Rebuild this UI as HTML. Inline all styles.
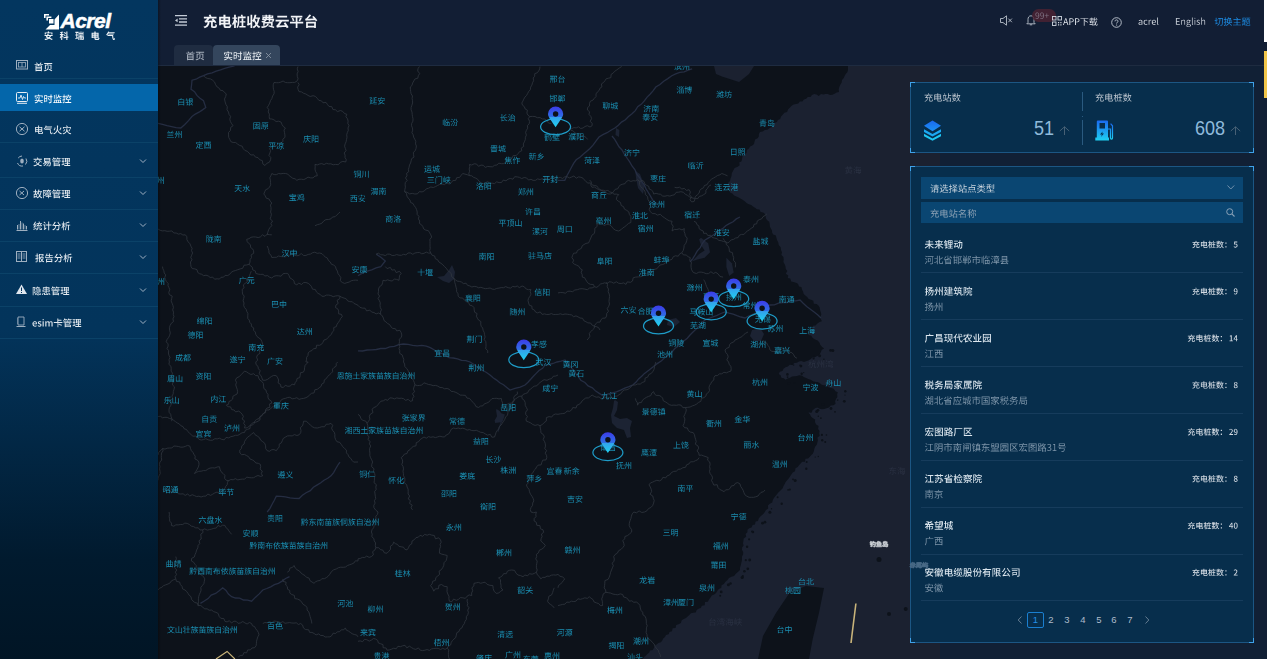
<!DOCTYPE html>
<html><head><meta charset="utf-8">
<style>
*{margin:0;padding:0;box-sizing:border-box}
html,body{width:1267px;height:659px;overflow:hidden;background:#112035;font-family:"Liberation Sans",sans-serif}
.abs{position:absolute}
#side{position:absolute;left:0;top:0;width:158px;height:659px;background:linear-gradient(to bottom,#03365f 0px,#03345b 330px,#011a2e 560px,#011525 659px)}
.sep{position:absolute;left:0;width:158px;height:1px;background:#0b4268}
#hdr{position:absolute;left:158px;top:0;width:1109px;height:66px;background:#121e34}
#map{position:absolute;left:158px;top:66px;width:782px;height:593px;background:#0d121a;overflow:hidden}
.panel{position:absolute;background:#072e4c;border:1px solid #1c5683}
.cn{position:absolute;width:5px;height:5px;border:0 solid #3fa2ea}
</style></head><body>
<svg width="0" height="0" style="position:absolute"><defs><path id="r767d" d="M22 -42l0 2-2 4 0 2-13 0 0 38 4 0 0-4 28 0 0 4 4 0 0-38-19 0 0-2 1-2 1-1 1-2zM11 -3l0-12 28 0 0 12zM11 -19l0-11 28 0 0 11z"/><path id="r94f6" d="M41 -27l0 6-14 0 0-6zM41 -30l-14 0 0-6 14 0zM23 4l1 0 0-1 2 0 2-1 3-1 5-1 0-3-9 2 0-17 4 0 2 5 6 12 3 2 4 3 2-4-1-1-4-2-3-3-1-2 2-1 1-1 4-2 2-2-3-2-1 1-2 1-3 3-2 1 0-2-3-6 11 0 0-22-22 0 0 40-2 1zM9 -42l-1 2-1 3-2 4-3 3 2 4 1-2 1-1 2-4 12 0 0-3-10 0 1-3 1-2zM10 4l0-1 1 0 1-1 2-1 3-2 4-2 0-3-7 3 0-11 7 0 0-3-7 0 0-7 6 0 0-3-14 0 0 3 4 0 0 7-7 0 0 3 7 0 0 11-1 2-1 1z"/><path id="r5170" d="M11 -40l1 1 1 2 2 2 1 2 0 2 4-2-1-2-1-1-1-2-2-2-1-2zM7 -17l0 4 35 0 0-4zM3 -2l0 3 44 0 0-3zM5 -31l0 4 40 0 0-4-12 0 1-1 2-4 2-1 2-4-4-1-4 8-3 3z"/><path id="r5dde" d="M12 -41l0 20-1 5-1 4-1 5-6 8 3 3 3-4 3-5 2-5 1-5 0-5 1-6 0-15zM26 -40l0 41 4 0 0-41zM41 -41l0 44 4 0 0-44zM6 -30l0 3-2 4 0 3-1 2-2 2 4 1 2-4 1-3 0-2 1-2 0-3zM17 -28l1 2 0 3 2 4 0 2 1 2 3-1 0-2-2-4 0-3-2-4zM31 -28l2 4 1 3 2 4 0 2 4-2-6-12z"/><path id="r5b9a" d="M11 -19l0 4-1 4-2 4-6 9 3 2 3-3 4-8 3 4 6 4 4 1 5 1 17 0 0-2 1-2-21 0 0-10 15 0 0-4-15 0 0-8 13 0 0-4-29 0 0 4 12 0 0 21-4-2-1-2-2-1-1-3-1-2 0-2 1-2 0-2zM21 -41l2 2 1 3-20 0 0 11 4 0 0-8 34 0 0 8 4 0 0-11-18 0-3-6z"/><path id="r897f" d="M3 -39l0 4 15 0 0 7-12 0 0 32 3 0 0-3 32 0 0 3 4 0 0-32-13 0 0-7 15 0 0-4zM9 -3l0-9 3 2 3-2 4-4 2-6 0-2 7 0 0 8 1 2 0 1 1 1 1 0 3 1 7 0 0 8zM9 -12l0-12 9 0-1 2 0 2-1 2-4 4zM21 -28l0-7 7 0 0 7zM32 -24l9 0 0 9-7 0-2-1z"/><path id="r56fa" d="M18 -16l14 0 0 7-14 0zM15 -19l0 13 21 0 0-13-9 0 0-6 12 0 0-3-12 0 0-6-4 0 0 6-12 0 0 3 12 0 0 6zM4 -40l0 44 4 0 0-2 34 0 0 2 4 0 0-44zM8 -2l0-34 34 0 0 34z"/><path id="r539f" d="M18 -20l21 0 0 5-21 0zM18 -28l21 0 0 5-21 0zM35 -8l2 1 1 2 2 2 1 2 3 3 3-2-3-3-1-2-2-1-2-2-1-2zM19 -10l-3 3-1 2-5 5 3 2 5-5 1-2 2-2 1-2zM7 -39l0 14-1 4 0 9-1 5-1 4-2 4 3 2 2-4 3-15 0-20 37 0 0-3zM26 -35l0 2-1 2-10 0 0 19 12 0 0 12-1 1-6 0 1 3 6 0 2-1 1-1 1-2 0-12 12 0 0-19-14 0 2-4z"/><path id="r5e73" d="M9 -32l2 4 0 3 1 2 1 1 0 2 4-1-1-2 0-2-3-6-1-1zM38 -33l-6 12 4 1 1-1 3-6 1-3 1-2zM3 -17l0 3 20 0 0 18 4 0 0-18 20 0 0-3-20 0 0-18 18 0 0-4-40 0 0 4 18 0 0 18z"/><path id="r51c9" d="M22 -25l17 0 0 7-17 0zM20 -12l-3 6-2 2-1 2-1 1 3 2 1-1 1-2 2-2 1-2 1-3 1-2zM37 -11l1 2 2 2 4 8 3-2-1-2-1-1-3-6-2-2zM2 -38l2 2 3 6 1 3 1 1 3-2 0-1-1-3-1-2-2-2-2-4zM2 0l4 1 1-2 2-6 2-3 2-6-3-1-2 3-2 6-2 3-1 2zM27 -41l1 2 1 3-14 0 0 3 31 0 0-3-13 0 0-2-2-4zM18 -29l0 14 11 0 0 15-1 0-2 1-2 0-2-1 1 4 6 0 2-1 1-1 1-2 0-15 10 0 0-14z"/><path id="r5e86" d="M23 -41l2 4 1 1-20 0 0 22-3 12-2 4 4 2 1-4 2-5 1-4 0-9 1-4 0-10 38 0 0-4-18 0 0-1-1-2-3-3zM27 -31l0 6-1 3-14 0 0 3 14 0-1 4-2 4-2 3-3 4-3 3-5 2 2 1 1 2 4-2 6-6 2-3 2-4 2-3 2 4 2 3 9 9 3 2 2-2 1-2-4-2-3-2-3-3-6-8-2-4 17 0 0-3-17 0 1-2 0-7z"/><path id="r9633" d="M23 -39l0 43 4 0 0-4 15 0 0 3 3 0 0-42zM27 -4l0-14 15 0 0 14zM27 -22l0-13 15 0 0 13zM4 -40l0 44 4 0 0-41 8 0-6 12 5 5 1 2 0 5-1 1-2 1-4 0 1 3 4 0 4-1 1-1 1-2 0-4-1-2 0-2-1-2-4-4 6-12-2-2z"/><path id="r5929" d="M3 -23l0 4 19 0-1 4-2 3-3 4-3 3-5 3-6 3 3 3 10-6 4-3 3-4 2-3 1-4 2 5 3 4 3 3 8 6 5 2 2-4-5-1-4-3-3-3-4-3-2-4-2-5 19 0 0-4-21 0 1-2 0-9 18 0 0-4-40 0 0 4 18 0 0 9-1 2z"/><path id="r6c34" d="M4 -29l0 4 12 0-2 4-1 5-3 4-2 3-3 3-3 2 3 3 3-3 4-3 2-5 3-5 2-5 1-6-2-1zM41 -33l-1 2-4 4-1 2-2 2-2 1-1-1-1-2 0-1-2-4 0-12-4 0 0 41-1 1-6 0 1 2 0 2 7 0 3-3 0-23 3 4 2 4 3 4 4 4 3 2 4 3 1-2 2-2-3-1-6-4-2-3-3-3-2-3 2-1 8-8 1-2z"/><path id="r5b9d" d="M31 -9l1 2 2 1 5 5 2-3-4-4-4-2zM22 -42l0 2 2 4-20 0 0 11 4 0 0-7 34 0 0 6-34 0 0 4 15 0 0 7-14 0 0 4 14 0 0 10-20 0 0 4 44 0 0-4-20 0 0-10 14 0 0-4-14 0 0-7 15 0 0-3 4 0 0-11-18 0 0-2-2-2-1-2z"/><path id="r9e21" d="M21 -9l0 3 19 0 0-3zM29 -30l2 1 4 4 2-2-2-2-2-1-2-2zM3 -28l2 2 2 4 2 2 2 4-1 3-2 3-1 2-4 4-2 1 3 3 5-5 1-2 2-3 1-2 2 4 1 1 1 2 3-3-1-1-1-2-1-1-2-4 4-12 1-4 0-4-17 0 0 3 13 0 0 5-2 4 0 2-1 2-1-1-1-2-3-3-1-2-1-1zM33 -37l1-2 1-3-4 0 0 2-1 3-7 0 0 23 20 0 0 8-1 2 0 3-2 2-2 0-4-1 1 4 6 0 2-1 2-2 0-1 1-3 0-7 1-5 0-2-20 0 0-17 13 0 0 6-1 2 0 2-2 1-4 0 1 3 5 0 3-1 0-3 1-2 0-6 1-4 0-1z"/><path id="r5ef6" d="M22 -28l0 22 25 0 0-4-11 0 0-12 11 0 0-4-11 0 0-10 3-1 2 0 2-1 2 0 2-1-3-3-3 1-12 3-5 0-4 1 1 3 4 0 2-1 4 0 1-1 0 26-7 0 0-18zM5 -20l1-1 8 0 0 2-1 2 0 2-2 4 0 2-1-2-1-1-1-2-1-1 0-2-3 1 1 2 0 2 1 2 1 1 1 2 1 1-1 2-6 6 2 2 4-2 1-2 3-3 2 2 4 1 3 2 4 0 4 1 18 0 0-2 1-2-22 0-4-1-6-2-3-2 1-3 1-2 3-9 0-4-9 0 2-2 1-2 1-3 1-2 2-2 1-3-2-1-13 0 0 4 10 0-1 2-2 3-1 2-2 2-1 2-2 1z"/><path id="r5b89" d="M21 -41l1 2 1 3-18 0 0 10 3 0 0-7 33 0 0 7 4 0 0-10-18 0 0-2-2-4zM33 -19l-3 6-1 1-1 2-2 1-2-1-1 0-4-2-2 0-1-1 0-1 1-2 1-1 1-2zM15 -19l-1 2-1 1-1 2-1 1-1 2 2 1 2 0 4 2 3 1 2 1-3 1-3 2-9 3-4 0 2 4 12-3 9-6 3 2 3 1 3 2 2 1 3 1 2 2 3-4-2-1-3-1-2-1-3-2-6-2 1-2 2-2 4-8 10 0 0-3-25 0 0-2 3-6-4-1-1 2 0 2-1 1-2 4-14 0 0 3z"/><path id="r4e34" d="M4 -36l0 33 4 0 0-33zM13 -41l0 45 3 0 0-45zM29 -28l2 1 4 4 2 1 1 1 2-2-1-2-2-1-2-2-2-1-1-2zM26 -42l-2 6-1 4-2 2-2 3-2 2 4 3 1-2 1-1 4-8 21 0 0-3-20 0 1-2 0-2 1-2zM32 -2l-7 0 0-13 7 0zM36 -2l0-13 6 0 0 13zM21 -19l0 23 4 0 0-3 17 0 0 3 4 0 0-23z"/><path id="r6c7e" d="M5 -39l1 1 8 4 1 1 2-3-1-1-2-1-2 0-2-1-1-1-2-1zM2 -25l4 2 2 2 4 2 2-3-4-2-2-2-4-2zM4 1l3 2 1-2 4-6 1-3 2-2 1-3-3-3-1 3-2 3-1 3-4 6zM38 -41l-4 1 1 4 4 8 4 6 3 3 1-2 1-1-2-3-2-2-4-6zM26 -41l-1 4-2 4-1 3-2 3-5 5 3 3 2-2 0 2 6 0 0 5-1 4-2 3-2 4-2 2-4 2 3 3 3-2 3-3 4-8 2-10 9 0-1 6 0 8-1 2 0 2-1 1-7 0 1 4 6 0 2-1 2-2 1-2 0-3 1-4 0-14-21 0 2-3 2-2 2-6 2-4 1-3z"/><path id="r957f" d="M38 -41l-2 3-9 6-4 2-3 2 3 3 3-2 4-2 3-2 3-3 4-2 2-3zM3 -22l0 3 9 0 0 18-2 1 2 4 1-1 1 0 2-1 3-1 4-1 6-1-1-4-12 3 0-17 8 0 2 5 3 5 4 3 3 4 5 2 5 3 2-4-8-4-4-3-3-3-3-4-2-4 19 0 0-3-31 0 0-20-4 0 0 20z"/><path id="r6cbb" d="M5 -39l2 1 2 2 6 3 2-3-10-5zM2 -25l8 4 1 1 2-3-1-1-8-4zM3 1l3 2 2-2 2-3 1-3 2-2 1-3 2-3-3-2-2 3-1 3-2 2-2 3-1 3zM18 -16l0 20 4 0 0-2 18 0 0 2 4 0 0-20zM22 -2l0-11 18 0 0 11zM17 -20l1 0 1-1 7 0 7-1 9 0 1 1 1 2 3-2-1-2-1-3-2-2-2-3-2-2-2-3-3 2 1 2 3 3 1 2 1 1-19 1 2-2 2-3 2-2 1-3 4-6-4-1-4 6-1 3-2 3-1 2-3 3-2 1z"/><path id="r664b" d="M7 -34l2 2 2 4 0 2 4-1-4-8zM39 -35l0 1-3 6-1 1 3 1 1-1 1-2 1-1 2-4zM13 -7l24 0 0 5-24 0zM13 -10l0-5 24 0 0 5zM9 -18l0 22 4 0 0-2 24 0 0 2 4 0 0-22zM3 -25l0 4 44 0 0-4-15 0 0-12 13 0 0-3-39 0 0 3 12 0 0 12zM22 -37l6 0 0 12-6 0z"/><path id="r57ce" d="M2 -6l1 3 2-1 3 0 4-2 3-1 2-1-1-4-5 2 0-16 5 0 0-4-5 0 0-11-3 0 0 11-5 0 0 4 5 0 0 18-2 0zM43 -25l0 2-2 4 0 2-2 4-1-2 0-6-1-3 0-7 11 0 0-3-4 0 2-2-1-1-1-2-2-1-2-2-2 2 2 1 1 2 2 1 1 2-7 0 0-8-4 0 1 8-16 0 0 22-1 4-1 3-1 4-2 3 3 2 2-3 2-4 1-4 0-4 1-4 0-6 6 0 0 12-2 2-2 0-2-1 1 4 5 0 2-2 0-1 1-1 0-16-9 0 0-7 12 0 0 12 1 4 0 4 1 3-1 2-2 1-1 2-2 2-4 2 3 3 4-4 2-1 1-2 1-1 1 3 1 2 2 1 1 1 2 1 1-1 1 0 1-2 1-1 0-6-2-2 0 3-1 2 0 3-2 0-1-1-2-4 0-3 1-2 2-3 1-2 2-6 1-4z"/><path id="r7126" d="M17 -6l1 3 0 7 4-1 0-2-1-2 0-5zM27 -6l3 6 0 4 4-1 0-2-1-2 0-2-1-1-1-2zM38 -6l1 2 1 1 1 2 2 2 0 2 1 1 4-1-1-2-1-1-2-4-3-3zM8 -7l0 2-1 2-2 2-2 4 3 1 3-3 1-2 1-1 0-2 1-2zM24 -41l2 2 1 2 0 2-12 0 3-6-4-1-1 3-6 9-5 5 1 1 2 1 3-3 1-2 0 21 4 0 0-2 32 0 0-3-15 0 0-5 13 0 0-3-13 0 0-4 13 0 0-3-13 0 0-5 16 0 0-3-16 0 1 0 0-2-2-4-1-1zM26 -24l0 4-13 0 0-4zM26 -27l-13 0 0-5 13 0zM26 -17l0 5-13 0 0-5z"/><path id="r4f5c" d="M26 -41l-1 3-2 4-1 3-2 3-3 3-2 3 3 2 4-4 3-6 4 0 0 34 4 0 0-12 15 0 0-4-15 0 0-7 14 0 0-4-14 0 0-7 15 0 0-4-21 0 1-1 1-2 0-2 1-1zM14 -42l-1 4-2 4-2 3-2 4-5 5 2 4 4-4 1-2 0 28 4 0 0-34 1-2 1-1 0-2 3-6z"/><path id="r65b0" d="M18 -11l1 2 1 3 1 2 1 1 3-1-4-8zM7 -12l-3 6-1 1-1 2 3 1 1-1 4-8zM28 -37l0 20-1 4 0 4-1 4-1 3-2 3 3 3 2-4 3-12 0-10 8 0 0 26 3 0 0-26 6 0 0-3-17 0 0-10 3 0 3-1 2 0 3-1 2-1 2 0-3-3-2 1-2 0-6 2-2 0zM11 -41l2 4-10 0 0 3 22 0 0-3-8 0-1-2-1-1-1-2zM19 -33l-1 2 0 2-2 4-14 0 0 3 11 0 0 5-11 0 0 3 11 0 0 13-1 1-4 0 1 3 4 0 1-1 2-1 0-15 9 0 0-3-9 0 0-5 10 0 0-3-6 0 0-2 2-4 0-2zM6 -33l1 3 1 2 0 3 4-1-1-2-1-3-1-2z"/><path id="r4e61" d="M40 -23l0 2-1 1-1 2-21 2 4-3 8-4 4-3 3-3 4-3-3-2-2 1-1 1-2 1-1 2-16 1 3-2 8-8 3-2-4-2-2 3-3 2-2 2-3 2-1 2-6 3 1 4 1 0 1-1 9 0 6-1-3 2-2 1-3 2-2 1-2 2-3 1-2 1-1 0-2 1 2 3 2 0 3-1 5 0 7-1 11 0-4 3-10 6-5 2-7 2-6 1 2 4 9-2 8-3 7-3 6-5 5-6 4-6z"/><path id="r8fd0" d="M19 -39l0 4 25 0 0-4zM3 -37l2 1 2 2 2 1 3 3 3-3-2-1-3-3-4-2zM19 -6l1 0 1-1 6 0 6-1 8 0 2 3 4-1-2-3-1-2-2-3-1-2-2-3-1-3-4 2 1 1 3 6 1 1-16 2 1-2 2-3 2-4 1-3 1-2 18 0 0-3-32 0 0 3 10 0-1 3-3 6-2 2-1 2-2 1zM13 -24l-11 0 0 3 7 0 0 16-1 1-2 1-1 1-2 1-1 2 2 3 6-6 2 0 2 1 2 2 2 1 2 0 2 1 5 0 3 1 3 0 3-1 11 0 1-2 0-2-5 0-4 1-14 0-2-1-3 0-1-1-2-1-3-1-1-1z"/><path id="r4e09" d="M6 -37l0 4 38 0 0-4zM9 -21l0 4 31 0 0-4zM3 -3l0 3 44 0 0-3z"/><path id="r95e8" d="M6 -40l2 1 2 4 2 1 1 2 0 1 3-2 0-1-1-2-2-1-2-4-2-1zM5 -32l0 36 3 0 0-36zM18 -40l0 3 24 0 0 36-2 1-8 0 2 4 8 0 1-1 2-1 0-1 1-2 0-39z"/><path id="r5ce1" d="M22 -28l1 1 2 4 0 4 3-1 0-4-2-4-1-1zM42 -30l0 2-4 8 3 1 5-10zM4 -4l12-2 0 3 3 0 0-30-3 0 0 24-3 1 0-34-3 0 0 34-3 0 0-25-3 0zM32 -42l0 7-11 0 0 4 11 0 0 9-1 2 0 2-11 0 0 3 10 0 0 3-4 6-5 5-3 2 2 3 3-2 3-3 3-2 2-3 2-6 2 4 2 3 2 2 2 3 2 2 3 2 1-2 1-1-2-2-3-2-2-2-4-6-1-4 12 0 0-3-13 0 0-13 12 0 0-4-12 0 0-7z"/><path id="r6d1b" d="M3 1l4 2 2-4 2-3 1-3 1-2 1-3-3-2-1 3-1 2-2 3-1 3-1 2zM5 -39l4 2 3 3 2 1 2-3-2-1-3-3-4-2zM2 -25l8 4 1 1 2-3-1-1-8-4zM26 -42l-4 6-1 3-7 7 3 3 1-2 2-1 1-2 2-2 1 2 1 1 1 2 3 3-3 1-2 2-2 1-6 2-2 1 2 3 4-2 0 18 4 0 0-2 16 0 0 2 3 0 0-18 3 1 3-3-6-2-2-1-3-1-2-1-2-2 2-1 2-2 1-2 1-3 2-2 1-3-3-1-13 0 2-4zM24 -1l0-10 16 0 0 10zM22 -14l2-1 1-1 2-1 1-1 2-1 1-1 2 1 1 1 6 3 1 1zM38 -33l-1 2-3 3-1 2-2 1-4-4-2-4z"/><path id="r90d1" d="M7 -40l1 1 3 6 3-1 0-2-1-2-2-2-1-2zM22 -42l0 2-4 8-14 0 0 3 11 0 0 7-1 3-11 0 0 3 11 0-2 6-4 6-6 6 3 2 3-2 2-3 2-2 1-2 2-3 1-2 2 2 1 2 2 2 2 1 2 4 3-3-5-5-2-3-4-4 1-2 11 0 0-3-11 0 0-10 10 0 0-3-6 0 2-4 1-3 1-2zM31 -39l0 43 3 0 0-40 9 0 0 2-1 3-2 4-1 3-1 2 2 2 1 2 2 2 0 2 1 1 0 5-1 1-3 1-3 0 0 1 1 2 4 0 3-1 1-1 1-2 1-1 0-4-4-8-3-3 2-2 1-3 1-2 1-3 1-2 1-3-2-2-1 1z"/><path id="r5f00" d="M32 -35l0 14-14 0 0-14zM3 -21l0 4 11 0 0 3-1 3-2 4-2 3-3 3-3 2 1 2 2 1 4-3 3-3 4-8 1-3 0-4 14 0 0 21 4 0 0-21 11 0 0-4-11 0 0-14 10 0 0-4-42 0 0 4 11 0 0 14z"/><path id="r5c01" d="M28 -21l1 2 0 2 3 6 0 2 4-2-1-1 0-2-4-8zM39 -42l0 12-13 0 0 3 13 0 0 26-1 1-7 0 2 4 7 0 2-2 1-3 0-26 5 0 0-3-5 0 0-12zM12 -42l0 6-8 0 0 4 8 0 0 7-10 0 0 3 23 0 0-3-9 0 0-7 8 0 0-4-8 0 0-6zM2 -2l0 4 4-1 3 0 8-2 5 0 4-1 0-4-10 2 0-7 8 0 0-4-8 0 0-6-4 0 0 6-9 0 0 4 9 0 0 8z"/><path id="r94dc" d="M28 -31l0 3 13 0 0-3zM22 -40l0 44 3 0 0-40 18 0 0 35-1 1-5 0 1 4 5 0 2-1 1-1 1-3 0-39zM32 -20l5 0 0 9-5 0zM29 -23l0 18 3 0 0-3 8 0 0-15zM9 -42l-1 2-1 3-2 4-3 3 2 4 1-2 1-1 1-2 2-2 11 0 0-3-10 0 1-3 1-2zM3 -17l0 3 7 0 0 10-1 3-2 2 2 3 0-1 1 0 1-1 2-1 3-2 4-2-1-3-6 3 0-11 7 0 0-3-7 0 0-7 7 0 0-3-15 0 0 3 5 0 0 7z"/><path id="r5ddd" d="M8 -39l0 25-2 8-2 4-3 4 2 1 1 1 3-3 2-5 2-4 0-5 1-4 0-22zM24 -37l0 37 4 0 0-37zM41 -39l0 43 4 0 0-43z"/><path id="r6e2d" d="M17 -40l0 16 29 0 0-16zM4 -39l2 1 2 2 4 2 1 1 3-3-10-5zM2 -25l6 3 2 2 2 1 2-3-2-2-8-4zM3 1l3 2 2-2 2-3 1-2 2-3 1-3 2-3-3-2-2 3-1 3-2 3-2 2-1 3zM23 -11l17 0 0 4-17 0zM23 -14l0-3 17 0 0 3zM19 -20l0 24 4 0 0-8 17 0 0 4-6 0 1 4 3 0 2-1 2 0 1-1 1-2 0-20zM21 -30l9 0 0 4-9 0zM33 -30l9 0 0 4-9 0zM21 -37l9 0 0 4-9 0zM33 -37l9 0 0 4-9 0z"/><path id="r5357" d="M16 -23l3 6 3-1-3-6zM23 -42l0 5-20 0 0 4 20 0 0 5-17 0 0 32 4 0 0-29 31 0 0 25-2 1-7 0 2 3 7 0 1-1 2-1 0-30-17 0 0-5 20 0 0-4-20 0 0-5zM31 -24l-1 2 0 2-1 1-1 2-15 0 0 3 10 0 0 5-11 0 0 3 11 0 0 9 4 0 0-9 11 0 0-3-11 0 0-5 10 0 0-3-6 0 3-6z"/><path id="r8bb8" d="M6 -38l2 1 1 2 5 5 2-3-3-3-1-2-2-1-2-2zM18 -18l0 3 13 0 0 19 4 0 0-19 13 0 0-3-13 0 0-12 11 0 0-4-20 0 1-2 0-2 1-2 0-1-4-1 0 3-1 4-2 6-2 2-1 3 3 1 1-1 3-6 6 0 0 12zM10 2l1 0 0-1 2 0 1-2 6-4-1-3-5 4 0-22-12 0 0 3 8 0 0 21-2 1z"/><path id="r660c" d="M14 -30l22 0 0 5-22 0zM14 -37l22 0 0 5-22 0zM10 -40l0 18 30 0 0-18zM10 -7l30 0 0 5-30 0zM10 -10l0-5 30 0 0 5zM6 -18l0 22 4 0 0-2 30 0 0 2 4 0 0-22z"/><path id="r90a2" d="M19 -35l0 13-7 0 0-13zM3 -22l0 4 5 0 0 7-1 3-1 4-4 6 3 2 2-3 2-4 1-3 2-8 0-4 7 0 0 22 4 0 0-22 6 0 0-4-6 0 0-13 5 0 0-4-25 0 0 4 5 0 0 13zM30 -39l0 43 4 0 0-39 9 0-3 6-1 3-2 4 4 4 3 6 0 2-1 2-1 1-2 1-4 0 0 2 1 2 4 0 4-2 2-2 0-8-2-4-4-4 1-3 1-2 1-3 2-2 1-3 1-2-3-2z"/><path id="r53f0" d="M9 -17l0 21 4 0 0-3 24 0 0 3 4 0 0-21zM13 -2l0-12 24 0 0 12zM6 -21l1-1 6 0 6-1 9 0 12-1 2 3 1 2 3-3-1-2-5-5-2-3-3-2-2-2-3 2 1 1 2 1 1 2 2 1 1 2-25 1 4-4 2-3 2-2 4-6-3-1-2 3-3 3-2 3-7 7-2 1z"/><path id="r90af" d="M21 -42l0 9-11 0 0-9-4 0 0 9-4 0 0 3 4 0 0 33 4 0 0-5 11 0 0 4 3 0 0-32 4 0 0-3-4 0 0-9zM10 -30l11 0 0 10-11 0zM10 -16l11 0 0 11-11 0zM34 -7l0-29 9 0-2 4-1 3-1 2-2 2-1 3 3 2 2 2 2 4 1 1 0 2-2 4zM30 -39l0 43 4 0 0-11 1 4 6 0 2-1 2 0 1-1 1-2 0-7-2-4-2-3-3-2 2-2 1-3 1-2 2-3 1-2 1-3-3-2 0 1z"/><path id="r90f8" d="M6 -40l2 2 3 6 3-2-3-6-2-2zM32 -39l0 43 3 0 0-40 8 0-1 2-1 3-3 6-1 3 4 4 2 4 0 5-1 2-6 0 1 4 4 0 3-1 2-2 1-2 0-5-1-1 0-2-1-2-2-3-2-2 1-2 1-3 1-2 1-3 2-2 0-3-2-2-1 1zM8 -21l6 0 0 5-6 0zM18 -21l6 0 0 5-6 0zM8 -28l6 0 0 4-6 0zM18 -28l6 0 0 4-6 0zM23 -42l-3 6 0 1-2 4-13 0 0 18 9 0 0 4-12 0 0 4 12 0 0 9 4 0 0-9 12 0 0-4-12 0 0-4 10 0 0-18-7 0 5-10z"/><path id="r9e64" d="M32 -31l2 2 1 2 2 2 2-2-1-2-2-2-2-1zM26 -9l0 3 15 0 0-3zM36 -37l2-4-4-1-1 2 0 3-5 0 0 23 16 0-1 4 0 8-1 2-2 1-5 0 1 3 6 0 1-1 2-1 0-1 1-1 0-6 1-4 0-7-16 0 0-17 11 0 0 3-1 3 0 4-2 1-4 0 1 3 5 0 2-1 1-1 0-4 1-2 0-9zM15 -14l0 5-6 0 0-5zM14 -29l2 4-6 0 1-2 1-1 1-2 0-2 1-2 8 0 0 6 3 0 0-9-10 0 1-2 0-3-3 0 0 2-1 2 0 1-8 0 0 9 3 0 0-6 4 0-1 3-2 3-1 3-2 2-1 2-2 2 1 3 2-1 1-1 0 22 3 0 0-2 16 0 0-3-7 0 0-5 6 0 0-3-6 0 0-5 6 0 0-3-6 0 0-5 7 0 0-3-6 0-1-2 0-2-1-1zM15 -17l-6 0 0-5 6 0zM15 -6l0 5-6 0 0-5z"/><path id="r58c1" d="M10 -23l10 0 0 5-10 0zM33 -41l1 3-9 0 0 3 6 0-3 0 1 3 1 2-6 0 0 4 10 0 0 4-9 0 0 3 9 0 0 5 3 0 0-5 10 0 0-3-10 0 0-4 11 0 0-4-7 0 1-1 1-2 0-2-3 0 0 2-1 2-1 1-6 0 1 0 0-2-1-1-1-2 15 0 0-3-8 0-2-4zM5 -40l0 13-1 3 0 3-2 4 2 3 3-6 0-2 0 7 16 0 0-11-15 0 0-3 15 0 0-11zM8 -37l11 0 0 5-11 0zM23 -14l0 4-15 0 0 4 15 0 0 5-21 0 0 4 46 0 0-4-21 0 0-5 16 0 0-4-16 0 0-4z"/><path id="r6ee8" d="M3 1l3 2 1-2 2-3 2-6 1-2 1-3-3-2-2 6-2 3-1 2-1 3zM4 -39l2 2 6 3 1 2 2-3-1-2-8-4zM2 -25l6 3 1 1 2 1 2-3-2-1-1-1-6-3zM35 -4l2 1 2 2 4 2 1 2 1 1 3-3-1-1-4-2-3-3-2-1zM26 -6l-4 2-2 2-6 3 2 3 4-2 3-2 2-1 2-2 2-1zM28 -41l2 4-13 0 0 9 3 0 0-6 23 0 0 6 3 0 0-9-12 0 0-1-2-4zM34 -10l-9 0 0-8 9 0zM41 -31l-3 1-3 0-3 1-11 0 0 19-6 0 0 3 32 0 0-3-9 0 0-8 6 0 0-3-19 0 0-5 9 0 3-1 3 0 3-1z"/><path id="r6dc4" d="M22 -42l0 2-3 3-2 4-1 1 2 4 2 2 2 4 1 1 3-1-1-1-2-4-1-1-1-2-2-2 2-1 2-4 2-2 1-2zM32 -42l0 2-3 3-1 2-1 1-1 2 1 2 2 2 3 6 1 1 3-1 0-2-3-3-1-2-1-1-1-2 1-2 1-1 1-2 2-2 1-2zM43 -42l-1 2-3 3-2 4-2 1 4 4 1 2 2 2 1 2 1 1 3-1-1-2-1-1-1-2-2-1-2-4 1-2 3-3 2-4zM4 -39l4 2 2 2 2 1 1 1 3-3-6-3-2-2-2-1zM2 -25l8 4 1 1 2-3-1-1-8-4zM4 1l3 2 1-2 2-3 1-3 2-2 2-6-2-2-2 3-1 3-2 2-2 3-1 3zM21 -8l9 0 0 7-9 0zM21 -11l0-6 9 0 0 6zM42 -8l0 7-9 0 0-7zM42 -11l-9 0 0-6 9 0zM18 -20l0 24 3 0 0-2 21 0 0 2 4 0 0-24z"/><path id="r535a" d="M21 -6l2 2 1 2 2 1 1 2 3-2-1-2-2-1-4-4zM20 -31l0 17 3 0 0-3 7 0 0 3 4 0 0-3 8 0 0 3 3 0 0-17-11 0 0-3 14 0 0-3-4 0 1-1-1-1-6-3-1 2 4 2 1 1-8 0 0-5-4 0 0 5-13 0 0 3 13 0 0 3zM30 -22l0 2-7 0 0-2zM34 -22l8 0 0 2-8 0zM30 -25l-7 0 0-3 7 0zM34 -25l0-3 8 0 0 3zM37 -15l0 4-22 0 0 3 22 0 0 8-1 1-6 0 1 3 6 0 2-1 1-1 0-10 8 0 0-3-8 0 0-4zM8 -42l0 13-6 0 0 4 6 0 0 29 4 0 0-29 6 0 0-4-6 0 0-13z"/><path id="r6f4d" d="M37 -39l2 4 1 1 0 2 3-1 0-2-2-4-1-1zM11 -3l1 3 2 0 2-1 3-1 2 0 3-1 2-1 0-3-6 2-2 0-3 1-2 0zM3 -39l2 1 1 2 2 2 1 2 3-2-1-2-5-5zM2 -26l2 2 1 2 2 1 1 2 3-2-1-2-2-1-4-4zM2 1l4 2 1-3 1-2 2-6 1-2 1-3-3-2-3 9-1 2-2 3zM31 -19l7 0 0 7-7 0zM31 -22l0-6 7 0 0 6zM31 -9l7 0 0 7-7 0zM32 -42l-1 3-1 4-2 3-1 3-2 3-2 2 2 3 2-2 1-2 0 29 3 0 0-3 17 0 0-3-7 0 0-7 6 0 0-3-6 0 0-7 6 0 0-3-6 0 0-6 7 0 0-4-16 0 0-2 1-1 1-2 0-2 1-2zM13 -23l1-1 5 0-3 6-1 1-2 3-1 1 1 3 1-1 2 0 2-1 3 0 4-1 0-3-8 1 2-2 1-3 2-2 1-3 2-3 1-3-3-1-2 4-5 1 2-4 1-3 2-4 1-3-3-1-2 6-3 6 0 1-1 2-1 1z"/><path id="r574a" d="M30 -41l2 4 0 2 1 1 3-1 0-1-1-2 0-2-1-2zM18 -33l0 3 9 0 0 11-2 8-2 5-4 4-4 3 3 3 4-3 3-4 4-8 1-3 0-4 11 0 0 13-1 2 0 2-1 1-8 0 0 2 1 2 7 0 2-1 2-2 1-2 0-3 1-4 0-14-14 0 0-8 17 0 0-3zM2 -7l1 4 2-1 3-1 3-2 9-3-1-3-6 2 0-15 6 0 0-3-6 0 0-12-4 0 0 12-6 0 0 3 6 0 0 16-4 2-2 0z"/><path id="r804a" d="M29 -34l0 20-1 2-4 1 0-23 8-4 2-2-3-2-2 1-2 2-6 3 0 26-1 1 1 3 1 0 1-1 2-1 3-1-3 6-3 3-3 2 3 2 4-3 3-4 1-4 2-4 0-23zM35 -37l0 41 3 0 0-38 5 0 0 26-4 0 1 3 2 0 2-1 1 0 1-1 0-30zM2 -7l0 4 12-3 0 10 3 0 0-10 2 0 0-3-2 0 0-27 3 0 0-4-18 0 0 4 3 0 0 29zM8 -36l6 0 0 7-6 0zM8 -26l6 0 0 7-6 0zM8 -16l6 0 0 7-6 1z"/><path id="r6d4e" d="M37 -16l0 19 3 0 0-19zM22 -16l0 7-1 2 0 2-2 2-6 4 3 2 6-4 2-2 2-6 0-7zM4 -39l3 2 2 1 3 3 3-3-4-2-2-2-2-1zM2 -25l2 1 1 1 4 2 1 1 2-2-1-1-1-2-6-3zM3 1l3 2 2-2 2-6 1-2 2-3 1-3-3-2-2 3-1 3-1 2-1 3-2 3zM27 -41l1 2 1 3-13 0 0 3 5 0 3 6 2 1 1 2 1 1-4 2-2 0-2 1-3 1-3 0 2 3 3 0 6-2 4-2 3-1 6 3 3 1 3 0 2 1 1-2 2-2-5 0-3-1-2-1-2 0-2-1 1-2 1-1 1-2 2-1 0-2 1-2 7 0 0-3-15 0-3-6zM37 -33l-2 4-1 1-1 2-1 1-2-1-3-3-2-4z"/><path id="r6cf0" d="M12 -11l1 1 2 1 1 2 1 1 3-2-4-4-2-1zM35 -14l-1 2-2 1-1 2-1 1-3-1 0-9-4 0 0 10-6 2-3 2-6 2-2 0 1 3 3 0 2-1 6-2 2-2 3-1 0 5-1 1-5 0 1 3 5 0 4-2 0-8 3 2 2 1 3 1 2 1 2 2 2 1 2-3-1-1-2-1-1-1-6-3 5-5zM23 -42l0 2-1 3-17 0 0 3 16 0 0 2-1 2-12 0 0 3 10 0-2 4-13 0 0 3 11 0-4 4-2 1-2 2-2 1-2 2 3 2 2-2 3-1 4-4 2-3 2-2 13 0 2 3 2 2 3 2 2 2 3 1 3 2 1-2 2-2-3 0-2-2-3-1-2-1-2-2-1-2 11 0 0-3-27 0 2-4 21 0 0-3-19 0 1-2 0-2 20 0 0-3-19 0 1-2 0-3z"/><path id="r6fee" d="M23 -39l1 2 1 1 1 2 1 1 2-1-2-4-2-2zM44 -41l-3 6-1 1 2 1 1-1 1-2 3-3zM4 -38l2 1 3 1 1 2 2 1 2-3-2-1-1-1-3-2-2-1zM2 -25l2 2 4 2 1 1 2-3-1-1-6-3zM3 1l3 2 1-2 1-3 2-3 1-2 2-6-3-2-3 9-2 3zM19 -42l-2 8-1 3-2 3-1 3-2 3 2 3 1-2 1-1 1-2 0 28 4 0 0-37 1-2 0-2 1-2 0-2zM22 -32l0 3 26 0 0-3-9 0 0-10-3 0 0 10-3 0 0-10-3 0 0 10zM24 -17l0 3 9 0 0 2-1 2-11 0 0 3 10 0 0 1-5 5-2 1-3 1 2 3 3-1 3-2 2-1 1-2 2-2 1-2 2 4 4 4 3 1 2 1 3-3-3-1-4-2-5-5 11 0 0-3-12 0 0-4 9 0 0-3-9 0 0-3 11 0 0-3-7 0 2-3 1-2-3-1-3 6-6 0 1-1 0-2-2-1-1-2-3 1 2 2 1 3-6 0 0 3 10 0 0 3z"/><path id="r5b81" d="M5 -35l0 10 4 0 0-6 32 0 0 6 4 0 0-10zM22 -41l3 6 3-1 0-2-1-2-2-2zM4 -22l0 4 19 0 0 17-1 1-9 0 2 4 7 0 1-1 1 0 2-1 1-1 0-19 20 0 0-4z"/><path id="r83cf" d="M4 -28l3 1 2 2 2 1 1 1 2-3-1-1-4-2-3-1zM2 -19l4 2 1 1 2 1 1 1 2-3-1-1-2-1-3-1-2-1zM4 1l3 3 2-4 2-2 1-3 1-2 2-2-3-3-1 3-2 2-1 2-2 3-1 2zM32 -42l0 4-14 0 0-4-3 0 0 4-12 0 0 3 12 0 0 5 3 0 0-5 14 0 0 5 3 0 0-5 12 0 0-3-12 0 0-4zM15 -28l0 3 24 0 0 24-1 1-8 0 2 4 5 0 2-1 2 0 1-1 1-3 0-24 5 0 0-3zM22 -17l9 0 0 7-9 0zM19 -20l0 17 3 0 0-3 12 0 0-14z"/><path id="r6cfd" d="M4 -39l2 2 4 2 1 2 1 1 3-2-1-2-2-1-3-3-2-1zM2 -25l4 2 1 1 2 1 1 2 3-3-1-1-4-2-2-2-2-1zM3 0l4 3 1-3 1-2 2-3 2-6 1-2-3-3-2 6-2 3-1 3-2 2zM38 -36l-1 2-1 1-2 1-3 3-2-1-1-2-2-1-1-1-1-2zM17 -39l0 3 3 0 1 2 4 4 1 2 2 1-2 1-3 1-4 2-3 1-2 0 2 3 2 0 3-1 2-1 3-1 2-2 3-1 2 1 2 2 3 1 2 1 3 1 3 0 1-1 1-2-3 0-2-1-3-1-6-3 2-2 2-1 1-2 2-2 1-2 2-2-3-2 0 1zM29 -21l0 5-11 0 0 3 11 0 0 5-14 0 0 4 14 0 0 8 4 0 0-8 14 0 0-4-14 0 0-5 11 0 0-3-11 0 0-5z"/><path id="r65e5" d="M13 -18l25 0 0 14-25 0zM13 -21l0-14 25 0 0 14zM9 -39l0 42 4 0 0-3 25 0 0 3 4 0 0-42z"/><path id="r7167" d="M26 -20l15 0 0 7-15 0zM23 -24l0 14 22 0 0-14zM17 -6l0 2 1 2 0 6 4-1 0-1-1-2 0-5-1-2zM28 -6l0 2 2 4 0 2 1 2 3-1 0-2-1-2 0-2-2-4zM38 -7l2 4 2 2 2 4 0 1 4-2-1-1-3-6-3-3zM9 -8l-3 6-3 3-1 2 4 1 1-1 5-10zM8 -36l8 0 0 8-8 0zM8 -15l0-9 8 0 0 9zM5 -40l0 31 3 0 0-2 11 0 0-29zM21 -40l0 3 9 0-1 3-1 2-3 3-2 1-3 1 2 3 3-1 3-2 4-4 1-3 0-3 9 0 0 6-1 1 0 1-7 0 1 3 6 0 3-1 1-1 0-2 1-3 0-7z"/><path id="r6c82" d="M5 -39l2 1 2 2 4 2 1 1 2-3-1-1-8-4zM2 -25l8 4 1 1 2-3-1-1-8-4zM3 1l3 2 2-2 1-3 2-3 2-2 2-6-2-2-2 3-1 3-2 2-2 3-1 3zM20 -37l0 22-2 8-4 8 3 3 3-4 1-4 2-5 1-4 0-9 11 0 0 26 4 0 0-26 9 0 0-4-24 0 0-8 4-1 4 0 8-2 6-2-3-3-3 1-4 1-3 1-4 1-5 1z"/><path id="r67a3" d="M14 -11l4 1 4 0 8 2 6 2 2-3-3-1-16-4-3 0zM9 -3l5 1 6 1 5 1 5 2 5 1 4 1 1-4-4-1-15-3-6-1-5-1zM7 -30l0 11 4 0 0-8 12 0 0 1-3 2-3 3-3 2-8 4-5 1 2 1 1 2 3-1 4-2 3-1 6-4 3-3 0 7 4 0 0-7 3 2 3 3 3 1 3 2 4 2 3 1 1-2 2-1-5-2-4-1-4-2-3-2-3-3-3-2 0-1 12 0 0 8 4 0 0-11-16 0 0-4 20 0 0-4-20 0 0-4-4 0 0 4-20 0 0 4 20 0 0 4z"/><path id="r5e84" d="M27 -30l0 10-13 0 0 4 13 0 0 15-17 0 0 3 38 0 0-3-17 0 0-15 14 0 0-4-14 0 0-10zM24 -41l2 4 0 2-20 0 0 25-1 5-1 4-2 4 3 1 2-4 1-4 2-10 0-18 37 0 0-3-20 0 3-1-3-6z"/><path id="r8fde" d="M4 -40l1 2 2 1 2 4 1 1 1 2 3-3-2-2-1-2-4-4zM12 -25l-10 0 0 3 7 0 0 16-2 1-5 5 2 4 2-2 2-3 2-2 2 1 3 3 2 1 2 0 2 1 27 0 0-2 1-2-9 0-4 1-12 0-2-1-2 0-6-3-2-2zM19 -20l1-1 11 0 0 7-15 0 0 3 15 0 0 9 4 0 0-9 12 0 0-3-12 0 0-7 10 0 0-4-10 0 0-6-4 0 0 6-8 0 1-1 2-4 0-2 1-2 19 0 0-3-17 0 1-4-4-1 0 2-1 1-1 2-8 0 0 3 7 0-1 3-3 6-1 1z"/><path id="r4e91" d="M8 -38l0 4 34 0 0-4zM7 2l1 0 2-1 9 0 9-1 12-1 2 4 1 1 3-2-1-2-4-6-2-4-2-3-3-3-3 2 1 2 1 1 1 2 1 1 1 2 1 1-25 2 2-2 10-15 23 0 0-4-44 0 0 4 15 0-1 3-4 6-1 2-2 2 0 1-4 4 0 2z"/><path id="r6e2f" d="M4 -39l6 3 3 3 2-3-1-1-2-1-2-2-4-2zM2 -25l4 2 1 1 2 1 1 1 2-3-2-2-6-3zM25 -15l11 0 0 5-11 0zM36 -42l0 6-10 0 0-6-4 0 0 6-6 0 0 3 6 0 0 6-9 0 0 4 9 0-2 4-2 1-1 2-2 1-1 2-3-2-2 6-2 3-1 2-2 3-1 2 3 2 2-2 1-2 1-3 1-2 2-3 1-3 1 2 2-1 4-4 0 15 3 3 2 0 2 1 11 0 2-1 2 0 2-2 0-5-3-1 0 2-1 2 0 1-15 0-1-1 0-6 15 0 0-9 6 6 3-3-2-1-5-5-1-2-2-2 9 0 0-4-9 0 0-6 8 0 0-3-8 0 0-6zM23 -18l2-4 1-1 10 0 0 1 2 4zM26 -33l10 0 0 6-10 0z"/><path id="r5546" d="M14 -32l3 6 3-2-1-1-2-4zM28 -20l4 2 1 2 4 2 1 2 2-3-1-1-2-1-3-3-4-2zM20 -22l-2 1-1 2-2 1-2 2-2 1 2 3 3-3 2-1 5-5zM33 -33l-1 2-1 1-2 4-23 0 0 30 4 0 0-27 31 0 0 23-1 1-7 0 1 3 5 0 2-1 1 0 2-1 0-28-11 0 1-2 2-2 1-2zM16 -14l0 14 3 0 0-2 15 0 0-12zM19 -11l12 0 0 6-12 0zM22 -41l2 4-21 0 0 4 44 0 0-4-19 0-1-1 0-2-1-2z"/><path id="r4e18" d="M39 -41l-8 2-10 2-5 0-6 1 0 34-8 0 0 3 46 0 0-3-11 0 0-18 8 0 0-4-31 0 0-9 5 0 10-2 5 0 4-1 3-1zM14 -2l0-18 19 0 0 18z"/><path id="r5f90" d="M21 -11l0 2-1 2-1 1-1 2-3 3 3 2 2-1 5-10zM38 -10l2 4 3 3 1 2 0 2 4-2-1-2-1-1-1-2-2-2-1-2-1-1zM12 -42l-1 2-2 2-1 2-2 1-2 2-2 1 2 3 2-1 6-6 2-3 2-2zM31 -42l-4 6-3 3-3 2-3 3-3 2 3 2 2-1 3-2 4-4 2-3 2-2 2 2 2 1 1 2 3 3 2 1-19 0 0 4 8 0 0 6-13 0 0 3 13 0 0 14-1 1-3 0-3-1 1 4 6 0 2-1 1-1 1-2 0-14 13 0 0-3-13 0 0-6 8 0 0-3 4 2 1-1 1-2-3-1-2-2-3-2-7-7 1-2zM13 -32l-1 3-2 2-2 3-2 2-3 2-2 2 2 3 2-1 1-1 1-2 2-1 0 24 3 0 0-28 2-2 1-2 1-1 1-2z"/><path id="r9752" d="M37 -17l0 4-23 0 0-4zM10 -20l0 24 4 0 0-8 23 0 0 4-1 1-7 0 1 3 7 0 1-1 2-1 0-22zM14 -11l23 0 0 4-23 0zM23 -42l0 3-17 0 0 3 17 0 0 4-15 0 0 3 15 0 0 3-20 0 0 3 44 0 0-3-20 0 0-3 15 0 0-3-15 0 0-4 17 0 0-3-17 0 0-3z"/><path id="r5c9b" d="M16 -29l2 0 6 3 1 1 2 1 2-3-2 0-1-1-8-4zM24 -37l1-2 2-3-5 0-1 2-1 3-11 0 0 20 33 0 0 5-1 4 0 6-1 1 0 1-6 0 0-13-4 0 0 9-9 0 0-11-3 0 0 11-9 0 0-9-3 0 0 12 24 0 0 2 2 0 1 3 6 0 4-2 1-1 0-2 1-3 0-8 1-6 0-2-33 0 0-14 24 0-1 3 0 3-1 1 0 1-5 0 0 4 5 0 3-2 1-2 0-1 1-2 0-8z"/><path id="r9647" d="M34 -38l4 2 4 4 2-2-1-2-1-1-4-2-1-1zM43 -23l-3 6-1 1-2 4 0-15 11 0 0-3-19 0 0-8 1-2 0-2-4 0 0 12-8 0 0 3 7 0 0 6-1 6-2 5-2 4-3 4-3 3 3 3 6-8 4-10 1-6 1-7 4 0 0 19-1 2-2 1-1 1-2 1-3 3 2 2 4-2 1-2 2-1 0 3 1 2 1 1 10 0 3-3 0-5-3-1 0 5-1 0-1 1-5 0-1-2 0-5 2-2 1-2 2-3 2-2 1-3 2-3zM4 -40l0 44 3 0 0-41 8 0-1 2 0 2-2 4 0 2-1 2 2 2 1 2 1 1 0 2 1 2 0 1-1 2 0 1-2 1-3 0 1 3 3 0 3-1 1-1 1-2 0-6-3-6-2-2 4-8 1-3 1-2-3-1z"/><path id="r6c49" d="M5 -39l2 1 2 2 4 2 1 1 2-3-2-1-1-1-4-2-3-1zM2 -25l6 3 3 3 2-3-3-3-6-3zM4 1l2 2 2-2 2-3 1-3 2-2 1-3 2-3-3-2-2 3-1 3-2 2-1 3-2 3zM18 -38l0 3 2 0 1 5 2 5 1 4 4 8 2 3-2 3-3 2-2 2-3 1-3 2-3 1 2 3 3-1 6-4 2-1 5-5 6 6 3 2 2 1 3 2 1-2 2-1-3-1-3-2-2-2-2-1-2-3-2-2 2-3 2-4 4-10 1-5 1-6zM24 -35l17 0-1 5-1 4-1 3-2 4-4 6-2-3-1-3-2-4z"/><path id="r4e2d" d="M23 -42l0 9-18 0 0 24 4 0 0-3 14 0 0 16 4 0 0-16 14 0 0 2 4 0 0-23-18 0 0-9zM9 -16l0-13 14 0 0 13zM41 -16l-14 0 0-13 14 0z"/><path id="r5e7f" d="M23 -41l2 4 1 3-19 0 0 21-2 8-1 3-2 4 2 1 1 1 2-3 2-4 1-5 1-4 0-19 36 0 0-3-19 0 2-1 0-1-3-6z"/><path id="r5143" d="M7 -38l0 4 36 0 0-4zM3 -24l0 4 13 0-3 12-3 4-3 3-5 2 3 3 5-3 4-3 4-8 2-10 9 0 0 20 2 2 2 1 11 0 2-2 1-2 1-3 0-4-4-2 0 8-2 2-7 0-2-1 0-19 14 0 0-4z"/><path id="r5df4" d="M23 -22l-13 0 0-13 13 0zM26 -22l0-13 13 0 0 13zM6 -39l0 33 1 3 0 3 4 2 3 1 26 0 3-1 2-1 1-2 1-3 0-4-2 0-1-1-1 3 0 2-1 2-1 1-29 0-2-2 0-15 29 0 0 3 4 0 0-24z"/><path id="r7ef5" d="M2 -3l1 4 2-1 3-1 2-1 6-2 2-1 0-3-9 3-2 1-3 1zM25 -27l17 0 0 4-17 0zM25 -34l17 0 0 4-17 0zM3 -21l1 0 0-1 4 0 3-1-2 3-1 2-6 6 1 3 1 0 1-1 2 0 2-1 4-1 5-1 0-3-9 2 2-3 2-2 1-3 2-2 2-3 1-3-3-2-3 6-6 1 2-3 1-2 2-3 1-2 1-3 2-3-4-1-1 3-2 3-1 3-2 4-4 4zM22 -37l0 17 9 0 0 4-10 0 0 16 3 0 0-13 7 0 0 17 4 0 0-17 8 0 0 9-1 1-4 0 1 3 4 0 2-1 1-1 0-14-11 0 0-4 10 0 0-17-11 0 1-2 0-3-4 0 0 2-1 3z"/><path id="r5fb7" d="M16 -15l0 3 32 0 0-3zM28 -11l2 2 2 4 3-1-2-4-2-2zM23 -8l0 7 1 2 0 1 2 1 13 0 1-2 0-2 1-2-3-1-1 3 0 1-8 0-2-1 0-7zM18 -9l0 2-4 8 3 1 4-8 0-2zM40 -8l1 2 2 2 1 2 0 2 1 2 3-2-1-1 0-2-2-2-2-4zM37 -28l6 0 0 6-6 0zM29 -28l6 0 0 6-6 0zM22 -28l5 0 0 6-5 0zM12 -42l-1 2-4 4-1 2-2 1-2 2 2 3 10-10 2-3zM30 -42l0 4-14 0 0 3 13 0 0 4-10 0 0 12 27 0 0-12-14 0 1-4 15 0 0-3-14 0 0-4zM13 -31l-2 3-1 3-2 2-2 3-2 2-3 2 2 2 1 2 1-2 4-4 0 22 3 0 0-27 1-2 2-1 1-2 0-2z"/><path id="r8fbe" d="M4 -39l1 1 1 2 3 3 0 2 1 1 4-2-1-1-1-2-2-2-1-2-2-2zM29 -42l0 10-13 0 0 4 12 0 0 4-1 4-2 3-2 4-3 3-4 2 2 3 4-2 2-2 6-9 1-3 2 3 3 2 4 6 2 2 2 3 3-3-2-2-2-3-6-6-2-3-3-3 0-3 15 0 0-4-14 0 0-10zM13 -23l-11 0 0 3 7 0 0 14-1 0-2 1-1 2-2 1-1 2 2 3 2-2 1-2 2-1 2-2 1 1 2 1 2 2 2 1 2 0 2 1 5 0 3 1 3 0 3-1 11 0 0-2 1-2-2 0-3 1-20 0-3-1-1-1-2 0-2-2-2-1z"/><path id="r5145" d="M8 -15l0-1 9 0 0 4-2 3-1 3-3 3-3 2-5 2 1 1 1 2 5-2 4-3 3-3 2-3 2-10 8 0 0 18 1 1 2 1 12 0 2-2 1-2 1-3 0-3-4-2 0 6-1 1 0 1-10 0 0-16 7-1 1 2 2 2 3-2-6-6-2-3-3-2-2-2-3 2 6 6-23 1 2-1 1-2 2-2 1-2 2-1 1-2 25 0 0-4-44 0 0 4 14 0-1 2-2 1-2 4-2 1-2 2-2 1zM21 -41l1 2 3 3 0 2 4-1-2-4-1-1-1-2z"/><path id="r6210" d="M27 -42l0 8-21 0 0 25-2 8-2 3 1 1 2 1 2-3 2-8 1-5 0-8 9 0 0 12-1 1-7 0 1 4 7 0 3-2 0-2 1-3 0-13-13 0 0-7 18 0 0 4 1 4 0 4 2 6 0 3-1 2-4 4-4 2-2 2 3 3 3-3 4-2 1-2 2-2 1 3 1 2 2 1 1 2 2 0 2 1 2-1 1 0 2-4 1-3 0-3-2-1-1-1-1 3 0 4-2 2-1-1-2-1-1-1-1-2-1-3 1-2 4-6 3-9-3-1-1 3-3 6-1 3-2 2 0-3-1-3 0-2-1-3 0-7 16 0 0-4-17 0 0-8zM34 -40l2 2 2 1 1 1 2 1 1 1 3-2-2-1-3-3-4-2z"/><path id="r90fd" d="M25 -40l0 1-2 4-1 1 0-2-6 0 0-6-4 0 0 6-8 0 0 3 8 0 0 6-10 0 0 3 12 0-6 6-2 1-3 2-2 1 2 3 2-1 2-2 0 18 4 0 0-3 11 0 0 2 4 0 0-22-12 0 2-1 1-2 2-2 9 0 0-3-6 0 3-6 2-2 2-4zM16 -33l6 0-1 2-2 1-1 2-1 1-1 0zM11 -2l0-6 11 0 0 6zM11 -11l0-5 11 0 0 5zM30 -39l0 43 4 0 0-40 9 0-1 3-2 4-1 3-2 4 4 4 3 6 0 4-4 2-4 0 1 2 0 2 2 0 3-1 1 0 2-1 2-2 0-2 1-2-1-2 0-2-2-4-4-4 1-3 1-2 2-3 1-3 1-2 1-3-3-1z"/><path id="r9042" d="M3 -38l8 8 3-2-1-1-1-2-2-1-1-2-2-1-1-1zM12 -23l-10 0 0 4 7 0 0 14-2 1-5 5 2 3 2-3 2-1 2-2 3 0 3 3 2 0 4 2 25 0 1-4-5 0-4 1-14 0-2-1-2 0-2-1-2 0-3-3-2 0zM20 -41l2 4 1 1 1 2-9 0 0 3 13 0-2 2-2 1-3 1-4 2-3 1 3 3 1-1 4-2 1-1 2 0 2-1 2 2-2 1-2 2-6 3-3 1 2 3 2-1 3-1 2-2 4-2 1-2 2 4-2 2-6 4-3 1-3 2-3 1 2 3 3-1 2-2 3-1 6-4 2-2 0 5-1 2-1 1-3 1-4 0 1 3 6 0 1-1 2-1 1-1 1-2 0-9 2 1 6 6 1 2 3-3-7-7-2-1-3-2 4-2 5-5-3-2-1 2-2 1-5 5-1-2-1-1-1-2-2-1 2-1 1-2 15 0 0-3-10 0 1-2 1-1 2-4-4-1 0 2-2 4-2 2-7 0 2-1-1-2-1-1-1-2-2-2z"/><path id="r5eb7" d="M12 -12l2 2 4 2 1 2 3-3-4-2-2-2-2-1zM40 -21l0 4-10 0 0-4zM40 -24l-10 0 0-4 10 0zM23 -41l2 1 1 2-20 0 0 23-1 5-3 12 3 2 1-4 2-5 1-4 0-10 1-4 0-11 16 0 0 4-13 0 0 2 13 0 0 4-15 0 0 3 15 0 0 4-13 0 0 3 13 0 0 5-3 2-9 3-2 1-3 1 2 3 2-1 3-1 2-1 3-1 2-1 3-2 0 6-1 1-7 0 1 3 9 0 2-4 0-9 2 3 2 2 3 2 3 1 3 2 3 1 2-3-2-1-2 0-6-3-1-1 1-1 6-3 1-1-3-3-4 4-4 2-1-2-3-3 0-1 13 0 0-7 5 0 0-3-5 0 0-6-13 0 0-4 17 0 0-4-17 0-1-1-1-2-1-1z"/><path id="r9876" d="M33 -25l0 13-2 6-2 2-4 3-5 2 2 3 6-3 4-3 4-6 1-3 0-14zM35 -4l4 2 2 2 2 1 1 2 2 1 2-3-1-1-2-1-5-5-2-1zM24 -31l0 23 3 0 0-20 15 0 0 20 4 0 0-23-11 0 1-5 12 0 0-4-26 0 0 4 10 0 0 2-1 3zM2 -38l0 3 8 0 0 32-2 2-2 0-3-1 1 2 0 2 7 0 1-1 2-1 0-35 7 0 0-3z"/><path id="r5c71" d="M5 -32l0 32 36 0 0 4 4 0 0-36-4 0 0 28-14 0 0-37-4 0 0 37-14 0 0-28z"/><path id="r6f2f" d="M5 -39l3 3 2 1 2 2 3-2-1-2-2-1-1-1-4-2zM2 -25l4 2 1 1 2 1 1 2 2-3-1-1-1-2-6-3zM4 1l3 2 1-2 1-3 2-3 1-3 1-2 1-3-3-2-2 6-2 2-2 6zM38 -5l6 6 1 2 3-2-1-2-2-1-1-2-2-2-2-1zM22 -7l-1 2-5 5-2 1 3 2 2-1 1-2 4-4 1-2zM21 -30l9 0 0 4-9 0zM33 -30l8 0 0 4-8 0zM21 -37l9 0 0 4-9 0zM33 -37l8 0 0 4-8 0zM17 -7l1-1 8 0 4-1 0 9-1 1-5 0 2 3 4 0 2-1 1-1 1-2 0-9 9-1 1 2 1 1 3-1-2-4-2-1-1-2-2-2-2 2 2 2-15 1 2-1 3-1 2-2 3-1 2-2 3-2-3-2-3 3-2 1-8 0 4-2 3-3 13 0 0-16-27 0 0 16 9 0-3 2-2 2-1 0-3 1 1 4 1-1 8 0-4 2-2 2-2 0-2 1-2 0z"/><path id="r6cb3" d="M2 -25l6 3 1 2 2 0 2-3-2-1-1-1-6-3zM3 1l3 2 2-2 1-3 2-3 1-2 2-3 1-3-2-2-4 6-1 2-2 3-1 3zM4 -39l2 2 6 3 1 1 3-3 0 1 25 0 0 33-2 2-10 0 2 4 8 0 1-1 2 0 2-2 0-36 4 0 0-4-32 0 0 3-10-5zM18 -28l0 21 4 0 0-3 12 0 0-18zM22 -25l9 0 0 12-9 0z"/><path id="r9a7b" d="M2 -7l0 3 2-1 2 0 3-1 2 0 4-2 0-3-2 1-3 1-2 0-2 1-2 0zM30 -41l4 8 3-1-1-2 0-2-1-2-2-2zM5 -33l0 9-1 3 0 6 13 0 0 8-1 3 0 2-1 1 0 1-2 1-3 0-3-1 1 4 6 0 4-2 0-1 2-4 0-8 1-6 0-1-4 0 0-4 1-3 0-8 1-4 0-3-16 0 0 3 12 0 0 10-1 3 0 6-7 0 1-3 0-9 1-2zM23 -18l0 4 10 0 0 13-13 0 0 3 28 0 0-3-12 0 0-13 10 0 0-4-10 0 0-11 11 0 0-3-25 0 0 3 11 0 0 11z"/><path id="r9a6c" d="M3 -10l0 4 33 0 0-4zM11 -32l0 8-1 3 0 5 32 0-1 5 0 3-1 3 0 2-1 2-1 1-10 0 2 4 8 0 4-2 0-1 1-2 2-6 0-5 1-6 0-2-9 0 1-3 0-7 1-3 0-6-32 0 0 4 28 0 0 5-1 2 0 6-1 2-19 0 0-4 1-2 0-5z"/><path id="r5e97" d="M15 -14l0 17 3 0 0-2 21 0 0 2 4 0 0-17-14 0 0-7 17 0 0-4-17 0 0-6-3 0 0 17zM18 -2l0-9 21 0 0 9zM23 -41l1 2 1 1 1 2-20 0 0 26-1 4-2 4-1 4 3 2 2-4 1-5 1-4 1-5 0-18 37 0 0-4-17 0-3-6z"/><path id="r5341" d="M23 -42l0 19-20 0 0 4 20 0 0 23 4 0 0-23 21 0 0-4-21 0 0-19z"/><path id="r5830" d="M29 -26l12 0 0 3-12 0zM29 -32l12 0 0 3-12 0zM26 -34l0 13 19 0 0-13zM47 -40l-29 0 0 42 30 0 0-4-26 0 0-35 25 0zM40 -15l-2 4-2 1-2 0-1-1-2-1 1-1 1-2zM26 -10l2 0 4 2 1 0-1 1-2 1-2 0-2 1-3 0 1 3 3-1 2 0 4-2 2 0 2-1 2 1 1 1 2 1 1 0 3-2-2-1-1-1-2 0-2-1 3-3 1-2 0-2 4 0 0-3-13 0 1-2-3-1-1 3-8 0 0 3 6 0-1 2zM2 -8l1 4 2-1 3-1 2-1 3-2 2-1 3-1-1-3-5 2 0-15 5 0 0-3-5 0 0-11-4 0 0 11-6 0 0 3 6 0 0 17-4 2z"/><path id="r8944" d="M11 -31l8 0 0 4-8 0zM31 -31l8 0 0 4-8 0zM13 4l1-1 2 0 3-1 4-1 6-1 0-3-12 3 0-5 8-4 2 3 3 3 3 2 8 4 5 1 2-3-2-1-2 0-2-1-2 0-1-1-2-1 2 0 3-3 2-1-3-2-3 3-4 2-1-1-2-1-1-2-2-1 19 0 0-3-13 0 0-3 10 0 0-2-10 0 0-3 11 0 0-2-11 0 0-3 8 0 0-9-15 0 0 9 4 0 0 3-12 0 0-3 4 0 0-9-15 0 0 9 8 0 0 3-11 0 0 2 11 0 0 3-10 0 0 2 10 0 0 3-13 0 0 3 16 0-2 1-12 4-3 0 2 3 2-1 2 0 2-1 2 0 2-1 0 2-1 2-2 1zM19 -12l0-3 12 0 0 3zM19 -17l0-3 12 0 0 3zM22 -41l2 3-20 0 0 2 42 0 0-2-18 0-2-4z"/><path id="r4fe1" d="M19 -27l0 4 24 0 0-4zM19 -19l0 3 24 0 0-3zM16 -34l0 3 31 0 0-3zM27 -41l2 4 1 1 1 2 3-2-2-4-2-2zM18 -12l0 16 4 0 0-2 19 0 0 2 3 0 0-16zM22 -1l0-8 19 0 0 8zM13 -42l-2 4-1 4-8 12 2 4 1-2 1-1 2-4 0 29 4 0 0-35 1-1 0-2 1-2 1-1 1-2 0-2z"/><path id="r968f" d="M16 -36l2 2 1 2 2 2 0 2 3-2-2-4-2-2-1-2zM34 -42l-1 2 0 2-1 2-7 0 0 3 6 0-2 4-3 3-1 2-1 1 2 2 4-4 0 22 3 0 0-9 9 0 0 6-4 0 1 3 3 0 2-1 1-1 1-2 0-22-14 0 2-2 0-2 14 0 0-3-12 0 0-3 1-2zM33 -19l9 0 0 4-9 0zM33 -22l0-4 9 0 0 4zM4 -40l0 44 3 0 0-40 6 0-1 1 0 2-1 2 0 2-2 4 2 2 1 2 0 2 1 2 0 5-2 2-2 0 0 3 3 0 4-2 0-10-3-6 0-2 1-2 1-3 0-2 1-2 1-3-3-1zM24 -23l-8 0 0 3 5 0 0 15-2 0-1 2-2 1-2 2 3 4 1-3 4-4 2 1 2 2 2 1 1 1 2 0 2 1 14 0 1-4-3 0-3 1-8 0-2-1-2 0-1-1-4-2-1-1z"/><path id="r8346" d="M33 -36l0 29 3 0 0-29zM42 -41l0 40-1 1-7 0 2 4 6 0 2-1 1-1 1-3 0-40zM20 -42l0 5-7 0 0-5-4 0 0 5-7 0 0 3 7 0 0 4 4 0 0-4 7 0 0 4 4 0 0-4 6 0 0-3-6 0 0-5zM20 -24l0 8-7 0 0-8zM2 -16l0 4 7 0 0 2-1 3-2 4-2 2-2 3 3 2 2-2 4-6 1-2 0-3 1-3 7 0 0 16 4 0 0-16 6 0 0-4-6 0 0-8 5 0 0-4-25 0 0 4 5 0 0 8z"/><path id="r5b9c" d="M3 -1l0 4 44 0 0-4-10 0 0-27-25 0 0 27zM16 -1l0-6 18 0 0 6zM16 -16l18 0 0 6-18 0zM16 -19l0-5 18 0 0 5zM22 -41l1 1 0 2 1 2-20 0 0 10 4 0 0-7 34 0 0 7 4 0 0-10-20 0 2-1-1-1-2-4z"/><path id="r5b5d" d="M25 -13l0 3-19 0 0 3 19 0 0 7-1 1-8 0 2 3 7 0 1-1 2-1 0-9 19 0 0-3-19 0 0-1 2-1 3-1 2-2 6-3-3-2-15 0 1-1 4-2 2-2 17 0 0-3-13 0 2-2 2-1 2-2 1-2 2-1 1-2-3-2-1 1-1 2-2 1-1 2 0-2-12 0 0-6-4 0 0 6-13 0 0 3 13 0 0 5-17 0 0 3 20 0-1 1-2 1-1 1-2 1-1 1-4 0 0 1-1 1-4 2-2 0-1 1-2 1 2 3 2-1 3-1 8-4 16 0-1 1-4 2-2 0zM24 -28l0-5 11 0-2 1-1 2-4 2z"/><path id="r611f" d="M12 -30l0 2 16 0 0-2zM13 -9l0 10 2 2 3 0 2 1 12 0 2-1 2 0 2-2 0-2 1-3-4-1 0 3-2 2-15 0-1-1 0-8zM21 -10l3 3 1 2 1 1 1 2 3-2-1-1-2-4-2-1-1-2zM38 -8l1 2 2 2 2 4 0 1 4-1-1-1-3-6-2-2zM8 -8l-2 4-3 3-1 2 4 1 1-1 4-8zM16 -22l8 0 0 5-8 0zM12 -25l0 11 15 0 0-11zM6 -37l0 16-2 6-2 3 3 2 2-3 1-3 1-4 0-3 1-3 0-8 19 0 1 3 0 3 1 2 1 3 0 2 1 2-1 2-6 3 3 3 2-1 1-1 2-1 1-2 1 2 3 3 6 0 1-1 2-4 0-3-3-1 0 3-1 2 0 1-2 0-2-1-1-2-2-1 2-2 2-4 2-2 1-2 1-3-4 0-1 1 0 2-1 2-1 1-1 2-1 1-1-1 0-2-1-2 0-2-1-3 0-2 14 0 0-3-5 0 1-1-1-2-3-1-2-1-2 2 4 2 1 1-8 0 0-5-3 0 0 5z"/><path id="r4eb3" d="M4 -20l0 9 3 0 0-6 36 0 0 6 3 0 0-9zM14 -29l23 0 0 4-23 0zM10 -31l0 8 31 0 0-8zM36 -16l-3 1-4 1-5 0-5 1-10 0 1 3 5 0 2-1 4 0 0 4-18 1 1 3 17-1 0 4 1 2 1 0 1 1 21 0 1-1 1-2 0-3-3-1-1 3 0 1-18 0 0-5 20-1 0-3-20 1 0-3 2-1 5 0 2-1 3 0 2-1zM21 -41l1 2 2 2-21 0 0 3 44 0 0-3-19 0-2-4-2-1z"/><path id="r6dee" d="M5 -39l2 1 3 3 2 1 1 1 2-3-1-1-2-1-1-1-4-2zM2 -25l4 2 2 2 2 1 2-3-2-1-2-2-4-2zM3 1l4 2 1-2 2-6 2-3 1-2 1-3-3-2-1 2-1 3-2 3-1 3-2 2zM24 -20l9 0 0 7-9 0zM24 -23l0-7 9 0 0 7zM31 -40l1 1 3 6-10 0 1-2 0-2 2-4-4-1-1 4-2 4-1 3-6 9 2 2 2-1 2-4 0 29 4 0 0-3 24 0 0-4-11 0 0-7 9 0 0-3-9 0 0-7 9 0 0-3-9 0 0-7 10 0 0-3-12 0 3-1 0-2-3-6zM24 -10l9 0 0 7-9 0z"/><path id="r5317" d="M2 -6l1 4 6-3 3-1 4-2 0 12 4 0 0-45-4 0 0 12-13 0 0 3 13 0 0 14-3 2-2 1-3 1-2 0zM45 -33l-2 1-2 2-2 1-2 2-3 1-2 2 0-17-4 0 0 39 1 2 3 3 13 0 1-1 2-4 0-3 1-5-2 0-2-1 0 6-1 2 0 1-1 1-10 0-1-3 0-16 6-4 2-1 3-2 2-1 2-2z"/><path id="r5bbf" d="M21 -41l1 2 1 1-19 0 0 9 4 0 0-5 34 0 0 4 4 0 0-8-18 0-1-2-2-2zM19 -21l0 25 4 0 0-3 17 0 0 3 4 0 0-25-12 0 2-5 13 0 0-3-30 0 0 3 12 0 0 3-1 2zM23 -8l17 0 0 6-17 0zM23 -12l0-5 17 0 0 5zM13 -32l-1 3-6 9-4 4 2 4 1-2 2-1 1-1 1-2 0 22 4 0 0-27 1-2 1-1 2-4z"/><path id="r8fc1" d="M3 -39l4 4 1 2 2 1 1 2 3-2-1-2-5-5-2-1zM42 -42l-3 1-4 1-5 1-4 1-5 1-4 0 1 3 4 0 1-1 6 0 0 10-13 0 0 4 13 0 0 18 4 0 0-18 15 0 0-4-15 0 0-11 2 0 2-1 2 0 2-1 2 0 2-1zM13 -22l-11 0 0 3 7 0 0 13-2 2-2 1-3 3 2 3 2-2 1-2 2-1 1-1 2 0 2 1 2 2 4 2 4 0 3 1 5 0 4-1 11 0 1-4-2 1-24 0-2-1-2 0-3-3-2-1z"/><path id="r5468" d="M7 -40l0 25-1 4-1 5-1 4-2 4 3 2 4-8 2-10 0-22 29 0 0 35-1 1-7 0 1 4 7 0 4-2 0-42zM23 -35l0 4-9 0 0 3 9 0 0 5-10 0 0 3 25 0 0-3-11 0 0-5 9 0 0-3-9 0 0-4zM16 -16l0 16 3 0 0-2 16 0 0-14zM19 -12l13 0 0 7-13 0z"/><path id="r53e3" d="M6 -37l0 40 4 0 0-5 30 0 0 5 4 0 0-40zM10 -5l0-28 30 0 0 28z"/><path id="r961c" d="M22 -42l-1 2-1 3-11 0 0 25 14 0 0 4-20 0 0 4 20 0 0 8 4 0 0-8 20 0 0-4-20 0 0-4 15 0 0-11-29 0 0-4 27 0 0-10-16 0 1-2 2-3zM13 -34l23 0 0 4-23 0zM13 -20l25 0 0 5-25 0z"/><path id="r868c" d="M33 -42l0 8-10 0 0 4 10 0 0 7-9 0 0 3 9 0 0 8-11 0 0 3 11 0 0 13 4 0 0-13 11 0 0-3-11 0 0-8 9 0 0-3-9 0 0-7 10 0 0-4-10 0 0-8zM17 -11l3 6-6 0 0-10 8 0 0-18-8 0 0-9-3 0 0 9-7 0 0 21 3 0 0-3 4 0 0 11-9 1 1 4 2-1 3 0 3-1 3 0 3-1 3 0 1 2 0 2 3-1 0-4-1-2-1-3-2-4zM7 -30l4 0 0 12-4 0zM14 -30l4 0 0 12-4 0z"/><path id="r57e0" d="M30 -42l-2 4-8 0 0 25 10 0 0 4-14 0 0 4 14 0 0 9 4 0 0-9 14 0 0-4-14 0 0-4 11 0 0-11-21 0 0-3 20 0 0-11-12 0 2-4zM24 -35l16 0 0 5-16 0zM24 -21l17 0 0 5-17 0zM2 -8l1 4 2-1 3-1 2-1 3-2 3-1 2-1 0-3-6 2 0-14 6 0 0-4-6 0 0-12-3 0 0 12-7 0 0 4 7 0 0 15-3 1z"/><path id="r6ec1" d="M4 -39l2 1 3 3 2 1 2-2-1-2-6-3zM2 -25l4 2 2 2 2 1 2-3-2-1-2-2-4-2zM3 1l3 2 1-2 2-6 1-2 2-3 0-3-2-2-1 3-2 3-2 6zM29 -12l-3 6-1 1-2 4 3 1 1-1 4-8 1-3zM40 -11l1 1 1 2 1 3 1 2 0 1 1 2 3-1-1-2 0-2-3-6-2-2zM25 -19l0 3 9 0 0 17-5 0 1 3 5 0 2-2 1-2 0-16 9 0 0-3-9 0 0-5 6 0 0-4-16 0 0 4 6 0 0 5zM14 -40l0 44 3 0 0-41 5 0-1 2 0 2-1 2 0 2-1 2 0 3 2 4 0 2 1 1 0 6-2 2-2 0 1 3 2 0 2-1 2-4 0-6-1-2 0-2-2-4 1-5 1-2 0-2 1-2 0-3-2-2 0 1zM36 -42l-1 2-2 3-2 2-3 2-2 2-3 1 2 3 2-1 2-2 2-1 5-5 8 8 2 1 3-3-4-2-2-2-2-1-2-2-1-2 1-2z"/><path id="r516d" d="M3 -29l0 4 44 0 0-4zM15 -19l-1 4-2 3-3 4-4 6-3 3 2 1 2 2 2-3 3-4 2-3 2-4 3-4 2-4zM30 -18l3 4 2 4 3 3 2 4 4 6 4-2-4-6-3-4-2-3-3-4-2-4zM20 -40l1 1 3 6 0 2 1 1 4-1-3-6-1-3-1-2z"/><path id="r5408" d="M26 -42l-3 4-3 3-4 3-5 3-4 3-5 2 3 3 6-3 1-1 0 3 26 0 0-4 1 1 2 1 1 1 4 2 1-2 1-1-3-2-8-4-3-3-3-2-3-3 1-2zM14 -26l2-1 2-2 2-1 4-4 1-2 6 6 2 1 2 2 2 1zM10 -16l0 20 4 0 0-3 23 0 0 3 4 0 0-20zM14 -2l0-11 23 0 0 11z"/><path id="r80a5" d="M5 -40l0 30-1 4-1 5-1 3 3 2 1-2 1-3 0-3 1-3 0-6 8 0 0 12-1 1-5 0 1 4 3 0 2-1 2 0 1-2 0-41zM9 -37l7 0 0 8-7 0zM9 -25l7 0 0 8-7 0zM23 -40l0 39 1 1 1 2 1 1 17 0 2-1 1-1 1-2 1-3 0-4-2-1-1 0-1 3 0 4-1 1-1 0-1 1-11 0-2-1-1-1 0-16 15 0 0 3 4 0 0-25zM42 -22l-6 0 0-14 6 0zM27 -22l0-14 6 0 0 14z"/><path id="r978d" d="M23 -22l0 4 6 0-4 8 1 1 8 4-3 3-2 1-3 1-2 0-3 1 2 3 6-2 6-3 2-2 3 3 2 1 2 2 2 1 2-3-2-2-2-1-1-1-2-1-2-2 1-1 3-6 0-3 1-2 4 0 0-4-14 0 1-2 0-2 1-2 0-2-3 0-2 4 0 2-1 2zM29 -12l1-1 2-4 0-1 8 0 0 2-1 2 0 2-1 1-1 2-1 1-2-1-1-1zM23 -35l0 8 4 0 0-5 17 0 0 5 3 0 0-8-9 0-3-6-1-1-3 1 3 6zM4 -24l0 12 7 0 0 4-9 0 0 3 9 0 0 9 3 0 0-9 8 0 0-3-8 0 0-4 7 0 0-12-7 0 0-3 5 0 0-7 3 0 0-3-3 0 0-5-3 0 0 5-7 0 0-5-3 0 0 5-4 0 0 3 4 0 0 7 5 0 0 3zM16 -34l0 4-7 0 0-4zM7 -21l4 0 0 6-4 0zM14 -21l4 0 0 6-4 0z"/><path id="r829c" d="M32 -42l0 5-14 0 0-5-4 0 0 5-11 0 0 3 11 0 0 4 4 0 0-4 14 0 0 4 4 0 0-4 11 0 0-3-11 0 0-5zM7 -27l0 3 16 0 0 7-20 0 0 3 19 0-2 4-1 3-3 2-4 3-4 1-6 2 2 3 7-2 4-2 4-3 3-3 4-8 0 16 2 1 17 0 1-1 1-2 0-2 1-2-4-1 0 4-1 1-13 0-1-2 0-12 18 0 0-3-21 0 1-2 0-5 16 0 0-3z"/><path id="r6e56" d="M4 -39l4 2 4 4 2-3-1-2-2-1-3-1-2-1zM2 -25l4 2 1 1 2 1 1 1 2-3-1-1-2-1-1-1-4-2zM3 1l3 2 1-2 2-3 1-2 3-9-3-2-2 6-2 3-1 3zM15 -19l0 20 3 0 0-4 11 0 0-16-5 0 0-9 6 0 0-4-6 0 0-9-4 0 0 9-7 0 0 4 7 0 0 9zM32 -40l0 32-2 3-1 4-3 3 3 2 2-2 2-3 2-6 0-3 1-3 7 0 0 12-1 1-5 0 1 4 3 0 2-1 2 0 1-1 0-42zM36 -37l7 0 0 9-7 0zM36 -25l7 0 0 9-7 0zM18 -16l8 0 0 10-8 0z"/><path id="r9675" d="M35 -22l10 5 1 1 2-3-1-1-8-4-2 0zM27 -24l-1 1-4 2-1 1-4 2 3 3 3-3 4-2 3-3zM4 -40l0 44 3 0 0-41 7 0-2 4 0 2-2 4 0 2 2 4 1 1 1 2 0 5-2 2-3 0 1 3 3 0 3-1 1-1 0-10-2-4-2-2 3-6 0-2 1-3 1-2-2-1zM18 -28l0 3 30 0 0-3-14 0 0-6 11 0 0-3-11 0 0-5-3 0 0 5-10 0 0 3 10 0 0 6zM28 -13l11 0-1 2-1 1-1 2-2 1-1 1-2-1-1-2-2-1-1-2zM31 -16l2-4-4 0-2 4-4 4-3 2-2 1 2 3 2-1 1-2 2-1 1 2 1 1 1 2 2 1-4 2-3 1-2 1-2 0-3 1 2 3 3-1 2 0 3-1 4-2 3-2 2 2 6 3 3 0 2 1 2-3-2-1-2 0-3-1-4-2-1-1 3-3 1-2 2-2 2-4-2-1z"/><path id="r5ba3" d="M10 -30l0 4 30 0 0-4zM3 -1l0 4 44 0 0-4zM15 -12l20 0 0 5-20 0zM15 -20l20 0 0 5-20 0zM11 -23l0 19 28 0 0-19zM21 -41l2 4-19 0 0 9 4 0 0-6 34 0 0 6 4 0 0-9-18 0-2-3-1-2z"/><path id="r6c60" d="M5 -39l4 2 3 3 2 1 2-3-1-1-2-1-2-2-2-1-2 0zM2 -25l8 4 1 1 2-3-1-1-8-4zM4 1l3 2 1-2 2-3 1-3 2-2 1-3 2-3-3-2-2 3-1 3-2 2-1 3-2 3zM20 -37l0 13-6 3 1 3 5-2 0 21 1 1 2 1 22 0 1-2 1-1 1-3 0-3-3-1-1 3 0 2-2 2-17 0-1-1 0-20 7-3 0 17 3 0 0-19 8-3 0 15-2 1-4 0 1 4 5 0 2-2 2-4 0-17-3-1-1 1-8 3 0-13-3 0 0 14-7 3 0-12z"/><path id="r4eac" d="M13 -25l24 0 0 8-24 0zM34 -8l2 1 2 2 1 2 2 2 2 4 4-3-5-5-1-2-2-2-2-1zM12 -10l-1 2-2 1-1 2-5 5 2 2 2-1 4-4 1-2 2-2 1-2zM21 -41l1 2 1 1 1 2-21 0 0 4 44 0 0-4-19 0-1-1-2-4-1-1zM9 -28l0 15 14 0 0 13-1 1-4 0-3-1 0 2 1 2 9 0 2-2 0-15 14 0 0-15z"/><path id="r5e38" d="M16 -25l19 0 0 5-19 0zM8 -13l0 15 3 0 0-11 13 0 0 13 4 0 0-13 11 0 0 7-1 1-6 0 1 3 7 0 1-1 2-1 0-13-15 0 0-4 10 0 0-10-26 0 0 10 12 0 0 4zM8 -40l2 2 2 4-8 0 0 10 4 0 0-7 34 0 0 7 4 0 0-10-19 0 0-8-4 0 0 8-10 0 3-2-1-2-2-2-1-2zM38 -42l-1 2-2 3-1 1 3 2 1-2 4-4z"/><path id="r76d0" d="M7 -15l0 14-4 0 0 4 44 0 0-4-3 0 0-14zM10 -1l0-10 8 0 0 10zM21 -1l0-10 8 0 0 10zM32 -1l0-10 8 0 0 10zM30 -42l0 26 4 0 0-15 2 1 2 2 4 2 3 3 3-3-2-1-2-2-2-1-2-2-3-1-2-1-1 1 0-9zM13 -42l0 8-9 0 0 3 9 0 0 9-4 0-2 1-4 0 0 4 3-1 4 0 4-1 4 0 5-1 4-1 0-3-10 1 0-8 9 0 0-3-9 0 0-8z"/><path id="r901a" d="M3 -38l6 6 2 1 1 2 2-3-2-2-1-2-2-1-3-3zM13 -23l-11 0 0 3 7 0 0 14-1 1-2 1-4 4 2 4 2-2 1-2 2-2 1 0 1-1 1 1 8 4 2 0 2 1 18 0 3-1 2 0 1-3-12 0-3 1-6 0-2-1-5 0-2-1-1-1-3-1-1-1zM18 -40l0 3 21 0-1 1-6 3-2-1-1 0-4-2-2 2 1 1 8 4-14 0 0 25 4 0 0-8 8 0 0 8 4 0 0-8 8 0 0 5-1 1-5 0 1 3 3 0 3-1 1 0 1-1 1-2 0-22-7 0-1-1-2-1 3-3 4-2 3-3-2-1zM42 -27l0 5-8 0 0-5zM22 -19l8 0 0 4-8 0zM22 -22l0-5 8 0 0 5zM42 -19l0 4-8 0 0-4z"/><path id="r65e0" d="M6 -39l0 4 16 0 0 9-1 2-18 0 0 4 18 0-2 4-1 4-3 4-3 3-10 6 1 1 1 2 6-3 5-3 4-4 2-5 2-4 1-5 2 0 0 21 1 1 1 0 2 1 14 0 2-2 1-2 1-3 0-3-4-2 0 6-2 2-12 0-1-2 0-17 19 0 0-4-23 0 0-2 1-2 0-7 19 0 0-4z"/><path id="r9521" d="M26 -29l15 0 0 4-15 0zM26 -37l15 0 0 5-15 0zM9 -42l-1 2-1 3-2 4-3 3 2 4 1-2 1-1 1-2 2-2 12 0 0-3-11 0 1-3 1-2zM3 -17l0 3 7 0 0 12-1 2-1 1 1 2 1 0 1-1 1 0 2-1 6-4 0-3-6 3 0-11 6 0 0-3-6 0 0-7 6 0 0-3-15 0 0 3 5 0 0 7zM23 -40l0 18 4 0-1 3-1 2-7 7 2 2 2-1 1-1 1-2 3-3 0 1 3 0-1 2-2 3-1 2-6 6 2 2 7-7 1-3 2-2 2-3 3 0-2 6-4 6-4 4 2 2 3-2 6-9 1-4 1-3 4 0-1 4 0 4-1 2 0 3-2 2-4 0 0 3 5 0 3-2 1-1 0-1 1-3 0-3 1-4 0-8-19 0 2-4 15 0 0-18z"/><path id="r82cf" d="M11 -16l-1 2-1 1-1 2-2 2-1 2-1 1 3 2 1-1 1-2 2-2 3-6zM39 -15l4 8 1 1 0 2 4-1-4-8-1-1-1-2zM7 -24l0 4 13 0 0 4-2 5-2 3-3 4-4 3-5 2 2 3 6-3 4-3 6-8 2-10 11 0 0 6-1 5 0 3-1 3 0 2-1 1-8 0 2 4 6 0 4-2 1-1 0-3 1-3 0-10 1-7 0-2-14 0 0-5-4 0 0 5zM32 -42l0 5-14 0 0-5-4 0 0 5-11 0 0 3 11 0 0 6 4 0 0-6 14 0 0 6 4 0 0-6 11 0 0-3-11 0 0-5z"/><path id="r4e0a" d="M21 -41l0 39-18 0 0 4 45 0 0-4-23 0 0-20 19 0 0-4-19 0 0-15z"/><path id="r6d77" d="M5 -39l4 2 4 4 3-3-2-1-1-1-6-3zM2 -24l4 2 1 1 2 1 1 1 2-3-2-2-6-3zM4 1l3 2 1-2 3-9 1-2 1-3-3-2-3 9-1 2-1 3zM28 -23l1 1 2 1 1 2 1 1-10 0 1-7 17 0 0 7-7 0 2-1-1-2-2-1-1-2-2-1zM14 -18l0 4 5 0 0 2-1 2 0 3-1 2 0 2 22 0-1 3-8 0 1 3 3 1 4 0 2-1 2-2 0-2 1-2 4 0 0-4-4 0 1-1 0-6 4 0 0-4-4 0 1-8 0-2-24 0-1 2 0 6-1 2zM22 -14l18 0 0 7-19 0zM27 -13l1 2 2 1 1 2 2 1 2-1-1-2-2-1-3-3zM22 -42l-2 6-1 2-2 3-2 2-1 2 3 3 1-2 1-1 3-6 25 0 0-3-23 0 1-3 1-2z"/><path id="r5609" d="M12 -24l26 0 0 4-26 0zM23 -42l0 3-20 0 0 3 20 0 0 3-16 0 0 3 37 0 0-3-17 0 0-3 20 0 0-3-20 0 0-3zM30 -14l-12 0 2 0-2-4 14 0zM14 -17l1 1 1 2-13 0 0 3 44 0 0-3-13 0 1-2 1-1-3-1 9 0 0-9-34 0 0 9 8 0zM12 -11l-1 3-7 0 0 3 6 0 0 2-1 1-2 1-1 1-4 2 2 2 3-1 4-2 3-6 7 0-1 3 0 2-1 0-1 1-5 0 1 3 5 0 3-1 1-1 0-1 1-2 0-7-9 0 0-3zM27 -9l0 13 4 0 0-2 10 0 0 2 4 0 0-13zM31 0l0-6 10 0 0 6z"/><path id="r5174" d="M3 -18l0 4 44 0 0-4zM30 -10l3 2 2 3 3 2 2 3 4 4 3-2-1-2-7-7-3-2-2-3zM15 -12l-1 3-4 4-3 2-2 2-3 2 2 1 1 2 3-2 7-7 2-3 2-2zM3 -36l1 2 2 3 1 2 2 3 1 2 0 3 4-2-1-2-1-3-1-2-2-3-1-2-2-3zM18 -40l1 2 2 6 1 2 1 3 0 2 4-1 0-2-1-3-1-2-2-6-2-2zM42 -40l-1 3-2 4-1 3-2 3-2 4-2 2 3 1 2-2 4-6 2-4 2-3 2-4z"/><path id="r626c" d="M9 -42l0 10-7 0 0 4 7 0 0 11-3 0-4 2 1 3 6-2 0 13-1 1-5 0 1 4 5 0 2-1 1-1 0-17 7-2-1-3-6 1 0-9 6 0 0-4-6 0 0-10zM21 -22l7 0-2 2-1 3-8 8 3 2 6-6 4-6 1-3 5 0-1 5-3 5-2 4-7 7-5 3 3 2 4-3 8-8 2-5 3-5 2-5 3 0 0 6-1 5 0 4-1 3 0 2-1 1-2 1-5 0 1 3 8 0 1-1 2-4 0-3 1-5 1-6 0-10-20 0 3-2 2-1 6-4 2-3 3-2-3-2-21 0 0 4 16 0-4 4-6 3-1 1-2 1-1 1-2 1z"/><path id="r7709" d="M19 -13l21 0 0 4-21 0zM19 -16l0-4 21 0 0 4zM19 -6l21 0 0 5-21 0zM15 -23l0 27 4 0 0-2 21 0 0 2 4 0 0-27zM7 -39l0 23-1 5-2 8-2 4 3 3 2-4 2-5 2-10 0-12 33 0 0-12zM11 -36l13 0 0 6-13 0zM27 -36l13 0 0 6-13 0z"/><path id="r8d44" d="M4 -38l8 4 1 1 2 1 2-3-2-1-1-1-6-3-2 0zM2 -25l2 4 6-3 3 0 2-1 3-1-1-3-3 1-2 0-3 1-2 1-3 1zM9 -19l0 14 4 0 0-10 25 0 0 10 4 0 0-14zM24 -14l-1 4-2 3-3 3-3 2-6 2-7 1 2 3 8-1 5-2 4-3 3-3 2-4 1-5zM26 -4l3 1 4 2 6 2 3 2 3 1 2-3-3-1-3-2-6-2-4-1-3-1zM24 -42l-4 8-2 1-2 2 3 2 1-1 2-1 1-2 1-1 6 0-1 2-1 3-4 4-4 1-4 2 2 2 4-1 2-1 3-1 2-2 1-2 2-2 1 2 4 4 3 1 2 1 3 1 2-3-3-1-2-1-3-1-6-6 1-2 7 0-2 4 3 1 4-8-2-1-1 1-17 0 2-4z"/><path id="r4e50" d="M12 -14l-2 2-1 3-2 2-1 2-2 2-2 1 3 3 4-4 1-2 2-3 2-2 1-3zM35 -12l1 2 4 4 2 3 1 2 2 2 3-2-1-2-2-2-1-2-2-3-4-4zM6 -18l18 0 0 17-1 1-7 0 1 2 0 2 7 0 2-1 1-1 1-3 0-17 18 0 0-4-18 0 0-10-4 0 0 10-14 0 0-2 1-2 0-2 1-2 0-5 11 0 6-1 5 0 10-2-2-3-5 0-5 1-6 1-6 0-6 1-5 0-1 3 0 5-1 3 0 3-1 2-1 1z"/><path id="r5185" d="M5 -33l0 37 4 0 0-34 14 0 0 4-1 3-1 4-3 3-3 4-5 3 3 3 3-2 5-5 1-2 2-2 1-3 2 3 3 2 6 6 1 2 3-2-2-2-2-3-2-2-3-2-2-3-3-2 0-2 1-3 0-2 14 0 0 29-1 1-8 0 2 4 8 0 3-3 0-34-18 0 0-9-4 0 0 9z"/><path id="r6c5f" d="M5 -39l2 1 2 2 2 1 1 1 2 1 2-3-1-1-8-4zM2 -25l8 4 1 1 2-3-1-1-8-4zM4 1l3 2 1-2 4-6 1-2 2-3 1-3-3-2-1 3-2 3-2 2-1 3-2 3zM16 -3l0 4 32 0 0-4-14 0 0-31 11 0 0-3-26 0 0 3 11 0 0 31z"/><path id="r81ea" d="M12 -21l27 0 0 8-27 0zM12 -24l0-8 27 0 0 8zM12 -10l27 0 0 8-27 0zM23 -42l-1 2 0 3-1 2-13 0 0 39 4 0 0-3 27 0 0 3 4 0 0-39-18 0 0-2 1-2 1-3z"/><path id="r8d21" d="M23 -16l0 6-1 3-2 2-4 2-5 2-8 2 1 1 1 2 9-2 5-3 4-2 3-3 1-3 0-7zM26 -4l3 2 4 1 3 1 3 2 6 2 2-3-3-1-3-2-6-2-4-1-3-1zM9 -22l0 17 4 0 0-14 24 0 0 13 4 0 0-16zM7 -39l0 3 16 0 0 6-20 0 0 4 44 0 0-4-20 0 0-6 17 0 0-3z"/><path id="r6cf8" d="M5 -38l8 4 1 1 2-3-1-1-8-4zM2 -25l4 2 2 2 2 1 1 1 3-3-6-3-2-2-2-1zM3 0l3 3 2-2 1-3 2-2 2-6 2-2-3-3-2 3-1 3-2 3-1 2-2 2zM19 -29l0 16-3 12-2 3 3 2 2-2 3-9 0-7 19 0 0 3 4 0 0-18-11 0 0-5 13 0 0-3-13 0 0-5-4 0 0 13zM41 -17l-18 0 0-8 18 0z"/><path id="r5bbe" d="M16 -6l-2 1-2 2-2 1-3 1-4 2 3 3 4-2 3-2 2-1 3-2 2-1zM30 -3l2 1 6 2 2 2 3 1 1 1 2-3-1-1-3-1-2-2-6-2-2-1zM21 -41l2 2 1 2-20 0 0 11 4 0 0-7 34 0 0 7 4 0 0-11-17 0-1-2-2-1-1-2zM3 -10l0 3 44 0 0-3-12 0 0-8 9 0 0-3-29 0 0-4 4 0 5-1 4 0 4-1 4 0 4-1-2-3-4 1-4 0-4 1-5 1-10 0 0 18zM15 -18l16 0 0 8-16 0z"/><path id="r91cd" d="M8 -27l0 16 15 0 0 3-17 0 0 3 17 0 0 4-20 0 0 3 44 0 0-3-20 0 0-4 17 0 0-3-17 0 0-3 15 0 0-16-15 0 0-3 20 0 0-3-20 0 0-4 3 0 2-1 8 0 2-1-2-3-4 1-5 1-12 0-6 1-6 0 0 3 11 0 2-1 3 0 0 4-20 0 0 3 20 0 0 3zM12 -18l11 0 0 4-11 0zM27 -18l12 0 0 4-12 0zM12 -24l11 0 0 3-11 0zM27 -24l12 0 0 3-12 0z"/><path id="r9075" d="M3 -37l2 1 1 2 2 1 1 2 1 1 3-2-1-1-1-2-2-1-1-2-2-1zM37 -42l-1 2-2 3-9 0 2-1-1-2-2-2-3 1 1 2 2 2-9 0 0 2 11 0 0 3-9 0 0 17 19 0 0 2-21 0 0 3 7 0-2 2 4 2 1 2 1 1 3-2-2-2-2-1-2-2 13 0 0 5-1 1-5 0 1 2 7 0 1-1 0-7 9 0 0-3-9 0 0-2 6 0 0-17-9 0 0-3 11 0 0-2-9 0 2-2 1-2zM42 -20l0 2-22 0 0-2zM20 -29l6 0-3 3-3 1 3 2 4-2 1-1 0-2 1-1 4 0 0 3 1 1 2 1 6 0 0 2-22 0zM36 -29l6 0 0 2-5 0-1-1zM33 -32l-4 0 0-3 4 0zM13 -24l-11 0 0 4 7 0 0 16-2 0-1 2-4 2 3 4 2-2 1-2 2-1 1-1 2 1 3 2 1 1 2 0 2 1 26 0 2-4-10 0-3 1-12 0-2-1-2 0-2-1-2 0-3-3z"/><path id="r4e49" d="M21 -41l2 4 0 2 3 6 3-1-1-2 0-2-4-8zM40 -38l-2 4-2 5-2 4-9 12-3-4-3-3-2-4-3-4-2-4-1-4-4 1 2 4 2 5 3 4 2 4 3 4 3 3-2 3-4 2-6 4-4 1-4 2 2 3 4-2 4-1 4-2 3-2 3-3 3-2 3 2 3 3 3 2 8 4 4 1 1-2 1-1-4-2-3-1-4-2-6-4-3-3 9-12 2-4 3-5 1-5z"/><path id="r662d" d="M22 -17l0 21 4 0 0-2 16 0 0 2 4 0 0-21zM26 -2l0-11 16 0 0 11zM21 -40l0 4 8 0-2 6-1 2-2 3-2 2-3 2 2 2 6-4 4-6 1-3 1-4 9 0 0 9-1 2 0 1-2 1-5 0 1 3 6 0 3-1 0-1 1-2 0-2 1-3 0-11zM15 -20l0 11-8 0 0-11zM15 -24l-8 0 0-11 8 0zM4 -38l0 36 3 0 0-4 11 0 0-32z"/><path id="r6bd5" d="M7 -17l1-1 1 0 2-1 3 0 4-1 6-2 0-3-13 3 0-9 13 0 0-4-13 0 0-7-4 0 0 18-1 2-1 1zM43 -38l-4 2-2 0-2 1-3 1-2 1 0-9-4 0 0 20 1 2 1 1 15 0 3-3 1-2 0-3-3-2-1 4 0 2-1 1-9 0-3-1 0-6 3-1 2-1 6-2 2-1 2-2zM3 -12l0 4 20 0 0 12 4 0 0-12 21 0 0-4-21 0 0-6-4 0 0 6z"/><path id="r8282" d="M5 -24l0 3 13 0 0 25 4 0 0-25 17 0 0 13-2 1-8 0 1 2 0 2 10 0 2-2 0-19zM32 -42l0 6-14 0 0-6-4 0 0 6-11 0 0 3 11 0 0 6 4 0 0-6 14 0 0 6 4 0 0-6 11 0 0-3-11 0 0-6z"/><path id="r6b66" d="M36 -39l2 1 1 2 2 1 1 2 2 1 2-2-1-1-1-2-2-1-3-3zM7 -39l0 3 19 0 0-3zM30 -42l0 12-27 0 0 4 27 0 1 8 1 7 2 6 2 5 3 3 4 1 1 0 2-1 1-1 0-2 1-3 0-4-3-2 0 6-1 2 0 1-3 0-2-3-2-4-1-5-2-14 13 0 0-4-13 0 0-12zM7 -21l0 20-5 1 1 3 4 0 4-1 5-1 4-1 10-2 0-3-10 2 0-11 8 0 0-4-8 0 0-7-4 0 0 22-6 1 0-19z"/><path id="r54b8" d="M13 -26l0 3 15 0 0-3zM30 -42l0 8-24 0 0 25-1 4-2 3-1 4 3 2 2-4 3-12 0-18 20 0 0 4 1 4 0 4 1 3 0 3 1 3-2 2-1 2-2 2-2 1-2 2-3 1 3 3 4-2 1-2 2-1 3-3 2 4 3 3 2 1 3 0 2-1 1-1 0-2 1-3 0-4-3-1 0 6-1 1 0 1-1 1-1-1-1 0-3-3 0-2-1-3 1-2 2-3 2-6 2-3 1-3-4-1-1 3-1 2 0 2-1 2-1 3-1 1-1-2 0-3-1-3 0-9 14 0 0-4-5 0 3-2-2-1-1-1-2-1-2-2-2-1-2 2 2 1 3 3 2 1 1 1-9 0-1-2 0-6zM13 -18l0 16 3 0 0-3 12 0 0-13zM16 -15l9 0 0 7-9 0z"/><path id="r5cb3" d="M7 -12l0 13 33 0 0 3 4 0 0-16-4 0 0 10-13 0 0-13 20 0 0-3-11 0 0-9 9 0 0-3-31 0 0-5 4-1 5 0 5-1 5 0 4-1 4 0-2-3-4 0-5 1-4 1-11 0-5 1 0 20-7 0 0 3 20 0 0 13-13 0 0-10zM32 -18l-18 0 0-9 18 0z"/><path id="r5f20" d="M42 -40l-1 3-2 2-2 3-2 2-3 2-2 1 3 3 2-2 3-2 2-3 2-2 4-6zM6 -29l0 3-1 2 0 8-1 2 10 0 0 10-1 2 0 1-1 1-7 0 1 4 6 0 4-2 0-1 1-2 0-2 1-3 0-11-10 0 1-2 0-6 9 0 0-15-13 0 0 3 9 0 0 8zM24 4l1-1 1 0 2-1 4-1 4-2 0-4-8 3 0-17 5 0 1 5 6 12 3 3 3 2 3-3-6-4-2-4-2-3-1-4-2-4 12 0 0-4-20 0 0-18-4 0 0 18-5 0 0 4 5 0 0 19-2 1z"/><path id="r5bb6" d="M21 -41l1 2 1 1-19 0 0 11 4 0 0-7 34 0 0 7 4 0 0-11-18 0-2-2-1-2zM40 -24l-2 1-2 2-2 1-2 2-2 1-1 1-1-1-1-2-1-1-1-2-2-1 2-2 2-1 12 0 0-3-29 0 0 3 12 0-3 2-2 1-4 1-9 3 2 3 2 0 3-1 2-1 3-1 2-1 3-2 1 2 1 1-2 2-3 2-4 1-3 2-4 1-3 1 2 3 3-1 3-2 4-1 3-2 3-1 2-2 1 2 1 1-3 3-4 2-3 2-5 2-8 2 2 4 4-2 4-1 3-2 4-2 6-4 1 3-1 2 0 2-1 2-8 0 1 4 6 0 2-1 1-1 2-1 0-2 1-3 0-9 2-1 1 3 2 4 2 3 9 6 1-2 1-1-3-2-2-2-3-2-4-6-1-3 1-1 4-2 3-3z"/><path id="r754c" d="M16 -14l0 3-1 2 0 2-1 3-4 4-4 1 1 2 1 1 5-2 3-2 2-3 1-2 0-9zM12 -29l11 0 0 6-11 0zM27 -29l11 0 0 6-11 0zM12 -37l11 0 0 5-11 0zM27 -37l11 0 0 5-11 0zM31 -14l0 18 4 0 0-17 4 2 1 0 6 3 2-4-9-3-2-2-3-1-2-2 10 0 0-20-34 0 0 20 10 0-2 2-3 1-2 2-3 1-3 2-3 1 2 1 1 2 3-2 3-1 4-2 7-7 6 0 1 1 1 2 4 2 1 1z"/><path id="r76ca" d="M30 -24l2 1 3 1 3 2 2 1 3 1 2 1 2-3-2-1-3-1-2-1-3-1-3-2-3 0zM17 -27l-2 2-2 1-2 2-3 1-2 1-3 1 3 3 2-1 3-2 2-1 3-2 2-1 2-2zM9 -17l0 16-7 0 0 3 46 0 0-3-6 0 0-16zM12 -1l0-12 6 0 0 12zM22 -1l0-12 6 0 0 12zM32 -1l0-12 6 0 0 12zM36 -42l-2 4-1 1-1 2-2 2 3 1-16 0 3-2-1-1-2-4-3-3-3 2 1 1 1 2 2 2 0 1 1 2-13 0 0 3 44 0 0-3-13 0 1-2 1-1 3-6z"/><path id="r6c99" d="M21 -34l-1 4-2 6-1 2-1 3-1 2 3 2 1-2 2-3 3-9 1-4zM38 -33l1 2 2 3 1 2 1 3 2 4 3-1-1-3-2-4-1-3-2-2-1-2zM41 -19l-2 5-3 4-4 4-5 3-12 4 1 2 1 1 7-2 6-2 5-4 4-4 3-4 3-6zM29 -42l0 31 4 0 0-31zM5 -39l4 2 2 2 2 1 1 1 2-3-1-1-4-2-2-2-2 0zM2 -25l8 4 1 1 2-3-1-1-8-4zM4 1l3 2 1-2 2-3 1-3 2-2 1-3 2-3-3-2-2 3-1 3-2 2-2 3-1 3z"/><path id="r682a" d="M25 -40l-1 3 0 3-2 6-2 4 3 2 1-1 1-2 0-2 1-2 6 0 0 9-12 0 0 3 10 0-1 3-4 6-7 7 1 1 1 2 7-7 4-6 1-3 0 18 4 0 0-19 1 3 4 6 1 3 4 4 2-1 1-2-6-6-2-3-1-3-2-3 10 0 0-3-12 0 0-9 10 0 0-4-10 0 0-9-4 0 0 9-5 0 1-2 0-4zM10 -42l0 10-7 0 0 3 7 0-1 4-1 3-2 4-1 3-2 3-1 2 2 4 2-4 1-3 1-2 2-6 0 25 4 0 0-27 1 3 2 4 1 1 2-3-1-1-1-2-2-2-1-3-1-1 0-2 6 0 0-3-6 0 0-10z"/><path id="r6d32" d="M21 -41l0 22-1 5 0 4-6 12 3 2 3-4 2-4 2-10 0-27zM17 -28l-1 2 0 2-1 3-1 2 0 2-1 1 2 2 3-6 1-3 0-2 1-2zM24 -26l2 4 0 2 1 1 0 2 1 2 2-1 0-4-1-2 0-1-2-4zM4 -39l4 2 1 2 2 1 1 1 2-3-2-2-2-1-2-2-2 0zM2 -25l4 2 1 1 2 1 1 1 3-3-2-1-1-1-6-3zM3 1l3 2 1-2 2-3 1-2 3-9-3-2-2 6-2 3-1 3zM42 -41l0 23 0-1-3-6-1-1-1-2-2 1 0-13-4 0 0 43 4 0 0-29 3 6 0 1 2 4 2-1 0 20 4 0 0-45z"/><path id="r6625" d="M23 -42l-1 2 0 2-17 0 0 3 16 0 0 2-1 2-13 0 0 3 12 0-2 4-14 0 0 3 11 0-1 2-4 4-2 1-3 2-2 1 1 2 1 1 4-2 1-1 2-1 1-1 0 17 4 0 0-2 18 0 0 2 4 0 0-17 2 1 2 2 4 2 1-2 1-1-2-1-2-2-3-1-4-4-1-2 11 0 0-3-26 0 2-4 20 0 0-3-19 0 1-2 0-2 20 0 0-3-19 0 0-4zM19 -21l13 0 2 4-18 0 1-2zM16 -6l18 0 0 5-18 0zM16 -9l0-5 18 0 0 5z"/><path id="r4ec1" d="M19 -34l0 4 26 0 0-4zM17 -4l0 4 31 0 0-4zM15 -42l-4 8-2 3-2 4-3 3-2 3 1 1 1 2 4-4 1-2 0 28 4 0 0-34 1-2 1-1 3-6 0-2z"/><path id="r6000" d="M9 -42l0 46 4 0 0-46zM4 -32l0 4-1 2 0 3-1 2-1 1 4 2 0-2 1-3 0-2 1-2 0-5zM13 -33l3 6 0 2 1 2 3-2-1-1 0-2-3-6zM33 -25l2 2 2 3 3 2 2 2 1 3 2 2 3-3-8-8-2-3-2-2zM18 -39l0 4 14 0-3 4-4 8-3 4-4 3-3 2 3 3 2-1 6-6 2-3 1-2 0 27 4 0 0-34 1-1 2-4 11 0 0-4z"/><path id="r5316" d="M43 -35l-2 3-2 2-2 3-7 7 0-21-4 0 0 24-2 1-1 1-4 2-1 1-2 0 3 3 2-1 1-1 4-2 0 13 1 2 1 0 2 1 14 0 1-1 2-4 1-3 0-5-2 0-2-1 0 8-2 2-11 0-1-1 0-13 3-3 3-2 9-9 2-3zM16 -42l-2 4-2 3-2 4-3 3-2 3-3 3 1 2 2 2 1-2 3-3 1-2 0 29 4 0 0-35 1-2 1-1 1-2 1-1 1-2 0-2z"/><path id="r5a04" d="M33 -12l-1 2-1 1-1 2-1 1-2 1-2 0-2-1-2 0-1-1-4 0 1-2 1-1 1-2zM9 -39l3 3 1 2 1 1-10 0 0 4 16 0-2 2-3 2-3 1-3 2-6 2 1 1 1 2 3-1 4-2 3-1 6-4 2-3 0 8-3 0-1 1-1 2-1 1-14 0 0 4 12 0-1 2-2 1-1 2-2 2 5 0 2 1 2 0 3 1 2 0-9 3-7 0-4 1 1 3 5 0 5-1 8-2 6-2 3 1 3 0 2 1 3 1 4 2 3-3-4-2-2 0-9-3 2-1 1-2 1-1 2-4 10 0 0-4-25 0 1-1 1-2 3 0 0-9 2 2 9 6 4 1 3 1 1-1 1-2-9-3-3-2-3-1-2-2 17 0 0-4-11 0 2-2 1-2 3-3-4-1-1 2-2 2-1 2-2 1 2 1-7 0 0-9-4 0 0 9-8 0 2-1-1-1-1-2-2-2-1-2z"/><path id="r5e95" d="M26 -8l2 4 0 2 2 4 1 1 3-1-2-4-1-1-3-6zM14 3l2 0 1-1 2-1 3-1 4-1 0-3-7 2 0-12 12 0 1 5 4 8 4 4 3 1 1-1 1 0 1-1 2-4 0-4-3-1 0 3-1 2 0 1-1 1-1-1-2-1-1-2-2-3-1-3-1-4 11 0 0-4-12 0 0-4-1-2 0-3 7 0 2-1 2 0-3-3-3 1-4 0-5 1-9 0-5 1 0 26-1 2-1 0zM31 -18l-12 0 0-8 11 0 0 6zM24 -41l2 4-20 0 0 23-1 4 0 4-2 4-1 4 3 2 2-4 1-4 1-5 0-5 1-4 0-16 38 0 0-3-18 0-1-2-1-1-1-2z"/><path id="r840d" d="M3 1l3 3 2-2 2-4 2-2 1-2 2-2-3-3-1 2-2 2-1 2-2 2-1 2zM4 -28l8 4 1 1 2-3-1-1-6-3-1-1zM2 -19l6 3 3 3 2-3-1-1-8-4zM18 -23l5 10 3-2-1-1-4-8zM42 -24l-1 1-1 2 0 2-1 2-1 1-1 2 3 1 1-1 3-6 0-1 1-2zM32 -42l0 4-14 0 0-4-4 0 0 4-11 0 0 4 11 0 0 3 4 0 0-3 14 0 0 3 4 0 0-3 12 0 0-4-12 0 0-4zM15 -12l0 3 15 0 0 13 3 0 0-13 15 0 0-3-15 0 0-14 13 0 0-3-29 0 0 3 13 0 0 14z"/><path id="r90b5" d="M3 -39l0 3 8 0 0 4-1 3-6 6-3 2 3 3 3-2 2-3 2-2 2-3 2-8 8 0-1 4 0 5-1 2 0 1-2 1-5 0 1 3 7 0 2-1 0-1 1-2 0-2 1-3 0-9 1-1zM5 -16l0 20 3 0 0-3 14 0 0 2 3 0 0-19zM8 -2l0-11 14 0 0 11zM30 -39l0 43 3 0 0-40 10 0-1 2-1 3-2 4-1 3-2 2 3 2 2 2 2 4 0 5-1 2-2 1-2 0-3-1 1 2 0 2 7 0 2-1 1-1 1-2 0-7-2-4-5-5 2-2 1-2 1-3 2-3 1-2 1-3-3-1z"/><path id="r8861" d="M10 -42l-2 4-3 3-1 2-2 1 2 3 5-5 2-3 2-4zM37 -39l0 4 10 0 0-4zM23 -13l0 3-9 0 0 3 8 0-1 2-1 1-1 2-1 1-4 2 1 3 3-1 3-3 2-1 2-4 1 2 2 1 4 4 2-2-1-1-1-2-2-1-3-3 8 0 0-3-9 0 1-3zM21 -35l6 0-1 3-1 2-6 0 1-3zM11 -32l-1 3-2 2-1 3-4 4-1 2 2 3 2-2 1-2 0 23 4 0 0-28 2-4 2 2 1-1 0 14 18 0 0-17-6 0 2-2 1-2 0-2-2-2-7 0 1-2 1-1-4-1 0 2-1 3-1 2-2 2-1 2-2 3 1-3zM19 -21l5 0 0 5-5 0zM26 -21l5 0 0 5-5 0zM19 -28l5 0 0 5-5 0zM26 -28l5 0 0 5-5 0zM35 -26l0 3 5 0 0 23-5 0 1 4 5 0 2-2 1-2 0-23 4 0 0-3z"/><path id="r9ec4" d="M30 -2l2 1 6 2 6 3 3-2-4-2-6-2-2-1-3-1zM18 -4l-4 2-6 2-2 1-3 0 3 3 2-1 6-2 2-1 3-1 2-1zM8 -22l0 17 34 0 0-17-15 0 0-4 20 0 0-3-12 0 0-5 9 0 0-4-9 0 0-4-4 0 0 4-12 0 0-4-4 0 0 4-9 0 0 4 9 0 0 5-12 0 0 3 20 0 0 4zM19 -29l0-5 12 0 0 5zM12 -12l11 0 0 4-11 0zM27 -12l11 0 0 4-11 0zM12 -20l11 0 0 5-11 0zM27 -20l11 0 0 5-11 0z"/><path id="r5188" d="M5 -39l0 43 4 0 0-40 32 0 0 35-1 1-8 0 2 4 6 0 2-1 1 0 2-2 0-40zM33 -33l-1 2-1 3-2 4-2 2-1 2-4-4-2-1-1-2-2-2-2-1-3 2 2 2 2 1 8 8-2 2-2 3-2 2-3 2-2 2-2 1 3 3 12-12 2 1 1 2 2 2 1 2 2 1 1 2 3-3-2-1-2-4-4-4-2-1 2-3 1-2 2-2 1-3 1-2 2-3z"/><path id="r77f3" d="M3 -38l0 3 15 0-2 5-2 4-3 5-3 4-7 7 3 3 1-2 2-1 4-4 1-2 0 20 4 0 0-4 24 0 0 4 4 0 0-25-28 0 1-3 4-8 1-3 25 0 0-3zM16 -3l0-15 24 0 0 15z"/><path id="r4e5d" d="M4 -29l0 4 13 0 0 5-4 10-2 4-4 4-5 3 1 1 1 2 6-3 4-5 3-4 2-6 1-5 1-6 12 0 0 26 1 2 11 0 2-1 1-1 0-1 1-3 0-3-4-2 0 7-1 0-1 1-5 0-1-1 0-28-16 0 1-2 0-10-4 0 0 12z"/><path id="r666f" d="M12 -32l26 0 0 3-26 0zM12 -38l26 0 0 4-26 0zM13 -14l24 0 0 4-24 0zM31 -3l3 1 4 2 3 1 2 1 1 1 3-2-6-3-3-2-4-2zM15 -6l-2 1-2 2-4 2-3 1-2 0 3 3 2-1 3-1 4-2 2-2 2-1zM22 -25l1 2-20 0 0 3 44 0 0-3-20 0-1-2-1-1 17 0 0-14-34 0 0 14 16 0zM10 -17l0 10 13 0 0 7-1 1-6 0 2 3 7 0 2-4 0-7 14 0 0-10z"/><path id="r9547" d="M36 -3l2 1 2 2 2 1 3 3 3-2-2-2-4-2-2-2-2-1zM29 -5l-3 3-6 3 2 3 6-3 3-3 2-1zM33 -42l-1 2 0 3-10 0 0 3 9 0 0 3-7 0 0 22-4 0 0 4 28 0 0-4-3 0 0-22-11 0 1-3 12 0 0-3-11 0 1-5zM27 -9l0-3 14 0 0 3zM27 -23l14 0 0 3-14 0zM27 -25l0-3 14 0 0 3zM27 -18l14 0 0 4-14 0zM9 -42l-1 2-1 3-2 4-3 3 2 4 1-2 3-3 1-2 11 0 0-3-10 0 1-3 1-2zM3 -17l0 3 7 0 0 11-1 2-2 2 2 3 1-1 1 0 1-1 2-1 2-2 4-2-1-3-6 3 0-11 7 0 0-3-7 0 0-7 6 0 0-3-13 0 0 3 4 0 0 7z"/><path id="r8862" d="M37 -39l0 3 11 0 0-3zM17 -33l4 0 0 3-4 0zM17 -28l4 0 0 2-4 0zM17 -38l4 0 0 3-4 0zM14 -40l0 17 10 0 0-17zM28 -33l5 0 0 3-5 0zM28 -28l5 0 0 2-5 0zM28 -38l5 0 0 3-5 0zM26 -40l0 17 9 0 0-17zM9 -42l-4 8-2 2-1 2 2 2 1-2 4-4 1-2 1-3 2-2zM37 -28l0 4 4 0 0 24-1 0-1 1-3-1 1 4 4 0 2-1 1-1 0-26 4 0 0-4zM25 -11l0 3-6 0 0-3zM24 -22l2 3-7 0 1-3-3-1 0 2-2 4-2 2-1 2-2 2 2 2 4-4 0 16 3 0 0-2 16 0 0-3-7 0 0-3 6 0 0-3-6 0 0-3 6 0 0-2-6 0 0-3 7 0 0-3-6 0-2-4zM25 -13l-6 0 0-3 6 0zM25 -5l0 3-6 0 0-3zM10 -32l-1 3-1 2-1 3-4 4-1 2 2 3 1-2 2-2 0 23 3 0 0-27 4-8z"/><path id="r91d1" d="M10 -11l4 8 1 1 3-1-2-4-1-1-2-4zM37 -12l-3 6-2 1-1 2 3 1 3-3 3-6zM25 -42l-6 6-8 6-5 2-4 2 1 2 1 1 2 0 6-3 0 2 11 0 0 7-17 0 0 4 17 0 0 12-20 0 0 4 44 0 0-4-20 0 0-12 17 0 0-4-17 0 0-7 11 0 0-3 8 4 1-2 2-1-4-2-4-1-4-2-4-3-3-2-3-3 1-2zM37 -27l-24 0 2-1 3-2 2-1 2-2 1-2 2-1 2 1 4 4 2 1 2 2z"/><path id="r534e" d="M26 -41l0 10-2 0-4 2-2 0 1 3 2 0 2-1 2 0 1-1 0 4 1 3 0 1 1 1 2 1 13 0 2-1 1-1 0-1 1-2 0-3-3-1-1 3 0 1-1 1-11 0-1-2 0-5 9-3 2-1 2-2 3-1-3-3-10 5-3 1 0-8zM16 -42l-2 3-2 2-2 3-2 2-6 4 3 3 2-1 1-2 2-1 1-1 0 13 4 0 0-17 1-2 3-3 1-2zM3 -11l0 4 20 0 0 11 4 0 0-11 20 0 0-4-20 0 0-6-4 0 0 6z"/><path id="r676d" d="M20 -33l0 3 27 0 0-3zM28 -41l3 6 0 1 4-1-1-2 0-2-1-2-2-1zM10 -42l0 11-7 0 0 3 7 0-1 3-1 4-2 3-1 3-2 3-1 2 2 4 2-4 1-3 1-2 1-3 1-2 0 24 3 0 0-25 2 2 3 6 2-3-2-4-2-2-1-2-2-2 0-2 6 0 0-3-6 0 0-11zM24 -25l0 12-1 3 0 3-4 6-3 3 2 2 4-2 2-4 2-3 1-4 1-3 0-9 9 0 0 23 1 1 3 1 3 0 2-1 2-2 0-7-3-2 0 8-4 0 0-25z"/><path id="r9976" d="M42 -32l-4 4-4 2-3-6 15-2 0-3-16 1 0-6-4 0 0 2 1 3 0 2-6 0 0 4 7-1 1 2 0 2 1 2 1 1-1 1-2 1-2 0-2 1-2 0-2 1 3 3 1-1 2 0 4-2 2 0 1-1 2 2 4 2 1 1 4 0 2-2 1-2 0-3-2-2-1 3 0 2-1 1-2-1-3-1-2-2 6-3 1-1 1-2 2-1zM19 -15l0 3 7 0 0 3-1 3-1 2-4 4-4 1 3 3 6-4 2-2 2-3 0-3 1-4 5 0 0 13 2 2 8 0 2-1 0-1 1-2 0-3-3-1 0 3-1 2-4 0-2-1 0-11 8 0 0-3zM7 -42l0 4-1 3-1 4-3 9 3 2 0-2 1-1 1-2 0-2 2-4 6 0-1 3 0 2-1 2 3 1 0-2 3-6 1-3-11 0 1-2 0-3 1-2zM8 4l0-1 2-2 2-1 3-2 3-3-1-3-5 4 0-20-4 0 0 22-1 2-1 1z"/><path id="r9e70" d="M10 -3l0 2 29 0 0-2zM34 -26l0 2-7 0 0-2zM22 -19l-2 3-6 0 0 11 29 0 0 5-1 1-2 1-3 0-3-1 1 3 8 0 2-1 0-1 1-1 0-4 1-3 0-2-30 0 0-5 5 0-1 2 2 0 4 2 1 1 2 0 2-2-2-1-3-1-2 0-2-1 16 0 0 2-6 0 1 2 7 0 1-1 0-2 1-2 0-2-20 0 1-1 3 0 0-1 19 0 0-2-9 0 0-3 7 0 0-1-7 0 0-2 7 0 0-2-7 0 0-3 9 0 0-2-8 0-2-3-3 1 1 2-6 0 2-2-4-1 0 2-3 3-1 2-2 1-1 1 2 3 1-2 2-1 0 9zM34 -28l-7 0 0-3 7 0zM34 -23l0 3-7 0 0-3zM23 -41l2 2-19 0 0 24-1 4-1 5-2 8 3 2 1-4 2-5 1-5 0-26 9 0-2 4-5 5-2 1 3 3 1-2 2-1 0 9 3 0 0-13 1-2 1-1 1-2-2-1 28 0 0-3-18 0-1-1-1-2z"/><path id="r6f6d" d="M21 -14l20 0 0 3-20 0zM21 -19l20 0 0 3-20 0zM4 -39l3 2 4 2 1 2 3-3-2-1-2-2-4-2zM2 -25l4 2 1 1 2 1 1 1 3-3-2-1-1-1-6-3zM3 0l4 3 1-2 1-3 2-3 1-3 1-2 1-3-3-2-1 2-1 3-2 3-1 3-1 2zM18 -21l0 13 11 0 0 3-15 0 0 3 15 0 0 6 4 0 0-6 15 0 0-3-15 0 0-3 11 0 0-13zM16 -34l0 10 30 0 0-10-9 0 0-3 11 0 0-3-33 0 0 3 10 0 0 3zM28 -37l5 0 0 3-5 0zM20 -31l5 0 0 5-5 0zM28 -31l5 0 0 5-5 0zM37 -31l5 0 0 5-5 0z"/><path id="r4e3d" d="M10 -20l5 10 3-1-5-10zM32 -19l4 8 1 1 3-1-5-10zM3 -39l0 4 44 0 0-4zM5 -30l0 34 4 0 0-31 10 0 0 26-1 1-4 0 1 4 2 0 2-1 2 0 1-1 1-3 0-29zM27 -30l0 34 4 0 0-31 10 0 0 26-1 1-4 0 1 4 5 0 1-1 2-1 0-32z"/><path id="r629a" d="M8 -42l0 10-6 0 0 4 6 0 0 11-2 0-4 2 0 3 6-2 0 13-1 1-4 0 1 4 5 0 2-2 1-3 0-14 7-2-1-3-6 2 0-10 6 0 0-4-6 0 0-10zM20 -39l0 4 9 0 0 5-1 2 0 4-10 0 0 3 10 0-1 4-2 5-1 4-3 3-3 4-4 2 1 2 2 1 4-3 6-8 2-4 2-10 2 0 0 22 1 1 2 1 9 0 2-1 1-1 0-6-3-1 0 3-1 2-6 0-2-1 0-19 12 0 0-3-16 0 0-10 1-1 11 0 0-4z"/><path id="r4f59" d="M32 -8l2 1 6 6 2 1 1 2 3-2-1-2-2-1-6-6-2-1zM14 -10l-7 7-2 1-2 2 3 2 2-1 8-8 1-2zM25 -42l-3 3-16 12-5 2 3 3 1-1 2-1 2 0 1-1 2-1 0 3 11 0 0 6-18 0 0 4 18 0 0 12-1 1-7 0 2 4 7 0 1-1 2-1 0-15 19 0 0-4-19 0 0-6 11 0 0-4-26 0 3-1 4-4 2-1 4-4 6 6 4 2 4 3 3 2 4 2 1-2 2-2-4-1-4-2-4-3-3-2-4-3-3-3 1-1z"/><path id="r5409" d="M23 -42l0 7-20 0 0 4 20 0 0 7-17 0 0 4 38 0 0-4-17 0 0-7 20 0 0-4-20 0 0-7zM9 -15l0 19 4 0 0-2 25 0 0 2 4 0 0-19zM13 -1l0-10 25 0 0 10z"/><path id="r6ce2" d="M5 -39l1 1 2 1 2 2 2 1 1 1 2-3-1-1-2-1-3-3-2-1zM2 -25l6 3 1 1 2 1 2-3-1-1-8-4zM3 1l3 2 2-2 1-3 1-2 2-3 2-6-3-2-2 6-2 3-1 2-2 3zM30 -31l0 9-9 0 0-9zM18 -35l0 17-1 4 0 4-1 4-4 8 3 2 2-3 2-4 2-8 0-8 2 0 1 2 1 3 2 4 4 4-2 2-8 4-3 1 2 1 1 2 10-5 2-2 2 1 2 2 6 3 3 1 1-2 1-1-10-5-2-2 2-2 1-2 2-3 1-2 1-3 1-4-2-1-1 1-7 0 0-9 9 0-3 6 4 1 0-2 4-8-3-1-11 0 0-7-4 0 0 7zM26 -19l14 0-4 8-2 1-1 2-1-2-2-1z"/><path id="r821f" d="M20 -29l1 2 2 1 2 2 2 1 1 1 2-2-1-1-1-2-2-1-2-2-2-1zM19 -12l2 1 3 3 2 1 1 1 1 2 3-3-2-1-1-1-1-2-4-2-1-1zM23 -42l-1 2 0 2-1 2-11 0 0 16-7 0 0 4 7 0 0 3-3 9-2 3-3 3 3 2 3-3 2-3 2-4 1-3 1-4 0-3 22 0 0 15-1 1-7 0 1 2 0 2 6 0 1-1 2 0 1-1 1-3 0-15 8 0 0-4-8 0 0-16-15 0 2-4 0-2zM14 -33l22 0 0 13-22 0z"/><path id="r6e29" d="M22 -29l17 0 0 5-17 0zM22 -37l17 0 0 5-17 0zM19 -40l0 19 24 0 0-19zM5 -39l6 3 3 3 2-3-1-1-2-1-2-2-2-1-2 0zM2 -25l8 4 1 1 2-3-1-1-8-4zM3 1l3 2 2-2 1-3 2-3 1-3 2-2 1-3-3-2-1 3-2 3-1 2-2 3-1 3zM13 -1l0 4 35 0 0-4-3 0 0-15-28 0 0 15zM20 -1l0-12 5 0 0 12zM28 -1l0-12 5 0 0 12zM36 -1l0-12 5 0 0 12z"/><path id="r76d8" d="M20 -21l1 1 4 2 1 1 2 1 1-2-1-2-4-2-3-1zM23 -42l-1 2 0 2-11 0 0 10-8 0 0 4 7 0 0 1-1 2-1 1-1 2-2 1-1 1 2 3 3-2 3-3 1-2 0-2 1-2 23 0 0 6-6 0 1 4 3 0 2-1 2 0 1-1 1-2 0-6 7 0 0-4-7 0 0-10-15 0 1-4zM20 -32l6 3 1 1-13 0 0-7 23 0 0 7-10 0 2-2-1-1-6-3zM8 -13l0 12-6 0 0 4 46 0 0-4-6 0 0-12zM11 -1l0-9 7 0 0 9zM22 -1l0-9 6 0 0 9zM32 -1l0-9 6 0 0 9z"/><path id="r8d35" d="M23 -15l0 5-1 3-2 2-3 2-6 2-7 2 2 3 8-2 6-3 3-3 3-2 1-3 0-6zM26 -3l3 1 4 1 6 2 3 2 2 1 2-3-2-1-3-2-3-1-4-1-6-2zM10 -20l0 15 3 0 0-12 24 0 0 12 3 0 0-15zM12 -36l11 0 0 4-11 0zM27 -36l11 0 0 4-11 0zM3 -26l0 3 44 0 0-3-20 0 0-3 14 0 0-10-14 0 0-3-4 0 0 3-14 0 0 10 14 0 0 3z"/><path id="r987a" d="M18 -40l0 43 4 0 0-43zM12 -37l0 34 3 0 0-34zM5 -40l0 24-1 4 0 7-1 3-1 4 2 2 2-4 1-3 0-4 1-4 0-29zM26 -31l0 23 3 0 0-20 13 0 0 20 4 0 0-23-10 0 0-2 1-2 1-1 10 0 0-4-24 0 0 4 10 0-1 2-1 3zM34 -24l0 12-2 6-2 3-3 2-4 3 2 2 3-1 2-2 2-1 1-2 2-1 1-2 3 3 2 1 2 2 1 2 1 1 3-2-10-10-2 2 1-2 0-16z"/><path id="r66f2" d="M29 -42l0 10-8 0 0-10-4 0 0 10-12 0 0 36 3 0 0-3 34 0 0 3 3 0 0-36-12 0 0-10zM8 -3l0-11 9 0 0 11zM42 -3l-9 0 0-11 9 0zM21 -3l0-11 8 0 0 11zM8 -18l0-10 9 0 0 10zM42 -18l-9 0 0-10 9 0zM21 -18l0-10 8 0 0 10z"/><path id="r9756" d="M3 -33l0 4 17 0 0-4zM4 -26l1 3 0 3 1 3 0 9 4-1-1-2 0-6-1-4 0-3-1-3zM8 -40l0 1 2 4 0 2 4-1-2-4 0-2-1-1zM14 -27l0 3-1 4 0 3-1 4 0 3-1 3-2 1-2 0-2 1-3 0 1 4 3-1 2 0 9-3 3 0 0-4-6 1 1-2 0-3 1-4 0-3 1-3 0-4zM32 -42l0 4-10 0 0 3 10 0 0 3-9 0 0 3 9 0 0 3-12 0 0 3 28 0 0-3-12 0 0-3 10 0 0-3-10 0 0-3 11 0 0-3-11 0 0-4zM41 -17l0 4-14 0 0-4zM24 -20l0 24 3 0 0-8 14 0 0 5-5 0 1 3 5 0 1-1 2-1 0-22zM27 -11l14 0 0 4-14 0z"/><path id="r767e" d="M9 -28l0 32 4 0 0-3 25 0 0 3 4 0 0-32-17 0 0-2 1-2 0-2 1-2 20 0 0-3-44 0 0 3 19 0 0 4-1 2 0 2zM13 -12l25 0 0 9-25 0zM13 -16l0-9 25 0 0 9z"/><path id="r8272" d="M24 -25l0 9-12 0 0-9zM27 -25l12 0 0 9-12 0zM30 -34l-4 4-1 2-14 0 6-6zM18 -42l-2 3-3 3-2 3-3 3-6 4 2 4 2-1 2-2 0 21 1 3 0 1 2 2 2 1 29 0 4-2 2-4 0-4-2 0-2-1 0 5-2 2-2 1-24 0-2-1-1 0-1-1 0-10 27 0 0 2 4 0 0-18-14 0 3-3 1-2 2-1 1-2-3-2-14 0 1-1 1-2z"/><path id="r6c38" d="M14 -39l3 1 4 1 3 1 3 2 3 1 2 1 2-4-2-1-6-2-4-1-6-2zM3 -22l0 4 12 0-8 12-3 2-2 2 3 3 3-2 3-3 3-4 4-8 2-5-3-1zM43 -28l-7 7-3 2-2 1 0-1-2-4-1-1 0-2-1-2 0-4-18 0 0 4 14 0 0 27-1 1-7 0 1 2 0 2 8 0 1-1 2-1 0-21 2 5 3 4 6 6 4 3 4 2 2-4-3-1-3-2-2-1-5-5-2-3 2-1 3-2 8-8z"/><path id="r90f4" d="M9 -42l0 10-6 0 0 4 6 0-1 4-1 3-1 4-2 3-2 6 2 2 3-6 1-3 1-2 0-3 0 24 4 0 0-26 1 2 3 3 2-3-6-6 0-2 4 0 0-4-4 0 0-10zM23 -42l0 10-5 0 0 4 5 0-1 4-2 4-1 4-1 3-4 6 3 2 1-1 1-3 1-2 3-9 0 24 3 0 0-25 2 2 1 2 2 1 1-3-1-1-1-2-4-4 0-2 6 0 0-4-6 0 0-10zM33 -40l0 44 4 0 0-40 7 0-3 6-1 3-2 4 2 3 2 2 1 2 1 1 0 6-1 2-6 0 1 4 4 0 3-1 2-4 0-6-1-2-1-3-1-2-2-2 1-2 2-6 1-2 1-3 1-2-3-2z"/><path id="r6842" d="M9 -42l0 10-6 0 0 3 6 0-1 4-1 3-1 4-2 3-1 3-2 2 2 4 2-4 2-3 1-2 1-3 0-3 0 25 4 0 0-26 2 4 1 1 0 2 3-3-1-2-2-2-2-3-1-2 0-2 6 0 0-3-6 0 0-10zM31 -42l0 7-10 0 0 3 10 0 0 8-12 0 0 3 29 0 0-3-13 0 0-8 10 0 0-3-10 0 0-7zM31 -19l0 6-11 0 0 3 11 0 0 8-15 0 0 4 32 0 0-4-13 0 0-8 11 0 0-3-11 0 0-6z"/><path id="r6797" d="M34 -42l0 11-9 0 0 3 8 0-1 4-6 12-2 3-3 2 2 4 2-3 2-2 4-6 1-3 2-4 0 25 3 0 0-25 2 3 2 6 2 3 1 3 2 2 1-2 2-1-6-9-2-4-1-4-2-4 9 0 0-3-10 0 0-11zM12 -42l0 11-9 0 0 3 8 0-1 4-1 3-2 4-4 6-2 2 2 2 1 2 1-2 1-3 2-2 1-3 2-3 1-3 0 25 3 0 0-26 3 3 2 4 1 1 3-3-2-2-1-2-6-6 0-1 7 0 0-3-7 0 0-11z"/><path id="r97f6" d="M5 -32l1 2 1 3 1 2 3-1-1-2-1-3-1-2zM17 -7l0 5-9 0 0-5zM17 -10l-9 0 0-5 9 0zM10 -41l2 4-9 0 0 3 19 0 0-3-7 0 0-1-2-4zM16 -33l0 2-1 2 0 2-1 2-12 0 0 3 21 0 0-3-6 0 1-2 0-2 1-1 1-2zM5 -18l0 22 3 0 0-2 13 0 0-20zM26 -17l0 21 3 0 0-2 13 0 0 2 3 0 0-21zM29 -2l0-11 13 0 0 11zM24 -39l0 3 8 0-2 6-1 2-1 3-2 2-3 2 2 2 6-4 1-3 2-3 1-3 0-4 8 0 0 7-1 2 0 3-2 1-5 0 1 3 7 0 2-1 0-1 1-2 0-14 1-1z"/><path id="r5173" d="M11 -40l1 2 3 3 1 2 0 2-10 0 0 3 17 0 0 9-20 0 0 4 19 0-1 3-2 2-2 3-4 3-5 2-6 3 2 1 1 2 6-2 5-3 3-3 3-2 4-6 2 4 6 6 3 2 8 4 2-2 1-2-4-1-4-2-4-3-3-2-3-3-2-4 19 0 0-4-20 0 0-9 17 0 0-3-10 0 3-6 3-3-4-2-2 4-1 1-3 6-14 0 4-2-1-2-1-1-2-4-2-2z"/><path id="r67f3" d="M27 -34l0 22-5 1 0-23 2-1 1-1 4-2 1-1 2-1-3-2-1 1-8 4-1 1 0 24-1 2-1 1 1 3 1 0 1-1 1 0 2-1 3-1-4 8-2 1-2 2 2 2 4-3 3-4 2-4 1-4 0-23zM34 -37l0 41 3 0 0-38 6 0 0 25-1 1-4 0 1 3 4 0 2-1 1-1 0-30zM8 -42l0 11-5 0 0 3 5 0-1 4 0 3-2 4-2 6-1 2 2 4 1-2 0-2 3-6 0-2 0 21 4 0 0-25 3 6 2-3-1-1-1-3-2-2-1-2 0-2 4 0 0-3-4 0 0-11z"/><path id="r8d3a" d="M23 -16l0 6-1 2-2 3-3 2-5 2-8 2 2 3 8-2 6-3 4-3 2-3 1-2 0-7zM26 -3l6 2 4 1 3 1 2 2 3 1 1-3-2-1-3-2-12-4zM10 -21l0 16 4 0 0-13 22 0 0 13 4 0 0-16zM32 -36l10 0 0 9-10 0zM28 -39l0 15 17 0 0-15zM12 -42l-1 4-7 0 0 3 7 0-1 3-1 2-3 3-2 1-2 2 2 2 3-1 6-6 1-3 0-3 7 0 0 6-1 2-1 1-6 0 1 3 6 0 3-2 1 0 0-3 1-2 0-8-10 0 0-4z"/><path id="r6765" d="M38 -31l-5 10 3 1 1-2 1-1 2-4 1-1 1-2zM9 -30l1 2 2 2 0 2 2 4 3-2 0-1-4-8zM23 -42l0 6-18 0 0 4 18 0 0 12-20 0 0 4 17 0-2 3-3 3-3 2-3 3-4 2-3 2 1 1 1 2 4-2 3-2 12-12 0 18 4 0 0-18 3 3 2 3 4 3 3 3 3 2 4 2 1-2 1-1-6-4-4-3-3-2-3-3-2-3 17 0 0-4-20 0 0-12 18 0 0-4-18 0 0-6z"/><path id="r6e05" d="M4 -39l2 1 3 3 2 1 1 1 2-3-3-3-3-1-2-1zM2 -25l2 1 1 1 4 2 1 1 2-3-1-1-2-1-1-1-4-2zM3 1l4 2 1-2 1-3 2-3 1-2 2-6-3-2-2 6-2 3-1 2-2 3zM22 -11l18 0 0 4-18 0zM22 -13l0-4 18 0 0 4zM29 -42l0 4-13 0 0 3 13 0 0 3-12 0 0 3 12 0 0 3-15 0 0 3 34 0 0-3-16 0 0-3 12 0 0-3-12 0 0-3 14 0 0-3-14 0 0-4zM18 -20l0 24 4 0 0-8 18 0 0 4-1 1-6 0 1 3 6 0 1-1 2-1 0-22z"/><path id="r8fdc" d="M3 -37l2 1 2 2 2 1 3 3 3-3-4-2-2-2-2-1-1-1zM19 -39l0 4 25 0 0-4zM13 -24l-11 0 0 3 7 0 0 16-2 1-5 5 2 3 6-6 2 0 2 1 2 2 2 1 2 0 2 1 25 0 1-2 0-2-6 0-3 1-14 0-3-1-2 0-1-1-2-1-3-1-1-1zM16 -28l0 4 8 0 0 4-1 3-1 4-4 4-4 2 3 3 4-2 6-9 0-5 1-4 6 0 0 17 2 2 9 0 1-1 1-2 0-5-3-1 0 5-1 1-4 0-2-2 0-14 10 0 0-4z"/><path id="r68a7" d="M21 -31l0 3 6 0-1 2 0 4-1 1-7 0 0 1-2-2-2-3-1-2 0-2 6 0 0-3-6 0 0-10-4 0 0 10-7 0 0 3 7 0-1 4-2 6-3 6-2 3 2 1 0 2 2-1 1-2 1-3 1-2 1-3 0-2 0 24 4 0 0-27 2 4 1 1 2-2 0 2 30 0 0-3-5 0 0-6 1-2 0-2-13 0 1-6 14 0 0-3-27 0 0 3 9 0-1 6zM21 -13l0 17 3 0 0-2 17 0 0 2 3 0 0-17zM24 -2l0-8 17 0 0 8zM29 -21l1-7 10 0 0 2-1 3 0 2z"/><path id="r8087" d="M9 -22l0 2 14 0 0 2-20 0 0 3 20 0 0 3-15 0 0 2 15 0 0 2-17 0 0 3 17 0 0 2-20 0 0 3 20 0 0 4 4 0 0-4 20 0 0-3-20 0 0-2 17 0 0-3-17 0 0-2 15 0 0-5 5 0 0-3-5 0 0-4-15 0 0-3-4 0 0 3zM27 -15l11 0 0 3-11 0zM27 -18l0-2 11 0 0 2zM12 -41l0 1 1 2-7 0 0 8-1 2 0 2-3 3 2 3 2-2 3-6 14 0 0-10-6 0-2-4zM9 -35l11 0 0 4-11 0zM30 -35l10 0-2 2-1 2-2 1-2-1-1-2zM31 -42l-3 6-2 1-1 2-2 1 3 2 2-2 2 1 1 1 1 2-2 1-2 0-2 1 2 3 4-2 1 0 2-1 2 1 1 1 2 0 4 2 2 0 2-2-2-1-2 0-1-1-2-1-2 0-1-1 1-2 2-1 2-4 4 0 0-3-15 0 1-1 1-2z"/><path id="r4e1c" d="M13 -13l-1 2-2 3-1 2-4 4-1 2 1 1 2 1 2-2 1-2 2-2 2-3 1-2 2-3zM33 -12l2 3 6 6 1 2 2 2 3-2-1-1-2-3-8-8zM4 -35l0 3 12 0-1 3-2 2-1 2-1 1-1 2-2 2 0 2 1 2 1-1 15 0 0 16-1 1-6 0 1 2 0 2 3 0 2-1 3 0 2-2 0-18 15 0 0-4-15 0 0-7-4 0 0 7-12 0 2-1 4-8 2-2 25 0 0-3-24 0 3-6-4-1-1 1 0 2-2 4z"/><path id="r839e" d="M11 -22l0 3 28 0 0-3zM3 -14l0 3 13 0 0 3-1 3-2 2-3 2-3 1-5 1 2 3 5-1 4-2 3-2 4-6 0-4 9 0 0 13 1 1 15 0 1-1 1-2 0-1 1-3-4-1 0 3-2 2-7 0-2-1-1-1 0-9 15 0 0-3zM22 -33l2 4-20 0 0 9 4 0 0-6 34 0 0 6 4 0 0-9-18 0-2-4-1-1zM3 -38l0 3 11 0 0 4 4 0 0-4 14 0 0 4 4 0 0-4 11 0 0-3-11 0 0-4-4 0 0 4-14 0 0-4-4 0 0 4z"/><path id="r60e0" d="M13 -8l0 8 1 2 1 0 1 1 19 0 2-2 1-2 0-3-3-1-1 3 0 1-1 1-15 0-1-1 0-7zM20 -9l6 3 1 2 2 1 2-3-1-1-4-2-1-1-2-1zM38 -7l1 1 1 2 2 2 1 2 0 2 4-1-3-6-2-2-1-2zM7 -9l0 2-4 8 3 1 1-1 3-6 0-2zM4 -15l0 4 11 0 6-1 20 0 3 3 3-2-2-1-2-2-4-2-2-2-2-1 8 0 0-14-16 0 0-3 19 0 0-3-19 0 0-3-4 0 0 3-19 0 0 3 19 0 0 3-16 0 0 14 16 0 0 4zM11 -24l12 0 0 3-12 0zM27 -24l12 0 0 3-12 0zM11 -30l12 0 0 3-12 0zM27 -30l12 0 0 3-12 0zM32 -17l4 2-9 0 0-4 7 0z"/><path id="r660e" d="M17 -23l0 10-9 0 0-10zM17 -26l-9 0 0-10 9 0zM4 -39l0 35 4 0 0-5 12 0 0-30zM43 -36l0 8-14 0 0-8zM25 -40l0 26-1 4-2 4-6 8 2 2 3-2 2-3 2-2 3-9 15 0 0 11-2 1-7 0 2 4 7 0 1-1 2-1 0-42zM43 -24l0 9-15 0 1-3 0-6z"/><path id="r8d63" d="M8 -16l11 0 0 4-11 0zM8 -22l11 0 0 4-11 0zM27 -14l0 12 3 0 0-10 12 0 0 10 3 0 0-12zM35 -10l-2 6-1 2-2 2-3 1-4 1 1 2 5-1 3-2 4-4 1-3 1-4zM36 0l2 0 3 1 4 2 1 1 2-2-10-5zM10 -41l2 4-9 0 0 2 21 0 0-2-8 0-1-3-2-2zM31 -36l10 0-3 3-2 1-2-1zM31 -42l-1 1-2 4-1 1-1 2-2 1 2 2 3-3 2 1 3 3-2 0-6 3-2 0 0-2-5 0 2-5-3-1-1 2 0 2-1 2-6 0 0-2-1-2 0-1-3 0 1 3 1 2-6 0 0 3 22 0 1 2 2-1 2 0 6-3 1-1 6 3 2 0 2 1 2-3-2 0-2-1-2 0-1-1-2 0 1-2 2-1 1-2 1-1 1-2-1-1-11 0 1-3zM24 -19l0 3 24 0 0-3-10 0 0-4 6 0 0-2-16 0 0 2 6 0 0 4zM5 -24l0 14 7 0 0 4-10 0 0 3 10 0 0 7 3 0 0-7 9 0 0-3-9 0 0-4 7 0 0-14z"/><path id="r798f" d="M7 -40l1 1 2 4 0 2 4-2-1-1-3-6zM27 -30l14 0 0 6-14 0zM23 -33l0 12 21 0 0-12zM20 -40l0 4 27 0 0-4zM32 -15l0 5-8 0 0-5zM35 -15l8 0 0 5-8 0zM32 -7l0 5-8 0 0-5zM35 -7l8 0 0 5-8 0zM3 -33l0 4 12 0-1 3-3 3-2 3-5 5-3 2 2 4 3-3 2-1 2-2 0 19 3 0 0-22 6 6 2-3 0 19 3 0 0-2 19 0 0 2 4 0 0-22-26 0 0 3-2-1-1-2-2-1-2-2 1-1 1-2 2-2 0-2 1-2 1-1-2-2z"/><path id="r8386" d="M8 -21l0 25 3 0 0-8 13 0 0 8 3 0 0-8 13 0 0 4-1 1-7 0 1 3 7 0 1-1 2-1 0-23-16 0 0-4 19 0 0-3-3 0 1-2-2 0-6-3-1 1 0-3 12 0 0-4-12 0 0-3-3 0 0 3-14 0 0-3-4 0 0 3-11 0 0 4 11 0 0 4 4 0 0-4 14 0 0 3 3 0-1 1 6 3 2 0-15 0 0-5-3 0 0 5-20 0 0 3 20 0 0 4zM24 -11l0 4-13 0 0-4zM27 -11l13 0 0 4-13 0zM24 -14l-13 0 0-4 13 0zM27 -14l0-4 13 0 0 4z"/><path id="r7530" d="M5 -39l0 43 4 0 0-4 33 0 0 4 3 0 0-43zM9 -3l0-14 14 0 0 14zM42 -3l-15 0 0-14 15 0zM9 -21l0-14 14 0 0 14zM42 -21l-15 0 0-14 15 0z"/><path id="r9f99" d="M30 -39l3 3 2 1 1 1 2 1 1 2 2-3-2-2-2-1-1-2-4-2zM40 -24l-1 3-1 2-8 8 0-15 17 0 0-4-26 0 0-4 1-2 0-6-4 0 0 8-1 2 0 2-14 0 0 4 14 0-1 5-2 6-2 4-2 5-8 6 1 2 2 1 4-3 4-4 3-5 2-5 2-6 1-6 5 0 0 18-1 2-10 5 2 1 1 2 2-1 1-1 4-2 1-1 0 2 3 3 2 0 2 1 9 0 2-1 2 0 1-1 0-2 1-2 0-2-3-2-1 3 0 2-1 1-12 0-1-2 0-3 3-2 2-3 5-5 4-6z"/><path id="r5ca9" d="M3 -24l0 4 13 0-2 3-2 2-2 3-3 2-3 3-3 1 3 4 1-1 2-1 1-2 2-1 2-2 0 13 4 0 0-2 24 0 0 2 4 0 0-18-28 0 3-3 1-2 1-1 26 0 0-4zM16 -2l0-8 24 0 0 8zM23 -42l0 9-13 0 0-7-4 0 0 11 38 0 0-11-4 0 0 7-13 0 0-9z"/><path id="r6cc9" d="M12 -27l26 0 0 5-26 0zM12 -35l26 0 0 5-26 0zM4 -16l0 4 11 0-1 2-2 3-2 2-3 2-3 1-2 1 2 4 3-2 4-2 3-3 2-3 4-8-2-1zM23 -42l-2 4-13 0 0 19 15 0 0 19-1 1-4 0-3-1 2 4 6 0 2-1 1-1 1-2 0-12 2 3 6 6 3 2 4 2 4 1 1-1 1-2-2-1-6-2-2-1-4-4 4-2 3-3 4-2-3-3-3 3-2 1-2 2-2 1-1 1-2-2-3-6 15 0 0-19-17 0 2-4z"/><path id="r6f33" d="M23 -16l18 0 0 3-18 0zM23 -22l18 0 0 4-18 0zM4 -39l4 2 2 2 2 1 1 1 3-3-8-4-1-1zM2 -25l8 4 1 1 2-3-1-1-8-4zM4 1l3 2 1-2 2-3 1-2 2-3 1-3 2-3-3-2-2 3-1 3-2 3-2 2-1 3zM20 -24l0 14 10 0 0 4-14 0 0 3 14 0 0 7 4 0 0-7 14 0 0-3-14 0 0-4 11 0 0-14zM29 -41l1 1 0 2-12 0 0 3 8 0-3 1 1 2 0 2-8 0 0 3 32 0 0-3-9 0 2-4-3-1-1 2-1 3-10 0 2-1-2-4 20 0 0-3-12 0-2-4z"/><path id="r53a6" d="M19 -21l19 0 0 3-19 0zM19 -16l19 0 0 2-19 0zM19 -26l19 0 0 3-19 0zM6 -40l0 29-1 4-1 5-2 4 3 2 2-4 3-15 0-21 37 0 0-4zM16 -28l0 17 7 0-1 1-4 2-3 1-2 1-3 1 2 3 4-2 1 0 2-1 2 1 3 3-2 0-2 1-3 0-2 1-6 0 2 3 3 0 3-1 3 0 3-1 2-1 3-1 6 2 2 1 4 0 3 1 3 0 2-3-3 0-3-1-5 0-2-1-3 0 2-1 3-3 2-1 1-2-2-1-13 0 3-2 13 0 0-17-11 0 1-3 15 0 0-3-34 0 0 3 15 0-1 3zM35 -7l-3 3-2 0-2 1-2-1-1 0-2-1-1-2z"/><path id="r6885" d="M29 -23l2 1 1 2 4 2 2-2-2-1-1-1-2-1-2-2zM28 -12l2 1 3 3 2 1 2-2-2-1-3-3-2-1zM25 -42l-1 3-1 2-1 3-2 2-1 2-2 2 3 2 2-1 3-6 22 0 0-4-21 0 2-4zM41 -25l0 7-16 0 1-7zM23 -28l0 5-1 2 0 3-4 0 0 4 4 0-1 2 0 4-1 2 0 3 20 0-1 3-2 1-2 0-2-1 1 4 5 0 2-1 1-1 1-2 0-3 4 0 0-3-3 0 0-8 4 0 0-4-4 0 1-9 0-1zM41 -14l0 6-1 2-16 0 1-8zM8 -42l0 11-5 0 0 3 5 0 0 4-1 3-1 4-2 3-1 3-1 2 2 4 0-2 4-8 0-3 0 22 4 0 0-25 3 6 0 1 2-3-2-4-2-3-1-2 0-2 5 0 0-3-5 0 0-11z"/><path id="r6e90" d="M27 -20l15 0 0 4-15 0zM27 -27l15 0 0 4-15 0zM25 -10l-1 1 0 2-1 2-2 1-1 2-1 1 3 2 3-3 2-4 1-1 1-2zM39 -9l2 2 3 6 1 1 3-1-5-10zM4 -39l4 2 3 3 2 1 2-3-1-1-6-3-1-1zM2 -25l4 2 1 1 2 1 1 1 3-3-2-1-1-1-6-3zM3 1l3 2 2-2 2-6 1-2 1-3 2-3-3-2-2 3-2 6-2 3zM17 -40l0 23-2 10-2 5-2 4 3 2 4-10 2-10 0-5 1-5 0-10 27 0 0-4zM32 -35l0 2-1 3-8 0 0 17 9 0 0 14-6 0 2 3 5 0 1-1 2-1 0-15 10 0 0-17-11 0 1-2 1-3z"/><path id="r63ed" d="M24 -30l17 0 0 4-17 0zM24 -37l17 0 0 4-17 0zM21 -12l0 10 20 0 0-3-17 0 0-7zM9 -42l0 10-6 0 0 4 6 0 0 11-7 2 1 3 6-2 0 13-1 1-4 0 1 4 2 0 2-1 2 0 1-1 0-17 6-2 0-3-6 1 0-9 6 0 0-4-6 0 0-10zM21 -40l0 17 2 0 0 1-2 4-2 2-1 2-2 1 2 3 5-5 1-2 20 0-1 6 0 9-1 2-2 1-4 0 1 3 5 0 3-2 0-1 1-2 0-2 1-4 0-13-22 0 2-3-3 0 21 0 0-17zM33 -16l-2 4-1 1-1 2-2 1-1 1 2 2 2-2 2-1 1-2 2 2 2 1 2 2 1-2-1-1-1-2-4-2 1-2 1-1z"/><path id="r6f6e" d="M18 -20l9 0 0 4-9 0zM18 -26l9 0 0 4-9 0zM3 -39l2 1 4 4 2 1 2-3-1-1-2-1-2-2-2-1zM2 -25l4 2 3 3 3-3-4-2-2-2-2-1zM3 2l3 2 4-12 1-2 1-3-3-2-4 12-1 2zM21 -42l0 6-7 0 0 3 7 0 0 4-6 0 0 16 6 0 0 4-8 0 0 4 8 0 0 9 3 0 0-9 7 0 0-4-7 0 0-4 6 0 0-16-6 0 0-4 7 0 0-3-7 0 0-6zM43 -37l0 9-6 0 0-9zM33 -40l0 31-1 4-2 4-2 3 3 2 2-2 3-9 0-6 7 0 0 12-1 1-5 0 1 4 5 0 2-1 1-1 0-42zM43 -25l0 8-6 0 0-8z"/><path id="r6c55" d="M5 -39l4 2 2 2 2 1 1 1 2-3-1-1-4-2-2-2-2 0zM2 -25l8 4 1 1 2-3-1-1-8-4zM4 1l3 2 1-2 2-3 1-3 2-2 1-3 2-3-3-2-2 3-1 3-2 2-1 3-2 3zM18 -30l0 31 24 0 0 3 4 0 0-35-4 0 0 28-8 0 0-38-4 0 0 38-8 0 0-27z"/><path id="r5934" d="M27 -8l3 1 4 2 6 4 2 2 3 2 2-3-2-1-9-6-4-2-3-2zM10 -37l10 5 1 1 2-3-1-1-10-5zM5 -28l10 5 1 1 3-2-3-3-4-2-3-1-2-1zM3 -19l0 3 21 0-1 4-6 6-4 3-4 2-6 2 2 3 6-2 6-3 4-3 3-3 2-4 2-5 19 0 0-3-18 0 1-3 0-20-4 0 0 20-1 3z"/><path id="r6843" d="M19 -33l0 1 4 8 0 1 3-1-1-2 0-2-2-4-2-2zM44 -35l-1 2 0 2-1 2-1 1-2 4 3 1 1-2 1-1 3-6 1-1zM9 -42l0 10-7 0 0 3 6 0 0 4-1 3-2 4-2 6-2 2 2 2 0 2 4-8 1-3 1-2 0 23 3 0 0-27 3 6 1 1 2-3-1-1-1-3-4-4 0-2 5 0 0-3-5 0 0-10zM35 -42l0 44 1 1 11 0 0-2 1-1 0-2 1-3-4-1 0 6-5 0-2-2 0-15 7 7 1 2 2-3-2-2-1-2-2-2-2-1-1-1-2 1 0-24zM27 -42l0 24-4 2-3 3-2 1-1 1 2 3 1-1 2-1 1-2 2-1 1-1 0 3-2 6-2 2-6 4 2 3 5-3 3-4 2-4 2-10 0-25z"/><path id="r56ed" d="M13 -31l0 3 24 0 0-3zM10 -23l0 4 8 0 0 3-1 3-1 2-4 4-3 1 2 3 4-2 4-4 2-6 0-4 6 0 0 12 2 2 9 0 2-2 0-5-3-1 0 5-5 0-2-1 0-10 10 0 0-4zM4 -40l0 44 4 0 0-2 34 0 0 2 4 0 0-44zM8 -2l0-34 34 0 0 34z"/><path id="r6069" d="M11 -37l28 0 0 19-28 0zM8 -40l0 25 35 0 0-25zM14 -12l0 10 1 2 0 1 2 2 17 0 3-3 1-2 0-3-3-2-1 3 0 3-1 0-2 1-9 0-3-1-1-1 0-10zM22 -12l3 3 1 2 1 1 1 2 3-2-1-2-1-1-1-2-3-3zM36 -11l4 4 4 8 3-2 0-2-2-2-2-4-2-2-1-2zM8 -12l0 2-5 10 3 1 1-1 5-10zM24 -36l-1 2 0 2-9 0 0 3 8 0-1 2-2 2-1 2-2 1-2 0 2 3 2-1 1-1 2-1 1-1 1-2 1-1 4 2 4 4 2 1 2-2-3-3-4-2-2-2-2-1 11 0 0-3-10 0 1-2 0-2z"/><path id="r65bd" d="M28 -42l-4 12-4 4 3 2 2-2 3-6 20 0 0-3-18 0 0-2 2-4zM26 -26l0 8-5 2 2 3 3-1 0 16 1 1 1 0 2 1 14 0 2-1 1-1 0-1 1-2 0-3-3-1 0 3-1 1 0 1-2 1-10 0-2-1-1-2 0-14 5-2 0 14 3 0 0-16 5-2 0 11-1 1-2 0 0 3 4 0 2-1 0-2 1-1 0-15-2-1-1 1-6 3 0-7-3 0 0 8-5 3 0-7zM10 -41l0 2 2 4 0 1-10 0 0 4 6 0-1 6 0 12-2 5-1 5-2 4 2 2 2-3 2-4 2-8 0-4 1-5 6 0 0 11-1 4 0 4-1 1-6 0 1 4 5 0 2-1 2-2 0-2 1-3 0-19-9 0 0-7 11 0 0-4-9 0 3-1-1-1-1-2 0-2-1-2z"/><path id="r571f" d="M23 -42l0 16-17 0 0 4 17 0 0 20-20 0 0 4 44 0 0-4-20 0 0-20 17 0 0-4-17 0 0-16z"/><path id="r65cf" d="M28 -42l-1 3-1 2-1 3-2 3-1 2-2 2 3 2 1-2 3-3 1-2 20 0 0-4-19 0 1-1 1-2 0-2zM29 -30l0 2-2 4-2 2-1 2-2 1 4 2 1-1 2-4 4 0 0 7-11 0 0 4 11 0-3 6-3 2-2 2-4 2 2 3 4-2 2-2 3-2 1-2 2-2 1-2 1 2 1 3 4 4 2 1 2 2 2-3-2-1-6-6-1-3-1-2 9 0 0-4-10 0 0-7 8 0 0-3-14 0 1-2 1-3zM8 -41l2 4 3 3-11 0 0 4 6 0 0 6-1 7 0 5-1 5-2 5-2 3 2 3 4-6 2-8 1-5 0-5 6 0 0 6-1 5 0 7-2 2-4 0 0 3 5 0 3-2 1-1 0-2 1-3 0-18-9 0 0-7 10 0 0-4-8 0 3-1-2-4-2-1-1-2z"/><path id="r82d7" d="M23 -2l-12 0 0-8 12 0zM27 -2l0-8 12 0 0 8zM8 -25l0 29 3 0 0-2 28 0 0 2 4 0 0-29zM23 -14l-12 0 0-8 12 0zM27 -14l0-8 12 0 0 8zM32 -42l0 6-14 0 0-6-4 0 0 6-11 0 0 3 11 0 0 6 4 0 0-6 14 0 0 6 3 0 0-6 12 0 0-3-12 0 0-6z"/><path id="r6e58" d="M4 -39l4 2 4 4 2-3-1-2-4-2-3-1zM2 -25l4 2 1 1 2 1 1 1 2-3-1-1-2-1-1-1-4-2zM3 2l3 1 1-2 2-6 1-2 2-6-3-2-4 12-1 2zM20 -42l0 11-7 0 0 4 7 0-1 4-1 3-2 4-1 4-2 2-2 3 3 3 2-4 1-3 1-2 2-6 0 23 4 0 0-22 1 2 2 2 1 2 2-4-6-6 0-5 6 0 0-4-6 0 0-11zM34 -24l9 0 0 9-9 0zM34 -28l0-9 9 0 0 9zM34 -12l9 0 0 9-9 0zM31 -40l0 44 3 0 0-3 9 0 0 2 3 0 0-43z"/><path id="r9ed4" d="M7 -35l1 2 0 2 1 2 0 2 2-1 0-1-1-2 0-2-1-2zM14 -6l0 2 1 2 0 4 3 0 0-2-1-2 0-2-1-2zM18 -7l3 6 0 2 3-1-4-8zM5 -6l-1 1 0 2-3 6 3 1 1-2 1-1 0-2 1-2 0-2zM17 -35l-1 2 0 2-1 2 0 2 1 0 1-2 1-1 0-3 1-2zM32 -27l1 2 2 2 2 4 3-2-2-2-2-4-2-2zM9 -6l0 5 1 2 0 2 2-1 0-6-1-2zM7 -37l5 0 0 12-5 0zM14 -37l6 0 0 12-6 0zM3 -19l0 3 8 0 0 4-9 1 1 3 2 0 4-1 11 0 3-1 0-2-8 0 0-4 7 0 0-3-7 0 0-3 8 0 0-18-19 0 0 18 7 0 0 3zM26 -18l0 4 14 0-1 2-2 6-2 3-2 6 3 1 2-4 1-4 2-3 2-4 2-6-2-1zM35 -42l-2 3-1 3-4 6-3 3-2 3 3 2 2-2 1-2 2-2 2-3 1-2 1-3 2 2 1 3 2 2 2 3 2 2 1 2 3-3-4-4-2-3-2-2-2-3-1-2 1-2z"/><path id="r4f97" d="M23 -32l0 4 17 0 0-4zM16 -40l0 44 4 0 0-40 23 0 0 35-1 1-7 0 2 4 6 0 1-1 2-1 0-42zM24 -23l0 19 3 0 0-4 11 0 0-15zM27 -20l8 0 0 9-8 0zM12 -42l-2 4-1 4-2 4-6 9 1 2 1 1 1-1 1-2 3-3 0 28 3 0 0-35 2-4 0-2 2-4z"/><path id="r5e03" d="M20 -42l-1 2 0 2-2 4-14 0 0 3 13 0-2 4-4 6-3 2-5 5 1 2 1 1 1-1 2-1 4-4 0 16 4 0 0-17 10 0 0 22 4 0 0-22 12 0 0 13-2 1-3 0-3-1 1 4 7 0 1-1 2-1 0-19-15 0 0-6-4 0 0 6-10 0 1-1 4-8 27 0 0-3-26 0 1-3 2-4z"/><path id="r4f9d" d="M27 -41l4 8 3-1 0-2-3-6zM20 4l1 0 1-1 1 0 6-3 5-1-1-4-9 3 0-18 1-1 2-1 1-2 1-1 2 6 2 5 6 10 3 4 4 3 1-2 2-1-3-2-6-6-1-3-2-2 2-2 2-1 3-3 2-1 2-2-3-2-1 1-2 1-1 2-2 1-3 3-3-6 0-3-2-4 16 0 0-4-32 0 0 4 12 0-4 6-3 2-2 3-6 4 1 1 1 2 4-2 1-2 2-1 0 13-1 3-2 1zM13 -42l-1 4-2 4-8 12 2 4 1-2 2-2 1-2 0 28 4 0 0-33 2-4 0-2 3-6z"/><path id="r6587" d="M21 -41l4 8 4-2-1-1-3-6zM2 -33l0 3 8 0 4 8 8 12-12 8-8 2 2 4 4-2 4-1 4-2 9-6 9 6 4 2 4 1 4 2 2-4-4-1-3-1-4-2-9-6 2-3 3-3 4-6 1-4 2-4 8 0 0-3zM25 -13l-2-2-2-3-2-2-2-3-1-3-2-4 22 0-2 4-1 3-2 3-2 2-2 3z"/><path id="r58ee" d="M2 -34l1 2 1 1 3 6 1 1 3-2-1-1 0-2-1-1-1-2-3-3zM31 -42l0 17-13 0 0 3 13 0 0 21-12 0 0 3 28 0 0-3-12 0 0-21 13 0 0-3-13 0 0-17zM2 -9l2 4 3-3 2-1 1-1 2-1 0 15 4 0 0-46-4 0 0 27-6 3-1 1-2 1z"/><path id="r6e7e" d="M4 -40l1 2 2 2 1 2 1 1 1 2 3-2-1-2-1-1-1-2-3-3zM2 -26l1 2 3 3 1 2 0 1 3-2 0-1-1-2-2-1-2-4zM3 0l3 3 1-3 1-2 3-9 1-2-3-2-1 2-3 9zM39 -31l3 3 1 2 1 1 1 2 3-2-1-2-6-6zM20 -33l-2 4-2 1-1 2-2 1 3 2 5-5 2-4zM19 -14l0 2-1 2 0 2-1 2-1 1 26 0-1 3-1 2 0 1-8 0 1 3 6 0 3-1 2-2 1-2 0-2 1-3 0-2-25 0 1-3 22 0 0-10-28 0 0 3 24 0 0 4zM28 -42l1 2 1 3-14 0 0 3 9 0 0 12 3 0 0-12 6 0 0 12 3 0 0-12 11 0 0-3-14 0-2-4 0-2z"/><path id="b9493" d="M25 -19l2 1 2 2 1 2 3 3 1 2 5-4-5-5-1-2-2-1-2-2zM3 -18l0 5 7 0 0 8-2 4-1 1 1 2 2 2 1-1 8-4 5-2-1-2 0-3-7 3 0-8 7 0 0-5-7 0 0-5 6 0 0-1 2 1 1 1 1-2 1-1 2-4 13 0-1 8 0 12-1 3 0 3-1 1-2 1-4 0-3-1 2 4 0 2 10 0 1-1 3-6 0-5 1-6 0-21-15 0 0-2 2-4-6-1-1 2 0 3-1 3-2 2-1 2-1 3 0-1-15 0 2-4 14 0 0-6-11 0 1-3-5-1-4 8-3 3 3 6 2-2 0 4 4 0 0 5z"/><path id="b9c7c" d="M3 -3l0 6 44 0 0-6zM14 -16l8 0 0 5-8 0zM28 -16l9 0 0 5-9 0zM14 -25l8 0 0 5-8 0zM28 -25l9 0 0 5-9 0zM15 -43l-1 3-2 2-2 3-2 2-6 4 2 4 2 1 2-1 0 19 35 0 0-24-11 0 3-3 2-4-4-2-13 0 2-3zM13 -30l4-4 11 0-2 2-1 2z"/><path id="b5c9b" d="M16 -28l1 0 8 4 1 1 3-4-1-1-6-3-2 0-2-1zM26 -38l2-4-7-1-1 2 0 3-12 0 0 22 33 0 0 4-1 4 0 4-1 2-2 1-3 0 0-11-5 0 0 8-7 0 0-10-6 0 0 10-6 0 0-8-6 0 0 12 25 0 0 2 4 0 0 2 7 0 4-2 1-1 0-2 1-3 0-4 1-5 0-8-33 0 0-12 21 0 0 4-2 2-3-1 0 3 1 3 5 0 2-1 2-2 0-3 1-2 0-8z"/><path id="b8d64" d="M36 -16l1 2 2 2 1 3 3 6 5-2 0-2-1-2-2-3-2-4-2-2zM8 -18l-1 2 0 2-2 2-2 4-2 1 2 1 3 3 2-2 1-2 2-2 1-3 1-2 1-3zM8 -37l0 5 14 0 0 6-19 0 0 5 14 0 0 6-2 6-4 6-4 3 2 1 2 2 1 2 7-7 2-4 2-8 0-7 5 0 0 19-6 0 2 4 0 2 7 0 1-1 2-1 1-2 0-21 13 0 0-5-20 0 0-6 15 0 0-5-15 0 0-5-6 0 0 5z"/><path id="b5c3e" d="M12 -35l27 0 0 3-27 0zM12 -8l1 5 11-2 0 3 2 4 1 1 2 0 3 1 8 0 3-1 1 0 2-1 1-2 0-2 1-2-4-2-2 0 0 2-1 2-11 0 0-4 17-2-1-5-16 2 0-3 14-2-1-4-13 2 0-3 2-1 2 0 2-1 2 0 2-1-4-3 9 0 0-13-39 0 0 19-1 4 0 5-1 5-1 4-2 4 4 2 1 1 2-4 2-5 1-5 0-6 1-5 0-6 21 0-6 2-3 0-4 1-3 0-4 1 2 4 2 0 2-1 5 0 0 2-11 2 1 5 10-2 0 3z"/><path id="b5c7f" d="M22 -12l0 6 17 0 0-6zM26 -41l0 4-1 4 0 4-1 5-1 4 0 3 18 0 0 8-1 3 0 2-1 1 0 1-2 1-2 0-3-1 2 4 0 2 6 0 4-2 0-1 1-3 1-2 0-4 1-6 0-8-17 0 1-8 17 0 0-5-17 0 1-6zM3 -4l14-2 0 2 4 0 0-28-4 0 0 22-2 0 0-32-5 0 0 32-3 1 0-23-4 0z"/><path id="b5b89" d="M20 -41l0 2 1 2-17 0 0 11 6 0 0-6 30 0 0 6 6 0 0-11-17 0-3-6zM31 -17l-2 4-3 3-4-2-2 0-2-1 1-2 2-2zM9 -10l1 0 4 2 2 0 4 2-2 1-3 1-2 1-3 1-4 0-3 1 1 2 3 3 4 0 3-1 4-2 6-2 3-2 6 2 3 2 4 2 2 2 5-5-2-2-2-1-3-1-2-1-3-1-3-2 4-4 1-2 0-2 1-1 9 0 0-6-23 0 3-6-7-1-1 1-1 2 0 2-1 2-14 0 0 6 10 0-1 1-2 4-1 1z"/><path id="b79d1" d="M24 -36l2 1 1 2 5 5 4-4-1-2-2-1-3-3-2-1zM22 -23l2 2 2 1 3 3 1 2 4-4-3-3-1-2-4-2zM18 -42l-2 1-3 1-2 0-6 2-3 0 1 2 1 3 1-1 4 0 0 6-7 0 0 5 6 0-1 3-2 4-1 3-2 2-1 2 1 1 2 4 2-2 2-4 0-2 1-2 0 18 6 0 0-20 3 6 4-5-4-4-1-2-2-1 0-1 7 0 0-5-7 0 0-7 2-1 2 0 3-1zM21 -10l1 5 15-2 0 11 6 0 0-12 6-1-1-6-5 1 0-28-6 0 0 29z"/><path id="b745e" d="M2 -6l1 6 4-2 3 0 2-1 3-1 2-1-1-5-4 1 0-11 4 0 0-5-4 0 0-9 5 0 0-6-15 0 0 6 5 0 0 9-5 0 0 5 5 0 0 13zM30 -42l0 9-6 0 0-7-5 0 0 12 27 0 0-12-5 0 0 7-6 0 0-9zM18 -16l0 20 6 0 0-15 3 0 0 15 4 0 0-15 3 0 0 15 5 0 0-15 3 0 0 10-3 0 2 6 3-1 2 0 1-2 1-3 0-15-14 0 1-4 13 0 0-5-31 0 0 5 12 0 0 4z"/><path id="b7535" d="M21 -19l0 5-9 0 0-5zM28 -19l10 0 0 5-10 0zM21 -25l-9 0 0-4 9 0zM28 -25l0-4 10 0 0 4zM6 -35l0 29 6 0 0-2 9 0 0 2 1 4 0 2 1 2 4 2 16 0 2-1 3-6 1-4-3-1-2-1 0-26-16 0 0-7-7 0 0 7zM43 -8l-1 3 0 2-1 1-12 0-1-1 0-5z"/><path id="b6c14" d="M13 -30l0 5 29 0 0-5zM12 -42l-1 3-8 12-3 2 2 1 2 2 2 1 1-2 2-1 1-2 2-2 2-4 33 0 0-6-30 0 0-1 1-2zM8 -23l0 6 25 0 1 5 0 6 2 4 1 3 3 3 5 0 3-3 0-3 1-2-4-4 0 3-1 3-2 0-2-6 0-4-1-5 0-6z"/><path id="m9996" d="M13 -15l24 0 0 4-24 0zM13 -19l0-4 24 0 0 4zM13 -7l24 0 0 4-24 0zM11 -41l1 2 2 2 1 2-12 0 0 4 19 0 0 2-1 2-13 0 0 31 5 0 0-2 24 0 0 2 5 0 0-31-16 0 2-4 20 0 0-4-12 0 2-4 2-2-6-1 0 1-1 2-2 2-1 2-12 0 2-2-5-5z"/><path id="m9875" d="M23 -23l0 9-1 3-1 2-2 3-3 2-6 2-8 2 2 2 1 2 8-2 6-3 5-3 2-3 1-3 1-4 0-9zM27 -5l3 1 6 4 3 1 3 2 2 1 3-3-2-2-3-1-6-4-6-2zM8 -30l0 23 5 0 0-19 25 0 0 19 5 0 0-23-19 0 1-2 1-1 1-2 20 0 0-5-43 0 0 5 18 0-1 2-1 1 0 2z"/><path id="m5b9e" d="M27 -4l6 2 3 2 6 2 2 2 3-4-3-1-2-2-6-2-4-2-3-1zM12 -28l2 2 2 1 3 3 3-3-1-2-4-2-2-2zM7 -20l2 1 1 1 2 1 1 2 1 1 3-4-3-3-4-2zM4 -37l0 11 5 0 0-7 32 0 0 7 5 0 0-11-17 0-3-6-5 2 2 4zM4 -13l0 4 17 0-4 4-2 1-3 2-8 2 1 2 2 2 5-1 8-4 2-3 3-2 1-3 21 0 0-4-19 0 0-3 1-2 0-6 1-3 0-3-5 0 0 3-1 3 0 6-1 2 0 3z"/><path id="m65f6" d="M23 -22l2 2 2 4 2 2 2 4 4-3-1-1-1-2-2-2-2-4-2-2zM16 -20l0 11-8 0 0-11zM16 -24l-8 0 0-10 8 0zM4 -38l0 37 4 0 0-4 12 0 0-33zM38 -42l0 9-16 0 0 5 16 0 0 26-2 1-8 0 1 2 1 3 5 0 2-1 3 0 2-1 0-2 1-2 0-26 5 0 0-5-5 0 0-9z"/><path id="m76d1" d="M32 -26l3 3 2 1 4 4 4-2-1-2-2-1-3-3-4-2zM16 -42l0 24 4 0 0-24zM6 -40l0 20 4 0 0-20zM30 -42l-1 3-1 4-1 3-4 6-2 2 2 2 2 1 4-4 2-4 0-2 16 0 0-4-14 0 1-2 0-2 1-2zM8 -15l0 14-6 0 0 4 46 0 0-4-5 0 0-14zM12 -1l0-10 6 0 0 10zM22 -1l0-10 6 0 0 10zM32 -1l0-10 6 0 0 10z"/><path id="m63a7" d="M34 -27l2 1 2 2 1 2 2 1 3 3 3-3-1-2-4-2-1-2-2-1-2-2zM28 -30l-8 8-2 1 2 1 1 2 2-1 2-2 2-1 1-2 4-4zM8 -42l0 9-6 0 0 5 6 0 0 11-3 1-2 0-2 1 1 4 6-1 0 10-1 1-5 0 1 2 1 3 2 0 3-1 1 0 2-2 0-15 5-2-1-4-4 1 0-9 5 0 0-5-5 0 0-9zM16 -2l0 5 32 0 0-5-13 0 0-11 10 0 0-4-25 0 0 4 10 0 0 11zM29 -41l1 2 1 3-13 0 0 9 4 0 0-5 21 0 0 4 5 0 0-8-12 0-3-6z"/><path id="m7535" d="M22 -20l0 6-11 0 0-6zM27 -20l12 0 0 6-12 0zM22 -24l-11 0 0-6 11 0zM27 -24l0-6 12 0 0 6zM6 -35l0 29 5 0 0-3 11 0 0 7 2 4 1 1 18 0 2-1 1-1 1-2 1-3 0-3-4-2-1 3 0 2-1 2-1 0-1 1-10 0-2-1-1-1 0-6 17 0 0-26-17 0 0-7-5 0 0 7z"/><path id="m6c14" d="M13 -30l0 4 30 0 0-4zM12 -42l-1 3-1 4-4 6-5 5 2 1 2 2 2-2 1-2 2-1 1-2 1-3 2-2 32 0 0-4-30 0 0-2 1-2zM8 -22l0 4 26 0 1 6 0 5 1 5 2 3 3 2 3 1 1 0 2-2 1-2 0-4-1-2-2-1 0 6-3 0-2-6-1-5 0-10z"/><path id="m706b" d="M10 -32l-1 2 0 3-1 2-1 3-2 2-1 2 4 2 2-2 1-2 1-3 1-2 2-6zM41 -32l-1 2-1 3-1 2-1 3-2 4 4 2 2-4 1-3 2-2 1-3 1-2zM22 -42l0 17-2 8-3 7-6 6-9 4 4 4 5-2 4-3 6-6 4-8 2 5 2 4 3 3 4 3 4 2 5 2 2-2 1-2-5-2-5-3-4-3-3-5-3-4-1-6 0-9 1-3 0-7z"/><path id="m707e" d="M11 -23l0 2-1 1-2 4-2 1-1 2 4 2 3-3 3-6 1-1zM39 -23l-1 2-1 1-3 6-1 1 4 2 1-2 1-1 1-2 2-2 1-2 1-1zM23 -28l-2 12-2 5-3 5-6 3-8 3 2 2 1 2 5-1 5-3 4-2 2-3 3-4 1-3 2 4 2 3 3 3 4 3 4 2 6 1 2-4-6-2-5-2-3-3-3-4-4-10 0-5 1-2zM20 -41l2 2 1 2 2 2-21 0 0 10 4 0 0-6 33 0 0 6 5 0 0-10-19 0 3-1-1-2-5-5z"/><path id="m4ea4" d="M15 -30l-1 2-4 4-2 1-3 2-2 1 4 4 4-4 3-2 6-6zM30 -27l3 1 4 4 3 2 2 2 1 2 4-3-8-8-3-1-2-2zM18 -21l-4 1 1 3 2 4 2 2 1 2 2 1-6 4-6 2-8 2 2 2 1 2 8-2 3-1 6-4 3-1 3 1 6 4 3 1 8 2 1-2 2-2-4-1-3-1-4-1-3-1-3-2-2-2 3-3 1-2 2-2 1-2 1-3-5-1-3 6-1 1-1 2-2 1-4-4zM20 -41l2 2 1 2 0 1-20 0 0 5 44 0 0-5-20 0 2 0-1-2-2-3-1-2z"/><path id="m6613" d="M14 -28l23 0 0 4-23 0zM14 -36l23 0 0 4-23 0zM9 -40l0 20 5 0-2 2-1 2-3 2-2 2-2 1-2 2 2 1 1 2 2-1 3-3 2-1 1-1 6 0-8 8-3 2-2 2 2 1 1 2 6-4 5-5 4-6 6 0-1 2-2 3-1 3-6 6 1 1 2 1 3-2 2-2 4-6 1-3 2-3 5 0 0 3-1 3 0 2-1 2 0 2-8 0 2 4 8 0 2-1 0-1 2-4 0-4 1-4 0-7-28 0 3-3 22 0 0-20z"/><path id="m7ba1" d="M10 -22l0 26 5 0 0-1 23 0 0 1 5 0 0-12-28 0 0-3 25 0 0-11zM38 -1l-23 0 0-4 23 0zM22 -31l1 3-19 0 0 8 5 0 0-5 32 0 0 5 5 0 0-8-18 0-2-4zM15 -18l20 0 0 3-20 0zM8 -42l-1 2 0 2-1 2-3 3-1 2 4 2 1-1 1-2 1-1 1-2 3 0 2 4 1 1 4-1-1-2-2-2 7 0 0-3-12 0 1-4zM30 -42l-4 8-1 1 2 1 1 1 2-2 1-2 3 0 2 2 2 4 4-2-1-2-2-2 8 0 0-3-14 0 1-4z"/><path id="m7406" d="M25 -27l6 0 0 6-6 0zM35 -27l7 0 0 6-7 0zM25 -36l6 0 0 6-6 0zM35 -36l7 0 0 6-7 0zM16 -2l0 5 32 0 0-5-12 0 0-6 11 0 0-4-11 0 0-5 10 0 0-23-26 0 0 23 11 0 0 5-11 0 0 4 11 0 0 6zM2 -6l1 5 2 0 3-1 2-1 9-3-1-5-6 2 0-11 5 0 0-5-5 0 0-10 6 0 0-4-16 0 0 4 6 0 0 10-5 0 0 5 5 0 0 13-2 0-3 1z"/><path id="m6545" d="M31 -29l9 0-1 3 0 3-1 3-1 2-1 3-1 2-1-3-1-2 0-2-2-6-1-2zM4 -20l0 22 4 0 0-3 14 0 0-18 3 1 1-2 2-2 0 2 1 3 2 4 0 2 1 2-1 2-2 2-2 1-2 2-2 1-3 1 2 2 1 2 4-2 3-2 2-1 1-2 2-2 1 2 2 2 2 1 1 2 4 2 4-4-4-2-2-2-2-1-2-2-1-2 2-3 1-2 1-4 1-3 2-8 3 0 0-4-16 0 1-2 0-2 1-2 0-2-5-1-3 12-2 3-1 4-2 2 1 1-6 0 0-8 8 0 0-5-8 0 0-9-5 0 0 9-9 0 0 5 9 0 0 8zM8 -15l10 0 0 9-10 0z"/><path id="m969c" d="M26 -16l14 0 0 3-14 0zM26 -21l14 0 0 3-14 0zM21 -24l0 14 10 0 0 3-13 0 0 4 13 0 0 7 4 0 0-7 13 0 0-4-13 0 0-3 10 0 0-14zM29 -41l1 3-10 0 0 3 7 0-3 1 1 3-7 0 0 4 30 0 0-4-8 0 2-3-5-1 0 2-1 2-7 0 1 0-2-4 18 0 0-3-11 0 0-2-1-2zM3 -40l0 44 4 0 0-40 6 0 0 2-1 2 0 2-1 1-1 2 0 2 2 4 1 1 1 2 0 3-1 3-4 0 0 2 1 2 3 0 3-1 1-1 1-2 0-6-1-2 0-2-2-2-1-2 2-4 0-2 2-4 1-3-3-1z"/><path id="m7edf" d="M35 -17l0 18 1 2 9 0 3-3 0-6-4-2 0 7-4 0-1-1 0-15zM25 -17l0 4-1 4-1 3-1 2-3 3-3 1 2 2 1 2 4-2 3-3 2-3 1-4 0-4 1-5zM2 -3l1 5 2-1 9-3 2-1 3-1-1-4-9 3-2 1-3 0zM29 -41l3 6-12 0 0 4 9 0-2 2-1 2-5 5-2 0 1 3 0 2 1 0 2-1 6 0 5-1 8-1 2 4 4-2-3-6-2-2-1-2-2-1-3 1 1 2 2 3-12 1 2-4 2-1 2-4 14 0 0-4-15 0 4-1-3-6zM3 -21l2 0 2-1 3 0-2 2-1 2-1 1-2 3-2 1 1 2 0 2 1 0 1-1 2 0 2-1 4-1 6-1-1-2 1-2-9 2 2-3 2-2 1-2 2-3 1-2 2-2-4-3-2 4-1 1-5 1 1-2 2-3 2-4 2-3 1-2-5-2-1 2-1 3-2 3-2 4-1 1-1 2-2 1 1 3z"/><path id="m8ba1" d="M6 -38l2 1 2 2 2 1 1 2 1 1 4-3-2-1-1-2-2-2-2-1-2-2zM2 -27l0 5 8 0 0 17-1 3-2 1 2 2 1 3 0-1 2-2 3-1 3-3 4-3-2-4-5 4 0-21zM31 -42l0 16-13 0 0 5 13 0 0 25 5 0 0-25 12 0 0-5-12 0 0-16z"/><path id="m5206" d="M34 -41l-4 1 1 3 2 3 1 3 2 2 2 3 2 2-29 0 4-4 1-3 4-6 1-3-5-1-2 3-2 4-4 6-6 6 2 1 2 2 2-1 2-2 0 3 8 0 0 4-1 4-2 3-3 3-4 3-5 2 2 2 1 2 6-2 7-7 2-5 2-4 0-5 13 0-1 5 0 8-1 2 0 2-1 0-2 1-7 0 1 2 1 3 8 0 4-2 0-2 1-2 1-3 0-10 1-6 0-2 2 2 1 2 4-4-2-3-3-2-3-3-2-4z"/><path id="m6790" d="M24 -37l0 23-3 12-2 4 4 2 2-4 3-12 0-9 8 0 0 25 5 0 0-25 7 0 0-4-20 0 0-8 6-2 3 0 6-2 2-1-4-4-2 1-12 4zM10 -42l0 10-7 0 0 5 6 0-2 6-1 4-1 3-2 2-2 3 2 2 1 2 1-2 1-1 1-3 2-4 1-3 0 22 4 0 0-23 2 2 2 4 0 1 3-4-1-1-1-2-2-2-1-2-2-2 0-2 8 0 0-5-8 0 0-10z"/><path id="m62a5" d="M26 -19l1 3 2 2 2 4 1 3 2 2-2 1-3 3-2 1-1 1zM31 -19l10 0 0 2-1 2-1 1 0 2-1 1-1 2-1-2-1-1-1-2-1-1zM21 -40l0 44 5 0 0-3 1 2 1 1 6-3 3-3 1 2 4 2 1 1 2 1 2-2 1-2-1-1-6-3-1-2 1-2 2-3 1-2 3-9-3-1-18 0 0-13 14 0 0 5-1 1-9 0 1 2 0 2 11 0 2-2 0-1 1-2 0-9zM9 -42l0 10-7 0 0 4 7 0 0 10-8 2 2 5 6-2 0 12-1 1-6 0 1 2 0 2 7 0 2-1 1-1 0-1 1-2 0-13 5-2 0-5-5 2 0-9 5 0 0-4-5 0 0-10z"/><path id="m544a" d="M12 -42l-2 6-2 2-1 3-4 4 2 1 3 1 1-1 1-2 1-1 1-2 12 0 0 7-21 0 0 4 44 0 0-4-18 0 0-7 15 0 0-4-15 0 0-7-5 0 0 7-10 0 3-6zM9 -15l0 20 5 0 0-3 23 0 0 2 5 0 0-19zM14 -2l0-9 23 0 0 9z"/><path id="m9690" d="M24 -8l0 9 2 2 1 0 3 1 7 0 1-1 2 0 1-1 0-2 1-3-2 0-2-1 0 2-2 2-6 0-2-2 0-6zM19 -9l0 2-3 6-1 1 4 3 3-6 0-2 1-2zM39 -8l2 2 3 6 0 2 4-1 0-2-2-4-2-2-1-2zM27 -42l-1 2-2 2-1 2-5 5 2 2 0 3 21 0 0 3-19 0 0 3 19 0 0 4-21 0 0 4 10 0-3 2 4 2 1 2 2 1 1 1 3-2-5-5-2-1 14 0 0-18-8 0 1-2 2-1 1-2 1-1-3-2-10 0 2-3zM23 -30l1-1 1-2 2-2 9 0-2 4-2 1zM4 -40l0 44 4 0 0-40 6 0-1 2 0 2-2 4 0 2-1 2 2 2 2 4 0 3-1 3-1 1-3 0 1 2 0 2 4 0 2-1 2-4 0-7-2-4-2-2 2-4 1-3 0-2 2-4-3-2z"/><path id="m60a3" d="M14 -9l0 10 1 1 2 1 18 0 1-1 1-2 0-2 1-2-3-1-2-1 0 4-1 1-13 0 0-8zM36 -8l2 1 3 6 1 1 1 2 5-2-1-2-3-3-1-2-3-3zM8 -9l-3 6-3 3 4 2 2-1 1-2 1-1 2-4 0-2zM12 -35l11 0 0 4-11 0zM28 -35l10 0 0 4-10 0zM6 -25l0 11 17 0 0 2-1 0-2 3 6 3 3 3 3-3-1-2-6-3 3 0 0-3 16 0 0-11-16 0 0-3 15 0 0-11-15 0 0-3-5 0 0 3-15 0 0 11 15 0 0 3zM11 -22l12 0 0 5-12 0zM28 -22l11 0 0 5-11 0z"/><path id="m65" d="M16 1l2 0 2-1 2 0 2-1 1-1-2-4-4 2-5 0-2-1-3-3 0-2-1-2 18 0 0-7-1-3-2-3-2-2-3-1-6 0-6 4-2 3-1 3-1 4 2 8 2 3 3 2 3 1zM8 -16l0-2 2-4 2-1 1 0 2-1 2 1 1 0 2 1 0 2 1 2 0 2z"/><path id="m73" d="M12 1l3-1 3 0 3-3 1-3 0-4-1-2-1-1-10-5-2-2 1-2 1-1 3-1 2 1 2 0 2 2 3-4-2-1-1-1-2-1-7 0-4 2-2 2-1 2 0 4 1 2 1 1 10 5 1 1 1 2-1 1-1 2-5 0-6-3-3 4 2 1 1 1 2 1 2 0 2 1z"/><path id="m69" d="M4 0l6 0 0-28-6 0zM9 -33l1-1 1-2-1-2-1-1-2-1-2 1-1 1 0 4 1 1z"/><path id="m6d" d="M4 0l6 0 0-20 2-1 1-1 2-1 3 0 2 2 1 2 0 19 6 0 0-20 1-1 2-1 1-1 3 0 2 1 1 1 0 21 6 0 0-21-2-4-2-2-2-1-4 0-6 3-1 2-1-2-1-1-4-2-4 0-2 1-1 1-2 1-1 1-1-4-5 0z"/><path id="m5361" d="M21 -42l0 18-19 0 0 5 20 0 0 23 4 0 0-15 6 2 3 2 6 2 2 1 3-4-3-1-2-1-6-2-3-2-3-1-3 4 0-8 22 0 0-5-22 0 0-7 17 0 0-5-17 0 0-6z"/><path id="b5145" d="M8 -14l1-1 3 0 4-1-1 4-1 3-2 2-2 3-3 2-5 1 1 2 2 2 1 2 5-3 4-2 3-3 4-8 0-5 6 0 0 16 1 2 2 1 1 0 3 1 6 0 3-1 1 0 2-2 1-2 0-3 1-3-6-3 0 6-1 1 0 1-8 0 0-14 5-1 2 4 6-3-2-2-2-3-8-8-5 3 1 1 1 2 2 1-18 1 1-2 2-1 1-2 3-3 24 0 0-6-21 0 4-1-1-2-1-1-2-4-6 2 3 6-20 0 0 6 12 0-8 8-2 0 1 3z"/><path id="b6869" d="M8 -42l0 9-6 0 0 5 6 0-1 3-1 4-2 6-2 2-1 2 3 6 1-1 0-1 3-6 0-2 0 19 6 0 0-23 2 4 0 2 4-4-1-2-2-3-2-2-1-2 0-2 5 0 0-5-5 0 0-9zM26 -3l0 5 22 0 0-5-8 0 0-12 7 0 0-5-7 0 0-9-6 0 0 9-6 0 0 5 6 0 0 12zM31 -41l2 4 1 1-13 0 0 18-1 4 0 4-1 4-1 3-2 4 2 1 2 2 2-3 2-5 1-4 1-5 0-17 22 0 0-6-12 0 3-1-3-6z"/><path id="b6536" d="M31 -28l9 0-1 3 0 2-1 3-2 4 0 2-5-10zM5 -4l1-1 2 0 1-1 6-2 0 12 6 0 0-25 2 2 1 2 1 1 1-2 2-2 0 2 3 6 0 2 1 1-1 2-3 3-2 1-2 2-2 1 3 3 1 2 2-1 3-3 2-1 1-2 2-2 1 2 4 4 4 2 1-1 1-2 2-2-4-2-1-1-2-1-1-2-2-2 2-2 3-9 2-8 2 0 0-5-15 0 1-2 0-2 1-2 0-3-6 0-1 3-2 8-1 3-4 6 0-20-6 0 0 28-5 1 0-24-6 0 0 27-2 1 1 1z"/><path id="b8d39" d="M23 -11l-1 3-2 2-3 2-3 1-12 2 1 3 1 2 8-1 6-2 4-2 3-3 2-3 2-4zM26 -2l3 1 4 1 3 1 4 1 3 1 2 1 3-4-2-1-3-1-4-1-3-1-4-1-3-1zM17 -30l-1 2-5 0 0-2zM22 -30l6 0 0 2-6 0zM7 -34l-1 2 0 5-1 2 0 1 9 0-1 1-4 2-2 0-2 1-3 1 2 2 1 2 4-1 0 12 5 0 0-8 22 0 0 8 6 0 0-13-28 0 2-1 1-2 2-1 1-1 1-2 7 0 0 6 6 0 0-6 7 0 0 2-4 0 1 2 0 2 5 0 3-2 0-1 1-2 0-5-13 0 0-2 10 0 0-10-10 0 0-2-6 0 0 2-6 0 0-2-5 0 0 2-12 0 0 4 12 0 0 2zM22 -36l6 0 0 2-6 0zM34 -36l5 0 0 2-5 0z"/><path id="b4e91" d="M8 -39l0 6 34 0 0-6zM7 3l1-1 3 0 3-1 5 0 8-1 11 0 1 1 2 4 6-4-1-2-10-15-6 3 1 1 2 4 2 2-20 1 1-2 2-2 2-3 1-2 2-2 2-3 23 0 0-6-46 0 0 6 14 0-1 3-2 2-1 2-2 2-1 2-3 3-2 1 1 2 1 3z"/><path id="b5e73" d="M8 -30l3 6 0 2 1 2 6-2-1-1-1-2-1-3-2-4zM36 -32l0 2-1 2 0 1-3 6 5 1 1-1 2-4 1-1 2-4zM2 -18l0 6 20 0 0 16 6 0 0-16 20 0 0-6-20 0 0-15 17 0 0-6-40 0 0 6 17 0 0 15z"/><path id="b53f0" d="M8 -18l0 22 6 0 0-2 22 0 0 2 6 0 0-22zM14 -4l0-8 22 0 0 8zM6 -21l2 0 2-1 10 0 8-1 11 0 2 2 1 2 5-4-2-2-2-3-2-2-2-3-5-5-5 3 3 3 1 2 2 1-21 1 10-10 1-3-6-2-4 6-4 4-1 2-1 1-3 2-2 1 2 3z"/><path id="r39" d="M12 1l6-2 3-3 2-4 2-5 0-12-2-5-1-3-6-4-6 0-3 1-2 2-1 2-1 3-1 4 1 3 0 3 4 4 2 1 5 0 4-2 1-1 2-1-1 5-1 4-1 3-2 1-2 2-5 0-2-1-2-2-2 3 1 1 2 1 1 1 2 0zM21 -22l-3 3-2 1-1 1-2 0-2-1-2 0-1-2-1-1 0-2-1-2 1-3 0-2 3-3 1 0 2-1 4 2 1 1 1 2 1 3z"/><path id="r2b" d="M12 -6l4 0 0-11 10 0 0-3-10 0 0-11-4 0 0 11-10 0 0 3 10 0z"/><path id="r41" d="M0 0l5 0 3-11 14 0 3 11 5 0-12-37-5 0zM10 -15l1-5 1-3 1-2 0-2 1-2 0-2 1-2 1 2 0 2 2 4 0 2 1 3 2 5z"/><path id="r50" d="M5 0l5 0 0-15 9 0 4-1 2-1 2-3 2-2 0-7-2-3-4-4-4 0-3-1-11 0zM10 -18l0-15 8 0 6 3 0 2 1 2-1 2 0 2-2 2-2 1-2 0-3 1z"/><path id="r4e0b" d="M3 -38l0 3 19 0 0 39 4 0 0-27 9 6 3 1 4 4 3-4-3-2-6-3-6-4-3-1-1 0 0-9 21 0 0-3z"/><path id="r8f7d" d="M37 -39l2 1 1 2 3 3 3-2-3-3-2-1-1-2zM42 -25l-1 2-1 3 0 2-2 4-2 2 0-4-1-3 0-6-1-3 14 0 0-3-14 0 0-11-4 0 0 4 1 2 0 5-13 0 0-4 9 0 0-3-9 0 0-4-3 0 0 4-10 0 0 3 10 0 0 4-12 0 0 3 28 0 0 4 1 4 0 7 2 6-3 3-1 2-2 1-3 3 3 2 2-1 1-2 4-4 1 2 1 1 1 2 2 1 1 0 2 1 1-1 2 0 1-1 0-2 1-3 0-3-3-2 0 5-1 2 0 1-2 0-1-1-1-2-1-1-1-3 1-2 2-3 4-12zM3 -5l1 4 13-1 0 6 3 0 0-7 9-1 0-3-9 1 0-5 8 0 0-3-8 0 0-4-3 0 0 4-7 0 3-6 16 0 0-3-15 0 2-4-4-1 0 3-1 2-8 0 0 3 6 0-1 3-1 1-2 3 1 3 1 0 3-1 7 0 0 5z"/><path id="r61" d="M11 1l2-1 2 0 2-1 1-1 2-1 0 3 4 0 0-20-1-3-1-2-4-2-3-1-2 0-2 1-2 0-4 2-1 1 2 3 6-3 4 0 2 1 1 2 0 2 1 2-6 1-4 1-3 1-4 4 0 5 2 4 2 1 2 0zM10 -3l-2-2-1-2 1-2 0-1 2-2 2-1 4-1 4 0 0 7-2 2-4 2z"/><path id="r63" d="M15 1l2-1 2 0 4-2 1-1-2-3-2 2-2 0-2 1-3 0-2-1-1-2-2-2 0-3-1-3 1-2 0-3 2-2 1-2 2-1 5 0 2 1 1 1 3-3-6-3-2 0-4 1-3 1-3 2-2 3-1 3 0 9 1 3 2 3 3 2z"/><path id="r72" d="M5 0l4 0 0-17 1-3 3-3 2-1 1 0 3 1 1-4-3-1-2 0-2 1-3 3-1 2-1-5-3 0z"/><path id="r65" d="M16 1l2 0 2-1 1 0 2-1 1-1-1-3-2 1-1 0-2 1-4 0-2-1-2-2-2-1 0-3-1-2 18 0 1-3-1-4-1-3-1-2-2-2-6-2-6 2-3 2-2 3-1 3 0 9 1 3 2 3 3 2 3 1zM7 -16l1-2 0-2 3-3 2-1 4 0 1 1 2 1 1 2 0 2 1 2z"/><path id="r6c" d="M9 1l3-1-1-3-1 0-1-2 0-35-4 0 0 37 1 2 1 1z"/><path id="r45" d="M5 0l22 0 0-4-17 0 0-13 14 0 0-4-14 0 0-12 16 0 0-4-21 0z"/><path id="r6e" d="M5 0l4 0 0-20 2-1 1-1 2-1 1-1 4 0 1 1 2 4 0 19 4 0 0-20-1-3-2-4-2-1-5 0-6 3-1 2-1-4-3 0z"/><path id="r67" d="M18 12l6-2 2-2 1-2 1-3-2-4-1-1-2-1-10 0-3-1-2-1 0-3 2-2 2 1 4 0 3-1 2-1 2-4 1-3-1-2 0-2-2-2 6 0 0-3-9 0-2-1-5 0-2 1-4 4-1 2 0 5 2 4 1 1-1 2-1 1-1 2 1 3 2 2-2 1-2 4 0 3 1 2 2 2 2 1zM12 -12l-2-1-1-1-1-2 0-4 1-2 1-1 2-1 4 0 2 2 2 4-2 4-2 2zM9 9l-1-1-1-2 0-3 1-2 1-1 9 0 2 1 2 0 1 1 0 3-1 2-1 1-2 1z"/><path id="r69" d="M5 0l4 0 0-27-4 0zM7 -33l2-1 1-2-1-2-2-1-2 1-1 2 1 2z"/><path id="r73" d="M12 1l3-1 2 0 3-3 2-4-1-3-1-1-1-2-8-4-2 0-1-2-1-1 1-2 2-2 5 0 4 2 2-3-6-3-5 0-3 1-3 3-1 2 0 4 1 2 2 1 1 1 10 5 0 4-1 1-2 1-6 0-1-1-2-1-1-1-2 3 1 1 4 2 2 0z"/><path id="r68" d="M5 0l4 0 0-20 2-1 1-1 2-1 1-1 4 0 1 1 2 4 0 19 4 0 0-20-1-3-2-4-2-1-5 0-4 2-3 3 0-17-4 0z"/><path id="r5207" d="M21 -38l0 4 8 0 0 7-1 7-1 6-2 6-4 5-5 4 1 1 1 2 6-4 4-6 2-6 2-7 1-7 0-8 10 0 0 10-1 8 0 11-2 4-2 1-4 0-2-1 0 2 1 2 9 0 2-2 1-2 0-3 1-5 0-6 1-9 0-14zM8 -3l0-1 1 0 2-1 2-2 4-1 5-3-1-3-9 4 0-15 10-2-1-3-9 2 0-12-4 0 0 12-7 2 1 3 6-1 0 14-1 2-1 1z"/><path id="r6362" d="M8 -42l0 10-6 0 0 4 6 0 0 11-2 0-4 2 1 3 5-2 0 13-1 1-4 0 1 4 5 0 1-1 2-1 0-17 5-1 0-4-5 2 0-10 5 0 0-4-5 0 0-10zM27 -34l10 0-1 1-1 2-2 2-10 0 1-2zM17 -14l0 3 12 0-1 2-4 4-6 4-4 2 2 3 8-4 5-5 1-2 2-2 2 3 2 2 2 3 2 2 3 1 3 2 2-3-2-1-6-4-2-2-2-3-2-2 14 0 0-3-4 0 0-15-6 0 2-4 2-1 1-2-3-2-11 0 1-2 1-1-4-1-2 4-2 3-6 6 2 3 1-1 0 13zM24 -14l0-12 7 0 0 7-1 2 0 3zM40 -14l-6 0 0-12 6 0z"/><path id="r4e3b" d="M19 -40l4 4 2 1 1 2 1 1-22 0 0 4 18 0 0 11-16 0 0 3 16 0 0 13-20 0 0 3 44 0 0-3-20 0 0-13 16 0 0-3-16 0 0-11 18 0 0-4-16 0 2-2-1-1-2-1-1-2-2-1-3-3z"/><path id="r9898" d="M9 -31l10 0 0 4-10 0zM9 -37l10 0 0 4-10 0zM5 -40l0 16 17 0 0-16zM35 -26l-1 5 0 5-1 4-2 4-8 4 2 3 5-3 3-2 2-4 2-5 1-5 0-6zM36 -9l4 2 1 2 2 1 2 2 3-2-1-1-2-1-1-2-4-2-1-1zM6 -15l0 7-1 3-1 2-1 3-1 2 2 2 1-2 1-1 2-4 0-2 3 3 3 2 3 1 4 1 5 1 21 0 1-3-23 0-2-1-5 0-2-1 0-7 8 0 0-3-8 0 0-6 9 0 0-2-23 0 0 2 11 0 0 14-2-1-2-4 0-6zM27 -32l0 21 3 0 0-18 12 0 0 18 3 0 0-21-9 0 1-2 1-3 10 0 0-3-23 0 0 3 9 0-1 3-1 2z"/><path id="r7535" d="M23 -20l0 7-13 0 0-7zM27 -20l12 0 0 7-12 0zM23 -24l-13 0 0-7 13 0zM27 -24l0-7 12 0 0 7zM6 -35l0 29 4 0 0-4 13 0 0 10 1 2 1 1 18 0 2-1 1-1 1-2 1-3 0-3-4-2 0 5-1 2 0 1-15 0-1-1 0-8 16 0 0-25-16 0 0-7-4 0 0 7z"/><path id="r7ad9" d="M3 -33l0 4 19 0 0-4zM5 -26l0 3 1 3 0 3 1 3 0 6 3-1 0-9-2-6 0-3zM9 -41l3 6 0 2 4-1-4-8zM16 -27l0 6-2 8 0 3-1 3-2 0-2 1-2 0-1 1-4 0 1 4 3-1 3 0 6-2 4-1 3-1 0-3-6 1 2-6 0-3 1-3 0-4 1-3zM23 -18l0 22 4 0 0-2 15 0 0 2 4 0 0-22-11 0 0-10 13 0 0-4-13 0 0-10-4 0 0 24zM27 -2l0-13 15 0 0 13z"/><path id="r6570" d="M22 -41l-1 2-1 3-2 2 3 1 1-2 1-1 2-4zM4 -40l2 3 2 4 2-1 0-2-1-3-2-2zM20 -13l0 2-3 3-1 2-6-3 2-4zM6 -8l1 1 6 3-1 1-6 3-2 0-2 1 2 3 12-6 3 1 2 1 2-2-2-1-2-2 1-1 2-4 1-1 2-4-2-1-9 0 1-3-3 0-2 3-6 0 0 3 5 0-2 4zM13 -42l0 9-11 0 0 3 10 0-2 2-1 2-2 1-1 1-4 2 2 3 2-1 1-1 2-1 4-4 0 6 3 0 0-7 2 1 2 2 2 1 1 1 2-2-3-3-3-1-2-2 10 0 0-3-11 0 0-9zM31 -42l0 5-2 8-2 4-1 3-2 3 3 2 1-1 2-4 0-1 2 4 0 3 3 6-2 2-1 2-4 4-3 2-2 1 2 3 2-1 4-4 2-1 4-4 2 4 2 1 1 2 2 1 2 2 1-2 2-1-2-2-2-1-4-4-2-4 1-3 1-2 1-3 1-4 0-3 1-4 3 0 0-3-14 0 1-2 0-3 1-2 0-2zM40 -29l0 6-1 2-1 3 0 2-1 2-2-4-1-3 0-3-1-2-1-3z"/><path id="r6869" d="M31 -41l3 6 4-1-1-2-2-2-1-2zM10 -42l0 10-8 0 0 3 7 0 0 4-2 3-1 4-1 3-2 3-2 2 2 2 0 2 2-2 2-4 2-6 1-2 0 24 3 0 0-26 1 1 2 4 1 1 2-2-1-2-2-2-1-3-2-2 0-2 6 0 0-3-6 0 0-10zM24 -2l0 4 24 0 0-4-10 0 0-14 8 0 0-4-8 0 0-9-4 0 0 9-7 0 0 4 7 0 0 14zM21 -35l0 25-1 4-4 8 3 2 4-8 1-4 1-5 0-18 23 0 0-4z"/><path id="r8bf7" d="M5 -39l8 8 2-3-4-4-2-1-1-2zM2 -26l0 3 8 0 0 19-1 2-2 2 2 3 1 0 0-1 2-1 1-2 3-2 4-3-2-3-5 4 0-21zM25 -11l15 0 0 5-15 0zM25 -13l0-4 15 0 0 4zM31 -42l0 4-12 0 0 3 12 0 0 3-11 0 0 3 11 0 0 3-13 0 0 3 30 0 0-3-14 0 0-3 11 0 0-3-11 0 0-3 12 0 0-3-12 0 0-4zM21 -20l0 24 4 0 0-8 15 0 0 5-6 0 1 3 6 0 1-1 2-1 0-22z"/><path id="r9009" d="M3 -38l2 1 1 1 1 2 2 1 1 2 1 1 3-2-1-1-1-2-2-1-1-2-2-1-1-1zM22 -40l0 2-4 8-2 1 4 2 1-1 2-4 7 0 0 8-14 0 0 3 9 0 0 3-1 3-6 6-3 2 2 3 4-2 3-2 2-3 2-6 1-4 5 0 0 14 2 2 10 0 1-1 0-2 1-2 0-3-3-1 0 3-1 2 0 1-5 0-1-2 0-11 10 0 0-3-14 0 0-8 11 0 0-3-11 0 0-7-4 0 0 7-6 0 1-2 1-3zM13 -23l-10 0 0 4 6 0 0 15-2 1-1 1-2 1-2 2 3 3 1-2 2-1 2-2 1 0 1-1 2 1 3 2 1 1 2 0 2 1 25 0 1-2 0-2-5 0-4 1-14 0-2-1-4 0-2-1-3-3-1 0z"/><path id="r62e9" d="M9 -42l0 10-7 0 0 4 7 0 0 10-2 1-2 0-2 1-1 0 1 4 6-2 0 13-1 1-5 0 1 4 5 0 2-1 1-1 0-17 6-2 0-4-6 2 0-9 6 0 0-4-6 0 0-10zM40 -36l-1 2-1 1-2 1-1 2-2 1-5-5-1-2zM20 -39l0 3 3 0 1 2 1 1 1 2 4 4-8 4-2 0-2 1 2 3 6-3 3-1 4-2 4 2 2 2 3 1 2 0 2 1 1-2 2-1-3-1-2 0-8-4 2-2 2-1 1-2 2-2 2-4-2-2 0 1zM31 -21l0 5-10 0 0 3 10 0 0 5-13 0 0 4 13 0 0 8 4 0 0-8 13 0 0-4-13 0 0-5 9 0 0-3-9 0 0-5z"/><path id="r70b9" d="M12 -23l26 0 0 9-26 0zM17 -6l0 2 1 2 0 6 4-1 0-3-1-3 0-4zM27 -6l3 6 0 2 1 1 3-1 0-1-1-2 0-2-2-4zM38 -7l3 6 1 1 2 4 4-2-1-1-2-4-3-3-1-2zM9 -8l-3 6-4 4 4 2 1-1 2-4 2-2 1-2 0-2zM8 -27l0 16 34 0 0-16-16 0 0-6 20 0 0-4-20 0 0-5-3 0 0 15z"/><path id="r7c7b" d="M37 -41l-2 4-3 3 3 1 2-1 1-2 2-2 1-2zM9 -39l2 1 3 6 4-2-1-2-5-5zM23 -42l0 10-19 0 0 3 16 0-2 2-6 4-3 1-3 2-3 0 2 4 3-2 4-1 9-6 2-2 0 8 4 0 0-7 3 1 3 2 4 2 3 1 2 2 3 1 1-3-4-2-3-2-4-2-3-1-3-2 18 0 0-3-20 0 0-10zM23 -18l0 4-1 2-19 0 0 3 18 0-6 6-4 1-4 2-5 1 1 1 1 2 6-1 5-2 6-4 4-6 2 4 3 2 3 3 4 2 4 1 5 1 2-4-4 0-4-1-4-2-3-1-2-3-2-2 18 0 0-3-21 0 1-2 0-4z"/><path id="r578b" d="M32 -39l0 17 3 0 0-17zM41 -42l0 23-1 1-6 0 1 3 6 0 2-1 1-1 1-2 0-23zM19 -37l0 7-6 0 0-7zM3 -30l0 4 6 0 0 1-1 2 0 2-2 1-1 2-2 1 2 3 3-2 2-2 3-6 0-2 6 0 0 10 4 0 0-10 6 0 0-4-6 0 0-7 5 0 0-3-23 0 0 3 5 0 0 7zM23 -17l0 6-15 0 0 3 15 0 0 7-21 0 0 3 46 0 0-3-21 0 0-7 15 0 0-3-15 0 0-6z"/><path id="r540d" d="M13 -26l2 1 1 1 2 1 3 3-3 1-3 2-6 2-4 1-3 0 2 4 2-1 2 0 3-1 2-1 0 17 3 0 0-3 23 0 0 3 3 0 0-21-19 0 4-2 3-3 4-3 3-3 3-4 2-4-2-1-19 0 4-4-5-1-1 2-8 8-8 4 2 1 1 2 2-1 3-2 2-1 5-5 19 0-2 3-4 4-2 1-2 2-3 2-1-2-4-2-3-3zM39 -2l-23 0 0-12 23 0z"/><path id="r79f0" d="M26 -22l-3 9-1 2-1 3-1 2 3 2 1-2 4-12 1-4zM39 -22l5 15 0 2 4-1-1-2-1-3 0-3-2-6-2-3zM27 -42l-5 15-2 2 0-3-6 0 0-9 2 0 4-2-2-3-4 2-3 1-2 0-3 1-3 0 1 3 4 0 2-1 0 8-7 0 0 4 7 0-2 6-2 3-1 2-2 3-1 2 2 3 4-8 1-3 1-2 0 22 4 0 0-22 1 1 2 4 1 1 2-3-1-1-2-3-3-3 0-2 6 0 3 2 1-1 1-2 0-1 3-6 5 0 0 31-1 1-5 0 1 4 5 0 2-1 1-1 0-34 7 0-3 6 4 0 1-1 1-2 0-2 2-4-3-1 0 1-16 0 0-2 1-2 0-2z"/><path id="m672a" d="M22 -42l0 8-15 0 0 4 15 0 0 8-19 0 0 5 17 0-2 3-3 3-3 2-4 3-3 2-4 2 4 4 6-4 3-3 3-2 3-3 2-3 0 17 5 0 0-17 6 6 3 2 3 3 6 4 4-4-4-2-3-2-4-3-3-2-3-3-2-3 17 0 0-5-20 0 0-8 17 0 0-4-17 0 0-8z"/><path id="m6765" d="M37 -31l0 1-1 3-2 4-1 1 4 2 1-2 0-1 1-2 1-1 2-4zM9 -30l4 8 0 2 5-2-3-6-1-1-1-2zM22 -42l0 6-17 0 0 4 17 0 0 12-19 0 0 4 17 0-6 6-3 2-3 3-3 2-4 1 4 4 9-6 6-6 2-3 0 17 6 0 0-17 2 3 6 6 3 2 3 3 3 1 4-4-4-1-3-2-3-3-3-2-6-6 17 0 0-4-19 0 0-12 17 0 0-4-17 0 0-6z"/><path id="m9502" d="M27 -26l5 0 0 5-5 0zM36 -26l6 0 0 5-6 0zM27 -36l5 0 0 6-5 0zM36 -36l6 0 0 6-6 0zM21 -1l0 4 27 0 0-4-11 0 0-7 9 0 0-4-9 0 0-4-1 0 0-1 10 0 0-23-23 0 0 23 9 0 0 5-9 0 0 4 9 0 0 7zM3 -18l0 5 7 0 0 11-2 1-1 2 2 1 1 2 0-1 1 0 1-1 3-1 3-2 4-3-1-2 0-2-6 4 0-9 6 0 0-5-6 0 0-6 5 0 0-4-14 0 1-1 1-2 1-1 12 0 0-5-10 0 2-4-4-1-3 6-2 2-1 2-2 2 2 2 1 2 1-2 0 4 5 0 0 6z"/><path id="m52a8" d="M4 -38l0 4 20 0 0-4zM32 -41l0 10-7 0 0 5 7 0-3 15-1 4-3 4-2 4 2 1 1 2 6-8 2-5 1-5 1-6 0-6 7 0-1 7 0 11-1 3 0 2-1 1-2 1-6 0 2 4 2 1 3 0 2-1 2 0 1-2 1-1 1-3 0-4 1-5 0-19-11 0 0-4 1-2 0-4zM4 -2l2 0 2-1 3-1 4-1 6-1 1 3 4-2-1-2 0-2-1-2-1-3-2-4-4 1 1 1 0 2 2 4-11 2 2-4 1-3 1-2 0-3 1-2 11 0 0-4-22 0 0 4 6 0 0 3-1 2-1 3-1 2 0 2-1 1-1 2-1 1 1 2z"/><path id="r7701" d="M13 -39l-2 4-2 2-1 2-2 2-2 1 3 3 4-4 1-2 2-2 2-3 1-2zM33 -38l11 11 3-2-11-11zM23 -42l0 17-3 1-4 1-3 1-4 0-3 1-4 1 1 1 1 2 2 0 2-1 3 0 0 22 4 0 0-2 23 0 0 2 3 0 0-25-19 0 3-2 6-2 6-4 2-2-4-2-1 2-8 4 0-15zM15 -12l23 0 0 4-23 0zM15 -15l0-3 23 0 0 3zM15 -5l23 0 0 4-23 0z"/><path id="r5e02" d="M21 -41l3 6-21 0 0 4 20 0 0 7-16 0 0 22 4 0 0-19 12 0 0 25 4 0 0-25 12 0 0 14-1 1-7 0 1 2 0 2 8 0 1-1 2-1 0-20-16 0 0-7 21 0 0-4-20 0 0-2-1-2-3-3z"/><path id="r53bf" d="M7 3l1-1 6 0 5-1 9 0 12-1 1 2 2 2 3-2-2-2-1-2-2-2-3-2-4-4-3 2 1 1 2 1 1 2 2 1-24 1 1-1 2-1 1-2 2-1 1-2 2-2 25 0 0-3-7 0 0-26-29 0 0 26-8 0 0 3 14 0-4 4-1 2-2 1-1 1-2 1-1 1zM14 -14l0-5 22 0 0 5zM14 -28l22 0 0 5-22 0zM14 -31l0-5 22 0 0 5z"/><path id="m35" d="M13 1l4-1 2-1 3-2 2-2 1-3 1-4-1-4-1-3-1-2-3-2-2 0-3-1-3 1-2 0 0-9 14 0 0-5-19 0-1 18 3 1 2-1 2 0 2-1 2 1 2 0 1 1 2 4 0 4-2 4-2 1-1 1-4 0-6-3-1-1-3 4 2 1 1 1 4 2 3 1z"/><path id="m5145" d="M8 -15l1 0 2-1 5 0 0 4-1 3-2 3-2 2-4 2-5 2 2 2 1 2 6-2 4-2 3-4 2-3 1-5 1-4 6-1 0 16 1 2 2 2 13 0 1-1 2-1 0-2 1-3 0-3-4-2 0 3-1 2 0 2-1 0-1 1-6 0-2-2 0-14 6 0 3 3 4-2-1-2-2-2-2-3-3-2-4-4-4 3 1 1 2 1 1 1 1 2-21 1 3-3 1-2 2-1 2-4 25 0 0-4-22 0 5-2-1-1-2-4-1-1-5 1 1 2 1 1 1 2 0 2-21 0 0 4 13 0-2 2-1 2-5 5-2 1 1 3z"/><path id="m6869" d="M9 -42l0 9-7 0 0 5 7 0-2 6-1 4-2 3-1 3-2 2 2 2 1 2 1-1 2-4 0-2 1-3 1-2 0 22 5 0 0-25 1 2 1 3 1 2 3-4-2-2-1-2-2-3-1-2 0-1 5 0 0-5-5 0 0-9zM25 -2l0 4 23 0 0-4-9 0 0-14 7 0 0-4-7 0 0-9-5 0 0 9-7 0 0 4 7 0 0 14zM31 -41l3 6-13 0 0 21-3 12-2 3 2 2 2 1 2-4 2-8 1-5 0-4 1-4 0-10 22 0 0-4-13 0 3-2-2-4-1-1z"/><path id="m6570" d="M22 -41l-1 2-2 2-1 2 3 2 1-2 3-3 1-2zM4 -40l1 2 1 3 1 2 3-2 0-2-1-2-2-2zM20 -12l-1 2-3 3-2-1-2 0-1-1 1-3zM5 -8l4 2 1 1 2 1-1 1-4 2-1 0-2 1-2 0 2 4 4-2 2 0 2-1 2-2 2-1 2 1 2 2 3-3-2-2-2-1 3-3 1-2 1-1 0-2 1-3-3-1 0 1-8 0 1-3-4-1-1 4-7 0 0 4 5 0-1 1-1 2zM12 -42l0 9-10 0 0 4 9 0-1 1-2 1-1 2-4 2-1 1 1 1 1 2 4-2 4-4 0 5 5 0 0-6 1 1 4 2 1 1 2-3-1-1-6-3 9 0 0-4-10 0 0-9zM31 -42l-1 4 0 5-2 4-1 3-1 4-2 3 2 1 1 2 3-6 1 2 0 2 2 4 0 2 1 2-1 2-6 6-2 1-3 2 2 1 1 2 2-1 3-1 2-2 1-2 4-4 2 4 5 5 2 1 1-2 2-2-2-1-2-2-2-1-1-2-2-2-1-2 1-2 3-9 1-4 0-3 4 0 0-5-14 0 0-2 1-2 0-4zM40 -28l0 2-1 3 0 2-2 4 0 2-2-4 0-2-1-3-1-2 0-2z"/><path id="mff1a" d="M15 -24l2-4-2-4-5 0-2 4 2 4zM15 0l2-4-2-4-5 0-2 4 2 4z"/><path id="m626c" d="M8 -42l0 10-6 0 0 4 6 0 0 10-6 2 1 4 5-1 0 11-1 1-4 0 1 3 0 2 5 0 2-1 1-2 1-3 0-13 6-1-1-5-5 2 0-9 5 0 0-4-5 0 0-10zM21 -21l1-1 5 0-1 3-4 4-1 2-2 2-3 2 2 1 2 2 2-2 2-3 2-2 4-6 1-3 5 0-4 10-3 4-7 7-4 2 2 2 2 1 4-3 4-4 6-8 2-5 2-6 3 0-1 6 0 5-1 4 0 3-1 2-2 2-2 0-3-1 1 2 0 3 6 0 2-1 1-1 2-4 1-4 0-4 1-6 0-8 1-2-19 0 2-2 3-2 2-1 3-2 2-2 2-3-3-2-21 0 0 5 15 0-2 1-2 2-4 2-2 2-4 2-1 0 1 3z"/><path id="m5dde" d="M12 -41l0 15-1 5 0 4-1 5-1 4-3 5-3 3 1 2 2 2 4-4 3-5 2-5 1-5 0-26zM26 -40l0 41 4 0 0-41zM40 -42l0 46 5 0 0-46zM6 -30l-1 2 0 3-1 2-1 3-2 4 4 1 3-6 1-3 0-2 1-3zM17 -28l0 3 3 6 0 4 4-1 0-4-1-2-1-3-2-4zM31 -28l1 2 1 3 2 4 0 2 1 2 4-2-2-4 0-2-2-2-2-4z"/><path id="m5efa" d="M20 -38l0 4 9 0 0 3-12 0 0 3 12 0 0 4-10 0 0 3 10 0 0 3-10 0 0 4 10 0 0 3-12 0 0 4 12 0 0 4 4 0 0-4 14 0 0-4-14 0 0-3 12 0 0-4-12 0 0-3 11 0 0-7 3 0 0-3-3 0 0-7-11 0 0-4-4 0 0 4zM33 -28l7 0 0 4-7 0zM33 -31l0-3 7 0 0 3zM5 -19l2-2 5 0 0 5-2 4 0 2-2-4 0-1-1-2-4 1 2 4 0 1 1 2 1 1 1 2-1 2-5 5 1 2 2 1 1-1 2-1 1-2 1-1 1-2 6 4 3 1 4 1 23 0 0-2 1-2-20 0-3-1-4 0-3-1-3-2-2-2 1-2 1-3 0-3 2-6 0-3-3-1-4 0 2-2 3-6 1-3 1-2-3-2-1 1-10 0 0 4 8 0-1 2-1 3-1 2-5 5z"/><path id="m7b51" d="M2 -7l1 5 3-1 2-1 3 0 4-1 6-2-1-4-6 2 0-12 7 0 0-4-18 0 0 4 7 0 0 13zM23 -25l0 13-2 6-1 2-2 3-4 2 2 1 2 2 3-2 3-3 2-3 1-3 0-7 2 2 1 2 2 1 2 4 3-3 0 8 1 1 0 1 3 1 6 0 2-4 0-3-2 0-2-1 0 4-3 0 0-24zM27 -21l10 0 0 12-1-1-1-2-5-5-3 2zM10 -43l-2 6-2 2-1 3-4 4 3 1 1 1 2-1 1-1 1-2 1-1 1-2 2 0 2 4 0 1 1 2 4-2-1-1-1-2 0-2 7 0 0-4-12 0 1-2 0-2zM30 -42l-1 2-1 3-2 4-2 3-1 1 2 2 2 1 1-2 1-1 2-4 3 0 1 2 1 1 2 4 4-2-1-1-2-4 8 0 0-4-14 0 1-2 0-2z"/><path id="m9662" d="M29 -41l1 1 2 4-13 0 0 9 4 0 0 4 21 0 0-4 4 0 0-9-11 0-2-4-1-3zM24 -27l0-5 19 0 0 5zM19 -18l0 4 7 0 0 3-1 3-2 3-4 4-4 1 2 2 1 2 4-2 3-2 4-6 2-8 4 0 0 14 1 2 0 1 2 0 2 1 4 0 1-1 1 0 1-1 1-2 0-2 1-3-4-2-1 4 0 2-1 1-2 0-2-2 0-12 9 0 0-4zM4 -40l0 44 4 0 0-40 5 0 0 2-1 2 0 1-1 2 0 2-1 2 2 4 1 1 1 2 0 3-1 3-4 0 1 2 0 2 3 0 3-1 1-1 1-2 0-6-1-2 0-2-1-2-2-2 2-4 0-2 2-4 1-3-3-1z"/><path id="m39" d="M12 1l4-1 3-1 3-3 2-4 1-5 1-7-2-10-4-6-4-1-3-1-3 1-2 1-3 2-1 2-1 3-1 4 0 3 1 3 4 4 3 1 4 0 2-1 2 0 1-2 1-1 0 5-2 6-2 2-2 1-4 0-2-1-2-2-3 4 1 1 6 3zM20 -22l-1 2-4 2-4 0-3-3 0-7 2-4 1-1 4 0 2 1 3 6z"/><path id="m5e7f" d="M23 -41l2 4 0 2-18 0 0 22-2 8-1 3-2 3 4 4 4-8 1-4 0-5 1-4 0-14 35 0 0-5-16 0-1-1 0-2-2-4z"/><path id="m660c" d="M15 -29l20 0 0 4-20 0zM15 -36l20 0 0 3-20 0zM10 -40l0 18 30 0 0-18zM11 -6l28 0 0 4-28 0zM11 -10l0-4 28 0 0 4zM6 -18l0 22 5 0 0-2 28 0 0 2 5 0 0-22z"/><path id="m73b0" d="M22 -40l0 27 4 0 0-23 14 0 0 23 5 0 0-27zM2 -6l1 5 2-1 3-1 3 0 9-3 0-4-7 1 0-11 5 0 0-5-5 0 0-10 7 0 0-4-18 0 0 4 7 0 0 10-6 0 0 5 6 0 0 13-2 0-2 1zM31 -32l0 13-1 4-2 4-2 5-4 3-6 4 2 2 2 1 6-4 2-2 2-3 2-2 1-3 0 11 1 1 2 1 8 0 2-1 1-1 0-2 1-2 0-4-4-2 0 8-1 0-1 1-3 0-2-2 0-12-3 0 1-2 0-16z"/><path id="m4ee3" d="M36 -39l5 5 1 2 1 1 4-2-1-2-5-5-2-1zM27 -41l0 10 1 2 0 2-11 2 0 4 11-1 1 7 4 12 6 6 4 1 1 0 2-2 1-2 1-3 1-4-2-1-2-2 0 3-1 3 0 1-1 1-3 0-2-3-1-3-2-4-1-5-1-6 15-2-1-4-15 2 0-14zM15 -42l-4 8-2 3-3 4-2 3-3 2 1 3 2 2 3-3 1-2 2-2 0 28 4 0 0-34 2-4 1-1 2-4 1-1z"/><path id="m519c" d="M12 4l1 0 1-1 2 0 3-1 4-2 6-1 0-2-1-3-11 3 0-14 1-2 2-1 1-2 1-1 1-2 3 6 2 6 4 5 8 8 5 3 1-2 2-2-2-1-3-2-2-2-3-2-2-2-2-3 4-2 1-2 4-2 1-2-3-3-2 1-1 2-1 1-2 1-1 1-2 1-3-6-1-3-1-2-1-3 1-1 14 0 0 7 5 0 0-11-18 0 1-2 0-1 1-2-5-1-1 2 0 2-1 2-19 0 0 11 5 0 0-7 12 0-2 5-2 3-4 3-3 3-4 3-5 2 4 4 6-3 1-2 0 10-1 3-1 1z"/><path id="m4e1a" d="M42 -31l-3 9-2 3-1 3-2 3 4 2 2-3 1-3 2-3 2-6 2-3zM4 -30l2 6 1 4 2 3 0 3 1 2 5-1-4-12-2-3-1-3zM29 -42l0 39-8 0 0-39-5 0 0 39-13 0 0 5 44 0 0-5-13 0 0-39z"/><path id="m56ed" d="M13 -31l0 3 24 0 0-3zM10 -23l0 4 8 0-1 3 0 2-1 3-2 1-2 2-3 1 2 2 1 2 6-4 1-2 2-3 0-3 1-4 5 0 0 11 1 2 1 1 8 0 2-2 1-2 0-3-4-2 0 5-4 0-1-1 0-9 8 0 0-4zM4 -40l0 44 5 0 0-2 32 0 0 2 5 0 0-44zM9 -2l0-34 32 0 0 34z"/><path id="m31" d="M4 0l21 0 0-5-7 0 0-32-4 0-4 2-2 0-2 1 0 4 6 0 0 25-8 0z"/><path id="m34" d="M17 0l5 0 0-10 5 0 0-4-5 0 0-23-6 0-15 23 0 4 16 0zM17 -14l-10 0 7-11 3-6z"/><path id="m7a0e" d="M27 -28l14 0 0 8-14 0zM22 -32l0 16 5 0 0 4-2 6-2 3-2 2-4 2 2 1 1 2 4-2 3-3 4-6 0-4 1-5 3 0 0 16 1 2 1 1 1 0 2 1 4 0 1-1 1 0 1-1 1-2 0-2 1-3-4-2 0 3-1 2 0 1-3 0-1-1 0-14 6 0 0-16-5 0 0-2 1-1 3-6-5-1-2 4 0 2-2 4-7 0 3-2 0-1-2-4-1-1-1-2-4 2 4 8zM18 -42l-2 1-3 1-2 0-6 2-3 0 2 4 2 0 2-1 2 0 0 7-8 0 0 4 7 0-3 9-2 2-1 2-2 2 1 2 2 3 6-12 0 20 5 0 0-22 1 2 2 2 1 2 2-4-6-6 0-2 6 0 0-4-6 0 0-8 2-1 2 0 2-1z"/><path id="m52a1" d="M22 -19l-1 2 0 3-15 0 0 4 13 0-1 2-3 3-2 1-3 2-3 1-4 1 2 4 5-1 4-2 3-2 3-3 4-6 15 0-1 3 0 2-1 2 0 1-1 1-2 1-6 0-2-1 1 2 0 3 8 0 3-1 2-1 0-1 1-1 1-2 1-3 0-3 1-4 0-2-18 0 0-2 1-3zM36 -33l-1 1-10 5-6-3-3-3zM19 -42l-11 11-4 1 2 2 1 2 2-1 1-1 2-1 1-1 2 1 1 2 4 2-3 1-3 0-3 1-3 0-3 1-3 0 2 4 4 0 3-1 4 0 3-1 4-1 3-1 6 2 4 0 3 1 4 0 4 1 2-4-3-1-6 0-3-1-2 0-3-1 3-1 4-4 2-1 2-2 2-3-3-1-20 0 1-2 2-2z"/><path id="m5c40" d="M7 -40l0 21-3 15-3 4 2 1 2 2 2-3 1-4 2-3 1-4 0-4 1-3 29 0 0 9-1 3 0 4-1 1-2 1-5 0 1 2 0 2 7 0 2-1 2-2 0-2 1-3 0-4 1-6 0-8-34 0 0-4 30 0 0-14zM12 -36l26 0 0 6-26 0zM15 -15l0 17 5 0 0-3 15 0 0-14zM20 -11l10 0 0 6-10 0z"/><path id="m5bb6" d="M21 -41l1 3-18 0 0 11 4 0 0-7 34 0 0 7 4 0 0-11-18 0-1-2-1-3zM39 -24l-1 1-2 1-5 5-2 1-3-6-2-1 2-1 1-2 12 0 0-4-28 0 0 4 10 0-3 2-2 1-12 4 2 4 3-1 4-2 3-1 4-2 2 2-2 2-3 1-3 2-4 1-6 2 2 4 6-2 3-2 4-1 3-2 2-2 1 3-3 2-3 3-4 2-4 1-4 2-4 1 2 4 4-1 3-2 4-1 4-2 6-4 0 4-1 2-1 1-3 1-4 0 1 2 0 2 6 0 4-2 1-1 1-2 1-3 0-5-1-3 2-2 2 4 1 3 2 3 3 2 2 2 3 2 4-4-3-1-3-2-2-2-4-6-1-3 2-1 3-3 2-1z"/><path id="m5c5e" d="M11 -36l29 0 0 3-29 0zM7 -40l0 19-1 4 0 5-1 5-1 4-3 5 3 1 2 1 2-4 1-5 1-6 1-5 0-13 34 0 0-11zM19 -18l8 0 0 3-8 0zM31 -18l8 0 0 3-8 0zM40 -28l-3 0-4 1-10 0-4 1-5 0 1 3 8 0 2-1 2 0 0 3-12 0 0 8 12 0 0 3-14 0 0 14 4 0 0-11 10 0 0 3-8 1 0 3 17-1 1 2-1 0 1 3 7 0 1-2 0-12-14 0 0-3 12 0 0-8-12 0 0-3 4 0 2-1 6 0zM33 -6l1 2-3 0 0-3 10 0 0 7-1 1-2 0 2-1-1-1-2-4-1-1z"/><path id="r5e94" d="M13 -24l1 2 5 15 3-2-1-2 0-3-3-9-2-3zM24 -27l2 6 0 3 1 3 1 2 0 3 4-1-1-3 0-2-4-12zM23 -41l1 1 1 3 1 1-20 0 0 22-1 4 0 4-2 4-1 4 3 2 2-4 1-4 1-5 1-4 0-19 37 0 0-4-17 0 0-1-2-4-1-1zM10 -2l0 4 38 0 0-4-14 0 6-12 2-5 2-4 1-4-4-2-1 5-2 4-1 5-2 5-2 4-3 4z"/><path id="r56fd" d="M30 -16l1 2 4 4 2-2-1-2-2-2-2-1zM11 -10l0 3 28 0 0-3-13 0 0-8 11 0 0-4-11 0 0-7 12 0 0-3-26 0 0 3 11 0 0 7-9 0 0 4 9 0 0 8zM4 -40l0 44 4 0 0-2 34 0 0 2 4 0 0-44zM8 -2l0-34 34 0 0 34z"/><path id="r7a0e" d="M26 -29l16 0 0 10-16 0zM22 -32l0 16 6 0-1 4 0 3-4 6-2 2-4 2 3 3 4-2 2-3 3-3 2-8 0-4 5 0 0 18 2 1 9 0 0-1 1-2 0-5-3-1 0 5-1 1-4 0-1-1 0-15 6 0 0-16-5 0 1-2 1-1 1-2 0-2 1-2-4-1 0 2-4 8-7 0 3-1-1-2 0-2-1-1-1-2-2-2-3 2 1 1 2 4 1 1 1 2zM18 -42l-4 2-3 1-3 0-3 1-2 0 1 3 4 0 3-1 0 8-9 0 0 4 8 0-2 6-2 3-1 2-2 3-2 2 1 1 1 2 2-2 3-6 2-3 1-2 0 22 3 0 0-23 2 1 2 4 1 1 2-3-7-7 0-1 7 0 0-4-7 0 0-9 3 0 2-1 1-1z"/><path id="r52a1" d="M22 -19l0 3-1 2-15 0 0 3 14 0-1 3-5 5-3 1-4 2-4 1 2 3 5-1 4-2 3-2 3-3 2-3 2-4 15 0 0 6-1 2 0 1-2 2-9 0 1 3 10 0 3-3 1-2 0-3 1-3 0-4 1-2-19 0 1-2 0-3zM37 -34l-1 2-4 2-2 2-2 1-3 1-1-1-4-2-4-4 1-1zM19 -42l-1 2-7 7-3 2-4 2 3 3 2-1 3-3 2-1 1 2 1 1 2 1 1 1 2 1-6 2-3 0-3 1-4 0-3 1 2 3 3 0 8-2 3-1 4-1 3-1 3 1 4 1 6 2 4 0 4 1 2-4-6 0-4-1-3 0-2-1-3-1 3-1 2-2 2-1 3-2 1-2 2-3-2-1-21 0 1-1 1-2 1-1z"/><path id="r5c40" d="M8 -39l0 16-1 5 0 4-1 5-2 5-3 4 3 3 2-4 2-3 1-4 1-3 1-4 0-4 31 0 0 6-1 4 0 4-1 2 0 3-2 1-2 0-2-1-2 0 1 4 6 0 4-2 1-1 0-2 1-3 0-10 1-6 0-2-35 0 0-4 31 0 0-13zM11 -36l27 0 0 6-27 0zM15 -15l0 16 4 0 0-3 15 0 0-13zM19 -12l12 0 0 7-12 0z"/><path id="m38" d="M14 1l4-1 3-1 2-1 2-2 1-2 0-5-3-6-1-1-2-1 4-4 1-2 0-5-1-3-2-2-2-1-3-1-5 0-3 1-2 1-2 2-1 2 0 5 2 4 3 3-2 1-3 3-1 2 0 2-1 2 1 3 1 2 2 2 2 1zM17 -20l-6-3-1-2-1-1 0-4 3-3 4 0 2 1 1 1 1 2 0 3zM12 -4l-2-1-1-1-2-4 1-2 0-1 1-2 1-1 2-1 8 4 0 2 1 2-1 2 0 1-2 2z"/><path id="m5b8f" d="M20 -32l-1 2 0 2-2 4-14 0 0 4 12 0-1 4-2 3-3 3-4 6-3 2 4 4 6-6 2-4 3-4 4-8 26 0 0-4-24 0 0-2 2-4zM16 3l2 0 3-1 4 0 6-1 9 0 1 2 1 1 4-2-1-2-1-3-2-2-2-3-4-4-4 2 3 3 2 4-15 1 1-2 2-3 2-2 1-2 2-3 1-3-5-1-1 3-2 3-2 2-1 3-1 2-3 3-2 1zM22 -41l1 2 0 2-19 0 0 10 4 0 0-6 34 0 0 6 4 0 0-10-17 0-3-6z"/><path id="m56fe" d="M18 -14l2 1 3 0 6 3 1 0 2-3-1 0-4-2-2 0-3-1-2 0zM14 -7l3 0 8 2 3 0 6 2 2-3-9-3-4 0-4-1-3 0zM4 -40l0 44 4 0 0-2 33 0 0 2 5 0 0-44zM8 -2l0-34 33 0 0 34zM21 -35l-7 7-2 1-2 2 3 3 2-2 2-1 1 1 2 1 1 1-6 3-2 0-2 1-2 0 2 4 2 0 3-1 2-1 3-1 4-2 2 1 3 1 2 1 2 0 4 2 2-2 1-2-2 0-2-1-2 0-6-3 4-2 4-4 1-2-3-2 0 1-12 0 1-3zM19 -28l12 0-2 2-4 2-1-1-2-1-1-1z"/><path id="m8def" d="M8 -36l9 0 0 8-9 0zM2 -3l0 5 3-1 3 0 4-1 3-1 4-1 3-1 0-4-6 1 0-8 5 0 2 2 2 0 0 16 4 0 0-2 11 0 0 2 5 0 0-16 1 0 1-2 2-2-8-4-3-3 1-2 2-2 2-4 1-3 1-2-3-1-9 0 1-2 0-2-4-1-1 3-2 2-1 3-1 2-2 3-2 2 0-13-17 0 0 16 7 0 0 19-3 1 0-16-4 0 0 17zM29 -2l0-8 11 0 0 8zM39 -33l-2 4-1 1-1 2-3-3-1-2-1-1 1-1zM28 -14l2-1 5-5 5 5 2 1zM32 -23l-3 3-2 1-2 2-2 1-2 0 0-2-5 0 0-6 5 0 0-3 3 3 3-3 1-2 1 2 2 2z"/><path id="m5382" d="M7 -39l0 23-1 5-1 4-1 5-2 3 2 2 2 1 2-4 2-5 2-10 0-19 35 0 0-5z"/><path id="m533a" d="M46 -40l-41 0 0 43 43 0 0-5-39 0 0-33 37 0zM13 -29l4 4 2 1 4 4 2 1-2 2-3 2-4 4-2 1-3 2 2 1 2 2 2-1 2-2 3-2 2-1 4-4 2 1 6 6 1 2 2 1 3-3-1-2-2-1-1-2-4-4-3-2 4-4 1-2 2-2 1-2 2-2-5-2-2 4-2 2-1 2-3 3-2-2-2-1-2-2-2-1-2-2-2-1z"/><path id="r9634" d="M42 -24l0 8-14 0 0-8zM42 -28l-14 0 0-8 14 0zM24 -40l0 28-1 4-1 3-2 4-3 3 3 2 2-2 2-3 1-2 2-6 0-3 15 0 0 11-1 1-6 0 2 4 4 0 2-1 1 0 1-1 1-3 0-39zM4 -40l0 44 4 0 0-41 8 0-1 2 0 2-2 4 0 2-1 2 1 2 2 2 0 1 1 2 0 5-2 2-3 0 1 3 3 0 3-1 1-1 1-2 0-6-3-6-2-2 5-10 0-3-2-1z"/><path id="r95f8" d="M5 -31l0 35 3 0 0-35zM5 -40l4 4 1 2 2 2 2-2-2-4-2-2-2-1zM24 -18l0 5-8 0 0-5zM27 -18l7 0 0 5-7 0zM24 -21l-8 0 0-6 8 0zM27 -21l0-6 7 0 0 6zM13 -30l0 22 3 0 0-2 8 0 0 12 3 0 0-12 7 0 0 2 3 0 0-22zM18 -39l0 3 24 0 0 35-1 1-5 0 1 4 3 0 2-1 2 0 1-1 1-3 0-38z"/><path id="r76df" d="M26 -40l0 12-1 3 0 2-1 2-2 3-2 2 3 2 1-1 1-2 1-1 1-2 1-1 0-2 13 0 0 4-1 1-6 0 2 4 2-1 5 0 1-1 1-3 0-21zM29 -37l12 0 0 4-12 0zM29 -30l12 0 0 4-12 0zM8 -28l10 0 0 5-10 0zM8 -31l0-6 10 0 0 6zM5 -40l0 23 3 0 0-3 13 0 0-20zM8 -13l0 12-6 0 0 4 46 0 0-4-6 0 0-12zM11 -1l0-9 7 0 0 9zM22 -1l0-9 6 0 0 9zM32 -1l0-9 7 0 0 9z"/><path id="r533a" d="M46 -39l-41 0 0 41 43 0 0-3-39 0 0-35 37 0zM13 -29l2 1 10 10-6 6-3 1-2 2-3 2 2 1 1 1 3-1 4-4 3-2 4-4 8 8 1 2 2 1 3-2-2-2-1-2-6-6-3-2 6-6 1-2 2-3 1-2-3-1-2 2-2 4-4 4-1 2-6-6-2-1-2-2-2-1z"/><path id="r5b8f" d="M20 -32l-1 2 0 2-1 2 0 2-15 0 0 3 13 0-4 8-4 6-3 3-3 2 3 3 9-9 4-8 2-5 27 0 0-3-25 0 0-2 1-2 1-3zM16 3l1 0 1-1 7 0 6-1 9-1 2 4 4-2-1-2-2-2-2-3-4-4-1-3-3 2 1 2 3 3 1 2-18 2 2-3 2-2 2-3 1-2 4-6-4-1-4 6-1 3-2 2-1 2-3 3-2 1zM22 -41l2 4-20 0 0 10 3 0 0-6 36 0 0 6 3 0 0-10-18 0 1 0-1-1-2-4z"/><path id="r56fe" d="M19 -14l2 1 2 0 4 2 2 0 2 1 1-2-1-1-4-2-2 0-3-1-2 0zM14 -8l3 1 4 1 4 0 9 3 2-3-6-2-4 0-3-1-4-1-3 0zM4 -40l0 44 4 0 0-2 34 0 0 2 4 0 0-44zM8 -1l0-35 34 0 0 35zM21 -35l-2 2-1 2-2 1-4 4-2 1 2 2 2-1 1-1 2-1 3 3 2 1-6 3-3 1-2 0-2 1 1 3 3-1 2-1 3 0 3-1 2-2 2-1 3 1 6 3 3 1 2 0 2-3-2 0-2-1-2 0-3-1-4-2 4-2 3-3 1-2 1-1-2-2 0 1-13 0 2-3zM19 -28l13 0-1 1-2 1-2 2-2 1-2-1-1-2-2-1z"/><path id="r8def" d="M8 -37l9 0 0 9-9 0zM2 -2l1 4 2-1 3-1 4-1 3 0 3-1 4-1 0-4-7 2 0-9 5 0 2 3 3-2 0 17 4 0 0-2 12 0 0 2 4 0 0-17 1 1 1-2 2-1-3-1-4-2-1-2-2-1-2-2 2-2 2-4 2-2 1-2 1-3-3-1-10 0 1-2 0-2-3-1-2 6-2 3-2 2-1 2-2 2 0-13-17 0 0 16 8 0 0 20-4 1 0-17-4 0 0 17zM29 -1l0-10 12 0 0 10zM40 -34l-3 6-1 1-1 2-1-2-2-1-1-2 0-1-1-2 0-1zM27 -14l2-1 1-1 2-1 1-2 2-1 1 1 2 1 1 2 2 1 1 1zM32 -23l-1 2-2 1-2 2-6 3 0-2-6 0 0-7 6 0 0-2 2 2 2-1 1-1 2-4 3 6z"/><path id="r33" d="M13 1l9-3 1-2 2-3 0-5-2-4-6-3 4-2 1-2 1-1 0-2 1-2-1-3-2-4-2-1-3-1-7 0-2 1-1 1-2 1-1 1 2 3 2-1 2-2 2 0 2-1 2 1 2 0 1 2 1 1 0 4-1 2-1 1-2 1-3 1-3 0 0 4 4 0 3 1 2 1 1 1 1 2 0 4-1 2-2 2-2 1-4 0-3-1-1-1-2-1-1-1-3 3 2 1 1 1 4 2 2 0z"/><path id="r31" d="M4 0l20 0 0-4-7 0 0-33-3 0-4 2-2 0-2 1 0 3 7 0 0 27-9 0z"/><path id="r53f7" d="M13 -37l24 0 0 7-24 0zM9 -40l0 14 32 0 0-14zM3 -22l0 3 10 0 0 2-2 4 0 2-1 1 26 0 0 4-1 2 0 2-2 2-11 0 2 4 10 0 2-2 1 0 2-4 0-2 1-3 1-4 0-2-25 0 2-6 29 0 0-3z"/><path id="m32" d="M2 0l24 0 0-5-15 0 7-7 2-4 2-3 2-4 0-7-1-2-4-4-6-2-2 1-2 0-6 3-1 2 3 3 2-1 1-2 2-1 5 0 3 3 0 2 1 2-2 6-6 8-9 9z"/><path id="m6c5f" d="M5 -38l6 3 1 2 2 1 3-4-8-4-1-2zM2 -24l8 4 1 1 3-4-8-4-1-1zM4 0l4 4 1-3 2-3 1-2 2-3 1-3 2-2-4-4-1 3-4 6-1 3-2 2zM16 -4l0 5 32 0 0-5-14 0 0-29 12 0 0-5-28 0 0 5 11 0 0 29z"/><path id="m82cf" d="M10 -16l-1 2-1 1-3 6-2 1 4 2 3-3 3-6 1-1zM6 -24l0 4 14 0-1 5-1 4-2 3-3 4-4 2-5 3 1 1 1 2 6-2 5-4 3-3 2-5 2-4 1-6 9 0 0 11-1 3 0 4-1 1-2 1-6 0 1 2 0 2 7 0 4-2 1-1 1-2 0-5 1-4 0-5 4 8 0 2 1 2 4-2-1-2 0-2-3-6-1-1-4 1 0-9-14 0 1-5-5 0 0 5zM31 -42l0 4-12 0 0-4-5 0 0 4-11 0 0 5 11 0 0 5 5 0 0-5 12 0 0 5 5 0 0-5 11 0 0-5-11 0 0-4z"/><path id="m7701" d="M13 -39l-1 2-2 2-1 2-5 5 2 1 2 2 2-2 1-2 4-4 1-3 1-2zM33 -38l8 8 1 2 2 2 4-3-11-11zM22 -42l0 17-6 2-4 0-3 1-4 1-4 0 2 2 1 2 5 0 2-1 0 22 5 0 0-2 21 0 0 2 5 0 0-25-19 0 3-2 3-1 3-2 3-1 4-4-5-2-2 2-2 1-1 1-2 1 0-14zM16 -11l21 0 0 3-21 0zM16 -15l0-3 21 0 0 3zM16 -5l21 0 0 3-21 0z"/><path id="m68c0" d="M20 -18l0 2 1 3 1 2 0 4 1 1 4-1-1-1 0-2-1-2 0-2-1-3-1-2zM29 -19l1 2 0 2 1 2 0 6 4-1 0-3-1-2 0-5-1-2zM8 -42l0 9-6 0 0 4 6 0-1 4-4 12-1 2 1 2 1 3 1-2 0-2 1-1 1-2 1-3 0-2 0 22 5 0 0-25 1 3 1 2 1 1 2-3-2-4-2-3-1-2 0-2 4 0 0-4-4 0 0-9zM32 -36l1 2 6 6 2 1-17 0 4-4 1-2zM31 -43l-2 4-2 3-6 6-6 4 2 2 1 2 2-1 3-3 0 3 18 0 0-4 3 3 2 1 1-2 2-2-3-2-3-1-2-3-3-2-4-4 1-2zM17 -2l0 4 30 0 0-4-9 0 2-3 1-2 1-3 2-3 1-3 1-2-4-2-2 6-2 3-2 6-2 3z"/><path id="m5bdf" d="M14 -7l-1 1-2 1-2 2-6 3 1 2 2 1 2-1 3-1 2-2 2-1 4-4zM32 -5l2 2 4 2 2 2 4 2 3-3-2-1-2-2-8-4zM21 -41l2 3-20 0 0 8 5 0 0-4 34 0 0 3-13 0-1-3-4 1 1 3 1 2 2 3 1 2 2 2 1 2-13 0 1-2 1-1 3-6 1-1-3-2 0 1-6 0 2-3-5-1-2 4-4 4-2 1-3 2 1 1 1 2 2-1 2-2 2-1 2-2 2-1 6 0-1 2-2 1-1-1-2-1-2 2 3 3-2 2-3-3-3 2 3 3-6 3-2 0 2 4 4-2 0 4 15 0 0 7-1 1-5 0 1 2 0 2 6 0 2-1 1-1 1-3 0-7 14 0 0-4-33 0 2-1 1-1 2-1 1-1 2-1 0 2 17 0 0-3 2 1 1 2 6 3 3 0 1-2 2-2-2 0-2-1-2 0-2-1-1-1-2-1 4-4 1-2 1-1 1-2-2-1 4 0 0-8-19 0-2-4zM31 -27l8 0-1 2-2 1-1 2-1-2-2-1z"/><path id="m5e0c" d="M8 -39l2 1 2 0 4 2 2 0 2 1-2 1-3 1-3 0-2 1-3 0-3 1 4 4 1-1 2 0 2-1 2 0 2-1 2 0-2 4-14 0 0 4 12 0-2 3-6 6-3 2-2 1 1 2 2 2 1-1 2-1 3-3 0 12 5 0 0-13 8 0 0 16 5 0 0-16 10 0 0 8-1 1-6 0 2 4 6 0 1-1 2-1 0-15-14 0 0-5-5 0 0 5-8 0 2-2 2-4 27 0 0-4-24 0 2-4-3-1 5-2 3 1 10 5 4-3-2-1-1-1-2-1-2 0-4-2 6-3 1-1 2-1-4-2-1 1-4 2-2 0-4 2-6-2-2 0-6-2-2-1z"/><path id="m671b" d="M3 -1l0 4 44 0 0-4-20 0 0-3 15 0 0-4-15 0 0-4 17 0 0-4-38 0 0 4 17 0 0 4-15 0 0 4 15 0 0 3zM7 -18l1-1 1 0 1-1 3 0 4-2 6-1 0-4-11 3 0-9 13 0 0-4-8 0-2-4-1-1-4 1 2 4-10 0 0 4 5 0 0 10-2 1zM27 -41l0 14-1 3-4 4 2 4 2-1 3-3 2-4 10 0 0 2-1 1-5 0 1 2 0 2 6 0 2-1 1-1 1-3 0-19zM32 -37l9 0 0 3-9 0zM31 -31l10 0 0 3-10 0z"/><path id="m57ce" d="M43 -25l-1 2 0 2-1 2 0 2-1 1-1 2 0-2-1-3 0-12 10 0 0-4-4 0 3-1-1-2-2-1-1-2-2-1-3 2 2 2 2 1 1 2-5 0 0-7-5 0 0 7-15 0 0 23-1 2 0 2-1-4-4 2 0-16 4 0 0-4-4 0 0-12-5 0 0 12-5 0 0 4 5 0 0 17-4 2-1 0 1 5 2-1 3-1 4-2 3-1 2-1-1 2 0 2-2 4-1 1 1 2 2 1 2-3 2-4 2-8 0-9 6 0 0 3-1 3 0 6-5 0 1 2 0 2 5 0 3-3 0-7 1-4 0-6-10 0 0-7 11 0 1 5 0 8 1 3 0 4 1 3-8 8-2 1 2 1 1 2 4-2 1-2 2-1 1-2 3 6 2 0 1 1 2-1 1 0 1-1 1-2 0-3 1-3-2-1-2-2 0 6-1 2-1 0-1-1-1-3-1-2 2-3 1-2 4-12z"/><path id="m30" d="M14 1l4-1 3-1 2-3 2-4 1-5 0-11-1-5-2-4-2-2-3-2-4-1-3 1-3 2-2 2-2 4-2 10 1 6 1 5 2 4 2 3zM13 -4l-2-1-1-2-1-3-1-4 0-9 1-4 1-3 1-2 2-1 3 0 2 1 1 2 1 3 0 4 1 4-1 5 0 4-1 3-1 2-2 1z"/><path id="m5b89" d="M20 -41l2 4-18 0 0 11 5 0 0-6 32 0 0 6 5 0 0-11-18 0-1-1-2-4zM32 -18l-2 4-1 1-1 2-2 2-6-3-1 0-2-1 1-2 1-1 1-2zM14 -18l-2 4-2 1-1 2 4 2 2 0 3 1 4 2-3 1-2 1-6 2-4 1-3 1 1 2 2 2 4-1 3-1 4-1 3-2 3-1 3-2 3 1 3 2 3 1 2 1 2 2 2 1 4-4-4-2-3-2-2-1-3-1-3-2 4-4 3-6 9 0 0-5-24 0 0-1 3-6-5-1-4 8-14 0 0 5z"/><path id="m5fbd" d="M16 -6l-2 4-2 2 3 2 3-3 2-4zM9 -42l-1 1-2 4-5 5 2 1 1 2 2-1 1-2 4-4 1-3 1-2zM14 -39l0 11 18 0 0-11-4 0 0 7-3 0 0-10-4 0 0 10-3 0 0-7zM14 -6l2 0 2-1 3 0 0 8-3 0 1 3 3 0 2-1 1-1 0-10 6 0 1 2 2-1 0-2-2-4-2-2-2 2 1 2-8 1 1-2 2-1 1-1 2-1 1-1 2-1-3-3-3 3-4 0 4-4-2-1 8 0 0-4-16 0 0 4 6 0-4 4-3 1 2 4 2-1 3 0-2 2-4 2-1 0zM36 -42l0 4-1 3-1 4-2 6-2 3 2 2 1 2 1-2 1-1 0 2 1 2 0 2 1 3 0 2 1 2-1 1-1 2-1 1-1 2-1 1-2-4-2-1-3 1 2 2 2 4 1-1-1 1 3 3 2-2 2-1 1-2 1-1 1-2 2 4 4 4 1-2 2-1-4-4-2-4-1-1 2-6 1-4 0-3 1-4 0-4 2 0 0-3-9 0 0-2 1-2 0-6zM38 -29l4 0 0 6-1 2 0 5-1 2-1-2 0-3-1-2 0-4-1-3zM10 -32l-1 3-2 2-1 3-2 2-1 2-2 2 1 2 2 2 1-2 2-2 0 22 4 0 0-28 1-1 1-2 0-2 1-2z"/><path id="m7f06" d="M37 -29l2 1 4 4 3-2-4-4-2-1zM20 -40l0 15 4 0 0-15zM21 -22l0 17 4 0 0-13 15 0 0 12 4 0 0-16zM27 -42l0 18 4 0 0-18zM2 -3l1 4 2-1 6-2 2-1 6-2-1-4-9 3-2 1-3 1zM36 -42l0 2-1 3-4 8 2 1 1 2 2-4 1-1 1-2 9 0 0-4-8 0 1-2 0-2zM30 -16l0 5-1 4-1 3-3 2-4 2-5 1 1 1 1 2 4-1 6-2 2-1 1-2 2-2 0 6 1 1 13 0 1-1 0-4-1-1-2-1 0 3-2 1-5 0-1-2 0-5-3 0 0-3 1-2 0-4zM3 -21l2 0 2-1 3 0-2 2-1 2-1 1 0 1-2 2-2 1 1 2 0 2 1 0 1-1 2 0 2-1 4-1 5-2 0-3-8 2 1-3 2-2 1-2 2-3 1-2 2-3-4-2-3 6-5 0 2-2 1-2 1-3 1-2 2-3 1-2-5-2-2 6-1 2-1 3-1 2-1 1-1 2-1 1 0 2z"/><path id="m80a1" d="M21 -20l0 4 4 0-2 1 2 4 1 1 1 2 3 3-1 1-6 3-2 0-1 1 0-40-15 0 0 26-1 4 0 4-2 8 2 1 1 1 1-2 2-6 0-3 1-3 0-3 6 0 0 12-5 0 1 3 1 2 4 0 2-1 2-3 2 4 2-1 2 0 6-3 2-2 1 2 8 4 3 0 2-4-2 0-4-2-1-1-2 0-2-1 2-2 2-3 1-2 2-3 1-2 1-3-3-1zM9 -36l6 0 0 7-6 0zM9 -24l6 0 0 7-6 0zM26 -40l0 7-1 2 0 1-1 2-2 2-2 1 1 2 2 2 6-6 0-3 1-2 0-4 8 0 0 11 2 2 8 0 0-2-1-2-4 0-1-2 0-11zM40 -16l-3 6-2 1-1 2-5-5-2-4z"/><path id="m4efd" d="M12 -42l-1 4-2 3-1 4-4 6-3 2 2 3 1 2 1-1 1-2 2-1 0 26 4 0 0-34 2-4 1-1 1-2 0-2 1-2zM38 -41l-4 1 1 3 1 4 1 3 1 2 2 3 2 2-21 0 2-2 1-3 2-3 3-9-4-1-1 4-2 3-3 6-5 5 2 2 1 3 1-2 2-2 0 4 6 0-2 8-6 9-3 2 3 3 3-2 3-3 4-8 1-4 1-5 8 0 0 9-1 3 0 3-1 1 0 1-2 1-2 0-3-1 1 3 1 2 5 0 4-2 1-1 0-2 1-3 0-5 1-5 0-8 1 2 2 1 1-2 2-2-3-2-2-3-2-2-1-4-2-3z"/><path id="m6709" d="M19 -42l-1 2 0 2-1 2-14 0 0 5 12 0-4 6-2 2-2 3-3 2-2 2 1 2 2 2 3-3 2-1 1-1 1-2 0 23 5 0 0-10 20 0 0 5-1 1-7 0 1 2 0 2 8 0 3-3 0-27-23 0 0-2 1-2 1-1 27 0 0-5-25 0 1-2 0-1 1-2zM17 -14l20 0 0 4-20 0zM17 -18l0-4 20 0 0 4z"/><path id="m9650" d="M4 -40l0 44 4 0 0-40 7 0-1 2 0 2-1 1-1 2 0 2-1 2 2 2 1 2 0 1 1 2 0 3-1 3-4 0 1 2 0 2 4 0 4-2 0-10-2-4-2-2 4-8 0-2 1-3-3-1zM40 -27l0 5-13 0 0-5zM40 -31l-13 0 0-5 13 0zM22 4l2 0 1-1 2-1 8-2 0-4-8 2 0-16 4 0 1 5 4 8 3 4 3 3 3 2 2-2 1-2-1-1-4-2-1-2-3-3 4-2 1-1 2-1 1-1-3-3-1 1-2 1-2 2-2 1-1-2 0-2-1-3 9 0 0-22-22 0 0 37-1 2-1 1z"/><path id="m516c" d="M16 -41l-2 4-2 3-2 4-2 3-3 3-3 2 3 2 2 1 5-5 3-4 2-4 2-3 2-4zM34 -41l-5 2 2 3 3 4 2 4 3 3 3 4 2 2 4-4-8-8-2-3-2-4zM8 1l3 0 3-1 6 0 7-1 11-1 2 2 2 4 4-3-1-2-10-15-5 2 1 2 1 1 1 2 2 1 1 2-22 1 3-3 4-6 3-4 2-3 2-4-5-2-2 4-3 4-2 4-4 6-5 5-1 0 1 3z"/><path id="m53f8" d="M5 -30l0 4 29 0 0-4zM4 -39l0 4 36 0 0 33-1 1-8 0 1 2 1 3 6 0 2-1 1 0 2-1 1-2 0-39zM12 -17l15 0 0 8-15 0zM8 -21l0 20 4 0 0-4 19 0 0-16z"/><path id="r5fbd" d="M26 -5l2 2 2 4 2-2-1-1-2-4zM16 -6l-2 4-2 2 3 2 2-4 1-1 1-2zM9 -42l-1 2-1 1-2 4-3 3 2 3 1-2 4-4 1-2 2-2 1-2zM15 -39l0 11 16 0 0-11-3 0 0 8-4 0 0-11-3 0 0 11-4 0 0-8zM14 -6l1-1 7 0 0 8-4 0 1 3 2 0 2-1 2-2 0-9 5 0 1 2 3-1-3-6-1-1-2 1 1 2-9 1 1-1 2-1 3-3 2-1 1-2-2-1-3 2-5 0 3-3 2-1-3-1 9 0 0-3-16 0 0 3 6 0-1 2-3 3-2 1 1 3 0-1 6 0-2 1-1 1-2 1-1 1-2 1zM37 -29l6 0-1 3 0 5-1 3 0 2-1 3-1-2 0-3-1-2 0-3-1-2zM37 -42l-2 8-1 3-1 4-1 3-2 3 3 3 2-4 0 2 1 2 0 3 2 4 0 2-3 6-5 5 2 2 2-1 1-2 1-1 2-1 2-4 2 4 1 1 1 2 2 2 3-3-2-1-1-1-2-4-2-2 0-2 1-3 0-3 2-6 0-4 1-4 2 0 0-3-10 0 1-2 0-4 1-2 0-2zM10 -32l-1 3-1 2-2 3-1 2-4 4 2 3 4-4 0 23 3 0 0-28 1-2 1-1 2-4z"/></defs></svg>
<div id="side">
<svg class="abs" style="left:43.5px;top:13.5px" width="16" height="16" viewBox="0 0 16 16"><path d="M0 0h5v1.6H1.6V4H0z M2.4 2.4h5v1.6H4v2.6H2.4z" fill="#fff"/><path d="M15 0.5V15.5H1.5L6 11h4.5V5.5z" fill="#fff"/><rect x="5" y="5" width="4.5" height="4.5" fill="#fff"/></svg>
<div class="abs" style="left:60.5px;top:10.2px;color:#fff;font-weight:bold;font-style:italic;font-size:21px;line-height:22px;letter-spacing:-0.5px;-webkit-text-stroke:0.5px #fff">Acrel</div>
<div class="abs" style="left:0;top:84px;width:158px;height:27px;background:#0466aa"></div>
<div class="sep" style="top:78px"></div><div class="sep" style="top:142px"></div><div class="sep" style="top:177px"></div><div class="sep" style="top:209px"></div><div class="sep" style="top:241px"></div><div class="sep" style="top:273px"></div><div class="sep" style="top:306px"></div><div class="sep" style="top:338px"></div>
<svg class="abs" style="left:16px;top:60px" width="12" height="12" viewBox="0 0 12 12"><rect x="0.5" y="0.5" width="11" height="8.5" fill="none" stroke="#9eafc0" stroke-width="1"/><rect x="2.5" y="2.5" width="7" height="4.5" fill="none" stroke="#9eafc0" stroke-width="0.8"/><line x1="6" y1="2.5" x2="6" y2="7" stroke="#9eafc0" stroke-width="0.8"/></svg>
<svg class="abs" style="left:16px;top:92px" width="12" height="12" viewBox="0 0 12 12"><rect x="0.5" y="0.5" width="11" height="9" rx="1" fill="none" stroke="#e8eef4" stroke-width="1"/><polyline points="2,6 4,6 5,3 6.5,7.5 7.5,4.5 8.5,6 10,6" fill="none" stroke="#e8eef4" stroke-width="0.9"/><line x1="1" y1="11.3" x2="11" y2="11.3" stroke="#e8eef4" stroke-width="1"/></svg>
<svg class="abs" style="left:16px;top:123px" width="12" height="12" viewBox="0 0 12 12"><circle cx="6" cy="6" r="5.6" fill="none" stroke="#9eafc0" stroke-width="1"/><path d="M3.5 3.8l5 4.4M8.5 3.8l-5 4.4" stroke="#9eafc0" stroke-width="1"/></svg>
<svg class="abs" style="left:16px;top:155px" width="12" height="12" viewBox="0 0 12 12"><path d="M2.2 3 A5 5 0 0 1 6 1 M10 3.5 A5 5 0 0 1 9.5 9.5 M7 11 A5 5 0 0 1 1.5 8" fill="none" stroke="#9eafc0" stroke-width="1"/><ellipse cx="6" cy="6" rx="1.8" ry="2.6" fill="#9eafc0"/></svg>
<svg class="abs" style="left:139px;top:158px" width="8" height="6" viewBox="0 0 8 6"><polyline points="1,1.5 4,4.5 7,1.5" fill="none" stroke="#9fb0c2" stroke-width="1"/></svg>
<svg class="abs" style="left:16px;top:187px" width="12" height="12" viewBox="0 0 12 12"><circle cx="6" cy="6" r="5.6" fill="none" stroke="#9eafc0" stroke-width="1"/><path d="M3.5 4l4.5 4M8 4l-4.5 4" stroke="#9eafc0" stroke-width="1"/></svg>
<svg class="abs" style="left:139px;top:190px" width="8" height="6" viewBox="0 0 8 6"><polyline points="1,1.5 4,4.5 7,1.5" fill="none" stroke="#9fb0c2" stroke-width="1"/></svg>
<svg class="abs" style="left:16px;top:219px" width="12" height="12" viewBox="0 0 12 12"><path d="M0.5 11.5h11M1.5 10.5V6M4.5 10.5V2M7.5 10.5V4.5M10.5 10.5V7" fill="none" stroke="#9eafc0" stroke-width="1"/><path d="M3 10.5V5M6 10.5V3.5M9 10.5V6" fill="none" stroke="#9eafc0" stroke-width="0.6"/></svg>
<svg class="abs" style="left:139px;top:222px" width="8" height="6" viewBox="0 0 8 6"><polyline points="1,1.5 4,4.5 7,1.5" fill="none" stroke="#9fb0c2" stroke-width="1"/></svg>
<svg class="abs" style="left:16px;top:251px" width="12" height="12" viewBox="0 0 12 12"><rect x="0.5" y="0.5" width="5" height="10" fill="none" stroke="#9eafc0"/><rect x="5.5" y="0.5" width="5" height="10" fill="none" stroke="#9eafc0"/><path d="M1.5 3h3M1.5 5h3M1.5 7h3M6.5 3h3M6.5 5h3M6.5 7h3" stroke="#9eafc0" stroke-width="0.8"/></svg>
<svg class="abs" style="left:139px;top:254px" width="8" height="6" viewBox="0 0 8 6"><polyline points="1,1.5 4,4.5 7,1.5" fill="none" stroke="#9fb0c2" stroke-width="1"/></svg>
<svg class="abs" style="left:16px;top:284px" width="12" height="12" viewBox="0 0 12 12"><path d="M5.5 0.5L11 10H0z" fill="#dfe6ee"/><path d="M5.5 3.5v3.5M5.5 8v1" stroke="#03345b" stroke-width="1"/></svg>
<svg class="abs" style="left:139px;top:287px" width="8" height="6" viewBox="0 0 8 6"><polyline points="1,1.5 4,4.5 7,1.5" fill="none" stroke="#9fb0c2" stroke-width="1"/></svg>
<svg class="abs" style="left:16px;top:316px" width="12" height="12" viewBox="0 0 12 12"><path d="M2 1h6v8H2z M1 3h1 M1 5h1 M1 7h1" fill="none" stroke="#9eafc0" stroke-width="0.9"/><path d="M0.5 10.5h9" stroke="#9eafc0"/></svg>
<svg class="abs" style="left:139px;top:319px" width="8" height="6" viewBox="0 0 8 6"><polyline points="1,1.5 4,4.5 7,1.5" fill="none" stroke="#9fb0c2" stroke-width="1"/></svg>
</div>
<div id="hdr">
<svg class="abs" style="left:17px;top:15px" width="12" height="11" viewBox="0 0 12 11"><path d="M0 0.7h12M4 3.8h8M4 7h8M0 10.2h12" stroke="#c4ccd6" stroke-width="1.3"/><path d="M0 5.4L2.6 3.6V7.2z" fill="#c4ccd6"/></svg>
<div class="abs" style="left:16px;top:45px;width:39px;height:21px;background:#1f2c41;border-radius:4px 4px 0 0"></div>
<div class="abs" style="left:55px;top:45px;width:67px;height:21px;background:#34465d;border-radius:4px 4px 0 0"></div>
<svg class="abs" style="left:107px;top:52px" width="7" height="7" viewBox="0 0 7 7"><path d="M1 1l5 5M6 1l-5 5" stroke="#8f9aa8" stroke-width="0.8"/></svg>
<div class="abs" style="left:0;top:65px;width:1109px;height:1px;background:#1e2b40"></div>
<svg class="abs" style="left:842px;top:15px" width="13" height="11" viewBox="0 0 13 11"><path d="M0.5 3.5h2.5L6.5 0.8v9.4L3 7.5H0.5z" fill="none" stroke="#b8c0ca" stroke-width="0.9"/><path d="M8.3 3.6l3.6 3.6M11.9 3.6l-3.6 3.6" stroke="#b8c0ca" stroke-width="0.9"/></svg>
<svg class="abs" style="left:868px;top:15px" width="10" height="11" viewBox="0 0 10 11"><path d="M5 0.8C2.8 0.8 2 2.6 2 4.5V7.5L0.8 8.8H9.2L8 7.5V4.5C8 2.6 7.2 0.8 5 0.8z" fill="none" stroke="#b8c0ca" stroke-width="0.9"/><path d="M3.8 9.8h2.4" stroke="#b8c0ca" stroke-width="0.9"/></svg>
<div class="abs" style="left:874px;top:9px;width:24px;height:13px;border-radius:7px;background:#4a2232;opacity:0.85"></div>
<svg class="abs" style="left:894px;top:16px" width="10" height="10" viewBox="0 0 10 10"><rect x="0.5" y="0.5" width="3.5" height="3.5" fill="none" stroke="#d0d6de" stroke-width="0.9"/><rect x="6" y="0.5" width="3.5" height="3.5" fill="none" stroke="#d0d6de" stroke-width="0.9"/><rect x="0.5" y="6" width="3.5" height="3.5" fill="none" stroke="#d0d6de" stroke-width="0.9"/><path d="M6 6h1.2v1.2H6zM8.3 6h1.2v1.2H8.3zM6 8.3h1.2v1.2H6zM8.3 8.3h1.2v1.2H8.3z" fill="#d0d6de"/></svg>
<svg class="abs" style="left:953px;top:17px" width="11" height="11" viewBox="0 0 11 11"><circle cx="5.5" cy="5.5" r="4.8" fill="none" stroke="#c4ccd6" stroke-width="0.9"/><path d="M4 4.3C4 3.4 4.7 2.9 5.5 2.9S7 3.4 7 4.3C7 5.2 5.6 5.4 5.6 6.5" fill="none" stroke="#c4ccd6" stroke-width="0.9"/><circle cx="5.6" cy="8" r="0.6" fill="#c4ccd6"/></svg>
</div>
<div class="abs" style="left:1264px;top:0;width:3px;height:42px;background:#ffffff"></div>
<div class="abs" style="left:1264px;top:51px;width:3px;height:47px;background:#f2c64a"></div>
<div id="map">
<svg width="782" height="593" viewBox="158 66 782 593" style="position:absolute;left:0;top:0">
<defs><linearGradient id="pg" x1="0" y1="0" x2="0" y2="1"><stop offset="0" stop-color="#3c3ae8"/><stop offset="0.5" stop-color="#2f70e6"/><stop offset="0.52" stop-color="#33a2ec"/><stop offset="1" stop-color="#1fd2f0"/></linearGradient></defs>
<polygon points="940.0,66.0 848.0,66.0 848.0,70.0 847.3,72.3 845.7,74.1 844.6,76.1 843.6,78.3 842.0,80.0 841.7,82.5 840.3,84.7 839.3,87.0 838.7,89.4 839.0,92.0 836.7,92.5 834.6,93.7 832.4,94.7 830.0,95.0 827.8,93.9 825.5,94.1 823.2,94.6 821.0,94.1 818.8,95.9 816.5,94.5 814.2,94.0 812.0,95.0 810.5,97.1 807.8,97.0 806.2,98.7 803.9,99.4 802.4,101.4 799.8,101.5 798.3,103.5 796.0,104.1 793.7,104.6 791.6,105.7 790.0,107.5 788.1,109.2 787.1,111.9 784.4,112.8 782.7,114.7 781.0,116.6 780.2,118.9 777.9,120.0 776.9,122.1 774.5,123.1 773.5,125.3 772.0,127.0 769.6,127.9 767.5,129.7 764.9,130.1 762.6,131.6 760.0,132.0 758.9,133.9 758.8,136.4 757.6,138.3 755.1,139.6 754.5,141.8 754.0,144.0 752.3,145.4 750.1,146.4 749.0,148.5 746.8,150.1 746.6,152.9 743.9,154.2 742.5,156.3 742.0,159.0 741.6,161.3 739.2,162.5 739.7,165.3 737.7,166.7 734.6,168.1 733.0,171.0 731.8,173.3 731.5,176.0 730.5,178.4 730.0,181.0 728.0,183.0 728.1,185.5 728.3,187.9 729.2,190.2 730.0,192.5 732.3,193.6 734.1,195.4 736.4,196.4 738.7,197.5 740.8,198.8 743.0,200.0 745.0,201.6 746.8,203.2 748.9,204.3 751.2,205.1 753.0,206.6 755.0,207.8 756.9,209.2 759.5,209.4 760.6,212.1 763.2,212.4 765.0,214.0 765.7,216.1 765.9,218.4 767.2,220.2 769.2,221.8 769.7,223.9 769.8,226.3 770.7,228.3 771.9,230.2 772.1,232.6 773.1,234.5 775.9,235.6 776.4,237.8 777.0,240.0 778.3,242.4 778.7,245.1 780.7,247.2 781.0,250.0 782.0,252.3 781.4,255.0 783.4,257.0 783.7,259.4 783.4,262.1 784.7,264.3 785.5,266.6 785.8,268.9 787.3,271.0 785.8,273.7 788.3,275.5 787.8,278.0 790.2,278.6 791.2,281.4 793.5,282.1 795.9,282.7 798.0,283.8 799.0,286.5 801.4,287.1 802.0,289.4 803.0,291.6 803.7,293.9 805.4,295.5 807.2,297.0 808.7,298.9 811.0,299.8 813.3,300.7 813.8,303.7 816.7,304.0 818.4,305.5 819.7,307.6 820.1,309.9 820.7,312.1 821.3,314.3 820.5,316.8 820.8,319.0 821.9,321.2 819.5,322.0 817.4,323.6 815.5,325.5 812.8,325.8 812.5,328.5 811.0,330.6 808.7,332.3 808.3,334.9 811.1,335.5 812.7,338.1 815.1,339.4 817.6,340.6 819.4,342.4 820.4,345.0 822.1,346.9 824.2,348.5 821.8,349.8 820.8,352.3 819.6,354.6 817.4,356.0 815.1,357.1 812.5,357.5 810.5,359.3 808.3,360.5 806.1,361.3 803.9,362.1 801.3,361.1 799.0,361.5 796.9,362.8 794.3,363.0 792.5,365.1 789.7,364.7 787.9,366.6 785.5,367.3 783.5,368.7 782.5,371.1 779.8,371.8 778.7,374.1 780.6,375.3 781.4,377.8 783.8,378.3 785.5,379.8 787.6,378.6 789.9,377.7 792.0,376.6 794.5,376.3 796.9,376.1 799.2,375.3 801.8,375.6 803.8,377.0 806.1,377.9 808.3,379.0 810.7,379.7 812.8,381.0 814.9,382.3 817.6,381.9 819.7,383.1 821.7,384.7 824.0,385.3 826.5,385.5 828.5,387.2 831.1,388.1 833.8,388.7 835.4,391.2 837.8,392.3 837.1,394.5 837.4,397.0 836.0,399.0 835.1,401.2 835.6,403.7 833.5,405.2 830.8,405.5 828.9,407.5 826.5,408.3 824.2,409.0 821.9,409.3 819.7,408.7 817.4,407.5 815.1,408.3 813.0,410.0 811.0,411.9 808.3,412.8 810.1,414.4 811.1,416.8 813.0,418.3 815.1,419.6 815.0,422.3 816.2,424.4 818.6,426.1 818.1,429.0 819.6,431.0 819.2,433.3 819.7,435.7 817.4,437.7 817.9,440.1 817.4,442.4 816.8,444.8 815.1,446.8 814.3,449.1 813.8,451.6 812.8,453.8 811.1,455.3 809.6,456.9 808.1,458.5 805.4,458.7 805.0,461.7 802.2,461.8 800.6,463.4 799.2,465.1 797.7,467.0 795.5,468.3 795.0,471.2 792.7,472.4 791.4,474.5 790.0,476.5 788.7,478.4 787.1,480.2 785.6,482.0 784.7,484.1 783.5,486.1 782.7,488.3 781.0,490.0 779.1,491.8 777.3,493.7 775.7,495.7 774.1,497.8 772.8,500.0 772.2,502.5 769.8,503.8 767.9,505.4 768.2,508.6 766.0,510.0 764.8,511.9 763.5,513.7 761.8,515.3 760.1,516.8 758.7,518.6 758.0,520.9 755.6,521.6 755.0,524.5 752.6,525.1 751.5,527.4 749.3,528.3 747.5,529.8 747.4,532.3 745.6,534.1 746.2,536.8 743.7,538.5 743.4,540.9 743.0,543.2 743.6,545.5 742.1,547.6 742.0,549.8 743.2,552.2 743.1,554.4 742.0,556.6 742.0,558.8 741.8,561.1 741.2,563.3 740.7,565.5 740.0,567.7 740.0,570.0 737.9,571.9 735.8,573.7 734.1,576.0 731.4,576.8 729.0,578.1 727.3,580.3 725.2,582.0 723.9,584.0 721.6,585.2 721.2,588.1 718.8,589.1 717.2,590.9 716.1,593.0 714.1,594.5 711.8,595.6 710.5,597.6 709.0,599.5 707.9,601.7 705.0,602.1 704.7,605.2 701.9,605.7 700.7,607.9 698.5,608.7 696.7,610.0 695.7,612.5 693.2,612.7 690.9,613.3 689.3,614.9 687.6,616.4 686.0,618.0 683.8,619.1 681.7,620.3 680.9,623.1 678.6,624.2 676.2,625.0 675.6,628.0 672.6,628.2 672.0,631.2 669.5,632.0 668.7,634.3 666.0,634.9 665.0,637.0 663.2,638.4 662.3,640.6 660.9,642.3 658.3,642.9 656.6,644.4 654.8,645.8 653.9,648.0 652.7,649.9 650.0,650.4 649.1,652.7 647.3,654.0 645.8,655.8 644.0,657.1 642.7,659.0 940.0,659.0" fill="#1b2130"/>
<polygon points="714.0,66.0 716.0,74.0 722.0,76.5 739.0,82.0 749.0,74.0 754.0,66.0" fill="#1b2130"/>
<polygon points="806.0,586.0 824.0,588.0 819.0,612.8 812.7,639.0 809.0,659.0 758.0,659.0 763.0,636.0 776.0,613.0 789.4,593.0" fill="#0d121a"/>
<polygon points="615.0,400.0 618.0,402.0 617.0,410.0 614.0,416.0 620.0,419.0 627.0,418.0 632.0,421.0 630.0,428.0 631.0,437.0 627.0,438.0 624.0,430.0 617.0,428.0 612.0,423.0 611.0,415.0 613.0,408.0 614.0,401.0" fill="#1c2333"/>
<polygon points="496.4,409.0 499.4,410.8 501.2,413.2 504.9,414.4 503.0,420.5 501.2,423.5 499.4,429.0 498.2,432.6 497.5,431.0 500.6,422.3 495.2,422.9 494.6,420.5 497.0,416.2 496.1,410.8" fill="#1c2333"/>
<polygon points="701.0,237.8 708.2,243.2 710.0,252.3 704.6,257.8 697.3,259.6 691.8,261.4 699.1,254.1 704.6,250.5 701.0,245.0 699.1,239.6" fill="#1c2333"/>
<polygon points="726.4,257.8 731.9,263.3 733.7,272.4 729.2,276.0 726.4,266.9" fill="#1c2333"/>
<polygon points="752.0,330.0 760.0,328.0 764.0,334.0 761.0,341.0 754.0,341.0 750.0,336.0" fill="#1c2333"/>
<polygon points="668.0,320.0 676.0,318.0 680.0,322.0 674.0,327.0 667.0,325.0" fill="#1c2333"/>
<polygon points="635.4,171.0 640.0,174.0 644.5,186.0 643.0,194.0 638.0,188.0 636.0,178.0" fill="#1c2333"/>
<polygon points="616.0,128.0 619.4,130.0 619.0,137.0 615.5,135.0" fill="#1c2333"/>
<polygon points="437.0,277.0 444.0,276.0 449.0,270.0 452.0,265.0 455.0,272.0 454.0,279.0 449.0,283.0 443.0,281.0" fill="#1c2333"/>
<circle cx="830.6" cy="350.4" r="1.4" fill="#0d121a"/>
<circle cx="832.8" cy="350.4" r="1.5" fill="#0d121a"/>
<circle cx="819.6" cy="355.7" r="1.5" fill="#0d121a"/>
<circle cx="823.9" cy="359.2" r="0.7" fill="#0d121a"/>
<circle cx="813.6" cy="358.5" r="1.1" fill="#0d121a"/>
<circle cx="814.3" cy="356.6" r="0.8" fill="#0d121a"/>
<circle cx="800.9" cy="366.1" r="1.4" fill="#0d121a"/>
<circle cx="800.0" cy="365.2" r="0.7" fill="#0d121a"/>
<circle cx="791.8" cy="364.3" r="0.6" fill="#0d121a"/>
<circle cx="793.6" cy="365.0" r="0.8" fill="#0d121a"/>
<circle cx="787.6" cy="377.1" r="0.9" fill="#0d121a"/>
<circle cx="787.4" cy="374.4" r="1.3" fill="#0d121a"/>
<circle cx="788.9" cy="383.3" r="1.3" fill="#0d121a"/>
<circle cx="794.3" cy="382.9" r="0.9" fill="#0d121a"/>
<circle cx="803.7" cy="372.6" r="0.7" fill="#0d121a"/>
<circle cx="801.7" cy="373.7" r="1.2" fill="#0d121a"/>
<circle cx="814.8" cy="382.4" r="0.9" fill="#0d121a"/>
<circle cx="817.0" cy="383.5" r="1.1" fill="#0d121a"/>
<circle cx="830.7" cy="385.3" r="1.3" fill="#0d121a"/>
<circle cx="828.9" cy="389.3" r="0.6" fill="#0d121a"/>
<circle cx="845.0" cy="395.1" r="0.6" fill="#0d121a"/>
<circle cx="845.3" cy="391.2" r="1.2" fill="#0d121a"/>
<circle cx="837.7" cy="400.1" r="0.8" fill="#0d121a"/>
<circle cx="844.3" cy="401.3" r="1.4" fill="#0d121a"/>
<circle cx="835.0" cy="411.8" r="0.9" fill="#0d121a"/>
<circle cx="831.0" cy="408.5" r="1.4" fill="#0d121a"/>
<circle cx="817.9" cy="410.3" r="1.4" fill="#0d121a"/>
<circle cx="823.1" cy="404.6" r="1.5" fill="#0d121a"/>
<circle cx="810.9" cy="411.5" r="1.2" fill="#0d121a"/>
<circle cx="816.7" cy="411.5" r="1.5" fill="#0d121a"/>
<circle cx="820.9" cy="418.1" r="0.9" fill="#0d121a"/>
<circle cx="818.3" cy="416.2" r="0.7" fill="#0d121a"/>
<circle cx="826.4" cy="435.0" r="0.8" fill="#0d121a"/>
<circle cx="821.9" cy="434.9" r="1.1" fill="#0d121a"/>
<circle cx="822.2" cy="440.3" r="1.2" fill="#0d121a"/>
<circle cx="825.2" cy="442.0" r="1.0" fill="#0d121a"/>
<circle cx="815.2" cy="457.1" r="0.6" fill="#0d121a"/>
<circle cx="818.3" cy="456.5" r="0.7" fill="#0d121a"/>
<circle cx="806.3" cy="468.7" r="1.2" fill="#0d121a"/>
<circle cx="806.7" cy="462.0" r="1.0" fill="#0d121a"/>
<circle cx="793.0" cy="479.3" r="0.9" fill="#0d121a"/>
<circle cx="795.2" cy="480.5" r="1.5" fill="#0d121a"/>
<circle cx="789.8" cy="489.6" r="1.1" fill="#0d121a"/>
<circle cx="788.1" cy="489.8" r="0.9" fill="#0d121a"/>
<circle cx="777.6" cy="497.2" r="1.0" fill="#0d121a"/>
<circle cx="781.7" cy="503.7" r="1.2" fill="#0d121a"/>
<circle cx="771.5" cy="508.7" r="0.7" fill="#0d121a"/>
<circle cx="769.9" cy="512.3" r="1.5" fill="#0d121a"/>
<circle cx="762.5" cy="523.2" r="1.4" fill="#0d121a"/>
<circle cx="764.9" cy="522.2" r="1.4" fill="#0d121a"/>
<circle cx="752.0" cy="531.4" r="0.9" fill="#0d121a"/>
<circle cx="752.9" cy="532.0" r="1.3" fill="#0d121a"/>
<circle cx="747.1" cy="546.8" r="1.2" fill="#0d121a"/>
<circle cx="749.1" cy="539.3" r="1.1" fill="#0d121a"/>
<circle cx="745.8" cy="560.2" r="1.1" fill="#0d121a"/>
<circle cx="749.7" cy="560.0" r="1.4" fill="#0d121a"/>
<circle cx="744.4" cy="571.2" r="1.3" fill="#0d121a"/>
<circle cx="747.8" cy="568.8" r="1.4" fill="#0d121a"/>
<circle cx="742.2" cy="577.5" r="1.6" fill="#0d121a"/>
<circle cx="742.8" cy="576.1" r="1.1" fill="#0d121a"/>
<circle cx="728.4" cy="584.7" r="1.5" fill="#0d121a"/>
<circle cx="730.5" cy="583.5" r="1.3" fill="#0d121a"/>
<circle cx="721.2" cy="591.9" r="1.4" fill="#0d121a"/>
<circle cx="720.2" cy="595.8" r="1.0" fill="#0d121a"/>
<circle cx="879" cy="559.6" r="2.5" fill="#0d121a"/>
<circle cx="889" cy="614" r="2" fill="#0d121a"/>
<circle cx="905.7" cy="609" r="2" fill="#0d121a"/>
<polyline points="237.6,64.3 233.5,66.1 229.1,67.2 224.7,68.3 220.5,69.8 216.2,71.2 212.1,72.9 207.6,73.9 203.5,75.7 199.7,77.2 196.0,79.2 192.0,80.2 191.6,84.8 191.0,89.3 194.5,91.7 196.9,95.4 200.0,98.2 203.5,100.7 205.8,107.5 202.5,109.9 199.0,112.2 195.3,114.1 192.0,116.6 188.5,120.6 184.8,124.5 180.8,128.0 176.1,127.6 171.6,126.6 167.0,125.7 162.5,124.4 158.0,123.4" fill="none" stroke="#252d42" stroke-width="1.3"/>
<polyline points="692.2,68.8 688.1,70.1 684.2,71.9 679.8,72.4 675.7,73.8 671.8,75.7 667.8,78.6 663.7,81.2 660.0,84.5 655.8,87.0 653.2,90.6 650.3,94.0 647.1,97.1 644.5,100.7 641.5,104.1 637.7,106.7 635.3,110.6 632.0,113.7 628.5,116.6 625.4,119.8 621.5,122.1 618.4,125.3 614.9,128.0 610.9,130.3 607.1,132.7 602.9,134.6 599.0,137.0 596.1,140.9 593.2,144.9 589.9,148.5 586.5,151.4 583.2,154.3 579.9,157.3 576.2,159.8 573.6,163.4 571.5,167.3 569.4,171.2 566.9,175.7 564.8,180.3 558.0,180.3" fill="none" stroke="#252d42" stroke-width="1.3"/>
<polyline points="358.0,275.7 362.4,273.1 367.1,271.2 371.7,269.8 376.1,267.8 380.8,266.6 385.3,261.0 380.9,257.3 376.2,254.1" fill="none" stroke="#252d42" stroke-width="1.3"/>
<polyline points="358.0,350.8 362.6,351.0 367.1,350.0 371.7,349.9 376.2,349.5 380.7,348.5 385.3,348.5 389.7,346.9 394.4,346.4 398.8,344.7 403.5,344.0 408.1,344.3 412.6,345.3 417.1,345.8 421.8,345.3 426.3,346.2 430.3,347.7 434.0,349.7 437.5,352.3 441.7,353.3 445.4,355.4 449.0,357.6 453.3,358.0 457.5,358.9 461.6,360.3 465.9,360.7 470.0,362.0 474.1,364.5 477.8,367.4 481.9,370.0 486.1,372.3 490.0,375.0 493.1,377.8 496.6,380.1 499.8,382.8 503.5,384.8 506.8,387.4 510.0,390.0 515.0,388.4 520.2,387.2 525.0,385.0 528.0,382.2 530.7,379.3 533.4,376.2 536.2,373.4 539.0,370.5 542.6,368.3 545.0,365.0 549.1,364.5 553.1,363.5 557.0,362.0 561.1,361.2 565.0,360.0 567.8,363.2 570.3,366.7 573.2,369.8 575.6,373.4 578.4,376.7 580.8,380.2 584.9,382.5 588.1,385.9 592.4,387.8 595.7,391.1 599.6,393.6 603.5,396.1 607.6,394.0 612.0,392.9 616.4,391.8 620.6,390.2 624.7,388.1 629.0,386.7 633.1,384.8 636.1,382.1 638.6,378.9 641.7,376.3 644.5,373.4 649.1,370.1 653.6,366.6 657.2,363.6 661.2,361.1 664.6,357.8 668.5,355.2 672.0,352.0 674.6,348.8 678.0,346.3 680.6,343.1 684.1,340.8 687.3,338.2 690.0,335.0 693.0,332.0 696.1,329.1 699.1,326.1 701.8,322.8 705.0,320.0 708.9,318.3 713.0,316.9 717.1,315.4 720.9,313.5 725.0,312.0 729.0,313.2 733.1,314.2 737.0,315.7 740.9,317.0 745.0,318.0 748.5,316.0 752.2,314.5 755.9,312.8 759.3,310.6 763.1,309.2 766.3,306.7 770.0,305.0 774.4,304.8 778.5,303.2 782.8,302.7 787.2,302.5 791.3,300.9 795.7,300.8 800.0,300.0 803.2,303.3 806.7,306.4 810.4,309.2 814.1,311.9 817.6,314.8 821.0,318.0" fill="none" stroke="#252d42" stroke-width="1.3"/>
<polyline points="267.2,512.0 270.0,508.3 272.1,504.3 274.3,500.3 276.3,496.2 280.9,496.3 285.4,496.9 290.0,497.8 294.5,498.4 299.1,498.5 302.4,495.3 306.1,492.7 310.3,490.7 313.4,487.3 317.3,484.9 320.8,482.8 324.0,480.2 327.7,478.2 331.0,475.8 333.6,472.6 335.6,469.0 337.6,465.5 340.0,462.1" fill="none" stroke="#252d42" stroke-width="1.3"/>
<polyline points="740.0,217.0 736.3,218.9 733.1,221.8 729.3,223.6 725.7,225.7 722.6,228.7 718.8,230.5 715.6,233.3 712.2,235.7 708.6,237.9 705.0,240.0 702.3,243.5 700.3,247.6 697.3,250.9 695.1,254.8 692.8,258.6 690.0,262.0" fill="none" stroke="#252d42" stroke-width="1.3"/>
<polyline points="200.4,603.4 204.3,601.0 208.1,598.6 211.2,595.1 215.6,593.4 219.2,590.7 222.7,587.8 226.0,590.4 228.4,594.0 231.6,596.7 235.5,598.0 239.7,598.1 243.5,600.0 247.6,600.1 251.6,601.2 255.3,597.4 259.2,593.9 262.8,590.0 266.8,588.5 270.7,586.9 274.4,584.7 278.4,583.3 282.1,581.1 285.6,578.5 289.5,576.7" fill="none" stroke="#252d42" stroke-width="1.3"/>
<polyline points="612.0,136.0 614.7,139.3 616.9,143.1 619.0,146.8 622.0,150.0 624.3,154.1 627.0,158.0 629.7,161.9 632.0,166.0 635.0,169.8 636.8,174.3 640.0,178.0 641.7,181.7 644.3,184.9 645.9,188.6 648.0,192.0 650.5,196.1 652.9,200.3 656.0,204.0" fill="none" stroke="#252d42" stroke-width="1.3"/>
<polyline points="203.5,75.7 205.4,77.6 207.8,78.5 210.4,78.9 212.6,80.2 214.6,82.1 215.6,84.7 217.2,87.0 219.2,88.2 220.4,90.3 223.0,90.7 224.5,92.5 226.3,93.9 225.7,96.5 224.5,99.0 225.1,101.8 225.9,104.4 227.3,106.7 227.0,109.7 228.5,112.0 229.0,114.4 230.6,116.4 229.8,119.2 230.4,121.5 231.6,123.7 233.1,125.7 230.7,127.4 230.4,130.5 228.5,132.5 228.5,134.9 228.7,137.3 229.8,139.4 230.8,141.6 233.1,142.5 235.7,142.5 237.7,144.2 239.8,145.5 242.2,146.2 243.2,148.6 244.8,150.4 247.3,151.3 249.0,153.0 250.8,155.0 253.8,154.8 255.4,157.1 258.0,157.6 259.7,159.7 262.4,160.7 262.8,163.9 265.0,165.5 266.7,163.4 269.3,162.3 270.6,159.8 270.8,157.5 268.9,155.4 269.9,153.0 270.6,150.7 269.5,148.5 271.5,146.8 273.8,145.8 276.7,145.9 278.1,143.2 280.8,142.9 283.0,141.6 282.8,139.2 285.0,137.3 284.9,134.9 284.5,132.5 284.0,130.1 285.4,128.0 283.4,126.6 282.0,124.6 281.1,122.1 278.6,121.2 276.1,121.6 274.1,119.9 271.9,119.0 269.5,118.9 269.2,116.6 269.4,114.2 268.2,112.0 268.8,109.6 267.2,107.5 268.6,105.3 269.7,103.1 270.5,100.6 271.9,98.5 272.6,96.0 274.0,93.9 274.2,91.6 273.5,89.3 273.2,87.1 273.2,84.8 274.0,82.5 276.3,82.7 278.6,82.7 280.8,82.1 283.1,81.0 285.4,82.5 287.7,82.7 290.0,82.7 292.3,82.4 294.6,82.4 296.8,81.3 298.1,78.9 297.3,76.4 297.1,73.9 298.1,71.5 297.2,68.9 298.0,66.5" fill="none" stroke="#30363f" stroke-width="0.8"/>
<polyline points="298.0,82.5 299.2,84.7 297.6,87.1 298.1,89.4 299.0,91.6 301.5,91.9 303.6,93.3 305.9,94.0 308.0,95.4 310.2,96.5 313.1,95.7 315.4,96.4 317.3,98.4 318.9,100.4 321.4,100.8 323.0,102.8 326.0,102.4 327.5,104.6 329.1,106.5 331.8,106.7 332.9,109.5 335.5,109.8 337.4,111.6 340.5,110.5 342.7,111.4 344.5,113.5 346.8,114.3 345.9,116.7 347.5,118.8 348.1,121.1 347.8,123.4 349.0,125.6 348.0,128.0 348.3,130.4 347.3,132.6 346.7,134.8 347.0,137.2 346.5,139.5 346.1,141.8 345.1,143.9 344.6,146.2 345.3,148.4 346.1,150.6 344.2,153.0 345.1,155.2 345.0,157.5 346.3,159.7 345.7,162.0 342.9,161.4 340.4,162.3 338.3,164.7 335.5,164.4 333.2,164.8 330.9,163.8 328.7,163.9 326.4,163.3 324.1,164.6 321.8,163.6 319.6,164.0 317.3,164.9 315.0,164.4 315.2,166.7 315.0,169.1 315.5,171.4 316.8,173.5 317.3,175.8 315.0,176.1 313.0,177.9 310.6,177.9 308.0,177.1 306.0,178.5 303.8,179.6 301.3,179.2 299.0,179.3 296.8,180.3 295.1,178.8 292.8,178.3 291.0,177.0 289.2,175.7 287.7,174.0 285.4,173.5 283.1,173.4 280.9,173.8 278.6,173.5 276.3,174.7 274.1,174.6 271.8,173.5 270.9,175.7 269.8,177.8 270.4,180.2 270.5,182.5 270.7,184.9 269.5,187.0 268.1,188.7 265.7,189.7 264.7,191.8 263.8,194.0 265.3,195.9 266.3,198.2 269.1,199.0 270.2,201.2 271.8,203.0 270.4,205.1 271.0,207.5 271.0,209.8 270.6,212.0 271.4,214.2 270.9,216.6 270.1,218.9 272.6,221.0 270.9,223.5 271.8,225.7 269.9,227.6 268.6,229.8 267.8,232.3 267.2,234.8" fill="none" stroke="#30363f" stroke-width="0.8"/>
<polyline points="419.4,66.5 418.0,68.7 417.7,71.0 419.7,73.5 418.3,75.7 417.8,78.2 414.9,79.0 413.8,81.0 412.6,83.0 412.0,85.4 410.3,87.0 410.4,89.3 410.7,91.6 411.1,93.9 412.5,96.0 412.1,98.4 412.5,100.7 412.6,103.0 411.9,105.2 411.1,107.5 411.1,109.8 412.0,112.1 412.2,114.4 412.5,116.6 413.0,118.9 412.9,121.2 411.7,123.4 411.5,125.7 412.4,127.9 412.7,130.2 411.9,132.7 413.2,134.8 413.6,137.1 414.8,139.3 415.8,141.4 415.5,143.9 416.4,146.0 416.0,148.5 415.3,150.6 413.4,152.3 413.5,154.7 414.0,157.1 411.6,158.7 411.1,160.9 410.6,163.0 409.5,165.0 409.1,167.2 408.4,169.3 408.7,171.7 406.6,173.3 407.0,175.8 405.5,177.9 407.2,180.5 405.3,182.5 405.1,184.8 405.4,187.2 404.9,189.4 404.6,191.7 407.2,192.3 409.5,193.9 412.3,193.4 414.9,194.0 417.5,193.8 419.3,191.7 422.1,191.9 424.4,190.9 426.2,188.9 428.6,188.2 430.8,187.0 433.3,187.5 435.5,186.6 437.6,185.5 439.8,184.4 442.1,184.1 444.6,184.6 446.6,182.8 449.2,184.1 451.3,182.6 452.8,180.6 455.7,180.4 456.7,177.7 459.6,177.4 461.1,175.4 462.7,173.5 465.0,174.1 467.2,174.7 469.4,175.6 471.8,175.8 473.5,177.3 475.7,178.1 477.7,179.3 479.1,181.3 480.9,182.6 483.2,183.7 485.4,182.9 487.7,181.5 489.9,183.4 492.2,183.2 494.5,183.6 496.7,181.8 499.0,182.6 501.5,182.5 503.2,180.1 506.0,180.8 508.0,179.2 510.2,178.4 513.0,179.2 514.7,176.7 517.3,176.9 519.6,177.4 521.7,178.6 524.2,177.5 526.5,177.9 528.5,180.0 531.0,179.3 533.1,180.4 535.5,180.3 537.6,178.9 540.0,179.5 542.2,178.8 544.5,179.8 546.6,178.1 549.1,180.1 551.1,177.5 553.6,179.0 555.6,177.0 558.0,178.0 560.2,177.3 562.6,178.5 564.8,176.8 567.1,176.7 569.4,177.9 571.7,177.0 573.9,176.0 576.3,178.2 578.5,176.9 580.9,177.3 583.0,178.2 584.5,180.0 586.1,181.7 587.9,183.1 590.6,182.9 592.1,184.9 594.3,185.5 596.7,185.9 598.2,187.8 599.9,189.5 601.9,190.5 603.8,191.9 606.0,192.5 607.9,193.8 610.3,194.0 612.4,193.0 613.8,191.2 615.2,189.3 617.7,188.8 618.9,186.7 620.4,184.9 622.7,184.2 625.1,183.6 626.3,181.5 628.5,180.4 630.9,181.4 633.1,180.7 635.4,180.9 637.6,179.8 640.0,181.6 642.2,180.3 644.1,181.6 644.8,183.9 646.6,185.3 648.8,186.4 649.2,189.0 651.4,190.0 653.0,191.6 653.6,194.0 656.1,193.3 658.3,194.0 660.6,194.3 662.7,196.1 665.0,196.2 667.3,195.6 669.9,196.1 672.1,195.3 674.4,194.8 676.2,192.3 678.6,192.2 680.9,191.7 683.4,192.3 685.3,194.2 687.6,195.4 689.6,196.9 692.0,197.8 694.5,198.5 695.6,196.3 697.4,194.8 699.1,193.2 699.7,190.6 701.2,188.9 703.5,187.8 704.4,185.5 707.1,184.7 708.2,182.6 709.8,180.8 711.5,179.2 713.6,178.0 715.6,176.8 717.5,175.5 719.9,174.8 721.8,173.5 724.7,174.6 727.5,175.8" fill="none" stroke="#30363f" stroke-width="0.8"/>
<polyline points="469.5,175.8 468.8,173.5 469.6,171.2 469.2,169.0 469.8,166.7 469.5,164.4 471.7,165.0 474.2,163.8 476.5,164.0 478.5,166.3 481.0,165.1 483.2,165.3 485.3,167.4 487.7,166.4 490.0,166.7 492.5,166.8 494.5,165.3 496.9,165.0 498.8,163.2 501.5,163.7 503.9,163.6 505.9,162.0 507.9,160.6 510.2,159.7 512.1,158.1 513.2,155.5 516.2,155.5 518.0,153.7 519.5,151.7 521.8,150.7 521.2,148.2 523.7,146.4 523.3,143.9 524.4,141.8 525.3,139.6 525.4,137.2 526.4,135.1 525.6,132.5 526.4,130.3 527.7,128.2 527.4,125.7 529.2,123.7 529.6,121.4 528.3,118.6 529.8,116.6 527.9,115.1 526.9,113.1 527.4,110.2 525.1,108.9 524.4,106.7 522.5,105.2 521.8,103.0 522.9,101.1 523.8,99.1 524.9,97.1 526.5,95.5 527.6,93.6 528.6,91.6 530.3,89.7 530.6,87.2 531.9,85.1 532.5,82.8 533.6,80.7 533.2,78.0 534.7,76.3 534.7,73.7 537.4,72.7 538.7,70.9 539.7,68.9 540.0,66.5" fill="none" stroke="#30363f" stroke-width="0.8"/>
<polyline points="529.8,116.6 532.4,116.4 535.0,116.5 537.3,117.7 540.0,117.6 542.3,118.9 545.1,119.1 547.0,120.9 548.7,123.2 551.4,123.4" fill="none" stroke="#30363f" stroke-width="0.8"/>
<polyline points="621.7,66.5 619.8,67.7 618.0,69.0 616.2,70.3 614.4,71.5 613.0,73.3 611.1,74.4 610.9,77.6 608.5,78.2 606.1,78.8 604.9,80.8 603.5,82.5 601.4,83.9 601.9,86.9 599.9,88.3 599.1,90.5 597.3,92.1 596.0,93.9 596.0,96.6 594.3,98.3 593.0,100.1 590.4,101.2 589.5,103.3 589.5,106.0 587.6,107.5 587.4,110.0 589.6,111.8 589.0,114.4 590.8,116.4 591.6,118.6 590.1,121.4 592.2,123.3 592.1,125.7 590.0,127.0 587.3,125.7 585.0,126.5 583.0,128.0 580.7,128.5 578.5,126.8 576.2,127.9 573.9,127.6 571.7,128.7 569.4,128.0 570.8,130.2 573.2,130.9 574.8,132.8 577.0,133.9 579.8,133.9 581.7,135.3 584.0,136.2 586.0,137.4 587.6,139.4" fill="none" stroke="#30363f" stroke-width="0.8"/>
<polyline points="158.0,229.0 160.1,230.3 162.4,230.9 164.8,230.7 167.1,231.3 169.5,231.2 171.9,230.9 173.8,233.0 176.2,233.0 178.4,234.1 180.8,233.6 182.9,235.0 185.3,234.8 186.9,236.8 186.9,239.7 188.2,241.9 190.0,243.8 190.9,246.2 192.1,248.4 191.5,250.6 192.6,253.0 191.6,255.2 190.8,257.5 192.0,259.8 190.5,262.0 190.7,264.3 191.0,266.6 192.3,268.6 194.8,268.9 197.0,269.7 197.7,272.4 199.5,273.7 201.8,274.3 203.5,275.7 206.0,275.2 208.2,275.9 210.2,277.5 212.7,277.1 214.6,279.2 217.1,278.8 219.4,279.1 221.0,277.3 223.5,277.2 225.1,275.4 227.8,275.5 229.7,274.3 231.2,272.4 233.1,271.2 235.5,270.5 237.8,269.7 240.2,268.9 242.7,268.3 244.0,265.2 246.6,265.0 249.0,264.3 250.0,262.1 250.1,259.6 251.5,257.6 251.1,254.9 253.7,253.3 253.6,250.7 252.5,248.8 250.5,247.4 250.5,244.8 248.6,243.3 247.2,241.6 246.7,239.3 249.0,238.7 251.0,237.3 253.3,236.9 255.8,237.0 258.2,237.6 260.4,236.9 262.5,234.8 265.0,236.4 267.1,234.2 269.5,234.7 271.8,234.8" fill="none" stroke="#30363f" stroke-width="0.8"/>
<polyline points="249.0,264.3 250.7,265.9 252.4,267.4 252.8,270.0 255.3,270.9 255.8,273.4 258.1,274.1 260.5,274.4 263.0,274.3 264.9,276.0 267.5,275.6 269.6,277.2 271.8,278.0 273.8,276.3 276.1,275.7 278.6,275.8 281.1,276.2 282.9,273.8 285.2,273.4 287.7,273.4 289.0,275.5 289.9,277.9 292.1,279.2 294.0,280.8 294.4,283.6 296.8,284.8 298.8,283.1 301.6,284.5 303.5,282.6 305.9,282.5 308.2,283.3 310.1,284.8 311.5,286.7 312.5,289.2 315.3,289.5 316.4,291.8 318.0,293.4 320.2,294.4 321.8,296.2 324.1,296.3 326.4,295.1 328.6,295.1 330.9,295.5 333.2,296.7 335.4,296.0 337.7,295.7 340.0,296.2 341.9,297.4 344.1,298.1 346.2,298.8 347.7,300.9 349.8,301.7 352.3,301.7 353.9,303.4 356.0,304.3 358.0,305.3 359.9,307.3 362.3,308.1 365.1,308.2 366.6,310.9 369.8,310.1 371.7,312.1 374.0,312.5 376.1,313.9 378.7,313.0 380.8,314.4" fill="none" stroke="#30363f" stroke-width="0.8"/>
<polyline points="340.0,296.2 339.7,298.7 337.1,300.3 338.2,303.4 335.9,305.1 335.5,307.6 337.7,308.8 338.7,310.9 338.6,313.8 341.5,314.4 342.3,316.7 340.7,318.4 339.7,320.5 338.4,322.4 337.0,324.3 336.3,326.6 333.7,327.6 333.9,330.5 332.2,332.2 331.4,334.4 329.5,336.0 327.9,337.6 326.4,339.4 324.0,340.0 322.9,342.4 321.5,344.3 319.5,345.3 316.6,345.2 316.1,348.4 313.5,348.7 312.0,350.5 309.8,351.3 308.2,353.0 308.0,355.4 306.6,357.4 306.5,359.8 305.9,362.0 308.2,362.0 306.7,363.7 305.1,365.3 304.6,367.6 304.4,370.1 303.4,372.1 300.4,372.8 300.2,375.3 299.7,377.6 297.0,378.5 296.6,380.9 295.2,382.6 294.5,384.8 292.1,384.2 290.1,386.1 287.8,386.3 285.3,385.3 283.3,387.5 280.9,387.0 280.6,384.5 278.1,382.9 278.6,380.0 277.7,377.8 276.3,375.7 273.7,375.4 271.5,376.4 269.5,377.9 267.5,379.4 265.2,380.3 262.7,380.2 261.9,377.9 261.0,375.6 259.1,373.8 260.2,370.7 258.4,368.8 258.0,366.4 256.0,364.5 255.8,362.0" fill="none" stroke="#30363f" stroke-width="0.8"/>
<polyline points="251.3,271.2 250.4,273.3 249.6,275.4 249.1,277.7 246.4,278.9 247.3,281.9 245.2,283.3 243.3,284.9 244.1,287.8 242.2,289.4 242.4,291.7 242.5,294.0 244.2,296.1 243.7,298.5 243.1,300.8 244.0,303.0 243.7,305.4 244.5,307.6 246.1,309.3 246.8,311.5 247.9,313.4 247.8,315.9 247.7,318.3 249.3,320.1 249.7,322.3 251.4,324.0 251.4,326.4 253.7,327.9 253.6,330.3 255.3,332.0 255.8,334.5 257.0,336.5 259.0,338.0 261.0,339.5 261.9,341.7 262.7,344.0 262.5,346.5 261.5,348.7 259.4,350.5 260.0,353.3 257.5,354.9 256.6,357.2 257.7,360.1 255.8,362.0" fill="none" stroke="#30363f" stroke-width="0.8"/>
<polyline points="162.5,266.6 162.9,268.8 163.9,270.8 164.2,273.0 165.7,274.9 164.8,277.5 165.4,279.6 166.4,281.6 168.2,283.4 168.0,285.8 169.0,287.7 169.8,289.8 168.8,292.4 169.3,294.6 172.2,296.1 171.7,298.5 171.1,300.9 172.0,303.1 172.9,305.3 173.4,307.5 172.7,309.9 173.5,312.1 173.3,314.5 174.0,316.7 172.9,318.9 173.5,321.5 171.3,323.3 170.1,325.4 169.4,327.7 169.6,330.2 170.3,332.9 169.7,335.2 168.7,337.4 167.1,339.4 166.2,341.8 168.1,343.9 168.1,346.1 167.0,348.5 168.7,350.7 168.4,353.0 168.9,355.2 170.0,357.4 169.0,359.8 169.4,362.0 168.9,364.4 171.0,366.4 171.2,368.7 171.1,371.1 172.5,373.2 171.7,375.6 171.3,378.1 172.1,380.3 172.8,382.5 172.4,384.9 174.5,386.9 174.0,389.3 173.3,391.5 173.2,393.9 172.0,396.1 172.6,398.6 170.5,400.5 171.5,403.2 170.8,405.4 169.4,407.5 169.0,409.9 169.1,412.3 170.7,414.3 171.1,416.6 171.9,418.8 171.7,421.2" fill="none" stroke="#30363f" stroke-width="0.8"/>
<polyline points="267.2,246.0 268.2,248.3 268.9,250.7 269.0,253.3 271.0,255.2 271.8,257.5 274.1,257.3 276.4,257.3 278.5,256.0 280.9,256.6 283.2,256.7 285.5,256.8 287.6,254.9 289.9,255.2 292.1,254.4 294.5,255.2 296.8,255.8 299.1,255.3 301.2,253.5 303.7,255.6 306.0,255.4 308.2,254.4 310.4,254.1 312.6,252.7 314.8,252.2 317.2,253.3 319.5,253.0 322.0,253.7 323.6,255.4 325.3,257.0 327.4,258.1 328.4,260.5 330.3,262.0 331.4,264.2 333.7,265.1 335.5,266.6 336.1,269.0 337.4,271.1 338.0,273.6 339.5,275.6 340.9,277.7 340.2,280.7 342.3,282.5 344.7,283.4 346.9,282.7 349.1,282.1 351.2,280.8 353.4,280.3 355.7,280.1 358.0,280.3" fill="none" stroke="#30363f" stroke-width="0.8"/>
<polyline points="315.0,225.7 317.3,224.7 319.7,224.1 322.0,223.1 323.8,220.9 325.9,219.6 328.6,219.5 331.0,218.8 332.5,217.0 335.1,216.7 336.7,215.1 338.4,213.6 340.0,212.0" fill="none" stroke="#30363f" stroke-width="0.8"/>
<polyline points="404.6,191.7 406.5,193.4 406.9,196.1 408.3,198.2 410.0,200.0 410.5,202.4 413.1,203.6 414.2,205.7 415.6,207.5 416.6,209.6 417.2,212.0 417.1,214.4 419.0,216.4 418.4,218.9 419.7,221.0 419.4,223.4 421.4,224.7 422.8,226.5 423.7,228.9 425.7,230.1 428.4,230.7 429.6,232.8 430.8,234.8 431.7,237.1 429.9,239.4 430.0,241.6 430.0,243.9 430.0,246.2 430.2,248.4 429.7,250.7 430.8,253.0 432.0,255.2 434.7,256.0 435.3,258.7 437.7,259.8 438.9,262.0 441.0,263.3 442.9,264.8 444.5,266.6 446.3,268.3 447.7,270.3 449.4,272.0 451.3,273.6 451.5,276.6 453.6,278.0 455.3,279.7 457.1,281.1 459.5,281.4 461.6,282.1 463.4,283.6 466.1,283.2 467.6,285.4 469.8,285.9 471.8,287.0 474.2,286.4 476.4,286.7 478.6,287.8 480.9,287.3 483.2,288.1 485.4,288.7 487.7,288.4 490.1,288.0 492.2,289.1 494.5,289.4 496.7,288.4 499.0,288.1 501.2,287.6 503.6,287.7 505.7,286.6 508.2,287.7 510.6,288.1 512.7,286.4 515.1,286.9 517.3,286.0 519.3,287.6 522.1,286.0 524.3,286.8 526.2,289.0 528.4,289.7 530.9,289.4 530.2,291.6 531.0,294.1 530.0,296.2 528.5,298.3 528.0,300.6 528.6,303.0 529.4,305.3 531.9,306.1 532.0,308.9 534.4,310.0 535.5,312.0 537.7,312.9 540.2,311.9 542.1,314.4 544.5,313.9 546.7,314.5 549.1,314.4 551.4,313.6 553.7,314.6 555.9,314.4 558.2,314.4 560.4,313.8 562.7,314.6 565.0,314.0 567.2,314.2 569.4,314.6 571.6,314.9 573.5,316.7 576.0,315.9 578.0,316.8 580.0,318.0 582.6,318.3 583.8,320.7 585.9,321.7 587.9,322.9 590.6,323.0 592.1,325.1 594.2,326.1 596.5,326.7 598.6,327.7 600.0,330.0" fill="none" stroke="#30363f" stroke-width="0.8"/>
<polyline points="376.2,254.1 378.5,253.2 380.7,254.8 383.0,254.8 385.3,255.6 387.6,254.1 389.9,254.2 392.1,255.5 394.4,255.4 396.7,254.6 399.0,255.2 401.3,255.3 403.5,254.3 405.9,254.9 408.0,253.0 410.3,252.9 412.8,254.3 414.9,253.0 417.2,252.6 419.4,252.4 421.7,253.8 424.0,253.3 426.3,252.1 428.5,253.1 430.8,253.0" fill="none" stroke="#30363f" stroke-width="0.8"/>
<polyline points="385.3,266.6 387.1,268.6 390.3,267.4 391.9,270.1 394.7,269.7 396.2,272.6 399.4,271.3 401.2,273.4 399.6,275.4 399.3,277.9 399.0,280.3 396.7,279.4 394.4,279.1 392.1,281.0 389.9,280.7 387.6,279.8 385.3,280.8 383.0,280.3 382.6,282.8 381.8,285.1 379.5,286.7 378.5,289.0 378.5,291.6 378.0,294.0 379.6,296.1 378.1,298.5 379.4,300.7 380.3,302.9 380.0,305.3 380.3,307.5 381.4,309.7 380.4,312.1 380.8,314.4 382.4,316.0 383.4,318.1 384.0,320.5 385.9,321.9 387.6,323.5 389.7,324.6 391.0,326.9 392.7,328.4 395.4,328.7 396.7,330.9 399.9,330.3 401.2,332.6 401.8,335.0 401.4,337.3 399.2,339.3 399.5,341.6 399.1,343.9 399.8,346.3 399.0,348.5 399.8,350.7 399.6,353.3 402.2,354.9 402.9,357.2 403.8,359.4 403.5,362.0 404.6,364.0 404.8,366.5 406.5,368.3 407.9,370.2 408.7,372.4 410.4,374.1 409.8,377.0 412.1,378.4 413.4,380.4 414.3,382.5 414.9,384.8" fill="none" stroke="#30363f" stroke-width="0.8"/>
<polyline points="453.6,278.0 454.5,280.2 454.8,282.5 455.5,284.8 456.0,287.1 456.6,289.3 456.6,291.7 458.1,293.8 458.1,296.2 459.9,297.9 462.8,298.1 464.4,300.1 466.3,301.6 468.6,302.6 469.7,305.2 472.3,305.8 474.0,307.6 474.2,309.9 474.6,312.2 477.1,313.6 476.4,316.2 477.4,318.2 478.6,320.1 480.9,321.6 480.7,324.1 481.2,326.3 482.7,328.0 483.1,330.3 484.2,332.4 484.5,334.7 485.1,337.0 484.2,339.5 485.8,341.6 486.0,343.9 486.0,346.3 485.7,348.7 487.7,350.6 487.7,353.0" fill="none" stroke="#30363f" stroke-width="0.8"/>
<polyline points="244.5,371.1 246.7,371.9 248.8,373.4 250.9,374.5 253.7,373.7 255.6,375.6 258.1,375.7 258.7,378.0 259.8,380.1 262.1,381.6 263.4,383.6 263.6,386.1 263.9,388.6 266.0,390.1 266.5,392.5 268.0,394.4 267.9,397.1 268.7,399.3 271.0,400.8 271.8,403.0 269.4,404.1 269.9,407.3 267.1,408.0 265.6,409.7 265.6,412.6 263.2,413.6 262.1,415.7 259.9,416.9 260.0,419.8 258.1,421.2 255.8,422.2 253.1,422.6 251.1,424.3 249.2,426.2 247.2,427.8 244.5,428.0 245.2,425.5 243.7,423.4 244.6,420.9 242.1,419.0 243.4,416.5 242.2,414.3 240.6,412.5 238.7,411.1 235.6,411.9 234.1,410.0 231.7,409.6 230.6,406.9 228.1,406.7 226.3,405.2 228.6,404.2 228.9,401.6 231.1,400.5 232.7,399.0 232.9,396.3 234.9,395.1 237.1,394.0 237.6,391.6 237.2,389.3 236.4,387.1 235.7,384.9 236.5,382.3 235.4,380.2 236.7,377.8 239.2,376.7 241.0,374.8 242.8,373.0 244.5,371.1" fill="none" stroke="#30363f" stroke-width="0.8"/>
<polyline points="158.0,416.6 160.4,416.2 162.5,417.8 164.9,417.3 167.3,417.4 169.4,418.5 171.7,418.9 173.5,420.2 175.4,421.6 177.2,422.9 179.3,423.9 180.8,425.7 183.0,426.6 184.2,428.8 186.5,429.5 187.8,431.5 189.5,433.1 191.2,434.7 192.9,436.2 195.8,436.1 197.6,437.5 199.0,439.4 201.3,440.0 203.5,439.6 205.8,438.7 208.1,439.8 210.3,440.3 212.6,440.2 214.9,438.7 217.2,438.9 219.4,438.2 221.7,439.4 224.3,439.8 226.1,437.4 228.7,437.9 230.8,436.7 233.2,436.2 235.4,435.3 237.9,435.3 240.0,434.1 242.1,432.7 244.5,432.5 245.4,430.2 247.6,429.3 250.0,428.5 250.2,425.6 252.7,424.9 254.2,423.3 254.9,420.9 256.6,419.4 259.0,418.6 260.2,416.6 261.7,415.0 263.4,413.5 265.0,412.0 266.3,409.9 269.0,410.0 270.7,408.5 272.5,407.1 274.1,405.5 276.6,405.2 278.4,404.0 279.9,402.2 281.1,400.0 283.1,398.9 285.4,398.4 287.7,397.5 289.9,397.3 292.2,398.8 294.5,398.5 296.8,397.7 299.1,399.4 301.3,398.7 303.6,398.4 306.0,397.7 308.0,396.5 309.7,394.9 311.5,393.3 314.1,392.9 314.8,389.8 317.3,389.3 319.2,387.8 321.1,386.4 321.8,384.0 324.0,382.8 324.3,379.9 326.3,378.6 327.5,376.6 329.3,375.0 331.0,373.4 332.6,371.8 332.5,369.1 334.0,367.5 336.2,366.2 336.2,363.6 337.7,362.0" fill="none" stroke="#30363f" stroke-width="0.8"/>
<polyline points="189.9,446.2 190.5,448.4 191.3,450.6 192.9,452.3 193.9,454.3 195.2,456.2 194.9,458.9 197.4,460.1 198.8,462.0 199.0,464.4 198.4,466.9 197.2,469.2 195.9,471.4 194.4,473.5 196.5,472.3 198.7,471.3 201.1,471.2 203.4,470.6 205.8,470.6 207.8,469.1 210.0,468.1 212.4,467.8 214.9,468.0 217.1,467.0 219.4,466.7 220.0,469.2 221.0,471.6 223.0,473.4 224.9,475.3 224.6,478.3 226.3,480.3 228.7,480.7 230.8,479.5 233.2,479.8 235.3,478.7 237.8,479.9 240.1,479.4 242.3,479.1 244.6,479.2 246.7,477.1 249.1,477.6 251.4,477.8 253.7,477.7 255.8,476.4 258.0,475.5 260.5,476.4 262.7,475.8 261.3,473.7 262.3,471.1 260.1,469.2 260.7,466.7 260.4,464.4 258.3,463.3 255.8,463.0 254.2,461.0 252.2,459.8 250.0,459.0 248.6,456.7 246.5,455.6 244.5,454.4 241.6,454.7 239.9,453.0 239.7,450.3 241.5,448.3 241.8,445.8 244.1,444.1 244.5,441.6 245.9,439.4 247.5,437.3 249.6,435.8 251.6,434.1 253.6,432.5 255.0,434.7 257.3,436.1 259.4,437.6 260.6,440.1 262.7,441.6 264.8,443.4 265.6,445.8 265.7,448.6 267.2,450.7 269.5,451.3 271.8,449.7 274.0,449.6 276.3,450.7 277.6,448.8 279.2,447.0 279.2,444.2 281.4,442.8 282.3,440.7 283.2,438.5 285.4,437.1 287.5,435.9 289.9,435.8 292.2,435.9 294.4,434.6 296.9,435.5 299.1,434.8 300.7,432.8 301.0,430.4 300.3,427.7 302.5,425.8 303.2,423.6 303.6,421.2 306.4,421.2 308.3,423.2 310.3,424.9 312.2,426.7 314.5,427.8 317.3,428.0 319.6,427.4 321.9,426.7 324.5,426.8 326.2,424.2 328.7,424.2 331.0,423.4 332.7,425.4 331.6,428.2 332.6,430.4 334.3,432.3 334.9,434.6 334.8,437.1 335.5,439.4 336.9,441.7 339.8,442.4 341.3,444.5 342.8,446.7 344.6,448.5 346.4,450.1 346.4,452.9 348.0,454.6 348.9,456.9 350.8,458.4 352.0,460.4 353.7,462.1 358.0,462.0" fill="none" stroke="#30363f" stroke-width="0.8"/>
<polyline points="162.6,448.5 165.0,449.1 167.2,448.2 169.5,448.0 171.8,448.0 173.8,446.0 176.2,446.2 178.5,446.5 180.8,447.2 183.1,447.1 185.3,446.4 187.6,445.4 189.9,446.2" fill="none" stroke="#30363f" stroke-width="0.8"/>
<polyline points="162.6,448.5 163.1,450.9 161.5,453.0 161.3,455.3 161.3,457.6 161.7,460.0 159.9,462.0 159.5,464.3 159.9,466.7 159.6,468.9 160.0,471.3 160.2,473.7 159.0,475.8 158.1,478.0 158.0,480.3" fill="none" stroke="#30363f" stroke-width="0.8"/>
<polyline points="162.6,489.4 164.6,491.1 167.4,489.7 169.7,490.0 171.4,492.9 174.2,491.5 176.5,491.9 178.4,493.8 180.8,494.0 183.1,493.8 185.2,495.4 187.7,494.0 189.8,496.0 192.2,494.7 194.4,495.6 196.6,496.6 198.9,496.2 201.1,497.0 203.5,496.2 205.9,496.1 207.8,494.0 210.6,495.4 212.7,494.2 214.8,492.9 217.0,492.1 219.6,493.1 221.7,491.7 223.0,489.9 224.9,488.5 225.7,486.4 227.2,484.7 227.5,482.3 228.5,480.3" fill="none" stroke="#30363f" stroke-width="0.8"/>
<polyline points="414.9,384.8 417.3,385.6 419.6,385.4 421.8,385.1 423.9,382.8 426.3,383.6 428.5,384.5 430.9,384.8 433.1,385.7 435.7,385.4 437.9,386.2 440.0,387.5 442.4,387.6 444.5,388.8 447.1,388.5 449.3,389.3 451.2,391.4 453.6,391.6 455.9,392.4 458.1,393.6 460.2,395.1 462.8,395.2 465.4,395.4 467.0,398.1 469.5,398.4 471.2,400.4 472.9,402.3 474.7,404.1 475.9,406.5 478.6,407.5 480.4,406.1 482.9,405.8 484.4,403.8 486.6,403.1 488.7,402.2 490.3,400.3 492.0,398.6 494.5,398.4 496.8,398.3 499.0,398.9 501.3,398.4 501.7,400.7 502.6,402.9 502.7,405.3 503.6,407.5 505.2,405.6 507.2,404.3 509.4,403.3 512.1,403.1 513.3,400.5 515.2,399.1 517.2,397.8 519.2,396.4 521.8,396.1 523.3,394.3 525.5,393.5 527.7,392.7 528.8,390.3 530.7,389.0 532.4,387.5 534.2,386.2 536.8,385.8 538.3,384.0 540.0,382.5 542.0,381.0 544.1,379.7 547.0,380.3 549.2,379.2 551.6,378.6 553.2,376.3 555.8,376.0 558.0,375.0" fill="none" stroke="#30363f" stroke-width="0.8"/>
<polyline points="414.9,384.8 414.0,387.0 413.4,389.2 414.7,391.7 412.4,393.7 414.0,396.3 412.5,398.4 412.6,400.7 410.2,401.3 408.2,399.3 405.7,400.4 403.6,398.7 401.4,398.2 399.0,398.4 396.7,397.9 394.4,398.9 392.1,398.0 389.8,397.9 387.7,400.3 385.3,399.5 383.4,400.8 380.9,401.2 379.3,403.0 377.8,404.9 376.2,406.6 374.0,407.5 372.0,409.3 373.0,412.5 370.4,414.1 369.3,416.2 369.9,419.2 368.5,421.3 367.1,423.4 367.8,425.6 367.5,428.0 368.2,430.2 367.1,432.6 367.3,434.9 369.1,437.0 367.9,439.5 370.2,441.5 369.4,443.9 370.7,446.0 369.6,448.5 369.6,450.8 369.9,453.1 369.8,455.4 370.5,457.7 371.7,459.8 372.6,462.0 371.8,464.4 371.7,466.8 374.1,468.8 373.4,471.2 374.6,473.3 375.0,475.6 374.5,478.0 374.4,480.4 374.0,482.7 376.4,484.7 375.8,487.1 376.2,489.4 374.7,491.5 375.0,493.9 375.3,496.2 375.7,498.6 374.4,500.7 375.1,503.1 373.8,505.3 373.9,507.6 375.7,510.1 378.0,512.0 377.5,514.3 375.8,516.2 376.0,518.7 375.1,520.9 373.5,522.9 374.2,525.5 373.6,527.8 372.0,529.7 371.4,532.0 372.2,534.2 371.8,536.7 373.9,538.6 374.2,540.9 375.6,542.9 375.3,545.4 375.8,547.7" fill="none" stroke="#30363f" stroke-width="0.8"/>
<polyline points="358.0,414.3 360.0,415.9 360.9,418.7 362.9,420.4 365.8,421.1 367.1,423.4" fill="none" stroke="#30363f" stroke-width="0.8"/>
<polyline points="521.8,396.1 522.1,398.6 524.3,400.4 525.2,402.7 525.2,405.3 526.4,407.5 527.5,409.8 525.7,412.1 525.7,414.4 527.5,416.6 525.9,418.9 526.4,421.2 528.7,422.0 530.8,423.0 532.8,424.5 535.1,425.4 537.8,424.7 540.0,425.7 542.4,424.5 544.1,422.6 546.3,421.1 546.4,417.6 549.1,416.6 551.6,417.1 553.4,414.8 555.5,414.0 558.0,414.3 560.4,413.8 562.8,413.6 565.2,413.1 567.0,411.0 569.7,411.3 571.7,409.8 572.8,407.5 576.0,408.0 576.9,405.3 579.0,404.4 580.8,403.0 582.1,400.9 583.9,399.4 585.7,398.0 588.5,397.9 590.3,396.5 592.1,395.0 594.2,396.4 596.4,397.2 599.0,396.9 601.0,398.6 603.5,398.4 605.7,397.3 608.2,398.6 610.2,396.6 612.8,398.0 614.9,396.2 617.2,396.1 619.0,394.7 621.1,393.5 622.4,391.3 624.4,390.0 627.0,389.7 629.2,388.7 630.8,387.0 632.7,385.0 635.3,385.0 637.5,384.0 640.2,384.1 642.2,382.5 644.9,381.5 645.1,378.1 647.7,377.1 648.8,374.5 651.3,373.4 652.9,371.4 654.1,369.2 654.5,366.7 655.1,364.4 655.8,362.0" fill="none" stroke="#30363f" stroke-width="0.8"/>
<polyline points="540.0,425.7 540.3,428.1 540.8,430.4 540.9,432.8 543.4,434.6 544.3,436.8 543.2,439.6 544.6,441.6 545.3,443.8 545.5,446.1 544.8,448.6 546.6,450.6 545.2,453.2 546.5,455.3 546.8,457.6 545.9,460.0 542.8,460.1 541.8,462.4 541.1,464.9 538.1,465.1 536.6,466.9 535.5,469.0 533.8,470.7 532.9,472.8 531.0,474.4 532.0,477.6 528.8,478.3 528.4,480.7 528.1,483.2 526.4,484.9 527.3,487.3 529.0,489.3 529.5,491.9 530.5,494.2 532.0,496.3 533.2,498.5 533.8,500.9 532.7,503.0 532.6,505.3 531.1,507.4 530.3,509.6 531.0,512.0 533.7,512.7 536.4,512.0 535.8,514.2 536.0,516.7 534.2,518.5 534.1,520.9 536.3,522.3 536.8,525.3 540.0,525.7 540.4,528.8 543.0,529.8 543.7,532.3 541.4,534.1 542.1,536.6 541.1,538.7 540.8,541.0 543.2,543.0 545.3,545.4 543.9,547.5 541.9,549.1 539.4,550.2 538.4,552.9 536.4,554.4 536.7,556.6 535.7,558.9 537.2,561.1 536.8,563.3 536.4,565.5 536.4,567.8 537.2,570.0 536.4,572.2 537.3,574.8 539.4,576.7 540.8,578.9 542.7,577.3 545.0,577.4 547.0,576.1 549.3,576.3 551.3,575.2 553.5,574.9 555.9,575.1 558.0,574.4 560.0,576.3 562.7,577.0 564.7,578.9 563.4,580.7 562.0,582.4 560.5,584.1 558.5,585.4 558.0,587.8" fill="none" stroke="#30363f" stroke-width="0.8"/>
<polyline points="401.2,457.6 402.4,459.8 402.7,462.0 401.8,464.5 403.1,466.6 403.5,468.9 403.0,471.2 403.4,473.5 403.5,475.8 404.8,477.9 404.9,480.3 404.4,482.8 406.7,484.7 407.1,487.0 408.1,489.2 408.2,491.6 408.1,494.0 409.7,496.0 408.2,498.9 410.5,500.7 409.5,503.4 412.2,505.1 411.0,507.9 412.6,509.9" fill="none" stroke="#30363f" stroke-width="0.8"/>
<polyline points="401.2,457.6 403.0,456.1 404.4,454.1 407.0,453.5 407.9,450.9 410.0,449.7 411.5,447.8 413.3,446.4 416.0,445.8 416.3,442.6 418.6,441.7 420.0,439.7 422.0,438.3 424.0,437.0 426.3,438.2 428.6,436.6 430.8,437.3 433.1,436.8 435.4,437.6 437.7,436.9 439.9,436.2 442.2,436.8 444.5,437.0 446.2,435.0 448.7,433.9 450.1,431.7 451.2,429.3 453.6,428.0 455.8,428.7 458.2,428.0 460.4,428.7 462.8,428.2 465.0,428.9 467.1,430.1 469.5,429.6 471.7,430.5 474.0,430.7 476.3,430.3 478.5,431.3 480.7,432.3 483.2,432.6 485.3,433.9 487.4,435.1 490.3,434.4 491.8,437.2 494.5,437.0 495.3,434.9 496.0,432.6 497.2,430.6 498.7,428.9 499.3,426.6 501.1,425.0 502.3,423.1 503.6,421.2 504.9,419.2 505.5,416.9 507.5,415.3 507.9,412.9 508.1,410.4 510.3,408.9 510.9,406.6 512.5,404.8 512.9,402.4 514.4,400.5 513.7,397.6 514.8,395.6 517.4,394.2 517.3,391.6" fill="none" stroke="#30363f" stroke-width="0.8"/>
<polyline points="635.4,398.4 636.0,400.7 637.4,402.8 637.6,405.2 638.6,402.8 641.4,402.5 642.5,400.1 644.3,398.7 646.3,397.4 648.5,396.4 650.8,395.6 651.8,393.0 653.6,391.6 654.5,394.0 656.2,395.4 659.1,395.4 661.1,396.5 662.6,398.1 663.3,400.8 665.3,401.8 667.2,403.0 669.2,404.6 671.5,405.3 673.9,405.1 676.3,405.3 678.8,404.8 681.1,405.2 682.9,407.7 685.4,407.5 687.8,407.3 690.1,407.0 692.3,405.9 694.5,405.2 696.7,404.0 698.5,402.4 700.8,401.4 701.5,398.4 704.0,397.6 705.9,396.1 706.4,393.9 708.5,392.4 709.5,390.4 709.0,387.7 709.5,385.5 710.8,383.6 711.8,381.6 713.8,380.1 713.9,377.6 715.0,375.7 717.4,375.6 719.4,373.9 721.8,373.8 723.9,372.3 726.5,372.8 728.6,371.8 730.9,371.1 731.2,368.6 730.8,366.3 729.2,364.3 728.6,362.0 726.8,359.9 728.2,356.9 727.5,354.5 725.7,352.4 725.0,350.0 726.6,348.3 729.1,347.4 729.6,344.6 731.2,342.9 733.7,342.0 735.0,340.0 737.4,339.0 739.6,337.7 741.9,336.7 743.7,334.7 745.7,333.2 748.0,332.0" fill="none" stroke="#30363f" stroke-width="0.8"/>
<polyline points="685.4,407.5 686.3,409.9 685.8,412.2 684.8,414.4 683.8,416.5 684.9,419.0 684.6,421.3 684.1,423.5 683.1,425.7 684.6,427.7 687.4,428.0 688.4,430.7 690.4,432.1 693.2,432.6 694.5,434.8 694.9,437.1 695.6,439.3 696.2,441.6 695.3,444.2 698.0,446.0 698.7,448.2 697.0,451.0 698.8,453.0 699.1,455.3 701.6,455.1 703.8,456.0 706.0,456.7 708.2,457.6 707.5,460.1 709.7,462.0 710.1,464.3 709.6,466.7 710.1,469.0 709.5,471.4 710.2,473.7 711.8,475.7 712.6,477.9 711.5,480.5 712.7,482.6 713.8,485.1 717.2,484.7 718.0,487.6 719.7,489.4 722.0,490.5 724.1,491.7 725.7,489.8 728.4,489.7 730.2,488.3 731.4,485.9 734.0,485.5 735.4,483.3 737.7,482.6 740.0,483.9 740.6,486.3 741.9,488.2 743.1,490.2 743.9,492.5 744.8,494.7 746.8,496.2 749.1,497.3 751.3,497.3 753.5,497.3 755.8,496.8 758.0,496.0 759.4,494.1 761.0,492.4 763.5,491.7 765.0,490.0" fill="none" stroke="#30363f" stroke-width="0.8"/>
<polyline points="699.1,457.6 697.6,459.8 695.4,460.7 693.3,461.8 690.5,461.8 689.0,463.9 686.7,464.7 685.5,467.3 682.9,467.7 680.9,469.0 678.2,469.4 676.3,471.2 673.6,471.4 671.3,472.7 669.6,475.0 667.2,475.8 665.7,477.9 662.9,477.3 661.6,479.7 659.7,480.9 656.8,480.3 654.7,481.1 652.7,482.1 650.5,482.9 649.0,484.9 650.3,487.0 651.2,489.2 651.6,491.5 650.1,494.3 652.8,496.0 653.3,498.3 654.2,500.5 653.6,503.1 652.6,505.7 650.8,507.5 648.4,508.7 646.9,510.8 644.5,512.0 641.8,512.5 639.1,510.9 636.5,512.8 633.8,512.0 632.2,513.9 631.4,516.2 630.9,518.6 630.0,520.8 629.3,523.1 629.2,525.5 630.2,527.7 631.7,529.7 631.6,532.1 629.6,533.9 627.5,535.6 624.9,536.5 624.7,538.8 622.8,540.7 623.8,543.3 624.2,545.7 622.7,547.7 620.9,549.5 618.6,550.7 617.4,553.1 615.1,554.5 613.7,556.6 614.3,559.0 614.0,561.2 612.2,563.2 613.3,565.7 612.4,567.8 611.5,570.0 610.6,572.3 610.0,574.8 609.2,577.2 608.1,579.4 604.9,580.6 604.8,583.3 604.6,585.6 604.2,587.9 605.6,590.0 605.9,592.3 603.3,593.8 602.6,596.7 601.7,598.9 602.3,601.2 602.5,603.4 602.6,605.6" fill="none" stroke="#30363f" stroke-width="0.8"/>
<polyline points="558.0,605.6 560.3,605.0 562.6,604.4 564.9,604.2 566.8,602.1 569.3,602.3 571.4,601.2 573.9,601.6 576.1,601.1 577.9,598.8 580.4,599.3 582.6,598.7 584.8,597.8 587.3,598.4 589.2,596.7 591.0,598.2 593.0,599.6 594.1,602.0 596.5,602.9 598.8,603.7 600.4,605.6 602.6,605.6" fill="none" stroke="#30363f" stroke-width="0.8"/>
<polyline points="605.9,592.3 608.3,592.7 610.7,593.1 613.0,594.1 615.4,594.5 617.8,594.8 620.3,593.9 622.7,594.5 623.6,597.0 626.1,597.7 628.0,599.2 629.3,601.2 631.8,600.8 633.8,602.3 636.3,602.0 638.3,603.4 639.9,605.4 640.3,608.0 641.0,610.4 642.7,612.3 642.9,614.7 645.2,616.4 646.0,618.7 646.3,621.0 646.3,623.5 647.2,625.7 646.4,627.9 646.4,630.2 646.1,632.4 647.0,634.7 647.2,636.9 648.5,639.0 650.8,640.4 652.3,642.3 654.1,644.0 655.1,646.5 656.5,648.5 658.3,650.2 658.9,652.5 660.1,654.6 660.6,656.9" fill="none" stroke="#30363f" stroke-width="0.8"/>
<polyline points="169.1,512.0 169.4,514.3 169.2,516.6 169.6,518.8 169.7,521.1 171.5,523.1 171.4,525.4 173.8,526.2 175.9,524.8 178.2,524.9 180.4,524.5 182.7,524.5 184.8,523.1 187.2,523.4 189.4,524.5 191.3,526.1 193.6,526.6 195.7,527.9 198.3,527.8 200.0,530.0 202.6,529.8 203.1,532.4 200.8,534.1 201.0,536.6 201.2,539.0 199.0,540.8 199.8,543.5 198.1,545.4 197.8,547.9 196.6,550.0 196.0,552.4 195.0,554.6 194.3,557.0 191.6,558.4 191.4,561.0 193.6,562.2 194.8,564.1 196.3,565.7 195.9,568.8 198.0,570.0 198.8,572.2 199.8,574.2 202.1,575.3 203.7,577.0 204.8,578.9 204.3,581.2 203.9,583.6 202.4,585.5 200.8,587.5 201.1,590.1 200.4,592.3 199.4,594.4 198.7,596.6 198.4,598.8 198.4,601.1 198.4,603.4 198.1,605.6 200.7,605.5 202.7,607.0 204.5,608.9 207.1,608.8 209.1,610.2 211.7,610.1 213.7,611.7 216.0,612.3 218.3,613.6 219.1,616.4 220.8,618.3 224.0,618.7 224.9,621.3 227.1,621.9 229.4,620.7 231.5,623.0 233.9,621.2 236.1,621.3 238.2,623.4 240.5,622.9 242.8,621.5 244.9,622.9 247.1,624.0 249.4,622.5 251.6,623.5 252.4,625.7 254.7,626.7 255.7,628.8 257.2,630.5 258.3,632.4 259.0,634.8 257.8,636.9 257.1,639.1 256.5,641.3 256.4,643.6 256.1,645.8 254.6,647.7 252.0,648.0 250.4,649.9 247.7,649.9 246.7,652.8 243.9,652.6 242.8,655.3 240.2,655.5 238.3,656.9" fill="none" stroke="#30363f" stroke-width="0.8"/>
<polyline points="202.6,529.8 204.7,528.9 207.3,530.1 209.5,529.6 211.7,529.1 213.9,528.3 216.2,528.1 218.0,525.5 220.5,526.6 222.5,525.2 224.9,525.4 225.8,527.5 227.7,528.9 228.8,530.8 230.2,532.6 231.6,534.3" fill="none" stroke="#30363f" stroke-width="0.8"/>
<polyline points="287.3,572.2 289.3,570.8 289.9,568.1 292.5,567.4 294.0,565.5 295.2,567.9 297.0,569.7 299.3,570.9 300.9,572.9 302.9,574.4 305.0,575.6 306.6,577.4 309.1,578.1 310.0,580.7 312.0,582.0 314.0,583.3 315.7,581.7 317.8,580.8 320.2,580.5 321.8,578.7 324.4,578.7 326.4,577.6 328.2,576.2 329.7,574.4 331.3,571.8 333.5,569.9 336.4,568.9 338.5,567.7 340.7,567.2 343.2,567.3 345.5,567.0 347.5,565.5 349.7,564.7 351.8,564.0 353.9,563.0 355.4,560.8 358.0,561.0 358.0,558.8 360.2,558.5 362.4,557.4 364.7,557.5 366.7,556.1 369.2,557.4 371.4,556.6 373.4,554.8 372.6,551.7 374.9,550.0 375.8,547.7 378.6,547.7 380.4,549.6 382.9,550.2 384.4,552.9 387.0,553.2 388.8,551.3 390.5,549.3 390.4,546.2 392.8,544.6 393.7,542.1 395.3,543.6 397.5,544.4 398.9,546.3 401.1,546.8 403.5,547.2 404.8,549.3 407.0,549.9 408.5,547.8 409.4,545.4 411.7,543.9 412.1,541.0 414.4,539.6 416.0,537.6 418.3,537.2 420.1,535.3 422.7,536.3 424.6,534.4 427.2,535.2 429.3,534.3 431.7,535.1 434.3,535.5 435.5,538.8 438.7,537.8 440.5,539.9 441.2,542.2 440.1,544.3 440.6,546.6 439.7,548.8 439.6,551.0 439.4,553.2 441.9,554.2 444.6,554.8 447.2,555.5 446.8,558.1 446.1,560.6 444.0,562.7 443.8,565.3 442.7,567.7 441.3,569.7 439.1,571.1 439.6,574.4 437.7,576.0 435.8,577.6 435.5,580.3 432.7,581.3 432.1,583.8 430.5,585.6 432.5,588.2 433.8,591.2 435.3,588.9 438.5,588.7 438.9,585.3 441.6,584.5 444.1,586.3 447.2,586.7 447.1,589.2 447.0,591.7 447.8,594.0 449.0,596.3 448.9,598.8 449.4,601.2 451.9,601.7 453.6,599.0 456.3,600.3 458.4,599.4 460.4,597.6 462.8,597.8 465.3,598.4 467.1,596.2 469.2,594.9 471.7,595.6 471.6,593.0 472.7,590.7 471.9,588.0 473.8,585.8 474.0,583.3 476.2,582.9 478.4,582.4 480.7,583.3 482.8,582.7 485.0,582.2 487.2,584.4 489.9,585.3 492.9,585.6 493.2,588.6 494.1,591.2 496.2,593.4 498.8,593.0 500.7,591.1 502.9,590.0 501.0,587.9 501.0,585.2 500.5,582.6 500.5,579.8 498.5,577.8 500.6,577.0 502.4,575.7 503.7,573.6 506.3,573.7 507.4,571.2 509.4,570.3 511.8,570.0 514.6,570.4 516.0,573.2 518.0,575.0 520.6,575.6 523.0,576.7 524.9,575.0 527.7,575.8 529.4,573.7 532.1,574.2 534.3,573.4 536.4,572.2" fill="none" stroke="#30363f" stroke-width="0.8"/>
<polyline points="467.3,599.0 467.1,601.2 467.8,603.4 467.3,605.7 469.1,607.8 467.7,610.1 468.4,612.3 467.8,614.7 466.3,616.7 466.4,619.3 465.0,621.4 464.3,623.7 462.8,625.7 461.9,627.9 459.8,629.2 459.0,631.5 456.8,632.7 456.3,635.2 455.7,637.6 453.9,639.1 452.3,640.7 451.2,642.6 450.6,645.0 448.5,646.2 447.2,648.0 448.8,650.0 448.4,652.3 448.4,654.6 448.5,656.9 449.4,659.0" fill="none" stroke="#30363f" stroke-width="0.8"/>
<polyline points="158.0,590.0 159.6,588.2 161.8,587.3 163.5,585.7 165.8,584.8 168.0,584.0 170.1,582.9 171.5,580.8 173.6,579.8 175.8,578.9 175.0,576.7 176.6,574.4 175.3,572.2 176.8,570.0 174.7,567.8 174.6,565.5 175.6,563.3 175.6,561.1 176.4,558.8 175.8,556.6" fill="none" stroke="#30363f" stroke-width="0.8"/>
<polyline points="358.0,641.3 360.2,640.9 362.6,641.7 364.5,639.3 366.8,639.7 369.3,641.1 371.4,640.1 373.5,638.5 375.8,639.1 377.7,640.4 378.3,642.9 380.7,643.8 383.0,644.6 383.1,647.7 386.1,648.0 387.0,650.2 389.3,649.9 391.5,649.2 393.7,648.2 396.2,648.8 397.9,646.3 400.4,646.7 402.6,645.8 405.0,645.3 406.8,647.8 409.5,646.2 411.5,647.6 413.6,648.8 415.8,649.4 418.4,647.9 420.3,650.2 422.5,650.6 424.9,650.2 427.1,649.5 429.4,650.4 431.5,648.9 433.7,648.5 436.0,648.3 438.2,648.4 440.6,649.5 442.7,648.3 445.1,649.4 447.2,648.0" fill="none" stroke="#30363f" stroke-width="0.8"/>
<polyline points="554.2,587.8 553.3,590.2 552.6,592.6 551.6,594.9 548.8,596.3 548.4,598.9 547.5,601.2 548.8,603.2 550.8,604.6 552.7,606.0 554.2,607.9" fill="none" stroke="#30363f" stroke-width="0.8"/>
<polyline points="762.8,340.0 764.0,342.1 766.8,343.1 767.8,345.3 769.4,347.2 769.9,349.9 771.9,351.4 774.2,351.5 776.6,351.6 778.5,349.2 780.9,349.7 783.0,348.3 785.5,349.1 787.8,350.1 789.3,352.1 791.9,352.7 793.6,354.6 794.8,357.0 796.9,358.2" fill="none" stroke="#30363f" stroke-width="0.8"/>
<polyline points="589.6,180.0 591.5,182.1 590.7,185.0 592.0,187.3 594.5,187.0 596.5,188.4 598.6,189.5 600.7,190.4 603.2,190.2 605.4,190.9 607.9,190.4 609.8,192.0 612.1,192.5 614.0,194.2 616.4,194.1 618.7,194.6 616.9,196.7 616.3,199.4 618.2,201.1 620.5,202.5 621.2,205.5 623.6,206.7 624.4,209.1 626.8,210.4 628.8,211.9 629.4,214.5 630.9,216.4 630.9,219.4 630.9,222.5 628.5,223.4 626.7,225.1 624.8,226.7 622.7,228.0 620.9,229.8 618.7,231.0 615.6,230.3 613.2,228.6 611.4,226.1 609.2,224.6 606.7,224.5 604.1,225.4 601.9,223.5 599.3,224.0 596.9,223.7 597.2,226.4 594.8,228.3 594.8,230.9 594.4,233.4 591.9,235.2 590.8,238.0 589.6,240.7 588.6,242.9 586.0,243.4 584.0,244.5 582.2,245.8 581.4,248.3 579.4,249.4 577.4,250.5 576.5,253.0 573.7,253.2 572.6,255.3 571.9,257.7 573.7,260.2 572.6,262.6 574.4,264.2 576.7,265.2 578.9,266.3 580.2,268.6 582.3,269.8 581.1,272.2 582.2,274.7 582.3,277.1 584.6,277.7 585.8,279.9 587.0,281.8 588.5,283.5 590.6,284.4 593.4,284.5 594.4,286.8 596.8,287.3 598.7,285.8 600.5,284.0 602.6,283.5 604.7,282.8 607.3,283.6 609.0,281.8 611.4,282.0 613.7,283.2 616.4,281.8 618.7,283.3 621.2,283.5 623.8,282.9 626.0,284.4 627.2,281.9 630.5,282.3 632.5,281.0 633.2,277.8 635.7,277.1 638.3,276.9 640.9,276.7 643.3,275.7 645.7,274.8 647.7,272.7 650.3,272.3 652.6,271.3 654.2,269.4 656.8,268.8 658.4,266.9 660.0,265.0 662.8,264.5 665.3,263.3 667.1,261.1 669.7,260.1 672.0,259.3 673.2,256.8 675.4,255.8 678.3,256.2 679.7,253.8 681.8,252.8 683.2,250.6 683.9,248.0 684.2,245.3 685.9,243.2 686.7,240.7 687.2,238.1 685.3,235.9 684.9,233.5 684.0,231.2 684.3,228.6 682.0,229.9 679.3,228.8 676.9,229.5 674.3,229.4 672.1,231.0 672.5,228.6 673.2,226.2 671.4,223.7 672.1,221.3 669.3,220.8 666.9,219.5 664.7,217.9 662.4,216.4 660.4,214.3 657.3,215.1 655.1,213.6 652.3,213.6 650.3,211.6 649.1,209.2 650.4,206.7 650.3,204.3 649.3,201.7 647.9,199.4 647.6,196.6 645.4,194.6 645.2,192.1 644.3,189.9 642.4,188.3 640.7,186.5 639.4,184.6 639.7,181.8 638.1,180.0" fill="none" stroke="#30363f" stroke-width="0.8"/>
<polyline points="558.0,292.9 560.4,292.5 562.9,292.6 565.4,293.2 567.7,291.3 570.1,291.2 572.6,291.7 574.8,290.0 577.3,289.7 579.6,288.9 582.1,288.7 584.8,289.1 587.4,289.7 589.6,288.0 592.1,287.9 594.4,286.8" fill="none" stroke="#30363f" stroke-width="0.8"/>
<polyline points="606.6,282.0 607.5,284.4 607.2,286.8 608.5,289.1 608.2,291.7 609.2,294.0 609.6,296.4 609.2,298.9 609.0,301.4 609.5,304.0 608.7,306.3 607.2,308.6 608.5,311.3 606.7,313.5 606.6,316.0 605.4,318.1 602.7,318.2 601.0,319.7 600.1,322.1 597.3,322.2 595.8,323.9 594.4,325.7 594.3,328.2 592.5,329.9 590.8,331.6 589.3,333.4 589.9,336.3 588.7,338.2 587.1,340.0" fill="none" stroke="#30363f" stroke-width="0.8"/>
<polyline points="681.8,252.8 683.4,254.9 686.2,255.0 688.1,256.7 690.3,257.7 689.7,260.2 691.5,262.5 691.0,265.0 691.1,267.4 691.6,269.8 693.3,272.5 696.4,273.5 698.8,272.2 701.2,272.1 703.6,272.6 706.2,273.7 708.6,273.6 710.9,271.7 713.4,273.5 715.8,272.3 718.2,274.0 720.0,276.5 723.1,277.1" fill="none" stroke="#30363f" stroke-width="0.8"/>
<polyline points="703.7,279.6 705.0,281.9 705.8,284.4 706.7,286.8 708.0,289.1 708.6,291.7 711.0,293.4 713.6,294.7 715.8,296.6" fill="none" stroke="#30363f" stroke-width="0.8"/>
<polyline points="674.6,187.3 677.0,187.8 679.6,187.2 681.8,189.0 684.3,188.4 686.5,190.4 689.1,189.7 690.4,192.0 689.5,194.7 691.4,196.9 690.0,199.7 691.6,201.9 694.1,201.5 695.1,198.6 697.8,198.6 699.3,196.4 701.7,195.8 703.7,194.6 705.9,193.2 705.9,190.2 707.5,188.4 708.7,186.2 711.0,184.9" fill="none" stroke="#30363f" stroke-width="0.8"/>
<polyline points="694.0,221.3 696.2,222.4 696.9,224.6 698.9,225.9 699.1,228.6 700.9,230.0 703.2,231.0 703.7,233.4 706.3,233.2 707.9,235.7 710.6,235.2 712.3,237.5 714.6,238.1 717.0,238.7 718.8,240.4 721.3,240.7 723.5,241.5 725.9,242.0 728.0,243.1 729.6,241.4 731.4,239.9 733.7,239.3 735.6,238.0 738.1,237.6 739.3,235.3 741.4,234.4 744.1,234.4 745.6,232.5 747.4,231.0 749.4,229.8 751.2,228.3 753.4,227.1 754.0,224.3 756.7,223.8 757.3,220.9 759.3,219.7 761.7,218.8 763.0,216.7 765.0,215.5 766.8,214.0" fill="none" stroke="#30363f" stroke-width="0.8"/>
<polyline points="723.1,238.3 724.3,240.4 726.0,242.3 726.4,244.8 728.5,246.5 729.2,248.9 729.4,251.6 732.5,252.7 732.8,255.3 733.7,257.6 733.4,260.2 735.3,262.4 735.6,264.8 735.3,267.4" fill="none" stroke="#30363f" stroke-width="0.8"/>
<polyline points="262.8,623.5 264.9,622.5 267.3,622.8 269.4,621.6 271.9,622.8 273.9,621.0 276.2,621.3 278.4,621.6 280.6,622.8 282.9,621.6 285.0,623.3 287.3,622.9 289.6,622.6 291.8,623.0 294.0,623.1 296.3,622.8 298.4,624.5 300.7,623.5 302.6,625.1 303.4,627.9 305.4,629.5 308.7,629.8 309.6,632.4 312.0,632.4 314.1,633.5 316.1,634.9 318.7,633.9 320.7,635.5 323.1,635.5 325.1,637.0 327.5,636.9 330.0,636.9 331.8,635.5 333.1,633.2 335.7,633.5 337.3,631.8 339.7,631.7 341.3,629.8 343.8,629.8 345.3,627.9 346.4,630.2 348.5,631.1 350.3,632.4 352.1,633.7 354.2,634.5 356.7,635.0 358.0,636.9" fill="none" stroke="#30363f" stroke-width="0.8"/>
<polyline points="282.9,578.9 283.0,581.4 286.1,582.2 285.7,585.0 287.4,586.7 287.5,589.2 289.8,590.5 289.8,593.1 291.8,594.5 294.3,595.4 294.8,598.6 297.7,599.1 300.0,600.2 301.6,602.1 303.1,604.3 305.2,605.6 307.1,607.4 307.1,610.0 308.8,611.9 309.5,614.2 310.1,616.5 310.8,618.8 311.5,621.1 311.8,623.5" fill="none" stroke="#30363f" stroke-width="0.8"/>
<polyline points="162.6,448.5 160.8,450.5 158.7,452.3 158.0,455.0" fill="none" stroke="#30363f" stroke-width="0.8"/>
<polyline points="175.8,578.9 176.5,581.4 179.6,582.0 180.3,584.5 182.0,586.3 182.6,588.9 185.0,590.0 186.7,591.5 188.0,593.4 189.2,595.3 191.0,596.7 191.5,599.3 193.0,601.0 194.8,602.5 197.5,603.2 198.1,605.6" fill="none" stroke="#30363f" stroke-width="0.8"/>
<line x1="855.9" y1="603.5" x2="851" y2="643" stroke="#c9b47a" stroke-width="1.6"/>
<polyline points="216,659 227.1,651.4 234.9,659" fill="none" stroke="#c9b47a" stroke-width="1.2"/>
<g fill="#1b91b5"><use href="#r767d" transform="matrix(0.1600 0 0 0.1600 177.30 104.90)"/><use href="#r94f6" transform="matrix(0.1600 0 0 0.1600 185.30 104.90)"/></g>
<g fill="#1b91b5"><use href="#r5170" transform="matrix(0.1600 0 0 0.1600 166.40 137.50)"/><use href="#r5dde" transform="matrix(0.1600 0 0 0.1600 174.40 137.50)"/></g>
<g fill="#1b91b5"><use href="#r5b9a" transform="matrix(0.1600 0 0 0.1600 195.50 148.10)"/><use href="#r897f" transform="matrix(0.1600 0 0 0.1600 203.50 148.10)"/></g>
<g fill="#1b91b5"><use href="#r56fa" transform="matrix(0.1600 0 0 0.1600 252.80 128.80)"/><use href="#r539f" transform="matrix(0.1600 0 0 0.1600 260.80 128.80)"/></g>
<g fill="#1b91b5"><use href="#r5e73" transform="matrix(0.1600 0 0 0.1600 268.30 148.80)"/><use href="#r51c9" transform="matrix(0.1600 0 0 0.1600 276.30 148.80)"/></g>
<g fill="#1b91b5"><use href="#r5e86" transform="matrix(0.1600 0 0 0.1600 303.10 142.00)"/><use href="#r9633" transform="matrix(0.1600 0 0 0.1600 311.10 142.00)"/></g>
<g fill="#1b91b5"><use href="#r5929" transform="matrix(0.1600 0 0 0.1600 234.20 191.40)"/><use href="#r6c34" transform="matrix(0.1600 0 0 0.1600 242.20 191.40)"/></g>
<g fill="#1b91b5"><use href="#r5b9d" transform="matrix(0.1600 0 0 0.1600 288.80 200.50)"/><use href="#r9e21" transform="matrix(0.1600 0 0 0.1600 296.80 200.50)"/></g>
<g fill="#1b91b5"><use href="#r5dde" transform="matrix(0.1600 0 0 0.1600 156.50 183.40)"/></g>
<g fill="#1b91b5"><use href="#r5dde" transform="matrix(0.1600 0 0 0.1600 157.00 284.60)"/></g>
<g fill="#1b91b5"><use href="#r5ef6" transform="matrix(0.1600 0 0 0.1600 369.30 103.80)"/><use href="#r5b89" transform="matrix(0.1600 0 0 0.1600 377.30 103.80)"/></g>
<g fill="#1b91b5"><use href="#r4e34" transform="matrix(0.1600 0 0 0.1600 442.20 125.40)"/><use href="#r6c7e" transform="matrix(0.1600 0 0 0.1600 450.20 125.40)"/></g>
<g fill="#1b91b5"><use href="#r957f" transform="matrix(0.1600 0 0 0.1600 499.70 120.80)"/><use href="#r6cbb" transform="matrix(0.1600 0 0 0.1600 507.70 120.80)"/></g>
<g fill="#1b91b5"><use href="#r664b" transform="matrix(0.1600 0 0 0.1600 490.00 151.60)"/><use href="#r57ce" transform="matrix(0.1600 0 0 0.1600 498.00 151.60)"/></g>
<g fill="#1b91b5"><use href="#r7126" transform="matrix(0.1600 0 0 0.1600 504.30 163.40)"/><use href="#r4f5c" transform="matrix(0.1600 0 0 0.1600 512.30 163.40)"/></g>
<g fill="#1b91b5"><use href="#r65b0" transform="matrix(0.1600 0 0 0.1600 528.60 159.50)"/><use href="#r4e61" transform="matrix(0.1600 0 0 0.1600 536.60 159.50)"/></g>
<g fill="#1b91b5"><use href="#r8fd0" transform="matrix(0.1600 0 0 0.1600 424.00 172.00)"/><use href="#r57ce" transform="matrix(0.1600 0 0 0.1600 432.00 172.00)"/></g>
<g fill="#1b91b5"><use href="#r4e09" transform="matrix(0.1600 0 0 0.1600 426.80 183.00)"/><use href="#r95e8" transform="matrix(0.1600 0 0 0.1600 434.80 183.00)"/><use href="#r5ce1" transform="matrix(0.1600 0 0 0.1600 442.80 183.00)"/></g>
<g fill="#1b91b5"><use href="#r6d1b" transform="matrix(0.1600 0 0 0.1600 475.80 189.10)"/><use href="#r9633" transform="matrix(0.1600 0 0 0.1600 483.80 189.10)"/></g>
<g fill="#1b91b5"><use href="#r90d1" transform="matrix(0.1600 0 0 0.1600 517.90 194.80)"/><use href="#r5dde" transform="matrix(0.1600 0 0 0.1600 525.90 194.80)"/></g>
<g fill="#1b91b5"><use href="#r5f00" transform="matrix(0.1600 0 0 0.1600 542.30 182.30)"/><use href="#r5c01" transform="matrix(0.1600 0 0 0.1600 550.30 182.30)"/></g>
<g fill="#1b91b5"><use href="#r94dc" transform="matrix(0.1600 0 0 0.1600 353.40 177.10)"/><use href="#r5ddd" transform="matrix(0.1600 0 0 0.1600 361.40 177.10)"/></g>
<g fill="#1b91b5"><use href="#r6e2d" transform="matrix(0.1600 0 0 0.1600 370.50 194.30)"/><use href="#r5357" transform="matrix(0.1600 0 0 0.1600 378.50 194.30)"/></g>
<g fill="#1b91b5"><use href="#r897f" transform="matrix(0.1600 0 0 0.1600 349.80 201.40)"/><use href="#r5b89" transform="matrix(0.1600 0 0 0.1600 357.80 201.40)"/></g>
<g fill="#1b91b5"><use href="#r8bb8" transform="matrix(0.1600 0 0 0.1600 525.00 214.60)"/><use href="#r660c" transform="matrix(0.1600 0 0 0.1600 533.00 214.60)"/></g>
<g fill="#1b91b5"><use href="#r90a2" transform="matrix(0.1600 0 0 0.1600 549.50 82.10)"/><use href="#r53f0" transform="matrix(0.1600 0 0 0.1600 557.50 82.10)"/></g>
<g fill="#1b91b5"><use href="#r90af" transform="matrix(0.1600 0 0 0.1600 549.50 101.50)"/><use href="#r90f8" transform="matrix(0.1600 0 0 0.1600 557.50 101.50)"/></g>
<g fill="#1b91b5"><use href="#r9e64" transform="matrix(0.1600 0 0 0.1600 544.00 140.10)"/><use href="#r58c1" transform="matrix(0.1600 0 0 0.1600 552.00 140.10)"/></g>
<g fill="#1b91b5"><use href="#r6ee8" transform="matrix(0.1600 0 0 0.1600 674.00 69.60)"/><use href="#r5dde" transform="matrix(0.1600 0 0 0.1600 682.00 69.60)"/></g>
<g fill="#1b91b5"><use href="#r6dc4" transform="matrix(0.1600 0 0 0.1600 676.30 92.90)"/><use href="#r535a" transform="matrix(0.1600 0 0 0.1600 684.30 92.90)"/></g>
<g fill="#1b91b5"><use href="#r6f4d" transform="matrix(0.1600 0 0 0.1600 716.10 97.40)"/><use href="#r574a" transform="matrix(0.1600 0 0 0.1600 724.10 97.40)"/></g>
<g fill="#1b91b5"><use href="#r804a" transform="matrix(0.1600 0 0 0.1600 602.30 108.80)"/><use href="#r57ce" transform="matrix(0.1600 0 0 0.1600 610.30 108.80)"/></g>
<g fill="#1b91b5"><use href="#r6d4e" transform="matrix(0.1600 0 0 0.1600 643.30 111.70)"/><use href="#r5357" transform="matrix(0.1600 0 0 0.1600 651.30 111.70)"/></g>
<g fill="#1b91b5"><use href="#r6cf0" transform="matrix(0.1600 0 0 0.1600 642.20 120.10)"/><use href="#r5b89" transform="matrix(0.1600 0 0 0.1600 650.20 120.10)"/></g>
<g fill="#1b91b5"><use href="#r6fee" transform="matrix(0.1600 0 0 0.1600 568.20 139.70)"/><use href="#r9633" transform="matrix(0.1600 0 0 0.1600 576.20 139.70)"/></g>
<g fill="#1b91b5"><use href="#r6d4e" transform="matrix(0.1600 0 0 0.1600 624.00 155.70)"/><use href="#r5b81" transform="matrix(0.1600 0 0 0.1600 632.00 155.70)"/></g>
<g fill="#1b91b5"><use href="#r83cf" transform="matrix(0.1600 0 0 0.1600 584.10 163.40)"/><use href="#r6cfd" transform="matrix(0.1600 0 0 0.1600 592.10 163.40)"/></g>
<g fill="#1b91b5"><use href="#r65e5" transform="matrix(0.1600 0 0 0.1600 729.70 155.00)"/><use href="#r7167" transform="matrix(0.1600 0 0 0.1600 737.70 155.00)"/></g>
<g fill="#1b91b5"><use href="#r4e34" transform="matrix(0.1600 0 0 0.1600 687.70 168.60)"/><use href="#r6c82" transform="matrix(0.1600 0 0 0.1600 695.70 168.60)"/></g>
<g fill="#1b91b5"><use href="#r67a3" transform="matrix(0.1600 0 0 0.1600 650.10 181.60)"/><use href="#r5e84" transform="matrix(0.1600 0 0 0.1600 658.10 181.60)"/></g>
<g fill="#1b91b5"><use href="#r8fde" transform="matrix(0.1600 0 0 0.1600 714.40 190.20)"/><use href="#r4e91" transform="matrix(0.1600 0 0 0.1600 722.40 190.20)"/><use href="#r6e2f" transform="matrix(0.1600 0 0 0.1600 730.40 190.20)"/></g>
<g fill="#1b91b5"><use href="#r5546" transform="matrix(0.1600 0 0 0.1600 591.00 198.20)"/><use href="#r4e18" transform="matrix(0.1600 0 0 0.1600 599.00 198.20)"/></g>
<g fill="#1b91b5"><use href="#r5f90" transform="matrix(0.1600 0 0 0.1600 649.00 207.30)"/><use href="#r5dde" transform="matrix(0.1600 0 0 0.1600 657.00 207.30)"/></g>
<g fill="#1b91b5"><use href="#r9752" transform="matrix(0.1600 0 0 0.1600 759.00 126.10)"/><use href="#r5c9b" transform="matrix(0.1600 0 0 0.1600 767.00 126.10)"/></g>
<g fill="#1b91b5"><use href="#r9647" transform="matrix(0.1600 0 0 0.1600 205.70 241.90)"/><use href="#r5357" transform="matrix(0.1600 0 0 0.1600 213.70 241.90)"/></g>
<g fill="#1b91b5"><use href="#r6c49" transform="matrix(0.1600 0 0 0.1600 281.50 256.10)"/><use href="#r4e2d" transform="matrix(0.1600 0 0 0.1600 289.50 256.10)"/></g>
<g fill="#1b91b5"><use href="#r5e7f" transform="matrix(0.1600 0 0 0.1600 238.70 283.40)"/><use href="#r5143" transform="matrix(0.1600 0 0 0.1600 246.70 283.40)"/></g>
<g fill="#1b91b5"><use href="#r5df4" transform="matrix(0.1600 0 0 0.1600 271.00 307.30)"/><use href="#r4e2d" transform="matrix(0.1600 0 0 0.1600 279.00 307.30)"/></g>
<g fill="#1b91b5"><use href="#r7ef5" transform="matrix(0.1600 0 0 0.1600 196.60 323.90)"/><use href="#r9633" transform="matrix(0.1600 0 0 0.1600 204.60 323.90)"/></g>
<g fill="#1b91b5"><use href="#r5fb7" transform="matrix(0.1600 0 0 0.1600 187.50 338.00)"/><use href="#r9633" transform="matrix(0.1600 0 0 0.1600 195.50 338.00)"/></g>
<g fill="#1b91b5"><use href="#r8fbe" transform="matrix(0.1600 0 0 0.1600 296.80 334.60)"/><use href="#r5dde" transform="matrix(0.1600 0 0 0.1600 304.80 334.60)"/></g>
<g fill="#1b91b5"><use href="#r5357" transform="matrix(0.1600 0 0 0.1600 248.30 350.50)"/><use href="#r5145" transform="matrix(0.1600 0 0 0.1600 256.30 350.50)"/></g>
<g fill="#1b91b5"><use href="#r6210" transform="matrix(0.1600 0 0 0.1600 175.00 360.70)"/><use href="#r90fd" transform="matrix(0.1600 0 0 0.1600 183.00 360.70)"/></g>
<g fill="#1b91b5"><use href="#r9042" transform="matrix(0.1600 0 0 0.1600 229.60 362.50)"/><use href="#r5b81" transform="matrix(0.1600 0 0 0.1600 237.60 362.50)"/></g>
<g fill="#1b91b5"><use href="#r5e7f" transform="matrix(0.1600 0 0 0.1600 267.00 364.10)"/><use href="#r5b89" transform="matrix(0.1600 0 0 0.1600 275.00 364.10)"/></g>
<g fill="#1b91b5"><use href="#r5b89" transform="matrix(0.1600 0 0 0.1600 351.50 272.60)"/><use href="#r5eb7" transform="matrix(0.1600 0 0 0.1600 359.50 272.60)"/></g>
<g fill="#1b91b5"><use href="#r5546" transform="matrix(0.1600 0 0 0.1600 385.30 221.90)"/><use href="#r6d1b" transform="matrix(0.1600 0 0 0.1600 393.30 221.90)"/></g>
<g fill="#1b91b5"><use href="#r5e73" transform="matrix(0.1600 0 0 0.1600 498.40 226.00)"/><use href="#r9876" transform="matrix(0.1600 0 0 0.1600 506.40 226.00)"/><use href="#r5c71" transform="matrix(0.1600 0 0 0.1600 514.40 226.00)"/></g>
<g fill="#1b91b5"><use href="#r6f2f" transform="matrix(0.1600 0 0 0.1600 532.00 234.40)"/><use href="#r6cb3" transform="matrix(0.1600 0 0 0.1600 540.00 234.40)"/></g>
<g fill="#1b91b5"><use href="#r5357" transform="matrix(0.1600 0 0 0.1600 478.60 259.50)"/><use href="#r9633" transform="matrix(0.1600 0 0 0.1600 486.60 259.50)"/></g>
<g fill="#1b91b5"><use href="#r9a7b" transform="matrix(0.1600 0 0 0.1600 528.00 258.80)"/><use href="#r9a6c" transform="matrix(0.1600 0 0 0.1600 536.00 258.80)"/><use href="#r5e97" transform="matrix(0.1600 0 0 0.1600 544.00 258.80)"/></g>
<g fill="#1b91b5"><use href="#r5341" transform="matrix(0.1600 0 0 0.1600 417.10 275.40)"/><use href="#r5830" transform="matrix(0.1600 0 0 0.1600 425.10 275.40)"/></g>
<g fill="#1b91b5"><use href="#r8944" transform="matrix(0.1600 0 0 0.1600 464.90 301.10)"/><use href="#r9633" transform="matrix(0.1600 0 0 0.1600 472.90 301.10)"/></g>
<g fill="#1b91b5"><use href="#r4fe1" transform="matrix(0.1600 0 0 0.1600 534.30 295.20)"/><use href="#r9633" transform="matrix(0.1600 0 0 0.1600 542.30 295.20)"/></g>
<g fill="#1b91b5"><use href="#r968f" transform="matrix(0.1600 0 0 0.1600 509.30 314.80)"/><use href="#r5dde" transform="matrix(0.1600 0 0 0.1600 517.30 314.80)"/></g>
<g fill="#1b91b5"><use href="#r8346" transform="matrix(0.1600 0 0 0.1600 466.50 342.10)"/><use href="#r95e8" transform="matrix(0.1600 0 0 0.1600 474.50 342.10)"/></g>
<g fill="#1b91b5"><use href="#r5b9c" transform="matrix(0.1600 0 0 0.1600 434.20 356.10)"/><use href="#r660c" transform="matrix(0.1600 0 0 0.1600 442.20 356.10)"/></g>
<g fill="#1b91b5"><use href="#r5b5d" transform="matrix(0.1600 0 0 0.1600 530.90 347.10)"/><use href="#r611f" transform="matrix(0.1600 0 0 0.1600 538.90 347.10)"/></g>
<g fill="#1b91b5"><use href="#r4eb3" transform="matrix(0.1600 0 0 0.1600 595.50 223.70)"/><use href="#r5dde" transform="matrix(0.1600 0 0 0.1600 603.50 223.70)"/></g>
<g fill="#1b91b5"><use href="#r6dee" transform="matrix(0.1600 0 0 0.1600 631.90 218.50)"/><use href="#r5317" transform="matrix(0.1600 0 0 0.1600 639.90 218.50)"/></g>
<g fill="#1b91b5"><use href="#r5bbf" transform="matrix(0.1600 0 0 0.1600 637.60 231.50)"/><use href="#r5dde" transform="matrix(0.1600 0 0 0.1600 645.60 231.50)"/></g>
<g fill="#1b91b5"><use href="#r5bbf" transform="matrix(0.1600 0 0 0.1600 684.20 217.80)"/><use href="#r8fc1" transform="matrix(0.1600 0 0 0.1600 692.20 217.80)"/></g>
<g fill="#1b91b5"><use href="#r6dee" transform="matrix(0.1600 0 0 0.1600 713.80 235.60)"/><use href="#r5b89" transform="matrix(0.1600 0 0 0.1600 721.80 235.60)"/></g>
<g fill="#1b91b5"><use href="#r5468" transform="matrix(0.1600 0 0 0.1600 556.80 232.10)"/><use href="#r53e3" transform="matrix(0.1600 0 0 0.1600 564.80 232.10)"/></g>
<g fill="#1b91b5"><use href="#r961c" transform="matrix(0.1600 0 0 0.1600 596.60 264.10)"/><use href="#r9633" transform="matrix(0.1600 0 0 0.1600 604.60 264.10)"/></g>
<g fill="#1b91b5"><use href="#r868c" transform="matrix(0.1600 0 0 0.1600 653.50 262.90)"/><use href="#r57e0" transform="matrix(0.1600 0 0 0.1600 661.50 262.90)"/></g>
<g fill="#1b91b5"><use href="#r6dee" transform="matrix(0.1600 0 0 0.1600 638.70 275.40)"/><use href="#r5357" transform="matrix(0.1600 0 0 0.1600 646.70 275.40)"/></g>
<g fill="#1b91b5"><use href="#r6ec1" transform="matrix(0.1600 0 0 0.1600 686.50 290.60)"/><use href="#r5dde" transform="matrix(0.1600 0 0 0.1600 694.50 290.60)"/></g>
<g fill="#1b91b5"><use href="#r6cf0" transform="matrix(0.1600 0 0 0.1600 743.00 282.20)"/><use href="#r5dde" transform="matrix(0.1600 0 0 0.1600 751.00 282.20)"/></g>
<g fill="#1b91b5"><use href="#r516d" transform="matrix(0.1600 0 0 0.1600 620.50 312.90)"/><use href="#r5b89" transform="matrix(0.1600 0 0 0.1600 628.50 312.90)"/></g>
<g fill="#1b91b5"><use href="#r5408" transform="matrix(0.1600 0 0 0.1600 637.60 314.10)"/><use href="#r80a5" transform="matrix(0.1600 0 0 0.1600 645.60 314.10)"/></g>
<g fill="#1b91b5"><use href="#r9a6c" transform="matrix(0.1600 0 0 0.1600 689.30 314.80)"/><use href="#r978d" transform="matrix(0.1600 0 0 0.1600 697.30 314.80)"/><use href="#r5c71" transform="matrix(0.1600 0 0 0.1600 705.30 314.80)"/></g>
<g fill="#1b91b5"><use href="#r829c" transform="matrix(0.1600 0 0 0.1600 690.00 328.40)"/><use href="#r6e56" transform="matrix(0.1600 0 0 0.1600 698.00 328.40)"/></g>
<g fill="#1b91b5"><use href="#r94dc" transform="matrix(0.1600 0 0 0.1600 668.30 345.90)"/><use href="#r9675" transform="matrix(0.1600 0 0 0.1600 676.30 345.90)"/></g>
<g fill="#1b91b5"><use href="#r5ba3" transform="matrix(0.1600 0 0 0.1600 702.40 345.90)"/><use href="#r57ce" transform="matrix(0.1600 0 0 0.1600 710.40 345.90)"/></g>
<g fill="#1b91b5"><use href="#r6c60" transform="matrix(0.1600 0 0 0.1600 657.00 357.30)"/><use href="#r5dde" transform="matrix(0.1600 0 0 0.1600 665.00 357.30)"/></g>
<g fill="#1b91b5"><use href="#r5357" transform="matrix(0.1600 0 0 0.1600 703.00 299.10)"/><use href="#r4eac" transform="matrix(0.1600 0 0 0.1600 711.00 299.10)"/></g>
<g fill="#1b91b5"><use href="#r5e38" transform="matrix(0.1600 0 0 0.1600 742.50 308.40)"/><use href="#r5dde" transform="matrix(0.1600 0 0 0.1600 750.50 308.40)"/></g>
<g fill="#1b91b5"><use href="#r76d0" transform="matrix(0.1600 0 0 0.1600 752.50 244.20)"/><use href="#r57ce" transform="matrix(0.1600 0 0 0.1600 760.50 244.20)"/></g>
<g fill="#1b91b5"><use href="#r5357" transform="matrix(0.1600 0 0 0.1600 778.70 302.30)"/><use href="#r901a" transform="matrix(0.1600 0 0 0.1600 786.70 302.30)"/></g>
<g fill="#1b91b5"><use href="#r65e0" transform="matrix(0.1600 0 0 0.1600 754.80 322.10)"/><use href="#r9521" transform="matrix(0.1600 0 0 0.1600 762.80 322.10)"/></g>
<g fill="#1b91b5"><use href="#r82cf" transform="matrix(0.1600 0 0 0.1600 767.30 331.60)"/><use href="#r5dde" transform="matrix(0.1600 0 0 0.1600 775.30 331.60)"/></g>
<g fill="#1b91b5"><use href="#r4e0a" transform="matrix(0.1600 0 0 0.1600 799.10 333.40)"/><use href="#r6d77" transform="matrix(0.1600 0 0 0.1600 807.10 333.40)"/></g>
<g fill="#1b91b5"><use href="#r6e56" transform="matrix(0.1600 0 0 0.1600 750.20 347.40)"/><use href="#r5dde" transform="matrix(0.1600 0 0 0.1600 758.20 347.40)"/></g>
<g fill="#1b91b5"><use href="#r5609" transform="matrix(0.1600 0 0 0.1600 774.10 353.40)"/><use href="#r5174" transform="matrix(0.1600 0 0 0.1600 782.10 353.40)"/></g>
<g fill="#1b91b5"><use href="#r626c" transform="matrix(0.1600 0 0 0.1600 725.90 300.10)"/><use href="#r5dde" transform="matrix(0.1600 0 0 0.1600 733.90 300.10)"/></g>
<g fill="#1b91b5"><use href="#r7709" transform="matrix(0.1600 0 0 0.1600 167.10 381.50)"/><use href="#r5c71" transform="matrix(0.1600 0 0 0.1600 175.10 381.50)"/></g>
<g fill="#1b91b5"><use href="#r8d44" transform="matrix(0.1600 0 0 0.1600 195.50 379.20)"/><use href="#r9633" transform="matrix(0.1600 0 0 0.1600 203.50 379.20)"/></g>
<g fill="#1b91b5"><use href="#r4e50" transform="matrix(0.1600 0 0 0.1600 163.70 403.30)"/><use href="#r5c71" transform="matrix(0.1600 0 0 0.1600 171.70 403.30)"/></g>
<g fill="#1b91b5"><use href="#r5185" transform="matrix(0.1600 0 0 0.1600 210.30 402.00)"/><use href="#r6c5f" transform="matrix(0.1600 0 0 0.1600 218.30 402.00)"/></g>
<g fill="#1b91b5"><use href="#r81ea" transform="matrix(0.1600 0 0 0.1600 201.20 422.00)"/><use href="#r8d21" transform="matrix(0.1600 0 0 0.1600 209.20 422.00)"/></g>
<g fill="#1b91b5"><use href="#r6cf8" transform="matrix(0.1600 0 0 0.1600 224.00 431.10)"/><use href="#r5dde" transform="matrix(0.1600 0 0 0.1600 232.00 431.10)"/></g>
<g fill="#1b91b5"><use href="#r5b9c" transform="matrix(0.1600 0 0 0.1600 195.50 436.80)"/><use href="#r5bbe" transform="matrix(0.1600 0 0 0.1600 203.50 436.80)"/></g>
<g fill="#1b91b5"><use href="#r91cd" transform="matrix(0.1600 0 0 0.1600 272.90 408.80)"/><use href="#r5e86" transform="matrix(0.1600 0 0 0.1600 280.90 408.80)"/></g>
<g fill="#1b91b5"><use href="#r9075" transform="matrix(0.1600 0 0 0.1600 277.40 477.70)"/><use href="#r4e49" transform="matrix(0.1600 0 0 0.1600 285.40 477.70)"/></g>
<g fill="#1b91b5"><use href="#r662d" transform="matrix(0.1600 0 0 0.1600 162.50 492.50)"/><use href="#r901a" transform="matrix(0.1600 0 0 0.1600 170.50 492.50)"/></g>
<g fill="#1b91b5"><use href="#r6bd5" transform="matrix(0.1600 0 0 0.1600 218.30 495.20)"/><use href="#r8282" transform="matrix(0.1600 0 0 0.1600 226.30 495.20)"/></g>
<g fill="#1b91b5"><use href="#r8346" transform="matrix(0.1600 0 0 0.1600 468.30 370.80)"/><use href="#r5dde" transform="matrix(0.1600 0 0 0.1600 476.30 370.80)"/></g>
<g fill="#1b91b5"><use href="#r6b66" transform="matrix(0.1600 0 0 0.1600 535.40 365.10)"/><use href="#r6c49" transform="matrix(0.1600 0 0 0.1600 543.40 365.10)"/></g>
<g fill="#1b91b5"><use href="#r54b8" transform="matrix(0.1600 0 0 0.1600 542.30 391.30)"/><use href="#r5b81" transform="matrix(0.1600 0 0 0.1600 550.30 391.30)"/></g>
<g fill="#1b91b5"><use href="#r5cb3" transform="matrix(0.1600 0 0 0.1600 500.20 410.60)"/><use href="#r9633" transform="matrix(0.1600 0 0 0.1600 508.20 410.60)"/></g>
<g fill="#1b91b5"><use href="#r5f20" transform="matrix(0.1600 0 0 0.1600 401.70 420.80)"/><use href="#r5bb6" transform="matrix(0.1600 0 0 0.1600 409.70 420.80)"/><use href="#r754c" transform="matrix(0.1600 0 0 0.1600 417.70 420.80)"/></g>
<g fill="#1b91b5"><use href="#r5e38" transform="matrix(0.1600 0 0 0.1600 449.00 424.30)"/><use href="#r5fb7" transform="matrix(0.1600 0 0 0.1600 457.00 424.30)"/></g>
<g fill="#1b91b5"><use href="#r76ca" transform="matrix(0.1600 0 0 0.1600 472.90 444.30)"/><use href="#r9633" transform="matrix(0.1600 0 0 0.1600 480.90 444.30)"/></g>
<g fill="#1b91b5"><use href="#r957f" transform="matrix(0.1600 0 0 0.1600 485.40 462.50)"/><use href="#r6c99" transform="matrix(0.1600 0 0 0.1600 493.40 462.50)"/></g>
<g fill="#1b91b5"><use href="#r682a" transform="matrix(0.1600 0 0 0.1600 500.20 473.20)"/><use href="#r6d32" transform="matrix(0.1600 0 0 0.1600 508.20 473.20)"/></g>
<g fill="#1b91b5"><use href="#r5b9c" transform="matrix(0.1600 0 0 0.1600 546.50 473.90)"/><use href="#r6625" transform="matrix(0.1600 0 0 0.1600 554.50 473.90)"/></g>
<g fill="#1b91b5"><use href="#r94dc" transform="matrix(0.1600 0 0 0.1600 359.10 477.10)"/><use href="#r4ec1" transform="matrix(0.1600 0 0 0.1600 367.10 477.10)"/></g>
<g fill="#1b91b5"><use href="#r6000" transform="matrix(0.1600 0 0 0.1600 388.20 483.40)"/><use href="#r5316" transform="matrix(0.1600 0 0 0.1600 396.20 483.40)"/></g>
<g fill="#1b91b5"><use href="#r5a04" transform="matrix(0.1600 0 0 0.1600 459.20 478.90)"/><use href="#r5e95" transform="matrix(0.1600 0 0 0.1600 467.20 478.90)"/></g>
<g fill="#1b91b5"><use href="#r840d" transform="matrix(0.1600 0 0 0.1600 526.30 481.60)"/><use href="#r4e61" transform="matrix(0.1600 0 0 0.1600 534.30 481.60)"/></g>
<g fill="#1b91b5"><use href="#r90b5" transform="matrix(0.1600 0 0 0.1600 441.00 496.60)"/><use href="#r9633" transform="matrix(0.1600 0 0 0.1600 449.00 496.60)"/></g>
<g fill="#1b91b5"><use href="#r8861" transform="matrix(0.1600 0 0 0.1600 480.10 509.60)"/><use href="#r9633" transform="matrix(0.1600 0 0 0.1600 488.10 509.60)"/></g>
<g fill="#1b91b5"><use href="#r9ec4" transform="matrix(0.1600 0 0 0.1600 562.50 367.40)"/><use href="#r5188" transform="matrix(0.1600 0 0 0.1600 570.50 367.40)"/></g>
<g fill="#1b91b5"><use href="#r9ec4" transform="matrix(0.1600 0 0 0.1600 568.20 376.50)"/><use href="#r77f3" transform="matrix(0.1600 0 0 0.1600 576.20 376.50)"/></g>
<g fill="#1b91b5"><use href="#r4e5d" transform="matrix(0.1600 0 0 0.1600 601.20 398.80)"/><use href="#r6c5f" transform="matrix(0.1600 0 0 0.1600 609.20 398.80)"/></g>
<g fill="#1b91b5"><use href="#r9ec4" transform="matrix(0.1600 0 0 0.1600 686.50 397.00)"/><use href="#r5c71" transform="matrix(0.1600 0 0 0.1600 694.50 397.00)"/></g>
<g fill="#1b91b5"><use href="#r666f" transform="matrix(0.1600 0 0 0.1600 641.60 414.70)"/><use href="#r5fb7" transform="matrix(0.1600 0 0 0.1600 649.60 414.70)"/><use href="#r9547" transform="matrix(0.1600 0 0 0.1600 657.60 414.70)"/></g>
<g fill="#1b91b5"><use href="#r8862" transform="matrix(0.1600 0 0 0.1600 705.90 426.50)"/><use href="#r5dde" transform="matrix(0.1600 0 0 0.1600 713.90 426.50)"/></g>
<g fill="#1b91b5"><use href="#r91d1" transform="matrix(0.1600 0 0 0.1600 734.30 422.30)"/><use href="#r534e" transform="matrix(0.1600 0 0 0.1600 742.30 422.30)"/></g>
<g fill="#1b91b5"><use href="#r676d" transform="matrix(0.1600 0 0 0.1600 752.00 385.20)"/><use href="#r5dde" transform="matrix(0.1600 0 0 0.1600 760.00 385.20)"/></g>
<g fill="#1b91b5"><use href="#r5357" transform="matrix(0.1600 0 0 0.1600 600.00 450.40)"/><use href="#r660c" transform="matrix(0.1600 0 0 0.1600 608.00 450.40)"/></g>
<g fill="#1b91b5"><use href="#r4e0a" transform="matrix(0.1600 0 0 0.1600 672.90 448.10)"/><use href="#r9976" transform="matrix(0.1600 0 0 0.1600 680.90 448.10)"/></g>
<g fill="#1b91b5"><use href="#r9e70" transform="matrix(0.1600 0 0 0.1600 641.00 455.70)"/><use href="#r6f6d" transform="matrix(0.1600 0 0 0.1600 649.00 455.70)"/></g>
<g fill="#1b91b5"><use href="#r4e3d" transform="matrix(0.1600 0 0 0.1600 743.40 447.80)"/><use href="#r6c34" transform="matrix(0.1600 0 0 0.1600 751.40 447.80)"/></g>
<g fill="#1b91b5"><use href="#r629a" transform="matrix(0.1600 0 0 0.1600 616.00 468.60)"/><use href="#r5dde" transform="matrix(0.1600 0 0 0.1600 624.00 468.60)"/></g>
<g fill="#1b91b5"><use href="#r65b0" transform="matrix(0.1600 0 0 0.1600 563.70 473.90)"/><use href="#r4f59" transform="matrix(0.1600 0 0 0.1600 571.70 473.90)"/></g>
<g fill="#1b91b5"><use href="#r5357" transform="matrix(0.1600 0 0 0.1600 677.40 491.40)"/><use href="#r5e73" transform="matrix(0.1600 0 0 0.1600 685.40 491.40)"/></g>
<g fill="#1b91b5"><use href="#r5409" transform="matrix(0.1600 0 0 0.1600 567.00 502.10)"/><use href="#r5b89" transform="matrix(0.1600 0 0 0.1600 575.00 502.10)"/></g>
<g fill="#1b91b5"><use href="#r5b81" transform="matrix(0.1600 0 0 0.1600 802.50 390.40)"/><use href="#r6ce2" transform="matrix(0.1600 0 0 0.1600 810.50 390.40)"/></g>
<g fill="#1b91b5"><use href="#r821f" transform="matrix(0.1600 0 0 0.1600 825.30 385.90)"/><use href="#r5c71" transform="matrix(0.1600 0 0 0.1600 833.30 385.90)"/></g>
<g fill="#1b91b5"><use href="#r53f0" transform="matrix(0.1600 0 0 0.1600 797.50 440.50)"/><use href="#r5dde" transform="matrix(0.1600 0 0 0.1600 805.50 440.50)"/></g>
<g fill="#1b91b5"><use href="#r6e29" transform="matrix(0.1600 0 0 0.1600 771.80 467.10)"/><use href="#r5dde" transform="matrix(0.1600 0 0 0.1600 779.80 467.10)"/></g>
<g fill="#1b91b5"><use href="#r516d" transform="matrix(0.1600 0 0 0.1600 198.40 522.90)"/><use href="#r76d8" transform="matrix(0.1600 0 0 0.1600 206.40 522.90)"/><use href="#r6c34" transform="matrix(0.1600 0 0 0.1600 214.40 522.90)"/></g>
<g fill="#1b91b5"><use href="#r8d35" transform="matrix(0.1600 0 0 0.1600 267.00 521.30)"/><use href="#r9633" transform="matrix(0.1600 0 0 0.1600 275.00 521.30)"/></g>
<g fill="#1b91b5"><use href="#r5b89" transform="matrix(0.1600 0 0 0.1600 242.50 536.30)"/><use href="#r987a" transform="matrix(0.1600 0 0 0.1600 250.50 536.30)"/></g>
<g fill="#1b91b5"><use href="#r66f2" transform="matrix(0.1600 0 0 0.1600 165.60 566.80)"/><use href="#r9756" transform="matrix(0.1600 0 0 0.1600 173.60 566.80)"/></g>
<g fill="#1b91b5"><use href="#r6cb3" transform="matrix(0.1600 0 0 0.1600 337.30 606.50)"/><use href="#r6c60" transform="matrix(0.1600 0 0 0.1600 345.30 606.50)"/></g>
<g fill="#1b91b5"><use href="#r767e" transform="matrix(0.1600 0 0 0.1600 267.00 628.80)"/><use href="#r8272" transform="matrix(0.1600 0 0 0.1600 275.00 628.80)"/></g>
<g fill="#1b91b5"><use href="#r6c38" transform="matrix(0.1600 0 0 0.1600 445.90 530.30)"/><use href="#r5dde" transform="matrix(0.1600 0 0 0.1600 453.90 530.30)"/></g>
<g fill="#1b91b5"><use href="#r90f4" transform="matrix(0.1600 0 0 0.1600 496.00 555.70)"/><use href="#r5dde" transform="matrix(0.1600 0 0 0.1600 504.00 555.70)"/></g>
<g fill="#1b91b5"><use href="#r6842" transform="matrix(0.1600 0 0 0.1600 394.60 576.40)"/><use href="#r6797" transform="matrix(0.1600 0 0 0.1600 402.60 576.40)"/></g>
<g fill="#1b91b5"><use href="#r97f6" transform="matrix(0.1600 0 0 0.1600 517.20 593.10)"/><use href="#r5173" transform="matrix(0.1600 0 0 0.1600 525.20 593.10)"/></g>
<g fill="#1b91b5"><use href="#r67f3" transform="matrix(0.1600 0 0 0.1600 367.40 612.10)"/><use href="#r5dde" transform="matrix(0.1600 0 0 0.1600 375.40 612.10)"/></g>
<g fill="#1b91b5"><use href="#r8d3a" transform="matrix(0.1600 0 0 0.1600 444.80 609.90)"/><use href="#r5dde" transform="matrix(0.1600 0 0 0.1600 452.80 609.90)"/></g>
<g fill="#1b91b5"><use href="#r6765" transform="matrix(0.1600 0 0 0.1600 360.00 635.50)"/><use href="#r5bbe" transform="matrix(0.1600 0 0 0.1600 368.00 635.50)"/></g>
<g fill="#1b91b5"><use href="#r6e05" transform="matrix(0.1600 0 0 0.1600 497.20 637.30)"/><use href="#r8fdc" transform="matrix(0.1600 0 0 0.1600 505.20 637.30)"/></g>
<g fill="#1b91b5"><use href="#r68a7" transform="matrix(0.1600 0 0 0.1600 433.60 645.50)"/><use href="#r5dde" transform="matrix(0.1600 0 0 0.1600 441.60 645.50)"/></g>
<g fill="#1b91b5"><use href="#r8d35" transform="matrix(0.1600 0 0 0.1600 373.40 658.90)"/><use href="#r6e2f" transform="matrix(0.1600 0 0 0.1600 381.40 658.90)"/></g>
<g fill="#1b91b5"><use href="#r8087" transform="matrix(0.1600 0 0 0.1600 476.00 661.10)"/><use href="#r5e86" transform="matrix(0.1600 0 0 0.1600 484.00 661.10)"/></g>
<g fill="#1b91b5"><use href="#r5e7f" transform="matrix(0.1600 0 0 0.1600 505.00 657.80)"/><use href="#r5dde" transform="matrix(0.1600 0 0 0.1600 513.00 657.80)"/></g>
<g fill="#1b91b5"><use href="#r4e1c" transform="matrix(0.1600 0 0 0.1600 522.80 662.10)"/><use href="#r839e" transform="matrix(0.1600 0 0 0.1600 530.80 662.10)"/></g>
<g fill="#1b91b5"><use href="#r60e0" transform="matrix(0.1600 0 0 0.1600 544.00 658.90)"/><use href="#r5dde" transform="matrix(0.1600 0 0 0.1600 552.00 658.90)"/></g>
<g fill="#1b91b5"><use href="#r5b81" transform="matrix(0.1600 0 0 0.1600 730.60 519.60)"/><use href="#r5fb7" transform="matrix(0.1600 0 0 0.1600 738.60 519.60)"/></g>
<g fill="#1b91b5"><use href="#r4e09" transform="matrix(0.1600 0 0 0.1600 662.60 535.60)"/><use href="#r660e" transform="matrix(0.1600 0 0 0.1600 670.60 535.60)"/></g>
<g fill="#1b91b5"><use href="#r8d63" transform="matrix(0.1600 0 0 0.1600 564.50 553.00)"/><use href="#r5dde" transform="matrix(0.1600 0 0 0.1600 572.50 553.00)"/></g>
<g fill="#1b91b5"><use href="#r798f" transform="matrix(0.1600 0 0 0.1600 712.80 549.00)"/><use href="#r5dde" transform="matrix(0.1600 0 0 0.1600 720.80 549.00)"/></g>
<g fill="#1b91b5"><use href="#r8386" transform="matrix(0.1600 0 0 0.1600 710.50 568.10)"/><use href="#r7530" transform="matrix(0.1600 0 0 0.1600 718.50 568.10)"/></g>
<g fill="#1b91b5"><use href="#r9f99" transform="matrix(0.1600 0 0 0.1600 639.20 583.10)"/><use href="#r5ca9" transform="matrix(0.1600 0 0 0.1600 647.20 583.10)"/></g>
<g fill="#1b91b5"><use href="#r6cc9" transform="matrix(0.1600 0 0 0.1600 699.00 590.90)"/><use href="#r5dde" transform="matrix(0.1600 0 0 0.1600 707.00 590.90)"/></g>
<g fill="#1b91b5"><use href="#r6f33" transform="matrix(0.1600 0 0 0.1600 663.00 605.40)"/><use href="#r5dde" transform="matrix(0.1600 0 0 0.1600 671.00 605.40)"/></g>
<g fill="#1b91b5"><use href="#r53a6" transform="matrix(0.1600 0 0 0.1600 678.00 605.40)"/><use href="#r95e8" transform="matrix(0.1600 0 0 0.1600 686.00 605.40)"/></g>
<g fill="#1b91b5"><use href="#r6885" transform="matrix(0.1600 0 0 0.1600 606.90 613.20)"/><use href="#r5dde" transform="matrix(0.1600 0 0 0.1600 614.90 613.20)"/></g>
<g fill="#1b91b5"><use href="#r6cb3" transform="matrix(0.1600 0 0 0.1600 556.70 635.50)"/><use href="#r6e90" transform="matrix(0.1600 0 0 0.1600 564.70 635.50)"/></g>
<g fill="#1b91b5"><use href="#r63ed" transform="matrix(0.1600 0 0 0.1600 608.40 648.40)"/><use href="#r9633" transform="matrix(0.1600 0 0 0.1600 616.40 648.40)"/></g>
<g fill="#1b91b5"><use href="#r6f6e" transform="matrix(0.1600 0 0 0.1600 633.00 644.00)"/><use href="#r5dde" transform="matrix(0.1600 0 0 0.1600 641.00 644.00)"/></g>
<g fill="#1b91b5"><use href="#r6c55" transform="matrix(0.1600 0 0 0.1600 627.00 660.10)"/><use href="#r5934" transform="matrix(0.1600 0 0 0.1600 635.00 660.10)"/></g>
<g fill="#1b91b5"><use href="#r53f0" transform="matrix(0.1600 0 0 0.1600 798.00 584.60)"/><use href="#r5317" transform="matrix(0.1600 0 0 0.1600 806.00 584.60)"/></g>
<g fill="#1b91b5"><use href="#r6843" transform="matrix(0.1600 0 0 0.1600 785.00 593.40)"/><use href="#r56ed" transform="matrix(0.1600 0 0 0.1600 793.00 593.40)"/></g>
<g fill="#1b91b5"><use href="#r53f0" transform="matrix(0.1600 0 0 0.1600 776.50 632.60)"/><use href="#r4e2d" transform="matrix(0.1600 0 0 0.1600 784.50 632.60)"/></g>
<g fill="#1b91b5"><use href="#r6069" transform="matrix(0.1600 0 0 0.1600 336.60 378.80)"/><use href="#r65bd" transform="matrix(0.1600 0 0 0.1600 344.45 378.80)"/><use href="#r571f" transform="matrix(0.1600 0 0 0.1600 352.30 378.80)"/><use href="#r5bb6" transform="matrix(0.1600 0 0 0.1600 360.15 378.80)"/><use href="#r65cf" transform="matrix(0.1600 0 0 0.1600 368.00 378.80)"/><use href="#r82d7" transform="matrix(0.1600 0 0 0.1600 375.85 378.80)"/><use href="#r65cf" transform="matrix(0.1600 0 0 0.1600 383.70 378.80)"/><use href="#r81ea" transform="matrix(0.1600 0 0 0.1600 391.55 378.80)"/><use href="#r6cbb" transform="matrix(0.1600 0 0 0.1600 399.40 378.80)"/><use href="#r5dde" transform="matrix(0.1600 0 0 0.1600 407.25 378.80)"/></g>
<g fill="#1b91b5"><use href="#r6e58" transform="matrix(0.1600 0 0 0.1600 344.60 433.40)"/><use href="#r897f" transform="matrix(0.1600 0 0 0.1600 352.45 433.40)"/><use href="#r571f" transform="matrix(0.1600 0 0 0.1600 360.30 433.40)"/><use href="#r5bb6" transform="matrix(0.1600 0 0 0.1600 368.15 433.40)"/><use href="#r65cf" transform="matrix(0.1600 0 0 0.1600 376.00 433.40)"/><use href="#r82d7" transform="matrix(0.1600 0 0 0.1600 383.85 433.40)"/><use href="#r65cf" transform="matrix(0.1600 0 0 0.1600 391.70 433.40)"/><use href="#r81ea" transform="matrix(0.1600 0 0 0.1600 399.55 433.40)"/><use href="#r6cbb" transform="matrix(0.1600 0 0 0.1600 407.40 433.40)"/><use href="#r5dde" transform="matrix(0.1600 0 0 0.1600 415.25 433.40)"/></g>
<g fill="#1b91b5"><use href="#r9ed4" transform="matrix(0.1600 0 0 0.1600 300.70 525.10)"/><use href="#r4e1c" transform="matrix(0.1600 0 0 0.1600 308.55 525.10)"/><use href="#r5357" transform="matrix(0.1600 0 0 0.1600 316.40 525.10)"/><use href="#r82d7" transform="matrix(0.1600 0 0 0.1600 324.25 525.10)"/><use href="#r65cf" transform="matrix(0.1600 0 0 0.1600 332.10 525.10)"/><use href="#r4f97" transform="matrix(0.1600 0 0 0.1600 339.95 525.10)"/><use href="#r65cf" transform="matrix(0.1600 0 0 0.1600 347.80 525.10)"/><use href="#r81ea" transform="matrix(0.1600 0 0 0.1600 355.65 525.10)"/><use href="#r6cbb" transform="matrix(0.1600 0 0 0.1600 363.50 525.10)"/><use href="#r5dde" transform="matrix(0.1600 0 0 0.1600 371.35 525.10)"/></g>
<g fill="#1b91b5"><use href="#r9ed4" transform="matrix(0.1600 0 0 0.1600 249.40 548.50)"/><use href="#r5357" transform="matrix(0.1600 0 0 0.1600 257.25 548.50)"/><use href="#r5e03" transform="matrix(0.1600 0 0 0.1600 265.10 548.50)"/><use href="#r4f9d" transform="matrix(0.1600 0 0 0.1600 272.95 548.50)"/><use href="#r65cf" transform="matrix(0.1600 0 0 0.1600 280.80 548.50)"/><use href="#r82d7" transform="matrix(0.1600 0 0 0.1600 288.65 548.50)"/><use href="#r65cf" transform="matrix(0.1600 0 0 0.1600 296.50 548.50)"/><use href="#r81ea" transform="matrix(0.1600 0 0 0.1600 304.35 548.50)"/><use href="#r6cbb" transform="matrix(0.1600 0 0 0.1600 312.20 548.50)"/><use href="#r5dde" transform="matrix(0.1600 0 0 0.1600 320.05 548.50)"/></g>
<g fill="#1b91b5"><use href="#r9ed4" transform="matrix(0.1600 0 0 0.1600 189.20 574.10)"/><use href="#r897f" transform="matrix(0.1600 0 0 0.1600 197.05 574.10)"/><use href="#r5357" transform="matrix(0.1600 0 0 0.1600 204.90 574.10)"/><use href="#r5e03" transform="matrix(0.1600 0 0 0.1600 212.75 574.10)"/><use href="#r4f9d" transform="matrix(0.1600 0 0 0.1600 220.60 574.10)"/><use href="#r65cf" transform="matrix(0.1600 0 0 0.1600 228.45 574.10)"/><use href="#r82d7" transform="matrix(0.1600 0 0 0.1600 236.30 574.10)"/><use href="#r65cf" transform="matrix(0.1600 0 0 0.1600 244.15 574.10)"/><use href="#r81ea" transform="matrix(0.1600 0 0 0.1600 252.00 574.10)"/><use href="#r6cbb" transform="matrix(0.1600 0 0 0.1600 259.85 574.10)"/><use href="#r5dde" transform="matrix(0.1600 0 0 0.1600 267.70 574.10)"/></g>
<g fill="#1b91b5"><use href="#r6587" transform="matrix(0.1600 0 0 0.1600 167.00 632.80)"/><use href="#r5c71" transform="matrix(0.1600 0 0 0.1600 174.85 632.80)"/><use href="#r58ee" transform="matrix(0.1600 0 0 0.1600 182.70 632.80)"/><use href="#r65cf" transform="matrix(0.1600 0 0 0.1600 190.55 632.80)"/><use href="#r82d7" transform="matrix(0.1600 0 0 0.1600 198.40 632.80)"/><use href="#r65cf" transform="matrix(0.1600 0 0 0.1600 206.25 632.80)"/><use href="#r81ea" transform="matrix(0.1600 0 0 0.1600 214.10 632.80)"/><use href="#r6cbb" transform="matrix(0.1600 0 0 0.1600 221.95 632.80)"/><use href="#r5dde" transform="matrix(0.1600 0 0 0.1600 229.80 632.80)"/></g>
<g fill="#2a3142"><use href="#r9ec4" transform="matrix(0.1700 0 0 0.1700 844.50 173.40)"/><use href="#r6d77" transform="matrix(0.1700 0 0 0.1700 853.00 173.40)"/></g>
<g fill="#2a3142"><use href="#r4e1c" transform="matrix(0.1700 0 0 0.1700 888.50 474.00)"/><use href="#r6d77" transform="matrix(0.1700 0 0 0.1700 897.00 474.00)"/></g>
<g fill="#2a3142"><use href="#r676d" transform="matrix(0.1700 0 0 0.1700 808.05 367.30)"/><use href="#r5dde" transform="matrix(0.1700 0 0 0.1700 816.55 367.30)"/><use href="#r6e7e" transform="matrix(0.1700 0 0 0.1700 825.05 367.30)"/></g>
<g fill="#2a3142"><use href="#r53f0" transform="matrix(0.1700 0 0 0.1700 708.20 625.10)"/><use href="#r6e7e" transform="matrix(0.1700 0 0 0.1700 716.70 625.10)"/><use href="#r6d77" transform="matrix(0.1700 0 0 0.1700 725.20 625.10)"/><use href="#r5ce1" transform="matrix(0.1700 0 0 0.1700 733.70 625.10)"/></g>
<g fill="#eef0f2" stroke="#c8ccd2" stroke-width="5"><use href="#b9493" transform="matrix(0.1240 0 0 0.1240 869.70 546.50)"/><use href="#b9c7c" transform="matrix(0.1240 0 0 0.1240 875.90 546.50)"/><use href="#b5c9b" transform="matrix(0.1240 0 0 0.1240 882.10 546.50)"/></g>
<ellipse cx="555.6" cy="126.8" rx="15" ry="7.9" fill="none" stroke="#1e9cc8" stroke-width="1.25"/>
<path d="M548.0,114.0 A7.6,7.6 0 1 1 563.2,114.0 C563.2,117.0 559.6,121.0 555.6,127.3 C551.6,121.0 548.0,117.0 548.0,114.0Z" fill="url(#pg)"/>
<circle cx="555.6" cy="114.0" r="2.7" fill="#0d121a"/>
<ellipse cx="658.5" cy="326.0" rx="15" ry="7.9" fill="none" stroke="#1e9cc8" stroke-width="1.25"/>
<path d="M650.9,313.2 A7.6,7.6 0 1 1 666.1,313.2 C666.1,316.2 662.5,320.2 658.5,326.5 C654.5,320.2 650.9,316.2 650.9,313.2Z" fill="url(#pg)"/>
<circle cx="658.5" cy="313.2" r="2.7" fill="#0d121a"/>
<ellipse cx="711.2" cy="311.9" rx="15" ry="7.9" fill="none" stroke="#1e9cc8" stroke-width="1.25"/>
<path d="M703.6,299.1 A7.6,7.6 0 1 1 718.8,299.1 C718.8,302.1 715.2,306.1 711.2,312.4 C707.2,306.1 703.6,302.1 703.6,299.1Z" fill="url(#pg)"/>
<circle cx="711.2" cy="299.1" r="2.7" fill="#0d121a"/>
<ellipse cx="733.7" cy="298.8" rx="15" ry="7.9" fill="none" stroke="#1e9cc8" stroke-width="1.25"/>
<path d="M726.1,286.0 A7.6,7.6 0 1 1 741.3,286.0 C741.3,289.0 737.7,293.0 733.7,299.3 C729.7,293.0 726.1,289.0 726.1,286.0Z" fill="url(#pg)"/>
<circle cx="733.7" cy="286.0" r="2.7" fill="#0d121a"/>
<ellipse cx="762.1" cy="321.1" rx="15" ry="7.9" fill="none" stroke="#1e9cc8" stroke-width="1.25"/>
<path d="M754.5,308.3 A7.6,7.6 0 1 1 769.7,308.3 C769.7,311.3 766.1,315.3 762.1,321.6 C758.1,315.3 754.5,311.3 754.5,308.3Z" fill="url(#pg)"/>
<circle cx="762.1" cy="308.3" r="2.7" fill="#0d121a"/>
<ellipse cx="523.8" cy="359.8" rx="15" ry="7.9" fill="none" stroke="#1e9cc8" stroke-width="1.25"/>
<path d="M516.2,347.0 A7.6,7.6 0 1 1 531.4,347.0 C531.4,350.0 527.8,354.0 523.8,360.3 C519.8,354.0 516.2,350.0 516.2,347.0Z" fill="url(#pg)"/>
<circle cx="523.8" cy="347.0" r="2.7" fill="#0d121a"/>
<ellipse cx="607.9" cy="452.6" rx="15" ry="7.9" fill="none" stroke="#1e9cc8" stroke-width="1.25"/>
<path d="M600.3,439.8 A7.6,7.6 0 1 1 615.5,439.8 C615.5,442.8 611.9,446.8 607.9,453.1 C603.9,446.8 600.3,442.8 600.3,439.8Z" fill="url(#pg)"/>
<circle cx="607.9" cy="439.8" r="2.7" fill="#0d121a"/>
</svg>
</div>
<div class="abs" style="left:158px;top:0;width:3px;height:659px;background:linear-gradient(to right,rgba(0,0,0,0.3),rgba(0,0,0,0))"></div>
<div class="panel" style="left:910px;top:82px;width:344px;height:71px">
<div class="cn" style="left:-1px;top:-1px;border-left-width:1px;border-top-width:1px"></div><div class="cn" style="right:-1px;top:-1px;border-right-width:1px;border-top-width:1px"></div><div class="cn" style="left:-1px;bottom:-1px;border-left-width:1px;border-bottom-width:1px"></div><div class="cn" style="right:-1px;bottom:-1px;border-right-width:1px;border-bottom-width:1px"></div>
<svg class="abs" style="left:13px;top:36.5px" width="18" height="22" viewBox="0 0 18 22"><defs><linearGradient id="g1" x1="0" y1="0" x2="0" y2="1"><stop offset="0" stop-color="#1a68f0"/><stop offset="1" stop-color="#1c92f2"/></linearGradient></defs><path d="M8.5 0.4L17 5.7L8.5 11.2L0 5.7z" fill="url(#g1)"/><path d="M0 9.3L8.5 13.9L17 9.3V11.9L8.5 16.5L0 11.9z" fill="#1ba8f2"/><path d="M0 13.8L8.5 18.4L17 13.8V16.2L8.5 20.8L0 16.2z" fill="#1ec6f2"/></svg>
<div class="abs" style="left:122.5px;top:34px;color:#8fbadb;font-size:20.5px;line-height:22px;transform:scaleX(0.88);transform-origin:0 0">51</div>
<svg class="abs" style="left:148px;top:43px" width="11" height="9" viewBox="0 0 11 9"><path d="M0.8 5L5.5 0.8L10.2 5M5.5 0.8V9" fill="none" stroke="#4f6679" stroke-width="0.9"/></svg>
<div class="abs" style="left:171px;top:9px;width:1px;height:19px;background:#2a5a80"></div>
<div class="abs" style="left:171px;top:33px;width:1px;height:1px;background:#2a5a80"></div>
<div class="abs" style="left:171px;top:37px;width:1px;height:25px;background:#2a5a80"></div>
<svg class="abs" style="left:184px;top:36.5px" width="20" height="22" viewBox="0 0 20 22"><defs><linearGradient id="g2" x1="0" y1="0" x2="0" y2="1"><stop offset="0" stop-color="#1a6af0"/><stop offset="1" stop-color="#1ed0f2"/></linearGradient></defs><path d="M1.8 1.6Q1.8 0.6 2.8 0.6H12Q13 0.6 13 1.6V17.6H14V20.5H0.3V17.6H1.8z" fill="url(#g2)"/><rect x="4.5" y="3" width="5.5" height="5.5" fill="#072e4c"/><path d="M7.6 11.5L5 14.6H7L5.9 17L9 13.6H7.2z" fill="#072e4c"/><path d="M13 9H15.5V17.8Q15.5 19.2 16.5 19.2Q17.5 19.2 17.5 17.8V5.8L15.6 3.6" fill="none" stroke="url(#g2)" stroke-width="1.2"/></svg>
<div class="abs" style="left:283.5px;top:34px;color:#8fbadb;font-size:20.5px;line-height:22px;transform:scaleX(0.88);transform-origin:0 0">608</div>
<svg class="abs" style="left:319px;top:43px" width="11" height="9" viewBox="0 0 11 9"><path d="M0.8 5L5.5 0.8L10.2 5M5.5 0.8V9" fill="none" stroke="#4f6679" stroke-width="0.9"/></svg>
</div>
<div class="panel" style="left:910px;top:166px;width:344px;height:477px">
<div class="cn" style="left:-1px;top:-1px;border-left-width:1px;border-top-width:1px"></div><div class="cn" style="right:-1px;top:-1px;border-right-width:1px;border-top-width:1px"></div><div class="cn" style="left:-1px;bottom:-1px;border-left-width:1px;border-bottom-width:1px"></div><div class="cn" style="right:-1px;bottom:-1px;border-right-width:1px;border-bottom-width:1px"></div>
<div class="abs" style="left:10px;top:10px;width:322px;height:22px;background:#0a4672"></div>
<svg class="abs" style="left:316px;top:18px" width="8" height="5" viewBox="0 0 8 5"><polyline points="0.5,0.5 3.8,4 7.2,0.5" fill="none" stroke="#7c98b2" stroke-width="0.9"/></svg>
<div class="abs" style="left:10px;top:35px;width:322px;height:21px;background:#0a4672"></div>
<svg class="abs" style="left:315px;top:41px" width="9" height="9" viewBox="0 0 9 9"><circle cx="3.7" cy="3.7" r="3" fill="none" stroke="#8aa2b8" stroke-width="1"/><path d="M5.9 5.9L8.5 8.5" stroke="#8aa2b8" stroke-width="1.1"/></svg>
<div class="abs" style="left:10px;top:105.4px;width:322px;height:1px;background:#163c5c"></div><div class="abs" style="left:10px;top:152.2px;width:322px;height:1px;background:#163c5c"></div><div class="abs" style="left:10px;top:199.1px;width:322px;height:1px;background:#163c5c"></div><div class="abs" style="left:10px;top:245.9px;width:322px;height:1px;background:#163c5c"></div><div class="abs" style="left:10px;top:292.8px;width:322px;height:1px;background:#163c5c"></div><div class="abs" style="left:10px;top:339.6px;width:322px;height:1px;background:#163c5c"></div><div class="abs" style="left:10px;top:386.5px;width:322px;height:1px;background:#163c5c"></div><div class="abs" style="left:10px;top:433.3px;width:322px;height:1px;background:#163c5c"></div>
<svg class="abs" style="left:106px;top:449px" width="6" height="8" viewBox="0 0 6 8"><polyline points="4.5,0.5 1.2,4 4.5,7.5" fill="none" stroke="#6f8599" stroke-width="0.9"/></svg><div class="abs" style="left:116px;top:445px;width:17px;height:16px;border:1px solid #1a7fd0;border-radius:2px;color:#2290e8;font-size:9.5px;line-height:14px;text-align:center">1</div><div class="abs" style="left:136px;top:447px;width:8px;color:#aebccb;font-size:9.5px;line-height:12px;text-align:center">2</div><div class="abs" style="left:152px;top:447px;width:8px;color:#aebccb;font-size:9.5px;line-height:12px;text-align:center">3</div><div class="abs" style="left:168px;top:447px;width:8px;color:#aebccb;font-size:9.5px;line-height:12px;text-align:center">4</div><div class="abs" style="left:184px;top:447px;width:8px;color:#aebccb;font-size:9.5px;line-height:12px;text-align:center">5</div><div class="abs" style="left:199px;top:447px;width:8px;color:#aebccb;font-size:9.5px;line-height:12px;text-align:center">6</div><div class="abs" style="left:215px;top:447px;width:8px;color:#aebccb;font-size:9.5px;line-height:12px;text-align:center">7</div><svg class="abs" style="left:233px;top:449px" width="6" height="8" viewBox="0 0 6 8"><polyline points="1.5,0.5 4.8,4 1.5,7.5" fill="none" stroke="#6f8599" stroke-width="0.9"/></svg>
</div>
<svg width="1267" height="659" style="position:absolute;left:0;top:0;pointer-events:none">
<g fill="#4d6d8a" stroke="#4d6d8a" stroke-width="6"><use href="#b8d64" transform="matrix(0.1240 0 0 0.1240 909.70 567.50)"/><use href="#b5c3e" transform="matrix(0.1240 0 0 0.1240 915.90 567.50)"/><use href="#b5c7f" transform="matrix(0.1240 0 0 0.1240 922.10 567.50)"/></g>
<g fill="#eef2f6"><use href="#b5b89" transform="matrix(0.1840 0 0 0.1840 44.00 39.20)"/><use href="#b79d1" transform="matrix(0.1840 0 0 0.1840 59.50 39.20)"/><use href="#b745e" transform="matrix(0.1840 0 0 0.1840 75.00 39.20)"/><use href="#b7535" transform="matrix(0.1840 0 0 0.1840 90.50 39.20)"/><use href="#b6c14" transform="matrix(0.1840 0 0 0.1840 106.00 39.20)"/></g>
<g fill="#e4eaf0"><use href="#m9996" transform="matrix(0.1880 0 0 0.1880 34.00 70.50)"/><use href="#m9875" transform="matrix(0.1880 0 0 0.1880 43.40 70.50)"/></g>
<g fill="#ffffff"><use href="#m5b9e" transform="matrix(0.1880 0 0 0.1880 34.00 102.50)"/><use href="#m65f6" transform="matrix(0.1880 0 0 0.1880 43.40 102.50)"/><use href="#m76d1" transform="matrix(0.1880 0 0 0.1880 52.80 102.50)"/><use href="#m63a7" transform="matrix(0.1880 0 0 0.1880 62.20 102.50)"/></g>
<g fill="#e4eaf0"><use href="#m7535" transform="matrix(0.1880 0 0 0.1880 34.00 133.50)"/><use href="#m6c14" transform="matrix(0.1880 0 0 0.1880 43.40 133.50)"/><use href="#m706b" transform="matrix(0.1880 0 0 0.1880 52.80 133.50)"/><use href="#m707e" transform="matrix(0.1880 0 0 0.1880 62.20 133.50)"/></g>
<g fill="#e4eaf0"><use href="#m4ea4" transform="matrix(0.1880 0 0 0.1880 33.00 165.50)"/><use href="#m6613" transform="matrix(0.1880 0 0 0.1880 42.40 165.50)"/><use href="#m7ba1" transform="matrix(0.1880 0 0 0.1880 51.80 165.50)"/><use href="#m7406" transform="matrix(0.1880 0 0 0.1880 61.20 165.50)"/></g>
<g fill="#e4eaf0"><use href="#m6545" transform="matrix(0.1880 0 0 0.1880 33.00 197.50)"/><use href="#m969c" transform="matrix(0.1880 0 0 0.1880 42.40 197.50)"/><use href="#m7ba1" transform="matrix(0.1880 0 0 0.1880 51.80 197.50)"/><use href="#m7406" transform="matrix(0.1880 0 0 0.1880 61.20 197.50)"/></g>
<g fill="#e4eaf0"><use href="#m7edf" transform="matrix(0.1880 0 0 0.1880 33.00 229.50)"/><use href="#m8ba1" transform="matrix(0.1880 0 0 0.1880 42.40 229.50)"/><use href="#m5206" transform="matrix(0.1880 0 0 0.1880 51.80 229.50)"/><use href="#m6790" transform="matrix(0.1880 0 0 0.1880 61.20 229.50)"/></g>
<g fill="#e4eaf0"><use href="#m62a5" transform="matrix(0.1880 0 0 0.1880 35.00 261.50)"/><use href="#m544a" transform="matrix(0.1880 0 0 0.1880 44.40 261.50)"/><use href="#m5206" transform="matrix(0.1880 0 0 0.1880 53.80 261.50)"/><use href="#m6790" transform="matrix(0.1880 0 0 0.1880 63.20 261.50)"/></g>
<g fill="#e4eaf0"><use href="#m9690" transform="matrix(0.1880 0 0 0.1880 32.00 294.50)"/><use href="#m60a3" transform="matrix(0.1880 0 0 0.1880 41.40 294.50)"/><use href="#m7ba1" transform="matrix(0.1880 0 0 0.1880 50.80 294.50)"/><use href="#m7406" transform="matrix(0.1880 0 0 0.1880 60.20 294.50)"/></g>
<g fill="#e4eaf0"><use href="#m65" transform="matrix(0.1880 0 0 0.1880 32.00 326.50)"/><use href="#m73" transform="matrix(0.1880 0 0 0.1880 37.32 326.50)"/><use href="#m69" transform="matrix(0.1880 0 0 0.1880 41.83 326.50)"/><use href="#m6d" transform="matrix(0.1880 0 0 0.1880 44.54 326.50)"/><use href="#m5361" transform="matrix(0.1880 0 0 0.1880 53.40 326.50)"/><use href="#m7ba1" transform="matrix(0.1880 0 0 0.1880 62.80 326.50)"/><use href="#m7406" transform="matrix(0.1880 0 0 0.1880 72.20 326.50)"/></g>
<g fill="#f2f4f7"><use href="#b5145" transform="matrix(0.2880 0 0 0.2880 203.00 26.90)"/><use href="#b7535" transform="matrix(0.2880 0 0 0.2880 217.40 26.90)"/><use href="#b6869" transform="matrix(0.2880 0 0 0.2880 231.80 26.90)"/><use href="#b6536" transform="matrix(0.2880 0 0 0.2880 246.20 26.90)"/><use href="#b8d39" transform="matrix(0.2880 0 0 0.2880 260.60 26.90)"/><use href="#b4e91" transform="matrix(0.2880 0 0 0.2880 275.00 26.90)"/><use href="#b5e73" transform="matrix(0.2880 0 0 0.2880 289.40 26.90)"/><use href="#b53f0" transform="matrix(0.2880 0 0 0.2880 303.80 26.90)"/></g>
<g fill="#a3acb9"><use href="#m9996" transform="matrix(0.1920 0 0 0.1920 185.50 59.50)"/><use href="#m9875" transform="matrix(0.1920 0 0 0.1920 195.10 59.50)"/></g>
<g fill="#e6ebf0"><use href="#m5b9e" transform="matrix(0.1920 0 0 0.1920 223.30 59.50)"/><use href="#m65f6" transform="matrix(0.1920 0 0 0.1920 232.90 59.50)"/><use href="#m76d1" transform="matrix(0.1920 0 0 0.1920 242.50 59.50)"/><use href="#m63a7" transform="matrix(0.1920 0 0 0.1920 252.10 59.50)"/></g>
<g fill="#7d7080"><use href="#r39" transform="matrix(0.1700 0 0 0.1700 1035.00 18.80)"/><use href="#r39" transform="matrix(0.1700 0 0 0.1700 1039.72 18.80)"/><use href="#r2b" transform="matrix(0.1700 0 0 0.1700 1044.43 18.80)"/></g>
<g fill="#e4e8ee"><use href="#r41" transform="matrix(0.1800 0 0 0.1800 1063.00 25.00)"/><use href="#r50" transform="matrix(0.1800 0 0 0.1800 1068.47 25.00)"/><use href="#r50" transform="matrix(0.1800 0 0 0.1800 1074.17 25.00)"/><use href="#r4e0b" transform="matrix(0.1800 0 0 0.1800 1079.87 25.00)"/><use href="#r8f7d" transform="matrix(0.1800 0 0 0.1800 1088.87 25.00)"/></g>
<g fill="#dfe4ea"><use href="#r61" transform="matrix(0.1820 0 0 0.1820 1138.00 24.80)"/><use href="#r63" transform="matrix(0.1820 0 0 0.1820 1143.12 24.80)"/><use href="#r72" transform="matrix(0.1820 0 0 0.1820 1147.76 24.80)"/><use href="#r65" transform="matrix(0.1820 0 0 0.1820 1151.30 24.80)"/><use href="#r6c" transform="matrix(0.1820 0 0 0.1820 1156.34 24.80)"/></g>
<g fill="#c9cfd8"><use href="#r45" transform="matrix(0.1820 0 0 0.1820 1175.00 24.80)"/><use href="#r6e" transform="matrix(0.1820 0 0 0.1820 1180.36 24.80)"/><use href="#r67" transform="matrix(0.1820 0 0 0.1820 1185.91 24.80)"/><use href="#r6c" transform="matrix(0.1820 0 0 0.1820 1191.04 24.80)"/><use href="#r69" transform="matrix(0.1820 0 0 0.1820 1193.63 24.80)"/><use href="#r73" transform="matrix(0.1820 0 0 0.1820 1196.13 24.80)"/><use href="#r68" transform="matrix(0.1820 0 0 0.1820 1200.39 24.80)"/></g>
<g fill="#1d8fe8"><use href="#r5207" transform="matrix(0.1820 0 0 0.1820 1214.30 25.00)"/><use href="#r6362" transform="matrix(0.1820 0 0 0.1820 1223.40 25.00)"/><use href="#r4e3b" transform="matrix(0.1820 0 0 0.1820 1232.50 25.00)"/><use href="#r9898" transform="matrix(0.1820 0 0 0.1820 1241.60 25.00)"/></g>
<g fill="#c3cbd4"><use href="#r5145" transform="matrix(0.1840 0 0 0.1840 924.00 101.00)"/><use href="#r7535" transform="matrix(0.1840 0 0 0.1840 933.20 101.00)"/><use href="#r7ad9" transform="matrix(0.1840 0 0 0.1840 942.40 101.00)"/><use href="#r6570" transform="matrix(0.1840 0 0 0.1840 951.60 101.00)"/></g>
<g fill="#c3cbd4"><use href="#r5145" transform="matrix(0.1840 0 0 0.1840 1095.00 101.00)"/><use href="#r7535" transform="matrix(0.1840 0 0 0.1840 1104.20 101.00)"/><use href="#r6869" transform="matrix(0.1840 0 0 0.1840 1113.40 101.00)"/><use href="#r6570" transform="matrix(0.1840 0 0 0.1840 1122.60 101.00)"/></g>
<g fill="#d2dae2"><use href="#r8bf7" transform="matrix(0.1860 0 0 0.1860 930.00 192.00)"/><use href="#r9009" transform="matrix(0.1860 0 0 0.1860 939.30 192.00)"/><use href="#r62e9" transform="matrix(0.1860 0 0 0.1860 948.60 192.00)"/><use href="#r7ad9" transform="matrix(0.1860 0 0 0.1860 957.90 192.00)"/><use href="#r70b9" transform="matrix(0.1860 0 0 0.1860 967.20 192.00)"/><use href="#r7c7b" transform="matrix(0.1860 0 0 0.1860 976.50 192.00)"/><use href="#r578b" transform="matrix(0.1860 0 0 0.1860 985.80 192.00)"/></g>
<g fill="#93a6b8"><use href="#r5145" transform="matrix(0.1860 0 0 0.1860 930.00 217.00)"/><use href="#r7535" transform="matrix(0.1860 0 0 0.1860 939.30 217.00)"/><use href="#r7ad9" transform="matrix(0.1860 0 0 0.1860 948.60 217.00)"/><use href="#r540d" transform="matrix(0.1860 0 0 0.1860 957.90 217.00)"/><use href="#r79f0" transform="matrix(0.1860 0 0 0.1860 967.20 217.00)"/></g>
<g fill="#dce6ee"><use href="#m672a" transform="matrix(0.1920 0 0 0.1920 924.50 248.00)"/><use href="#m6765" transform="matrix(0.1920 0 0 0.1920 934.10 248.00)"/><use href="#m9502" transform="matrix(0.1920 0 0 0.1920 943.70 248.00)"/><use href="#m52a8" transform="matrix(0.1920 0 0 0.1920 953.30 248.00)"/></g>
<g fill="#8097ab"><use href="#r6cb3" transform="matrix(0.1880 0 0 0.1880 924.50 263.50)"/><use href="#r5317" transform="matrix(0.1880 0 0 0.1880 933.90 263.50)"/><use href="#r7701" transform="matrix(0.1880 0 0 0.1880 943.30 263.50)"/><use href="#r90af" transform="matrix(0.1880 0 0 0.1880 952.70 263.50)"/><use href="#r90f8" transform="matrix(0.1880 0 0 0.1880 962.10 263.50)"/><use href="#r5e02" transform="matrix(0.1880 0 0 0.1880 971.50 263.50)"/><use href="#r4e34" transform="matrix(0.1880 0 0 0.1880 980.90 263.50)"/><use href="#r6f33" transform="matrix(0.1880 0 0 0.1880 990.30 263.50)"/><use href="#r53bf" transform="matrix(0.1880 0 0 0.1880 999.70 263.50)"/></g>
<g fill="#d4dbe3"><use href="#m35" transform="matrix(0.1600 0 0 0.1600 1233.44 247.50)"/></g>
<g fill="#d4dbe3"><use href="#m5145" transform="matrix(0.1600 0 0 0.1600 1191.94 247.50)"/><use href="#m7535" transform="matrix(0.1600 0 0 0.1600 1199.94 247.50)"/><use href="#m6869" transform="matrix(0.1600 0 0 0.1600 1207.94 247.50)"/><use href="#m6570" transform="matrix(0.1600 0 0 0.1600 1215.94 247.50)"/><use href="#mff1a" transform="matrix(0.1600 0 0 0.1600 1223.94 247.50)"/></g>
<g fill="#dce6ee"><use href="#m626c" transform="matrix(0.1920 0 0 0.1920 924.50 294.85)"/><use href="#m5dde" transform="matrix(0.1920 0 0 0.1920 934.10 294.85)"/><use href="#m5efa" transform="matrix(0.1920 0 0 0.1920 943.70 294.85)"/><use href="#m7b51" transform="matrix(0.1920 0 0 0.1920 953.30 294.85)"/><use href="#m9662" transform="matrix(0.1920 0 0 0.1920 962.90 294.85)"/></g>
<g fill="#8097ab"><use href="#r626c" transform="matrix(0.1880 0 0 0.1880 924.50 310.35)"/><use href="#r5dde" transform="matrix(0.1880 0 0 0.1880 933.90 310.35)"/></g>
<g fill="#d4dbe3"><use href="#m39" transform="matrix(0.1600 0 0 0.1600 1233.44 294.35)"/></g>
<g fill="#d4dbe3"><use href="#m5145" transform="matrix(0.1600 0 0 0.1600 1191.94 294.35)"/><use href="#m7535" transform="matrix(0.1600 0 0 0.1600 1199.94 294.35)"/><use href="#m6869" transform="matrix(0.1600 0 0 0.1600 1207.94 294.35)"/><use href="#m6570" transform="matrix(0.1600 0 0 0.1600 1215.94 294.35)"/><use href="#mff1a" transform="matrix(0.1600 0 0 0.1600 1223.94 294.35)"/></g>
<g fill="#dce6ee"><use href="#m5e7f" transform="matrix(0.1920 0 0 0.1920 924.50 341.70)"/><use href="#m660c" transform="matrix(0.1920 0 0 0.1920 934.10 341.70)"/><use href="#m73b0" transform="matrix(0.1920 0 0 0.1920 943.70 341.70)"/><use href="#m4ee3" transform="matrix(0.1920 0 0 0.1920 953.30 341.70)"/><use href="#m519c" transform="matrix(0.1920 0 0 0.1920 962.90 341.70)"/><use href="#m4e1a" transform="matrix(0.1920 0 0 0.1920 972.50 341.70)"/><use href="#m56ed" transform="matrix(0.1920 0 0 0.1920 982.10 341.70)"/></g>
<g fill="#8097ab"><use href="#r6c5f" transform="matrix(0.1880 0 0 0.1880 924.50 357.20)"/><use href="#r897f" transform="matrix(0.1880 0 0 0.1880 933.90 357.20)"/></g>
<g fill="#d4dbe3"><use href="#m31" transform="matrix(0.1600 0 0 0.1600 1228.88 341.20)"/><use href="#m34" transform="matrix(0.1600 0 0 0.1600 1233.44 341.20)"/></g>
<g fill="#d4dbe3"><use href="#m5145" transform="matrix(0.1600 0 0 0.1600 1187.38 341.20)"/><use href="#m7535" transform="matrix(0.1600 0 0 0.1600 1195.38 341.20)"/><use href="#m6869" transform="matrix(0.1600 0 0 0.1600 1203.38 341.20)"/><use href="#m6570" transform="matrix(0.1600 0 0 0.1600 1211.38 341.20)"/><use href="#mff1a" transform="matrix(0.1600 0 0 0.1600 1219.38 341.20)"/></g>
<g fill="#dce6ee"><use href="#m7a0e" transform="matrix(0.1920 0 0 0.1920 924.50 388.55)"/><use href="#m52a1" transform="matrix(0.1920 0 0 0.1920 934.10 388.55)"/><use href="#m5c40" transform="matrix(0.1920 0 0 0.1920 943.70 388.55)"/><use href="#m5bb6" transform="matrix(0.1920 0 0 0.1920 953.30 388.55)"/><use href="#m5c5e" transform="matrix(0.1920 0 0 0.1920 962.90 388.55)"/><use href="#m9662" transform="matrix(0.1920 0 0 0.1920 972.50 388.55)"/></g>
<g fill="#8097ab"><use href="#r6e56" transform="matrix(0.1880 0 0 0.1880 924.50 404.05)"/><use href="#r5317" transform="matrix(0.1880 0 0 0.1880 933.90 404.05)"/><use href="#r7701" transform="matrix(0.1880 0 0 0.1880 943.30 404.05)"/><use href="#r5e94" transform="matrix(0.1880 0 0 0.1880 952.70 404.05)"/><use href="#r57ce" transform="matrix(0.1880 0 0 0.1880 962.10 404.05)"/><use href="#r5e02" transform="matrix(0.1880 0 0 0.1880 971.50 404.05)"/><use href="#r56fd" transform="matrix(0.1880 0 0 0.1880 980.90 404.05)"/><use href="#r5bb6" transform="matrix(0.1880 0 0 0.1880 990.30 404.05)"/><use href="#r7a0e" transform="matrix(0.1880 0 0 0.1880 999.70 404.05)"/><use href="#r52a1" transform="matrix(0.1880 0 0 0.1880 1009.10 404.05)"/><use href="#r5c40" transform="matrix(0.1880 0 0 0.1880 1018.50 404.05)"/></g>
<g fill="#d4dbe3"><use href="#m38" transform="matrix(0.1600 0 0 0.1600 1233.44 388.05)"/></g>
<g fill="#d4dbe3"><use href="#m5145" transform="matrix(0.1600 0 0 0.1600 1191.94 388.05)"/><use href="#m7535" transform="matrix(0.1600 0 0 0.1600 1199.94 388.05)"/><use href="#m6869" transform="matrix(0.1600 0 0 0.1600 1207.94 388.05)"/><use href="#m6570" transform="matrix(0.1600 0 0 0.1600 1215.94 388.05)"/><use href="#mff1a" transform="matrix(0.1600 0 0 0.1600 1223.94 388.05)"/></g>
<g fill="#dce6ee"><use href="#m5b8f" transform="matrix(0.1920 0 0 0.1920 924.50 435.40)"/><use href="#m56fe" transform="matrix(0.1920 0 0 0.1920 934.10 435.40)"/><use href="#m8def" transform="matrix(0.1920 0 0 0.1920 943.70 435.40)"/><use href="#m5382" transform="matrix(0.1920 0 0 0.1920 953.30 435.40)"/><use href="#m533a" transform="matrix(0.1920 0 0 0.1920 962.90 435.40)"/></g>
<g fill="#8097ab"><use href="#r6c5f" transform="matrix(0.1880 0 0 0.1880 924.50 450.90)"/><use href="#r9634" transform="matrix(0.1880 0 0 0.1880 933.90 450.90)"/><use href="#r5e02" transform="matrix(0.1880 0 0 0.1880 943.30 450.90)"/><use href="#r5357" transform="matrix(0.1880 0 0 0.1880 952.70 450.90)"/><use href="#r95f8" transform="matrix(0.1880 0 0 0.1880 962.10 450.90)"/><use href="#r9547" transform="matrix(0.1880 0 0 0.1880 971.50 450.90)"/><use href="#r4e1c" transform="matrix(0.1880 0 0 0.1880 980.90 450.90)"/><use href="#r76df" transform="matrix(0.1880 0 0 0.1880 990.30 450.90)"/><use href="#r56ed" transform="matrix(0.1880 0 0 0.1880 999.70 450.90)"/><use href="#r533a" transform="matrix(0.1880 0 0 0.1880 1009.10 450.90)"/><use href="#r5b8f" transform="matrix(0.1880 0 0 0.1880 1018.50 450.90)"/><use href="#r56fe" transform="matrix(0.1880 0 0 0.1880 1027.90 450.90)"/><use href="#r8def" transform="matrix(0.1880 0 0 0.1880 1037.30 450.90)"/><use href="#r33" transform="matrix(0.1880 0 0 0.1880 1046.70 450.90)"/><use href="#r31" transform="matrix(0.1880 0 0 0.1880 1051.92 450.90)"/><use href="#r53f7" transform="matrix(0.1880 0 0 0.1880 1057.13 450.90)"/></g>
<g fill="#d4dbe3"><use href="#m32" transform="matrix(0.1600 0 0 0.1600 1228.88 434.90)"/><use href="#m39" transform="matrix(0.1600 0 0 0.1600 1233.44 434.90)"/></g>
<g fill="#d4dbe3"><use href="#m5145" transform="matrix(0.1600 0 0 0.1600 1187.38 434.90)"/><use href="#m7535" transform="matrix(0.1600 0 0 0.1600 1195.38 434.90)"/><use href="#m6869" transform="matrix(0.1600 0 0 0.1600 1203.38 434.90)"/><use href="#m6570" transform="matrix(0.1600 0 0 0.1600 1211.38 434.90)"/><use href="#mff1a" transform="matrix(0.1600 0 0 0.1600 1219.38 434.90)"/></g>
<g fill="#dce6ee"><use href="#m6c5f" transform="matrix(0.1920 0 0 0.1920 924.50 482.25)"/><use href="#m82cf" transform="matrix(0.1920 0 0 0.1920 934.10 482.25)"/><use href="#m7701" transform="matrix(0.1920 0 0 0.1920 943.70 482.25)"/><use href="#m68c0" transform="matrix(0.1920 0 0 0.1920 953.30 482.25)"/><use href="#m5bdf" transform="matrix(0.1920 0 0 0.1920 962.90 482.25)"/><use href="#m9662" transform="matrix(0.1920 0 0 0.1920 972.50 482.25)"/></g>
<g fill="#8097ab"><use href="#r5357" transform="matrix(0.1880 0 0 0.1880 924.50 497.75)"/><use href="#r4eac" transform="matrix(0.1880 0 0 0.1880 933.90 497.75)"/></g>
<g fill="#d4dbe3"><use href="#m38" transform="matrix(0.1600 0 0 0.1600 1233.44 481.75)"/></g>
<g fill="#d4dbe3"><use href="#m5145" transform="matrix(0.1600 0 0 0.1600 1191.94 481.75)"/><use href="#m7535" transform="matrix(0.1600 0 0 0.1600 1199.94 481.75)"/><use href="#m6869" transform="matrix(0.1600 0 0 0.1600 1207.94 481.75)"/><use href="#m6570" transform="matrix(0.1600 0 0 0.1600 1215.94 481.75)"/><use href="#mff1a" transform="matrix(0.1600 0 0 0.1600 1223.94 481.75)"/></g>
<g fill="#dce6ee"><use href="#m5e0c" transform="matrix(0.1920 0 0 0.1920 924.50 529.10)"/><use href="#m671b" transform="matrix(0.1920 0 0 0.1920 934.10 529.10)"/><use href="#m57ce" transform="matrix(0.1920 0 0 0.1920 943.70 529.10)"/></g>
<g fill="#8097ab"><use href="#r5e7f" transform="matrix(0.1880 0 0 0.1880 924.50 544.60)"/><use href="#r897f" transform="matrix(0.1880 0 0 0.1880 933.90 544.60)"/></g>
<g fill="#d4dbe3"><use href="#m34" transform="matrix(0.1600 0 0 0.1600 1228.88 528.60)"/><use href="#m30" transform="matrix(0.1600 0 0 0.1600 1233.44 528.60)"/></g>
<g fill="#d4dbe3"><use href="#m5145" transform="matrix(0.1600 0 0 0.1600 1187.38 528.60)"/><use href="#m7535" transform="matrix(0.1600 0 0 0.1600 1195.38 528.60)"/><use href="#m6869" transform="matrix(0.1600 0 0 0.1600 1203.38 528.60)"/><use href="#m6570" transform="matrix(0.1600 0 0 0.1600 1211.38 528.60)"/><use href="#mff1a" transform="matrix(0.1600 0 0 0.1600 1219.38 528.60)"/></g>
<g fill="#dce6ee"><use href="#m5b89" transform="matrix(0.1920 0 0 0.1920 924.50 575.95)"/><use href="#m5fbd" transform="matrix(0.1920 0 0 0.1920 934.10 575.95)"/><use href="#m7535" transform="matrix(0.1920 0 0 0.1920 943.70 575.95)"/><use href="#m7f06" transform="matrix(0.1920 0 0 0.1920 953.30 575.95)"/><use href="#m80a1" transform="matrix(0.1920 0 0 0.1920 962.90 575.95)"/><use href="#m4efd" transform="matrix(0.1920 0 0 0.1920 972.50 575.95)"/><use href="#m6709" transform="matrix(0.1920 0 0 0.1920 982.10 575.95)"/><use href="#m9650" transform="matrix(0.1920 0 0 0.1920 991.70 575.95)"/><use href="#m516c" transform="matrix(0.1920 0 0 0.1920 1001.30 575.95)"/><use href="#m53f8" transform="matrix(0.1920 0 0 0.1920 1010.90 575.95)"/></g>
<g fill="#8097ab"><use href="#r5b89" transform="matrix(0.1880 0 0 0.1880 924.50 591.45)"/><use href="#r5fbd" transform="matrix(0.1880 0 0 0.1880 933.90 591.45)"/></g>
<g fill="#d4dbe3"><use href="#m32" transform="matrix(0.1600 0 0 0.1600 1233.44 575.45)"/></g>
<g fill="#d4dbe3"><use href="#m5145" transform="matrix(0.1600 0 0 0.1600 1191.94 575.45)"/><use href="#m7535" transform="matrix(0.1600 0 0 0.1600 1199.94 575.45)"/><use href="#m6869" transform="matrix(0.1600 0 0 0.1600 1207.94 575.45)"/><use href="#m6570" transform="matrix(0.1600 0 0 0.1600 1215.94 575.45)"/><use href="#mff1a" transform="matrix(0.1600 0 0 0.1600 1223.94 575.45)"/></g>
</svg>
</body></html>
